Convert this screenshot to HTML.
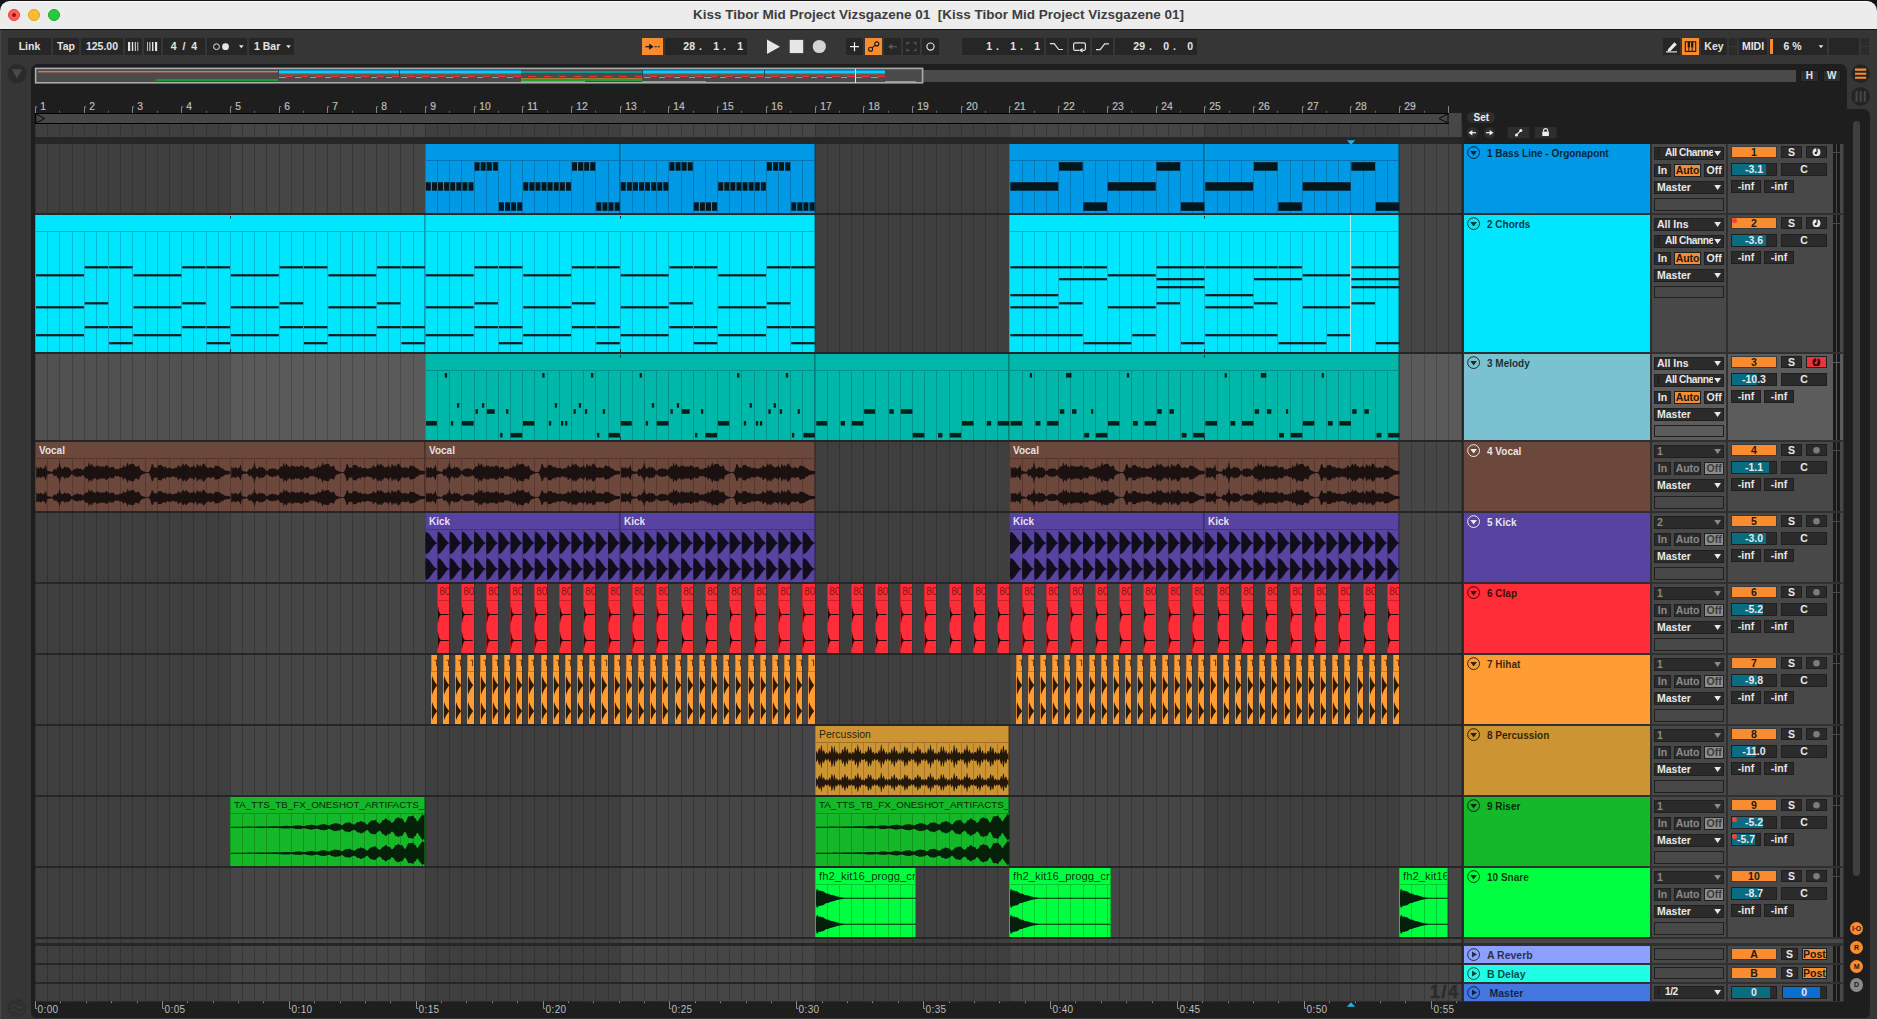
<!DOCTYPE html>
<html><head><meta charset="utf-8"><title>Ableton Live</title>
<style>
html,body{margin:0;padding:0}
body{width:1877px;height:1019px;background:#363636;position:relative;overflow:hidden;
 font-family:"Liberation Sans",sans-serif;font-size:10.5px;color:#e4e4e4}
div{position:absolute;box-sizing:border-box;white-space:nowrap;overflow:hidden}
svg{position:absolute;overflow:visible}
span{position:absolute;white-space:nowrap}
.f{background:#262626;text-align:center;line-height:17px;font-weight:bold;font-size:10.5px;color:#e4e4e4;height:17px;top:38px}
.o{background:#fa8c30;color:#1a1a1a}
.b{background:#2b2b2b;border:1px solid #1f1f1f;font-weight:bold;font-size:10.5px;line-height:10.5px;color:#e8e8e8;text-align:center}
.bd{color:#8a8a8a}
.tn{font-weight:bold;font-size:10px;line-height:12px;overflow:visible}
.cn{font-size:10.5px;line-height:14px;overflow:hidden}
.rn{font-size:10.5px;color:#bdbdbd;line-height:11px;overflow:visible}
</style></head><body>

<div style="left:0px;top:0px;width:1877px;height:12px;background:#0b131a;"></div>
<div style="left:0px;top:0px;width:1877px;height:30px;background:#161616;border-radius:10px 10px 0 0;"></div>
<div style="left:0px;top:0.7px;width:1877px;height:28.3px;background:#ececec;border-radius:10px 10px 0 0;border-top:1px solid #fbfbfb;"></div>
<div style="left:7.8px;top:8.8px;width:12.4px;height:12.4px;background:#fe5f57;border-radius:50%;border:0.5px solid #e0443e;"></div>
<div style="left:27.8px;top:8.8px;width:12.4px;height:12.4px;background:#febc2e;border-radius:50%;border:0.5px solid #dea123;"></div>
<div style="left:47.8px;top:8.8px;width:12.4px;height:12.4px;background:#28c840;border-radius:50%;border:0.5px solid #1aab29;"></div>
<div style="left:12px;top:13px;width:4px;height:4px;background:#8c1a10;border-radius:50%;"></div>
<div style="left:0;top:0;width:1877px;height:29px;line-height:30px;text-align:center;font-size:13.5px;font-weight:bold;color:#3d3d3d;white-space:pre">Kiss Tibor Mid Project Vizsgazene 01  [Kiss Tibor Mid Project Vizsgazene 01]</div>
<div class="f" style="left:8px;width:43px;">Link</div>
<div class="f" style="left:53px;width:26px;">Tap</div>
<div class="f" style="left:81px;width:42px;">125.00</div>
<div class="f" style="left:125px;width:17px;"><svg width="17" height="17" viewBox="0 0 17 17" style="left:0;top:0"><rect x="3" y="4" width="2.2" height="9" fill="#e4e4e4"/><rect x="6.800000000000001" y="4" width="1.4" height="9" fill="#e4e4e4"/><rect x="9.8" y="4" width="1" height="9" fill="#e4e4e4"/><rect x="12.4" y="4" width="0.8" height="9" fill="#e4e4e4"/></svg></div>
<div class="f" style="left:144px;width:17px;"><svg width="17" height="17" viewBox="0 0 17 17" style="left:0;top:0"><rect x="3" y="4" width="0.8" height="9" fill="#e4e4e4"/><rect x="5.4" y="4" width="1" height="9" fill="#e4e4e4"/><rect x="8.0" y="4" width="1.4" height="9" fill="#e4e4e4"/><rect x="11.0" y="4" width="2.2" height="9" fill="#e4e4e4"/></svg></div>
<div class="f" style="left:163px;width:42px;">4&nbsp; / &nbsp;4</div>
<div class="f" style="left:207px;width:40px;"><svg width="40" height="17" style="left:0;top:0"><circle cx="9.5" cy="8.7" r="2.9" fill="none" stroke="#e4e4e4" stroke-width="1"/><circle cx="18.5" cy="8.7" r="3.4" fill="#e4e4e4"/><path d="M32 7.3h4.6l-2.3 3z" fill="#e4e4e4"/></svg></div>
<div class="f" style="left:249px;width:45px;"><span style="left:5px;top:0">1 Bar</span><svg width="45" height="17" style="left:0;top:0"><path d="M37.2 7.3h4.6l-2.3 3z" fill="#e4e4e4"/></svg></div>
<div class="f o" style="left:642px;width:21px;"><svg width="21" height="17" style="left:0;top:0"><path d="M3.5 8.7h6.5" stroke="#1a1a1a" stroke-width="1.3"/><path d="M7.2 5.6l4.4 3.1-4.4 3.1z" fill="#1a1a1a"/><path d="M12.6 8.7h2.2M15.8 8.7h2" stroke="#1a1a1a" stroke-width="1.1"/></svg></div>
<div class="f" style="left:665px;width:82px;"><span style="right:52px;top:0">28</span><span style="right:28px;top:0">1</span><span style="right:4px;top:0">1</span><span style="right:45px;top:0">.</span><span style="right:21px;top:0">.</span></div>
<svg width="80" height="20" style="left:760px;top:36px"><path d="M7 3.4v14.6l13-7.3z" fill="#e6e6e6"/><rect x="29.7" y="3.9" width="13.5" height="13.2" fill="#e6e6e6"/><circle cx="59.3" cy="10.5" r="6.6" fill="#d4d4d4"/></svg>
<div class="f" style="left:846px;width:17px;"><svg width="17" height="17" style="left:0;top:0"><path d="M8.5 4.2v9M4 8.7h9" stroke="#f0f0f0" stroke-width="1.2"/></svg></div>
<div class="f o" style="left:865px;width:17px;"><svg width="17" height="17" style="left:0;top:0"><circle cx="5.6" cy="11.2" r="2" fill="none" stroke="#1a1a1a" stroke-width="1.1"/><circle cx="11.8" cy="5.9" r="2" fill="none" stroke="#1a1a1a" stroke-width="1.1"/><path d="M7.1 9.9l3.2-2.7" stroke="#1a1a1a" stroke-width="1.1"/></svg></div>
<div class="f" style="left:884px;width:17px;"><svg width="17" height="17" style="left:0;top:0"><path d="M5 8.7h8" stroke="#5a5a5a" stroke-width="1.2"/><path d="M8.2 5.8L4.2 8.7l4 2.9z" fill="#5a5a5a"/></svg></div>
<div class="f" style="left:903px;width:17px;"><svg width="17" height="17" style="left:0;top:0"><path d="M4 7V4.6h2.6M10.6 4.6H13V7M13 10.4v2.4h-2.4M6.6 12.8H4v-2.4" fill="none" stroke="#5a5a5a" stroke-width="1.1"/></svg></div>
<div class="f" style="left:922px;width:17px;"><svg width="17" height="17" style="left:0;top:0"><circle cx="8.5" cy="8.6" r="3.6" fill="none" stroke="#e4e4e4" stroke-width="1.2"/></svg></div>
<div class="f" style="left:962px;width:82px;"><span style="right:52px;top:0">1</span><span style="right:28px;top:0">1</span><span style="right:4px;top:0">1</span><span style="right:45px;top:0">.</span><span style="right:21px;top:0">.</span></div>
<div class="f" style="left:1046px;width:21px;"><svg width="21" height="17" style="left:0;top:0"><path d="M4 5.7h4.2l4.5 5.8h4.2" fill="none" stroke="#e4e4e4" stroke-width="1.2"/></svg></div>
<div class="f" style="left:1069px;width:21px;"><svg width="21" height="17" style="left:0;top:0"><path d="M10 12.3H6.2a1.6 1.6 0 0 1-1.6-1.6V6.4a1.6 1.6 0 0 1 1.6-1.6h8.6a1.6 1.6 0 0 1 1.6 1.6v4.3a1.6 1.6 0 0 1-1.6 1.6h-1" fill="none" stroke="#e4e4e4" stroke-width="1.2"/><path d="M13.6 10v4.6l-3.8-2.3z" fill="#e4e4e4"/></svg></div>
<div class="f" style="left:1092px;width:21px;"><svg width="21" height="17" style="left:0;top:0"><path d="M4 11.7h4.2l4.5-5.8h4.2" fill="none" stroke="#e4e4e4" stroke-width="1.2"/></svg></div>
<div class="f" style="left:1115px;width:82px;"><span style="right:52px;top:0">29</span><span style="right:28px;top:0">0</span><span style="right:4px;top:0">0</span><span style="right:45px;top:0">.</span><span style="right:21px;top:0">.</span></div>
<div class="f" style="left:1663px;width:17px;"><svg width="17" height="17" style="left:0;top:0"><path d="M5.2 10.9l6.2-6.6 2.4 2.2-6.3 6.5-3 .8z" fill="#ececec"/><path d="M3 13.9h11" stroke="#ececec" stroke-width="1.1"/></svg></div>
<div class="f o" style="left:1682px;width:17px;"><svg width="17" height="17" style="left:0;top:0"><rect x="3.3" y="3.8" width="10.4" height="9.6" fill="none" stroke="#1a1a1a" stroke-width="1.1"/><path d="M6.8 3.8v9.6M10.2 3.8v9.6" stroke="#1a1a1a" stroke-width="0.9"/><rect x="5.7" y="3.8" width="2.2" height="5.6" fill="#1a1a1a"/><rect x="9.1" y="3.8" width="2.2" height="5.6" fill="#1a1a1a"/></svg></div>
<div class="f" style="left:1701px;width:26px;">Key</div>
<div style="left:1729px;top:38px;width:8px;height:8px;background:#2b2b2b;"></div>
<div style="left:1729px;top:47px;width:8px;height:8px;background:#2b2b2b;"></div>
<div class="f" style="left:1739px;width:28px;">MIDI</div>
<div class="f" style="left:1769px;width:58px;"><div style="left:1px;top:1px;width:3px;height:15px;background:#fa8c30"></div><span style="left:14.5px;top:0">6 %</span><svg width="58" height="17" style="left:0;top:0"><path d="M49.7 7.3h4.6l-2.3 3z" fill="#e4e4e4"/></svg></div>
<div class="f" style="left:1829px;width:30px;"></div>
<div style="left:1861px;top:38px;width:8px;height:8px;background:#2b2b2b;"></div>
<div style="left:1861px;top:47px;width:8px;height:8px;background:#2b2b2b;"></div>
<div style="left:31px;top:64px;width:1816px;height:953.6px;background:#1e1e1e;border-radius:7px 7px 5px 5px;"></div>
<div style="left:60px;top:109px;width:1810px;height:908.6px;background:#1e1e1e;border-radius:7px 7px 5px 5px;"></div>
<svg width="22" height="22" style="left:6px;top:63px"><circle cx="11" cy="10.6" r="9.6" fill="#2b2b2b"/><path d="M5.9 6.3h10.2l-5.1 9.2z" fill="#4a4a4a"/></svg>
<svg width="22" height="22" style="left:6.4px;top:997.3px"><circle cx="11" cy="11" r="9.5" fill="#303030"/><path d="M5.4 9.4q2.8-3 5.6 0t5.6 0M5.4 14q2.8-3 5.6 0t5.6 0" fill="none" stroke="#3e3e3e" stroke-width="1.1"/></svg>
<div style="left:0px;top:30px;width:1px;height:989px;background:#484848;"></div>
<svg width="22" height="48" style="left:1850px;top:62px"><circle cx="10.6" cy="11.6" r="9.4" fill="#242424"/><path d="M5 7.6h11.2M5 11.7h11.2M5 15.8h11.2" stroke="#fa8c30" stroke-width="2.1"/><circle cx="10.6" cy="34.3" r="9.4" fill="#242424"/><path d="M6.6 29v10.8M10.7 29v10.8M14.8 29v10.8" stroke="#444" stroke-width="2.2"/></svg>
<div style="left:35px;top:70.3px;width:1761px;height:11.7px;background:#4a4a4a;"></div>
<div style="left:1800px;top:69.8px;width:18.5px;height:12px;background:#2e2e2e;border:1px solid #1a1a1a;text-align:center;font-weight:bold;font-size:10px;line-height:10.5px;color:#e4e4e4">H</div>
<div style="left:1822.5px;top:69.8px;width:18.5px;height:12px;background:#2e2e2e;border:1px solid #1a1a1a;text-align:center;font-weight:bold;font-size:10px;line-height:10.5px;color:#e4e4e4">W</div>
<svg width="890" height="17" style="left:34px;top:67px" shape-rendering="crispEdges"><rect x="1.6" y="1.4" width="887" height="14.4" fill="#4b4b4b" stroke="#ababab" stroke-width="1.6" shape-rendering="auto"/><rect x="4.0" y="3.5" width="239.8" height="1.3" fill="#12c4dc"/><rect x="4.0" y="5.1" width="239.8" height="1" fill="#8a5a4a"/><rect x="122.4" y="12.3" width="121.4" height="1.2" fill="#1a9a2c"/><rect x="243.9" y="2.5" width="242.9" height="1.6" fill="#0a8fd6"/><rect x="243.9" y="3.9" width="242.9" height="2.6" fill="#10cfe8"/><rect x="243.9" y="6.3" width="242.9" height="0.9" fill="#0aa89c"/><rect x="243.9" y="7.2" width="242.9" height="0.8" fill="#7a5246"/><rect x="243.9" y="7.9" width="242.9" height="1.0" fill="#5c46a8"/><rect x="608.2" y="2.5" width="242.9" height="1.6" fill="#0a8fd6"/><rect x="608.2" y="3.9" width="242.9" height="2.6" fill="#10cfe8"/><rect x="608.2" y="6.3" width="242.9" height="0.9" fill="#0aa89c"/><rect x="608.2" y="7.2" width="242.9" height="0.8" fill="#7a5246"/><rect x="608.2" y="7.9" width="242.9" height="1.0" fill="#5c46a8"/><rect x="486.8" y="3.5" width="121.4" height="2.4" fill="#0a9a8e"/><rect x="486.8" y="10.5" width="121.4" height="1.8" fill="#9a8230"/><rect x="486.8" y="12.2" width="121.4" height="1.3" fill="#2a9a30"/><rect x="486.8" y="13.5" width="63.8" height="1.3" fill="#10e848"/><rect x="608.2" y="13.5" width="63.8" height="1.3" fill="#10e848"/><rect x="851.1" y="13.5" width="30.4" height="1.3" fill="#10e848"/><rect x="251.5" y="8.7" width="7.6" height="1.2" fill="#f0323a"/><rect x="266.6" y="8.7" width="7.6" height="1.2" fill="#f0323a"/><rect x="281.8" y="8.7" width="7.6" height="1.2" fill="#f0323a"/><rect x="297.0" y="8.7" width="7.6" height="1.2" fill="#f0323a"/><rect x="312.2" y="8.7" width="7.6" height="1.2" fill="#f0323a"/><rect x="327.4" y="8.7" width="7.6" height="1.2" fill="#f0323a"/><rect x="342.6" y="8.7" width="7.6" height="1.2" fill="#f0323a"/><rect x="357.7" y="8.7" width="7.6" height="1.2" fill="#f0323a"/><rect x="372.9" y="8.7" width="7.6" height="1.2" fill="#f0323a"/><rect x="388.1" y="8.7" width="7.6" height="1.2" fill="#f0323a"/><rect x="403.3" y="8.7" width="7.6" height="1.2" fill="#f0323a"/><rect x="418.4" y="8.7" width="7.6" height="1.2" fill="#f0323a"/><rect x="433.6" y="8.7" width="7.6" height="1.2" fill="#f0323a"/><rect x="448.8" y="8.7" width="7.6" height="1.2" fill="#f0323a"/><rect x="464.0" y="8.7" width="7.6" height="1.2" fill="#f0323a"/><rect x="479.2" y="8.7" width="7.6" height="1.2" fill="#f0323a"/><rect x="494.3" y="8.7" width="7.6" height="1.2" fill="#f0323a"/><rect x="509.5" y="8.7" width="7.6" height="1.2" fill="#f0323a"/><rect x="524.7" y="8.7" width="7.6" height="1.2" fill="#f0323a"/><rect x="539.9" y="8.7" width="7.6" height="1.2" fill="#f0323a"/><rect x="555.1" y="8.7" width="7.6" height="1.2" fill="#f0323a"/><rect x="570.2" y="8.7" width="7.6" height="1.2" fill="#f0323a"/><rect x="585.4" y="8.7" width="7.6" height="1.2" fill="#f0323a"/><rect x="600.6" y="8.7" width="7.6" height="1.2" fill="#f0323a"/><rect x="615.8" y="8.7" width="7.6" height="1.2" fill="#f0323a"/><rect x="631.0" y="8.7" width="7.6" height="1.2" fill="#f0323a"/><rect x="646.1" y="8.7" width="7.6" height="1.2" fill="#f0323a"/><rect x="661.3" y="8.7" width="7.6" height="1.2" fill="#f0323a"/><rect x="676.5" y="8.7" width="7.6" height="1.2" fill="#f0323a"/><rect x="691.7" y="8.7" width="7.6" height="1.2" fill="#f0323a"/><rect x="706.9" y="8.7" width="7.6" height="1.2" fill="#f0323a"/><rect x="722.0" y="8.7" width="7.6" height="1.2" fill="#f0323a"/><rect x="737.2" y="8.7" width="7.6" height="1.2" fill="#f0323a"/><rect x="752.4" y="8.7" width="7.6" height="1.2" fill="#f0323a"/><rect x="767.6" y="8.7" width="7.6" height="1.2" fill="#f0323a"/><rect x="782.8" y="8.7" width="7.6" height="1.2" fill="#f0323a"/><rect x="797.9" y="8.7" width="7.6" height="1.2" fill="#f0323a"/><rect x="813.1" y="8.7" width="7.6" height="1.2" fill="#f0323a"/><rect x="828.3" y="8.7" width="7.6" height="1.2" fill="#f0323a"/><rect x="843.5" y="8.7" width="7.6" height="1.2" fill="#f0323a"/><rect x="245.4" y="10.1" width="6.1" height="1.2" fill="#e89030"/><rect x="260.6" y="10.1" width="6.1" height="1.2" fill="#e89030"/><rect x="275.8" y="10.1" width="6.1" height="1.2" fill="#e89030"/><rect x="290.9" y="10.1" width="6.1" height="1.2" fill="#e89030"/><rect x="306.1" y="10.1" width="6.1" height="1.2" fill="#e89030"/><rect x="321.3" y="10.1" width="6.1" height="1.2" fill="#e89030"/><rect x="336.5" y="10.1" width="6.1" height="1.2" fill="#e89030"/><rect x="351.7" y="10.1" width="6.1" height="1.2" fill="#e89030"/><rect x="366.8" y="10.1" width="6.1" height="1.2" fill="#e89030"/><rect x="382.0" y="10.1" width="6.1" height="1.2" fill="#e89030"/><rect x="397.2" y="10.1" width="6.1" height="1.2" fill="#e89030"/><rect x="412.4" y="10.1" width="6.1" height="1.2" fill="#e89030"/><rect x="427.6" y="10.1" width="6.1" height="1.2" fill="#e89030"/><rect x="442.7" y="10.1" width="6.1" height="1.2" fill="#e89030"/><rect x="457.9" y="10.1" width="6.1" height="1.2" fill="#e89030"/><rect x="473.1" y="10.1" width="6.1" height="1.2" fill="#e89030"/><rect x="609.7" y="10.1" width="6.1" height="1.2" fill="#e89030"/><rect x="624.9" y="10.1" width="6.1" height="1.2" fill="#e89030"/><rect x="640.1" y="10.1" width="6.1" height="1.2" fill="#e89030"/><rect x="655.3" y="10.1" width="6.1" height="1.2" fill="#e89030"/><rect x="670.4" y="10.1" width="6.1" height="1.2" fill="#e89030"/><rect x="685.6" y="10.1" width="6.1" height="1.2" fill="#e89030"/><rect x="700.8" y="10.1" width="6.1" height="1.2" fill="#e89030"/><rect x="716.0" y="10.1" width="6.1" height="1.2" fill="#e89030"/><rect x="731.2" y="10.1" width="6.1" height="1.2" fill="#e89030"/><rect x="746.3" y="10.1" width="6.1" height="1.2" fill="#e89030"/><rect x="761.5" y="10.1" width="6.1" height="1.2" fill="#e89030"/><rect x="776.7" y="10.1" width="6.1" height="1.2" fill="#e89030"/><rect x="791.9" y="10.1" width="6.1" height="1.2" fill="#e89030"/><rect x="807.1" y="10.1" width="6.1" height="1.2" fill="#e89030"/><rect x="822.2" y="10.1" width="6.1" height="1.2" fill="#e89030"/><rect x="837.4" y="10.1" width="6.1" height="1.2" fill="#e89030"/><rect x="243.9" y="2.5" width="1" height="6" fill="#1a4a60"/><rect x="365.3" y="2.5" width="1" height="6" fill="#1a4a60"/><rect x="608.2" y="2.5" width="1" height="6" fill="#1a4a60"/><rect x="729.6" y="2.5" width="1" height="6" fill="#1a4a60"/><rect x="820.7" y="2" width="1" height="13.5" fill="#e8e8e8"/></svg>
<svg width="1420" height="14" style="left:35px;top:100px"><path d="M0.5 13V6.7h1.7" fill="none" stroke="#858585" stroke-width="1"/><rect x="24" y="11.2" width="1" height="1.3" fill="#858585"/><path d="M49.5 13V6.7h1.7" fill="none" stroke="#858585" stroke-width="1"/><rect x="73" y="11.2" width="1" height="1.3" fill="#858585"/><path d="M97.5 13V6.7h1.7" fill="none" stroke="#858585" stroke-width="1"/><rect x="122" y="11.2" width="1" height="1.3" fill="#858585"/><path d="M146.5 13V6.7h1.7" fill="none" stroke="#858585" stroke-width="1"/><rect x="171" y="11.2" width="1" height="1.3" fill="#858585"/><path d="M195.5 13V6.7h1.7" fill="none" stroke="#858585" stroke-width="1"/><rect x="219" y="11.2" width="1" height="1.3" fill="#858585"/><path d="M244.5 13V6.7h1.7" fill="none" stroke="#858585" stroke-width="1"/><rect x="268" y="11.2" width="1" height="1.3" fill="#858585"/><path d="M292.5 13V6.7h1.7" fill="none" stroke="#858585" stroke-width="1"/><rect x="317" y="11.2" width="1" height="1.3" fill="#858585"/><path d="M341.5 13V6.7h1.7" fill="none" stroke="#858585" stroke-width="1"/><rect x="365" y="11.2" width="1" height="1.3" fill="#858585"/><path d="M390.5 13V6.7h1.7" fill="none" stroke="#858585" stroke-width="1"/><rect x="414" y="11.2" width="1" height="1.3" fill="#858585"/><path d="M439.5 13V6.7h1.7" fill="none" stroke="#858585" stroke-width="1"/><rect x="463" y="11.2" width="1" height="1.3" fill="#858585"/><path d="M487.5 13V6.7h1.7" fill="none" stroke="#858585" stroke-width="1"/><rect x="512" y="11.2" width="1" height="1.3" fill="#858585"/><path d="M536.5 13V6.7h1.7" fill="none" stroke="#858585" stroke-width="1"/><rect x="560" y="11.2" width="1" height="1.3" fill="#858585"/><path d="M585.5 13V6.7h1.7" fill="none" stroke="#858585" stroke-width="1"/><rect x="609" y="11.2" width="1" height="1.3" fill="#858585"/><path d="M633.5 13V6.7h1.7" fill="none" stroke="#858585" stroke-width="1"/><rect x="658" y="11.2" width="1" height="1.3" fill="#858585"/><path d="M682.5 13V6.7h1.7" fill="none" stroke="#858585" stroke-width="1"/><rect x="706" y="11.2" width="1" height="1.3" fill="#858585"/><path d="M731.5 13V6.7h1.7" fill="none" stroke="#858585" stroke-width="1"/><rect x="755" y="11.2" width="1" height="1.3" fill="#858585"/><path d="M780.5 13V6.7h1.7" fill="none" stroke="#858585" stroke-width="1"/><rect x="804" y="11.2" width="1" height="1.3" fill="#858585"/><path d="M828.5 13V6.7h1.7" fill="none" stroke="#858585" stroke-width="1"/><rect x="853" y="11.2" width="1" height="1.3" fill="#858585"/><path d="M877.5 13V6.7h1.7" fill="none" stroke="#858585" stroke-width="1"/><rect x="901" y="11.2" width="1" height="1.3" fill="#858585"/><path d="M926.5 13V6.7h1.7" fill="none" stroke="#858585" stroke-width="1"/><rect x="950" y="11.2" width="1" height="1.3" fill="#858585"/><path d="M974.5 13V6.7h1.7" fill="none" stroke="#858585" stroke-width="1"/><rect x="999" y="11.2" width="1" height="1.3" fill="#858585"/><path d="M1023.5 13V6.7h1.7" fill="none" stroke="#858585" stroke-width="1"/><rect x="1048" y="11.2" width="1" height="1.3" fill="#858585"/><path d="M1072.5 13V6.7h1.7" fill="none" stroke="#858585" stroke-width="1"/><rect x="1096" y="11.2" width="1" height="1.3" fill="#858585"/><path d="M1121.5 13V6.7h1.7" fill="none" stroke="#858585" stroke-width="1"/><rect x="1145" y="11.2" width="1" height="1.3" fill="#858585"/><path d="M1169.5 13V6.7h1.7" fill="none" stroke="#858585" stroke-width="1"/><rect x="1194" y="11.2" width="1" height="1.3" fill="#858585"/><path d="M1218.5 13V6.7h1.7" fill="none" stroke="#858585" stroke-width="1"/><rect x="1242" y="11.2" width="1" height="1.3" fill="#858585"/><path d="M1267.5 13V6.7h1.7" fill="none" stroke="#858585" stroke-width="1"/><rect x="1291" y="11.2" width="1" height="1.3" fill="#858585"/><path d="M1315.5 13V6.7h1.7" fill="none" stroke="#858585" stroke-width="1"/><rect x="1340" y="11.2" width="1" height="1.3" fill="#858585"/><path d="M1364.5 13V6.7h1.7" fill="none" stroke="#858585" stroke-width="1"/><rect x="1389" y="11.2" width="1" height="1.3" fill="#858585"/><rect x="1413" y="6" width="1" height="7" fill="#858585"/></svg>
<span class="rn" style="left:40.2px;top:101.4px;font-size:10.3px;-webkit-text-stroke:0.2px #bdbdbd">1</span>
<span class="rn" style="left:89.2px;top:101.4px;font-size:10.3px;-webkit-text-stroke:0.2px #bdbdbd">2</span>
<span class="rn" style="left:137.2px;top:101.4px;font-size:10.3px;-webkit-text-stroke:0.2px #bdbdbd">3</span>
<span class="rn" style="left:186.2px;top:101.4px;font-size:10.3px;-webkit-text-stroke:0.2px #bdbdbd">4</span>
<span class="rn" style="left:235.2px;top:101.4px;font-size:10.3px;-webkit-text-stroke:0.2px #bdbdbd">5</span>
<span class="rn" style="left:284.2px;top:101.4px;font-size:10.3px;-webkit-text-stroke:0.2px #bdbdbd">6</span>
<span class="rn" style="left:332.2px;top:101.4px;font-size:10.3px;-webkit-text-stroke:0.2px #bdbdbd">7</span>
<span class="rn" style="left:381.2px;top:101.4px;font-size:10.3px;-webkit-text-stroke:0.2px #bdbdbd">8</span>
<span class="rn" style="left:430.2px;top:101.4px;font-size:10.3px;-webkit-text-stroke:0.2px #bdbdbd">9</span>
<span class="rn" style="left:479.2px;top:101.4px;font-size:10.3px;-webkit-text-stroke:0.2px #bdbdbd">10</span>
<span class="rn" style="left:527.2px;top:101.4px;font-size:10.3px;-webkit-text-stroke:0.2px #bdbdbd">11</span>
<span class="rn" style="left:576.2px;top:101.4px;font-size:10.3px;-webkit-text-stroke:0.2px #bdbdbd">12</span>
<span class="rn" style="left:625.2px;top:101.4px;font-size:10.3px;-webkit-text-stroke:0.2px #bdbdbd">13</span>
<span class="rn" style="left:673.2px;top:101.4px;font-size:10.3px;-webkit-text-stroke:0.2px #bdbdbd">14</span>
<span class="rn" style="left:722.2px;top:101.4px;font-size:10.3px;-webkit-text-stroke:0.2px #bdbdbd">15</span>
<span class="rn" style="left:771.2px;top:101.4px;font-size:10.3px;-webkit-text-stroke:0.2px #bdbdbd">16</span>
<span class="rn" style="left:820.2px;top:101.4px;font-size:10.3px;-webkit-text-stroke:0.2px #bdbdbd">17</span>
<span class="rn" style="left:868.2px;top:101.4px;font-size:10.3px;-webkit-text-stroke:0.2px #bdbdbd">18</span>
<span class="rn" style="left:917.2px;top:101.4px;font-size:10.3px;-webkit-text-stroke:0.2px #bdbdbd">19</span>
<span class="rn" style="left:966.2px;top:101.4px;font-size:10.3px;-webkit-text-stroke:0.2px #bdbdbd">20</span>
<span class="rn" style="left:1014.2px;top:101.4px;font-size:10.3px;-webkit-text-stroke:0.2px #bdbdbd">21</span>
<span class="rn" style="left:1063.2px;top:101.4px;font-size:10.3px;-webkit-text-stroke:0.2px #bdbdbd">22</span>
<span class="rn" style="left:1112.2px;top:101.4px;font-size:10.3px;-webkit-text-stroke:0.2px #bdbdbd">23</span>
<span class="rn" style="left:1161.2px;top:101.4px;font-size:10.3px;-webkit-text-stroke:0.2px #bdbdbd">24</span>
<span class="rn" style="left:1209.2px;top:101.4px;font-size:10.3px;-webkit-text-stroke:0.2px #bdbdbd">25</span>
<span class="rn" style="left:1258.2px;top:101.4px;font-size:10.3px;-webkit-text-stroke:0.2px #bdbdbd">26</span>
<span class="rn" style="left:1307.2px;top:101.4px;font-size:10.3px;-webkit-text-stroke:0.2px #bdbdbd">27</span>
<span class="rn" style="left:1355.2px;top:101.4px;font-size:10.3px;-webkit-text-stroke:0.2px #bdbdbd">28</span>
<span class="rn" style="left:1404.2px;top:101.4px;font-size:10.3px;-webkit-text-stroke:0.2px #bdbdbd">29</span>
<div style="left:35px;top:113px;width:1414px;height:11px;background:#000;"></div>
<div style="left:35.5px;top:114px;width:1413px;height:9px;background:#474747;"></div>
<svg width="1414" height="11" style="left:35px;top:113px"><path d="M0.8 0.8l9 4.7-9 4.7z" fill="none" stroke="#050505" stroke-width="1"/><path d="M1413 0.8l-9 4.7 9 4.7z" fill="none" stroke="#050505" stroke-width="1"/></svg>
<div style="left:35px;top:124px;width:1428px;height:878px;background:#2a2a2a;"></div>
<div style="left:35px;top:124px;width:1428px;height:20px;background:#272727;"></div>
<div style="left:35px;top:124px;width:1414px;height:13.3px;background:#464646;"></div><div style="left:35px;top:124px;width:195px;height:13.3px;background:#3f3f3f;"></div><div style="left:425px;top:124px;width:195px;height:13.3px;background:#3f3f3f;"></div><div style="left:815px;top:124px;width:194px;height:13.3px;background:#3f3f3f;"></div><div style="left:1204px;top:124px;width:195px;height:13.3px;background:#3f3f3f;"></div>
<div style="left:35px;top:144px;width:1414px;height:69px;background:#464646;"></div><div style="left:35px;top:144px;width:195px;height:69px;background:#3f3f3f;"></div><div style="left:425px;top:144px;width:195px;height:69px;background:#3f3f3f;"></div><div style="left:815px;top:144px;width:194px;height:69px;background:#3f3f3f;"></div><div style="left:1204px;top:144px;width:195px;height:69px;background:#3f3f3f;"></div>
<div style="left:1449px;top:144px;width:13.4px;height:69px;background:#464646;"></div>
<div style="left:35px;top:215px;width:1414px;height:137px;background:#464646;"></div><div style="left:35px;top:215px;width:195px;height:137px;background:#3f3f3f;"></div><div style="left:425px;top:215px;width:195px;height:137px;background:#3f3f3f;"></div><div style="left:815px;top:215px;width:194px;height:137px;background:#3f3f3f;"></div><div style="left:1204px;top:215px;width:195px;height:137px;background:#3f3f3f;"></div>
<div style="left:1449px;top:215px;width:13.4px;height:137px;background:#464646;"></div>
<div style="left:35px;top:354px;width:1414px;height:86px;background:#5a5a5a;"></div><div style="left:35px;top:354px;width:195px;height:86px;background:#515151;"></div><div style="left:425px;top:354px;width:195px;height:86px;background:#515151;"></div><div style="left:815px;top:354px;width:194px;height:86px;background:#515151;"></div><div style="left:1204px;top:354px;width:195px;height:86px;background:#515151;"></div>
<div style="left:1449px;top:354px;width:13.4px;height:86px;background:#5a5a5a;"></div>
<div style="left:35px;top:442px;width:1414px;height:69px;background:#464646;"></div><div style="left:35px;top:442px;width:195px;height:69px;background:#3f3f3f;"></div><div style="left:425px;top:442px;width:195px;height:69px;background:#3f3f3f;"></div><div style="left:815px;top:442px;width:194px;height:69px;background:#3f3f3f;"></div><div style="left:1204px;top:442px;width:195px;height:69px;background:#3f3f3f;"></div>
<div style="left:1449px;top:442px;width:13.4px;height:69px;background:#464646;"></div>
<div style="left:35px;top:513px;width:1414px;height:69px;background:#464646;"></div><div style="left:35px;top:513px;width:195px;height:69px;background:#3f3f3f;"></div><div style="left:425px;top:513px;width:195px;height:69px;background:#3f3f3f;"></div><div style="left:815px;top:513px;width:194px;height:69px;background:#3f3f3f;"></div><div style="left:1204px;top:513px;width:195px;height:69px;background:#3f3f3f;"></div>
<div style="left:1449px;top:513px;width:13.4px;height:69px;background:#464646;"></div>
<div style="left:35px;top:584px;width:1414px;height:69px;background:#464646;"></div><div style="left:35px;top:584px;width:195px;height:69px;background:#3f3f3f;"></div><div style="left:425px;top:584px;width:195px;height:69px;background:#3f3f3f;"></div><div style="left:815px;top:584px;width:194px;height:69px;background:#3f3f3f;"></div><div style="left:1204px;top:584px;width:195px;height:69px;background:#3f3f3f;"></div>
<div style="left:1449px;top:584px;width:13.4px;height:69px;background:#464646;"></div>
<div style="left:35px;top:655px;width:1414px;height:69px;background:#464646;"></div><div style="left:35px;top:655px;width:195px;height:69px;background:#3f3f3f;"></div><div style="left:425px;top:655px;width:195px;height:69px;background:#3f3f3f;"></div><div style="left:815px;top:655px;width:194px;height:69px;background:#3f3f3f;"></div><div style="left:1204px;top:655px;width:195px;height:69px;background:#3f3f3f;"></div>
<div style="left:1449px;top:655px;width:13.4px;height:69px;background:#464646;"></div>
<div style="left:35px;top:726px;width:1414px;height:69px;background:#464646;"></div><div style="left:35px;top:726px;width:195px;height:69px;background:#3f3f3f;"></div><div style="left:425px;top:726px;width:195px;height:69px;background:#3f3f3f;"></div><div style="left:815px;top:726px;width:194px;height:69px;background:#3f3f3f;"></div><div style="left:1204px;top:726px;width:195px;height:69px;background:#3f3f3f;"></div>
<div style="left:1449px;top:726px;width:13.4px;height:69px;background:#464646;"></div>
<div style="left:35px;top:797px;width:1414px;height:69px;background:#464646;"></div><div style="left:35px;top:797px;width:195px;height:69px;background:#3f3f3f;"></div><div style="left:425px;top:797px;width:195px;height:69px;background:#3f3f3f;"></div><div style="left:815px;top:797px;width:194px;height:69px;background:#3f3f3f;"></div><div style="left:1204px;top:797px;width:195px;height:69px;background:#3f3f3f;"></div>
<div style="left:1449px;top:797px;width:13.4px;height:69px;background:#464646;"></div>
<div style="left:35px;top:868px;width:1414px;height:69px;background:#464646;"></div><div style="left:35px;top:868px;width:195px;height:69px;background:#3f3f3f;"></div><div style="left:425px;top:868px;width:195px;height:69px;background:#3f3f3f;"></div><div style="left:815px;top:868px;width:194px;height:69px;background:#3f3f3f;"></div><div style="left:1204px;top:868px;width:195px;height:69px;background:#3f3f3f;"></div>
<div style="left:1449px;top:868px;width:13.4px;height:69px;background:#464646;"></div>
<div style="left:35px;top:939.2px;width:1414px;height:3.6px;background:#464646;"></div><div style="left:35px;top:939.2px;width:195px;height:3.6px;background:#3f3f3f;"></div><div style="left:425px;top:939.2px;width:195px;height:3.6px;background:#3f3f3f;"></div><div style="left:815px;top:939.2px;width:194px;height:3.6px;background:#3f3f3f;"></div><div style="left:1204px;top:939.2px;width:195px;height:3.6px;background:#3f3f3f;"></div>
<div style="left:1449px;top:939.2px;width:13.4px;height:3.6px;background:#464646;"></div>
<div style="left:35px;top:946px;width:1414px;height:17px;background:#464646;"></div><div style="left:35px;top:946px;width:195px;height:17px;background:#3f3f3f;"></div><div style="left:425px;top:946px;width:195px;height:17px;background:#3f3f3f;"></div><div style="left:815px;top:946px;width:194px;height:17px;background:#3f3f3f;"></div><div style="left:1204px;top:946px;width:195px;height:17px;background:#3f3f3f;"></div>
<div style="left:1449px;top:946px;width:13.4px;height:17px;background:#464646;"></div>
<div style="left:35px;top:965px;width:1414px;height:17px;background:#464646;"></div><div style="left:35px;top:965px;width:195px;height:17px;background:#3f3f3f;"></div><div style="left:425px;top:965px;width:195px;height:17px;background:#3f3f3f;"></div><div style="left:815px;top:965px;width:194px;height:17px;background:#3f3f3f;"></div><div style="left:1204px;top:965px;width:195px;height:17px;background:#3f3f3f;"></div>
<div style="left:1449px;top:965px;width:13.4px;height:17px;background:#464646;"></div>
<div style="left:35px;top:984px;width:1414px;height:17px;background:#464646;"></div><div style="left:35px;top:984px;width:195px;height:17px;background:#3f3f3f;"></div><div style="left:425px;top:984px;width:195px;height:17px;background:#3f3f3f;"></div><div style="left:815px;top:984px;width:194px;height:17px;background:#3f3f3f;"></div><div style="left:1204px;top:984px;width:195px;height:17px;background:#3f3f3f;"></div>
<div style="left:1449px;top:984px;width:13.4px;height:17px;background:#464646;"></div>
<div style="left:425px;top:144px;width:195px;height:69px;background:#0099e5;"></div><div style="left:620px;top:144px;width:195px;height:69px;background:#0099e5;"></div><div style="left:1009px;top:144px;width:195px;height:69px;background:#0099e5;"></div><div style="left:1204px;top:144px;width:195px;height:69px;background:#0099e5;"></div><div style="left:35px;top:215px;width:390px;height:137px;background:#00e6ff;"></div><div style="left:425px;top:215px;width:390px;height:137px;background:#00e6ff;"></div><div style="left:1009px;top:215px;width:390px;height:137px;background:#00e6ff;"></div><div style="left:425px;top:354px;width:390px;height:86px;background:#00b8a9;"></div><div style="left:815px;top:354px;width:194px;height:86px;background:#00b8a9;"></div><div style="left:1009px;top:354px;width:390px;height:86px;background:#00b8a9;"></div><div style="left:35px;top:442px;width:390px;height:69px;background:#6c473b;"></div><div style="left:425px;top:442px;width:390px;height:69px;background:#6c473b;"></div><div style="left:1009px;top:442px;width:390px;height:69px;background:#6c473b;"></div><div style="left:425px;top:513px;width:195px;height:69px;background:#5843a0;"></div><div style="left:620px;top:513px;width:195px;height:69px;background:#5843a0;"></div><div style="left:1009px;top:513px;width:195px;height:69px;background:#5843a0;"></div><div style="left:1204px;top:513px;width:195px;height:69px;background:#5843a0;"></div><div style="left:437px;top:584px;width:12px;height:69px;background:#ff2d37;"></div><div style="left:461px;top:584px;width:13px;height:69px;background:#ff2d37;"></div><div style="left:486px;top:584px;width:12px;height:69px;background:#ff2d37;"></div><div style="left:510px;top:584px;width:12px;height:69px;background:#ff2d37;"></div><div style="left:534px;top:584px;width:13px;height:69px;background:#ff2d37;"></div><div style="left:559px;top:584px;width:12px;height:69px;background:#ff2d37;"></div><div style="left:583px;top:584px;width:12px;height:69px;background:#ff2d37;"></div><div style="left:608px;top:584px;width:12px;height:69px;background:#ff2d37;"></div><div style="left:632px;top:584px;width:12px;height:69px;background:#ff2d37;"></div><div style="left:656px;top:584px;width:12px;height:69px;background:#ff2d37;"></div><div style="left:681px;top:584px;width:12px;height:69px;background:#ff2d37;"></div><div style="left:705px;top:584px;width:12px;height:69px;background:#ff2d37;"></div><div style="left:729px;top:584px;width:12px;height:69px;background:#ff2d37;"></div><div style="left:754px;top:584px;width:12px;height:69px;background:#ff2d37;"></div><div style="left:778px;top:584px;width:12px;height:69px;background:#ff2d37;"></div><div style="left:802px;top:584px;width:13px;height:69px;background:#ff2d37;"></div><div style="left:827px;top:584px;width:12px;height:69px;background:#ff2d37;"></div><div style="left:851px;top:584px;width:12px;height:69px;background:#ff2d37;"></div><div style="left:875px;top:584px;width:13px;height:69px;background:#ff2d37;"></div><div style="left:900px;top:584px;width:12px;height:69px;background:#ff2d37;"></div><div style="left:924px;top:584px;width:12px;height:69px;background:#ff2d37;"></div><div style="left:949px;top:584px;width:12px;height:69px;background:#ff2d37;"></div><div style="left:973px;top:584px;width:12px;height:69px;background:#ff2d37;"></div><div style="left:997px;top:584px;width:12px;height:69px;background:#ff2d37;"></div><div style="left:1022px;top:584px;width:12px;height:69px;background:#ff2d37;"></div><div style="left:1046px;top:584px;width:12px;height:69px;background:#ff2d37;"></div><div style="left:1070px;top:584px;width:13px;height:69px;background:#ff2d37;"></div><div style="left:1095px;top:584px;width:12px;height:69px;background:#ff2d37;"></div><div style="left:1119px;top:584px;width:12px;height:69px;background:#ff2d37;"></div><div style="left:1143px;top:584px;width:13px;height:69px;background:#ff2d37;"></div><div style="left:1168px;top:584px;width:12px;height:69px;background:#ff2d37;"></div><div style="left:1192px;top:584px;width:12px;height:69px;background:#ff2d37;"></div><div style="left:1217px;top:584px;width:12px;height:69px;background:#ff2d37;"></div><div style="left:1241px;top:584px;width:12px;height:69px;background:#ff2d37;"></div><div style="left:1265px;top:584px;width:12px;height:69px;background:#ff2d37;"></div><div style="left:1290px;top:584px;width:12px;height:69px;background:#ff2d37;"></div><div style="left:1314px;top:584px;width:12px;height:69px;background:#ff2d37;"></div><div style="left:1338px;top:584px;width:12px;height:69px;background:#ff2d37;"></div><div style="left:1363px;top:584px;width:12px;height:69px;background:#ff2d37;"></div><div style="left:1387px;top:584px;width:12px;height:69px;background:#ff2d37;"></div><div style="left:431px;top:655px;width:6px;height:69px;background:#ff9c33;"></div><div style="left:443px;top:655px;width:6px;height:69px;background:#ff9c33;"></div><div style="left:455px;top:655px;width:6px;height:69px;background:#ff9c33;"></div><div style="left:467px;top:655px;width:7px;height:69px;background:#ff9c33;"></div><div style="left:480px;top:655px;width:6px;height:69px;background:#ff9c33;"></div><div style="left:492px;top:655px;width:6px;height:69px;background:#ff9c33;"></div><div style="left:504px;top:655px;width:6px;height:69px;background:#ff9c33;"></div><div style="left:516px;top:655px;width:6px;height:69px;background:#ff9c33;"></div><div style="left:528px;top:655px;width:6px;height:69px;background:#ff9c33;"></div><div style="left:541px;top:655px;width:6px;height:69px;background:#ff9c33;"></div><div style="left:553px;top:655px;width:6px;height:69px;background:#ff9c33;"></div><div style="left:565px;top:655px;width:6px;height:69px;background:#ff9c33;"></div><div style="left:577px;top:655px;width:6px;height:69px;background:#ff9c33;"></div><div style="left:589px;top:655px;width:6px;height:69px;background:#ff9c33;"></div><div style="left:601px;top:655px;width:7px;height:69px;background:#ff9c33;"></div><div style="left:614px;top:655px;width:6px;height:69px;background:#ff9c33;"></div><div style="left:626px;top:655px;width:6px;height:69px;background:#ff9c33;"></div><div style="left:638px;top:655px;width:6px;height:69px;background:#ff9c33;"></div><div style="left:650px;top:655px;width:6px;height:69px;background:#ff9c33;"></div><div style="left:662px;top:655px;width:6px;height:69px;background:#ff9c33;"></div><div style="left:675px;top:655px;width:6px;height:69px;background:#ff9c33;"></div><div style="left:687px;top:655px;width:6px;height:69px;background:#ff9c33;"></div><div style="left:699px;top:655px;width:6px;height:69px;background:#ff9c33;"></div><div style="left:711px;top:655px;width:6px;height:69px;background:#ff9c33;"></div><div style="left:723px;top:655px;width:6px;height:69px;background:#ff9c33;"></div><div style="left:735px;top:655px;width:6px;height:69px;background:#ff9c33;"></div><div style="left:748px;top:655px;width:6px;height:69px;background:#ff9c33;"></div><div style="left:760px;top:655px;width:6px;height:69px;background:#ff9c33;"></div><div style="left:772px;top:655px;width:6px;height:69px;background:#ff9c33;"></div><div style="left:784px;top:655px;width:6px;height:69px;background:#ff9c33;"></div><div style="left:796px;top:655px;width:6px;height:69px;background:#ff9c33;"></div><div style="left:808px;top:655px;width:7px;height:69px;background:#ff9c33;"></div><div style="left:1016px;top:655px;width:6px;height:69px;background:#ff9c33;"></div><div style="left:1028px;top:655px;width:6px;height:69px;background:#ff9c33;"></div><div style="left:1040px;top:655px;width:6px;height:69px;background:#ff9c33;"></div><div style="left:1052px;top:655px;width:6px;height:69px;background:#ff9c33;"></div><div style="left:1064px;top:655px;width:6px;height:69px;background:#ff9c33;"></div><div style="left:1076px;top:655px;width:7px;height:69px;background:#ff9c33;"></div><div style="left:1089px;top:655px;width:6px;height:69px;background:#ff9c33;"></div><div style="left:1101px;top:655px;width:6px;height:69px;background:#ff9c33;"></div><div style="left:1113px;top:655px;width:6px;height:69px;background:#ff9c33;"></div><div style="left:1125px;top:655px;width:6px;height:69px;background:#ff9c33;"></div><div style="left:1137px;top:655px;width:6px;height:69px;background:#ff9c33;"></div><div style="left:1150px;top:655px;width:6px;height:69px;background:#ff9c33;"></div><div style="left:1162px;top:655px;width:6px;height:69px;background:#ff9c33;"></div><div style="left:1174px;top:655px;width:6px;height:69px;background:#ff9c33;"></div><div style="left:1186px;top:655px;width:6px;height:69px;background:#ff9c33;"></div><div style="left:1198px;top:655px;width:6px;height:69px;background:#ff9c33;"></div><div style="left:1210px;top:655px;width:7px;height:69px;background:#ff9c33;"></div><div style="left:1223px;top:655px;width:6px;height:69px;background:#ff9c33;"></div><div style="left:1235px;top:655px;width:6px;height:69px;background:#ff9c33;"></div><div style="left:1247px;top:655px;width:6px;height:69px;background:#ff9c33;"></div><div style="left:1259px;top:655px;width:6px;height:69px;background:#ff9c33;"></div><div style="left:1271px;top:655px;width:6px;height:69px;background:#ff9c33;"></div><div style="left:1284px;top:655px;width:6px;height:69px;background:#ff9c33;"></div><div style="left:1296px;top:655px;width:6px;height:69px;background:#ff9c33;"></div><div style="left:1308px;top:655px;width:6px;height:69px;background:#ff9c33;"></div><div style="left:1320px;top:655px;width:6px;height:69px;background:#ff9c33;"></div><div style="left:1332px;top:655px;width:6px;height:69px;background:#ff9c33;"></div><div style="left:1344px;top:655px;width:6px;height:69px;background:#ff9c33;"></div><div style="left:1357px;top:655px;width:6px;height:69px;background:#ff9c33;"></div><div style="left:1369px;top:655px;width:6px;height:69px;background:#ff9c33;"></div><div style="left:1381px;top:655px;width:6px;height:69px;background:#ff9c33;"></div><div style="left:1393px;top:655px;width:6px;height:69px;background:#ff9c33;"></div><div style="left:815px;top:726px;width:194px;height:69px;background:#cc9432;"></div><div style="left:230px;top:797px;width:195px;height:69px;background:#14b828;"></div><div style="left:815px;top:797px;width:194px;height:69px;background:#14b828;"></div><div style="left:815px;top:868px;width:101px;height:69px;background:#00ff41;"></div><div style="left:1009px;top:868px;width:102px;height:69px;background:#00ff41;"></div><div style="left:1399px;top:868px;width:49px;height:69px;background:#00ff41;"></div>
<svg width="1414" height="877" viewBox="35 124 1414 877" style="left:35px;top:124px" shape-rendering="crispEdges"><rect x="35" y="124" width="1" height="877" fill="rgba(0,0,0,0.19)"/><rect x="47" y="124" width="1" height="877" fill="rgba(0,0,0,0.19)"/><rect x="59" y="124" width="1" height="877" fill="rgba(0,0,0,0.19)"/><rect x="72" y="124" width="1" height="877" fill="rgba(0,0,0,0.19)"/><rect x="84" y="124" width="1" height="877" fill="rgba(0,0,0,0.19)"/><rect x="96" y="124" width="1" height="877" fill="rgba(0,0,0,0.19)"/><rect x="108" y="124" width="1" height="877" fill="rgba(0,0,0,0.19)"/><rect x="120" y="124" width="1" height="877" fill="rgba(0,0,0,0.19)"/><rect x="132" y="124" width="1" height="877" fill="rgba(0,0,0,0.19)"/><rect x="145" y="124" width="1" height="877" fill="rgba(0,0,0,0.19)"/><rect x="157" y="124" width="1" height="877" fill="rgba(0,0,0,0.19)"/><rect x="169" y="124" width="1" height="877" fill="rgba(0,0,0,0.19)"/><rect x="181" y="124" width="1" height="877" fill="rgba(0,0,0,0.19)"/><rect x="193" y="124" width="1" height="877" fill="rgba(0,0,0,0.19)"/><rect x="206" y="124" width="1" height="877" fill="rgba(0,0,0,0.19)"/><rect x="218" y="124" width="1" height="877" fill="rgba(0,0,0,0.19)"/><rect x="230" y="124" width="1" height="877" fill="rgba(0,0,0,0.19)"/><rect x="242" y="124" width="1" height="877" fill="rgba(0,0,0,0.19)"/><rect x="254" y="124" width="1" height="877" fill="rgba(0,0,0,0.19)"/><rect x="266" y="124" width="1" height="877" fill="rgba(0,0,0,0.19)"/><rect x="279" y="124" width="1" height="877" fill="rgba(0,0,0,0.19)"/><rect x="291" y="124" width="1" height="877" fill="rgba(0,0,0,0.19)"/><rect x="303" y="124" width="1" height="877" fill="rgba(0,0,0,0.19)"/><rect x="315" y="124" width="1" height="877" fill="rgba(0,0,0,0.19)"/><rect x="327" y="124" width="1" height="877" fill="rgba(0,0,0,0.19)"/><rect x="340" y="124" width="1" height="877" fill="rgba(0,0,0,0.19)"/><rect x="352" y="124" width="1" height="877" fill="rgba(0,0,0,0.19)"/><rect x="364" y="124" width="1" height="877" fill="rgba(0,0,0,0.19)"/><rect x="376" y="124" width="1" height="877" fill="rgba(0,0,0,0.19)"/><rect x="388" y="124" width="1" height="877" fill="rgba(0,0,0,0.19)"/><rect x="400" y="124" width="1" height="877" fill="rgba(0,0,0,0.19)"/><rect x="413" y="124" width="1" height="877" fill="rgba(0,0,0,0.19)"/><rect x="425" y="124" width="1" height="877" fill="rgba(0,0,0,0.19)"/><rect x="437" y="124" width="1" height="877" fill="rgba(0,0,0,0.19)"/><rect x="449" y="124" width="1" height="877" fill="rgba(0,0,0,0.19)"/><rect x="461" y="124" width="1" height="877" fill="rgba(0,0,0,0.19)"/><rect x="474" y="124" width="1" height="877" fill="rgba(0,0,0,0.19)"/><rect x="486" y="124" width="1" height="877" fill="rgba(0,0,0,0.19)"/><rect x="498" y="124" width="1" height="877" fill="rgba(0,0,0,0.19)"/><rect x="510" y="124" width="1" height="877" fill="rgba(0,0,0,0.19)"/><rect x="522" y="124" width="1" height="877" fill="rgba(0,0,0,0.19)"/><rect x="534" y="124" width="1" height="877" fill="rgba(0,0,0,0.19)"/><rect x="547" y="124" width="1" height="877" fill="rgba(0,0,0,0.19)"/><rect x="559" y="124" width="1" height="877" fill="rgba(0,0,0,0.19)"/><rect x="571" y="124" width="1" height="877" fill="rgba(0,0,0,0.19)"/><rect x="583" y="124" width="1" height="877" fill="rgba(0,0,0,0.19)"/><rect x="595" y="124" width="1" height="877" fill="rgba(0,0,0,0.19)"/><rect x="608" y="124" width="1" height="877" fill="rgba(0,0,0,0.19)"/><rect x="620" y="124" width="1" height="877" fill="rgba(0,0,0,0.19)"/><rect x="632" y="124" width="1" height="877" fill="rgba(0,0,0,0.19)"/><rect x="644" y="124" width="1" height="877" fill="rgba(0,0,0,0.19)"/><rect x="656" y="124" width="1" height="877" fill="rgba(0,0,0,0.19)"/><rect x="668" y="124" width="1" height="877" fill="rgba(0,0,0,0.19)"/><rect x="681" y="124" width="1" height="877" fill="rgba(0,0,0,0.19)"/><rect x="693" y="124" width="1" height="877" fill="rgba(0,0,0,0.19)"/><rect x="705" y="124" width="1" height="877" fill="rgba(0,0,0,0.19)"/><rect x="717" y="124" width="1" height="877" fill="rgba(0,0,0,0.19)"/><rect x="729" y="124" width="1" height="877" fill="rgba(0,0,0,0.19)"/><rect x="741" y="124" width="1" height="877" fill="rgba(0,0,0,0.19)"/><rect x="754" y="124" width="1" height="877" fill="rgba(0,0,0,0.19)"/><rect x="766" y="124" width="1" height="877" fill="rgba(0,0,0,0.19)"/><rect x="778" y="124" width="1" height="877" fill="rgba(0,0,0,0.19)"/><rect x="790" y="124" width="1" height="877" fill="rgba(0,0,0,0.19)"/><rect x="802" y="124" width="1" height="877" fill="rgba(0,0,0,0.19)"/><rect x="815" y="124" width="1" height="877" fill="rgba(0,0,0,0.19)"/><rect x="827" y="124" width="1" height="877" fill="rgba(0,0,0,0.19)"/><rect x="839" y="124" width="1" height="877" fill="rgba(0,0,0,0.19)"/><rect x="851" y="124" width="1" height="877" fill="rgba(0,0,0,0.19)"/><rect x="863" y="124" width="1" height="877" fill="rgba(0,0,0,0.19)"/><rect x="875" y="124" width="1" height="877" fill="rgba(0,0,0,0.19)"/><rect x="888" y="124" width="1" height="877" fill="rgba(0,0,0,0.19)"/><rect x="900" y="124" width="1" height="877" fill="rgba(0,0,0,0.19)"/><rect x="912" y="124" width="1" height="877" fill="rgba(0,0,0,0.19)"/><rect x="924" y="124" width="1" height="877" fill="rgba(0,0,0,0.19)"/><rect x="936" y="124" width="1" height="877" fill="rgba(0,0,0,0.19)"/><rect x="949" y="124" width="1" height="877" fill="rgba(0,0,0,0.19)"/><rect x="961" y="124" width="1" height="877" fill="rgba(0,0,0,0.19)"/><rect x="973" y="124" width="1" height="877" fill="rgba(0,0,0,0.19)"/><rect x="985" y="124" width="1" height="877" fill="rgba(0,0,0,0.19)"/><rect x="997" y="124" width="1" height="877" fill="rgba(0,0,0,0.19)"/><rect x="1009" y="124" width="1" height="877" fill="rgba(0,0,0,0.19)"/><rect x="1022" y="124" width="1" height="877" fill="rgba(0,0,0,0.19)"/><rect x="1034" y="124" width="1" height="877" fill="rgba(0,0,0,0.19)"/><rect x="1046" y="124" width="1" height="877" fill="rgba(0,0,0,0.19)"/><rect x="1058" y="124" width="1" height="877" fill="rgba(0,0,0,0.19)"/><rect x="1070" y="124" width="1" height="877" fill="rgba(0,0,0,0.19)"/><rect x="1083" y="124" width="1" height="877" fill="rgba(0,0,0,0.19)"/><rect x="1095" y="124" width="1" height="877" fill="rgba(0,0,0,0.19)"/><rect x="1107" y="124" width="1" height="877" fill="rgba(0,0,0,0.19)"/><rect x="1119" y="124" width="1" height="877" fill="rgba(0,0,0,0.19)"/><rect x="1131" y="124" width="1" height="877" fill="rgba(0,0,0,0.19)"/><rect x="1143" y="124" width="1" height="877" fill="rgba(0,0,0,0.19)"/><rect x="1156" y="124" width="1" height="877" fill="rgba(0,0,0,0.19)"/><rect x="1168" y="124" width="1" height="877" fill="rgba(0,0,0,0.19)"/><rect x="1180" y="124" width="1" height="877" fill="rgba(0,0,0,0.19)"/><rect x="1192" y="124" width="1" height="877" fill="rgba(0,0,0,0.19)"/><rect x="1204" y="124" width="1" height="877" fill="rgba(0,0,0,0.19)"/><rect x="1217" y="124" width="1" height="877" fill="rgba(0,0,0,0.19)"/><rect x="1229" y="124" width="1" height="877" fill="rgba(0,0,0,0.19)"/><rect x="1241" y="124" width="1" height="877" fill="rgba(0,0,0,0.19)"/><rect x="1253" y="124" width="1" height="877" fill="rgba(0,0,0,0.19)"/><rect x="1265" y="124" width="1" height="877" fill="rgba(0,0,0,0.19)"/><rect x="1277" y="124" width="1" height="877" fill="rgba(0,0,0,0.19)"/><rect x="1290" y="124" width="1" height="877" fill="rgba(0,0,0,0.19)"/><rect x="1302" y="124" width="1" height="877" fill="rgba(0,0,0,0.19)"/><rect x="1314" y="124" width="1" height="877" fill="rgba(0,0,0,0.19)"/><rect x="1326" y="124" width="1" height="877" fill="rgba(0,0,0,0.19)"/><rect x="1338" y="124" width="1" height="877" fill="rgba(0,0,0,0.19)"/><rect x="1350" y="124" width="1" height="877" fill="rgba(0,0,0,0.19)"/><rect x="1363" y="124" width="1" height="877" fill="rgba(0,0,0,0.19)"/><rect x="1375" y="124" width="1" height="877" fill="rgba(0,0,0,0.19)"/><rect x="1387" y="124" width="1" height="877" fill="rgba(0,0,0,0.19)"/><rect x="1399" y="124" width="1" height="877" fill="rgba(0,0,0,0.19)"/><rect x="1411" y="124" width="1" height="877" fill="rgba(0,0,0,0.19)"/><rect x="1424" y="124" width="1" height="877" fill="rgba(0,0,0,0.19)"/><rect x="1436" y="124" width="1" height="877" fill="rgba(0,0,0,0.19)"/><rect x="1448" y="124" width="1" height="877" fill="rgba(0,0,0,0.19)"/></svg>
<div style="left:35px;top:137.3px;width:1428px;height:6.7px;background:#272727;"></div>
<div style="left:35px;top:213px;width:1428px;height:2px;background:#262626;"></div>
<div style="left:35px;top:352px;width:1428px;height:2px;background:#262626;"></div>
<div style="left:35px;top:440px;width:1428px;height:2px;background:#262626;"></div>
<div style="left:35px;top:511px;width:1428px;height:2px;background:#262626;"></div>
<div style="left:35px;top:582px;width:1428px;height:2px;background:#262626;"></div>
<div style="left:35px;top:653px;width:1428px;height:2px;background:#262626;"></div>
<div style="left:35px;top:724px;width:1428px;height:2px;background:#262626;"></div>
<div style="left:35px;top:795px;width:1428px;height:2px;background:#262626;"></div>
<div style="left:35px;top:866px;width:1428px;height:2px;background:#262626;"></div>
<div style="left:35px;top:937px;width:1428px;height:2.2px;background:#262626;"></div>
<div style="left:35px;top:942.8px;width:1428px;height:3.2px;background:#262626;"></div>
<div style="left:35px;top:963px;width:1428px;height:2px;background:#262626;"></div>
<div style="left:35px;top:982px;width:1428px;height:2px;background:#262626;"></div>
<div style="left:1449px;top:112.6px;width:13.4px;height:24.7px;background:#474747;"></div>
<div style="left:1461px;top:113px;width:1px;height:889px;background:rgba(0,0,0,0.19);"></div>
<div style="left:1462.4px;top:137.3px;width:1.6px;height:865px;background:#242424;"></div>
<div style="left:425px;top:144px;width:195px;height:17px;background:#0099e5;border-bottom:1px solid #0077b2;border-left:1px solid #007ab7;"></div><div style="left:619px;top:144px;width:1px;height:69px;background:#006ba0;"></div><div style="left:620px;top:144px;width:195px;height:17px;background:#0099e5;border-bottom:1px solid #0077b2;border-left:1px solid #007ab7;"></div><div style="left:814px;top:144px;width:1px;height:69px;background:#006ba0;"></div><div style="left:1009px;top:144px;width:195px;height:17px;background:#0099e5;border-bottom:1px solid #0077b2;border-left:1px solid #007ab7;"></div><div style="left:1203px;top:144px;width:1px;height:69px;background:#006ba0;"></div><div style="left:1204px;top:144px;width:195px;height:17px;background:#0099e5;border-bottom:1px solid #0077b2;border-left:1px solid #007ab7;"></div><div style="left:1398px;top:144px;width:1px;height:69px;background:#006ba0;"></div><svg width="1414" height="69" viewBox="35 144 1414 69" style="left:35px;top:144px"><rect x="425.86" y="182.2" width="4.99" height="8.5" fill="#03161d"/><rect x="431.95" y="182.2" width="4.99" height="8.5" fill="#03161d"/><rect x="438.04" y="182.2" width="4.99" height="8.5" fill="#03161d"/><rect x="444.13" y="182.2" width="4.99" height="8.5" fill="#03161d"/><rect x="450.22" y="182.2" width="4.99" height="8.5" fill="#03161d"/><rect x="456.31" y="182.2" width="4.99" height="8.5" fill="#03161d"/><rect x="462.40" y="182.2" width="4.99" height="8.5" fill="#03161d"/><rect x="468.49" y="182.2" width="4.99" height="8.5" fill="#03161d"/><rect x="474.58" y="162.2" width="4.99" height="8.5" fill="#03161d"/><rect x="480.67" y="162.2" width="4.99" height="8.5" fill="#03161d"/><rect x="486.76" y="162.2" width="4.99" height="8.5" fill="#03161d"/><rect x="492.85" y="162.2" width="4.99" height="8.5" fill="#03161d"/><rect x="498.94" y="202.3" width="4.99" height="8.5" fill="#03161d"/><rect x="505.03" y="202.3" width="4.99" height="8.5" fill="#03161d"/><rect x="511.12" y="202.3" width="4.99" height="8.5" fill="#03161d"/><rect x="517.21" y="202.3" width="4.99" height="8.5" fill="#03161d"/><rect x="523.30" y="182.2" width="4.99" height="8.5" fill="#03161d"/><rect x="529.39" y="182.2" width="4.99" height="8.5" fill="#03161d"/><rect x="535.48" y="182.2" width="4.99" height="8.5" fill="#03161d"/><rect x="541.57" y="182.2" width="4.99" height="8.5" fill="#03161d"/><rect x="547.66" y="182.2" width="4.99" height="8.5" fill="#03161d"/><rect x="553.75" y="182.2" width="4.99" height="8.5" fill="#03161d"/><rect x="559.84" y="182.2" width="4.99" height="8.5" fill="#03161d"/><rect x="565.93" y="182.2" width="4.99" height="8.5" fill="#03161d"/><rect x="572.02" y="162.2" width="4.99" height="8.5" fill="#03161d"/><rect x="578.11" y="162.2" width="4.99" height="8.5" fill="#03161d"/><rect x="584.20" y="162.2" width="4.99" height="8.5" fill="#03161d"/><rect x="590.29" y="162.2" width="4.99" height="8.5" fill="#03161d"/><rect x="596.38" y="202.3" width="4.99" height="8.5" fill="#03161d"/><rect x="602.47" y="202.3" width="4.99" height="8.5" fill="#03161d"/><rect x="608.56" y="202.3" width="4.99" height="8.5" fill="#03161d"/><rect x="614.65" y="202.3" width="4.99" height="8.5" fill="#03161d"/><rect x="620.74" y="182.2" width="4.99" height="8.5" fill="#03161d"/><rect x="626.83" y="182.2" width="4.99" height="8.5" fill="#03161d"/><rect x="632.92" y="182.2" width="4.99" height="8.5" fill="#03161d"/><rect x="639.01" y="182.2" width="4.99" height="8.5" fill="#03161d"/><rect x="645.10" y="182.2" width="4.99" height="8.5" fill="#03161d"/><rect x="651.19" y="182.2" width="4.99" height="8.5" fill="#03161d"/><rect x="657.28" y="182.2" width="4.99" height="8.5" fill="#03161d"/><rect x="663.37" y="182.2" width="4.99" height="8.5" fill="#03161d"/><rect x="669.46" y="162.2" width="4.99" height="8.5" fill="#03161d"/><rect x="675.55" y="162.2" width="4.99" height="8.5" fill="#03161d"/><rect x="681.64" y="162.2" width="4.99" height="8.5" fill="#03161d"/><rect x="687.73" y="162.2" width="4.99" height="8.5" fill="#03161d"/><rect x="693.82" y="202.3" width="4.99" height="8.5" fill="#03161d"/><rect x="699.91" y="202.3" width="4.99" height="8.5" fill="#03161d"/><rect x="706.00" y="202.3" width="4.99" height="8.5" fill="#03161d"/><rect x="712.09" y="202.3" width="4.99" height="8.5" fill="#03161d"/><rect x="718.18" y="182.2" width="4.99" height="8.5" fill="#03161d"/><rect x="724.27" y="182.2" width="4.99" height="8.5" fill="#03161d"/><rect x="730.36" y="182.2" width="4.99" height="8.5" fill="#03161d"/><rect x="736.45" y="182.2" width="4.99" height="8.5" fill="#03161d"/><rect x="742.54" y="182.2" width="4.99" height="8.5" fill="#03161d"/><rect x="748.63" y="182.2" width="4.99" height="8.5" fill="#03161d"/><rect x="754.72" y="182.2" width="4.99" height="8.5" fill="#03161d"/><rect x="760.81" y="182.2" width="4.99" height="8.5" fill="#03161d"/><rect x="766.90" y="162.2" width="4.99" height="8.5" fill="#03161d"/><rect x="772.99" y="162.2" width="4.99" height="8.5" fill="#03161d"/><rect x="779.08" y="162.2" width="4.99" height="8.5" fill="#03161d"/><rect x="785.17" y="162.2" width="4.99" height="8.5" fill="#03161d"/><rect x="791.26" y="202.3" width="4.99" height="8.5" fill="#03161d"/><rect x="797.35" y="202.3" width="4.99" height="8.5" fill="#03161d"/><rect x="803.44" y="202.3" width="4.99" height="8.5" fill="#03161d"/><rect x="809.53" y="202.3" width="4.99" height="8.5" fill="#03161d"/><rect x="1010.35" y="182.2" width="47.92" height="8.5" fill="#03161d"/><rect x="1059.07" y="162.2" width="23.56" height="8.5" fill="#03161d"/><rect x="1083.43" y="202.3" width="23.56" height="8.5" fill="#03161d"/><rect x="1107.79" y="182.2" width="47.92" height="8.5" fill="#03161d"/><rect x="1156.51" y="162.2" width="23.56" height="8.5" fill="#03161d"/><rect x="1180.87" y="202.3" width="23.56" height="8.5" fill="#03161d"/><rect x="1205.23" y="182.2" width="47.92" height="8.5" fill="#03161d"/><rect x="1253.95" y="162.2" width="23.56" height="8.5" fill="#03161d"/><rect x="1278.31" y="202.3" width="23.56" height="8.5" fill="#03161d"/><rect x="1302.67" y="182.2" width="47.92" height="8.5" fill="#03161d"/><rect x="1351.39" y="162.2" width="23.56" height="8.5" fill="#03161d"/><rect x="1375.75" y="202.3" width="23.56" height="8.5" fill="#03161d"/></svg><div style="left:35px;top:215px;width:390px;height:17px;background:#00e6ff;border-bottom:1px solid #00b3c6;border-left:1px solid #00b8cc;"></div><div style="left:424px;top:215px;width:1px;height:137px;background:#00a1b2;"></div><div style="left:425px;top:215px;width:390px;height:17px;background:#00e6ff;border-bottom:1px solid #00b3c6;border-left:1px solid #00b8cc;"></div><div style="left:814px;top:215px;width:1px;height:137px;background:#00a1b2;"></div><div style="left:1009px;top:215px;width:390px;height:17px;background:#00e6ff;border-bottom:1px solid #00b3c6;border-left:1px solid #00b8cc;"></div><div style="left:1398px;top:215px;width:1px;height:137px;background:#00a1b2;"></div><svg width="1414" height="137" viewBox="35 215 1414 137" style="left:35px;top:215px"><rect x="36.05" y="274.20" width="47.82" height="2.2" fill="#04191d"/><rect x="36.05" y="306.20" width="47.82" height="2.2" fill="#04191d"/><rect x="36.05" y="334.10" width="47.82" height="2.2" fill="#04191d"/><rect x="84.77" y="266.20" width="23.46" height="2.2" fill="#04191d"/><rect x="109.13" y="266.20" width="23.46" height="2.2" fill="#04191d"/><rect x="84.77" y="302.20" width="23.46" height="2.2" fill="#04191d"/><rect x="84.77" y="326.10" width="23.46" height="2.2" fill="#04191d"/><rect x="109.13" y="326.10" width="23.46" height="2.2" fill="#04191d"/><rect x="109.13" y="342.10" width="23.46" height="2.2" fill="#04191d"/><rect x="133.49" y="274.20" width="47.82" height="2.2" fill="#04191d"/><rect x="133.49" y="306.20" width="47.82" height="2.2" fill="#04191d"/><rect x="133.49" y="334.10" width="47.82" height="2.2" fill="#04191d"/><rect x="182.21" y="266.20" width="23.46" height="2.2" fill="#04191d"/><rect x="206.57" y="266.20" width="23.46" height="2.2" fill="#04191d"/><rect x="182.21" y="302.20" width="23.46" height="2.2" fill="#04191d"/><rect x="182.21" y="326.10" width="23.46" height="2.2" fill="#04191d"/><rect x="206.57" y="326.10" width="23.46" height="2.2" fill="#04191d"/><rect x="206.57" y="342.10" width="23.46" height="2.2" fill="#04191d"/><rect x="230.93" y="274.20" width="47.82" height="2.2" fill="#04191d"/><rect x="230.93" y="306.20" width="47.82" height="2.2" fill="#04191d"/><rect x="230.93" y="334.10" width="47.82" height="2.2" fill="#04191d"/><rect x="279.65" y="266.20" width="23.46" height="2.2" fill="#04191d"/><rect x="304.01" y="266.20" width="23.46" height="2.2" fill="#04191d"/><rect x="279.65" y="302.20" width="23.46" height="2.2" fill="#04191d"/><rect x="279.65" y="326.10" width="23.46" height="2.2" fill="#04191d"/><rect x="304.01" y="326.10" width="23.46" height="2.2" fill="#04191d"/><rect x="304.01" y="342.10" width="23.46" height="2.2" fill="#04191d"/><rect x="328.37" y="274.20" width="47.82" height="2.2" fill="#04191d"/><rect x="328.37" y="306.20" width="47.82" height="2.2" fill="#04191d"/><rect x="328.37" y="334.10" width="47.82" height="2.2" fill="#04191d"/><rect x="377.09" y="266.20" width="23.46" height="2.2" fill="#04191d"/><rect x="401.45" y="266.20" width="23.46" height="2.2" fill="#04191d"/><rect x="377.09" y="302.20" width="23.46" height="2.2" fill="#04191d"/><rect x="377.09" y="326.10" width="23.46" height="2.2" fill="#04191d"/><rect x="401.45" y="326.10" width="23.46" height="2.2" fill="#04191d"/><rect x="401.45" y="342.10" width="23.46" height="2.2" fill="#04191d"/><rect x="425.81" y="274.20" width="47.82" height="2.2" fill="#04191d"/><rect x="425.81" y="306.20" width="47.82" height="2.2" fill="#04191d"/><rect x="425.81" y="334.10" width="47.82" height="2.2" fill="#04191d"/><rect x="474.53" y="266.20" width="23.46" height="2.2" fill="#04191d"/><rect x="498.89" y="266.20" width="23.46" height="2.2" fill="#04191d"/><rect x="474.53" y="302.20" width="23.46" height="2.2" fill="#04191d"/><rect x="474.53" y="326.10" width="23.46" height="2.2" fill="#04191d"/><rect x="498.89" y="326.10" width="23.46" height="2.2" fill="#04191d"/><rect x="498.89" y="342.10" width="23.46" height="2.2" fill="#04191d"/><rect x="523.25" y="274.20" width="47.82" height="2.2" fill="#04191d"/><rect x="523.25" y="306.20" width="47.82" height="2.2" fill="#04191d"/><rect x="523.25" y="334.10" width="47.82" height="2.2" fill="#04191d"/><rect x="571.97" y="266.20" width="23.46" height="2.2" fill="#04191d"/><rect x="596.33" y="266.20" width="23.46" height="2.2" fill="#04191d"/><rect x="571.97" y="302.20" width="23.46" height="2.2" fill="#04191d"/><rect x="571.97" y="326.10" width="23.46" height="2.2" fill="#04191d"/><rect x="596.33" y="326.10" width="23.46" height="2.2" fill="#04191d"/><rect x="596.33" y="342.10" width="23.46" height="2.2" fill="#04191d"/><rect x="620.69" y="274.20" width="47.82" height="2.2" fill="#04191d"/><rect x="620.69" y="306.20" width="47.82" height="2.2" fill="#04191d"/><rect x="620.69" y="334.10" width="47.82" height="2.2" fill="#04191d"/><rect x="669.41" y="266.20" width="23.46" height="2.2" fill="#04191d"/><rect x="693.77" y="266.20" width="23.46" height="2.2" fill="#04191d"/><rect x="669.41" y="302.20" width="23.46" height="2.2" fill="#04191d"/><rect x="669.41" y="326.10" width="23.46" height="2.2" fill="#04191d"/><rect x="693.77" y="326.10" width="23.46" height="2.2" fill="#04191d"/><rect x="693.77" y="342.10" width="23.46" height="2.2" fill="#04191d"/><rect x="718.13" y="274.20" width="47.82" height="2.2" fill="#04191d"/><rect x="718.13" y="306.20" width="47.82" height="2.2" fill="#04191d"/><rect x="718.13" y="334.10" width="47.82" height="2.2" fill="#04191d"/><rect x="766.85" y="266.20" width="23.46" height="2.2" fill="#04191d"/><rect x="791.21" y="266.20" width="23.46" height="2.2" fill="#04191d"/><rect x="766.85" y="302.20" width="23.46" height="2.2" fill="#04191d"/><rect x="766.85" y="326.10" width="23.46" height="2.2" fill="#04191d"/><rect x="791.21" y="326.10" width="23.46" height="2.2" fill="#04191d"/><rect x="791.21" y="342.10" width="23.46" height="2.2" fill="#04191d"/><rect x="1010.45" y="266.20" width="72.18" height="2.2" fill="#04191d"/><rect x="1083.53" y="266.20" width="23.46" height="2.2" fill="#04191d"/><rect x="1156.61" y="266.20" width="47.82" height="2.2" fill="#04191d"/><rect x="1205.33" y="266.20" width="72.18" height="2.2" fill="#04191d"/><rect x="1278.41" y="266.20" width="23.46" height="2.2" fill="#04191d"/><rect x="1351.49" y="266.20" width="47.82" height="2.2" fill="#04191d"/><rect x="1107.89" y="274.20" width="47.82" height="2.2" fill="#04191d"/><rect x="1302.77" y="274.20" width="47.82" height="2.2" fill="#04191d"/><rect x="1059.17" y="278.10" width="47.82" height="2.2" fill="#04191d"/><rect x="1156.61" y="278.10" width="47.82" height="2.2" fill="#04191d"/><rect x="1254.05" y="278.10" width="47.82" height="2.2" fill="#04191d"/><rect x="1351.49" y="278.10" width="47.82" height="2.2" fill="#04191d"/><rect x="1156.61" y="286.10" width="47.82" height="2.2" fill="#04191d"/><rect x="1351.49" y="286.10" width="47.82" height="2.2" fill="#04191d"/><rect x="1010.45" y="294.10" width="47.82" height="2.2" fill="#04191d"/><rect x="1205.33" y="294.10" width="47.82" height="2.2" fill="#04191d"/><rect x="1059.17" y="302.20" width="23.46" height="2.2" fill="#04191d"/><rect x="1156.61" y="302.20" width="23.46" height="2.2" fill="#04191d"/><rect x="1254.05" y="302.20" width="23.46" height="2.2" fill="#04191d"/><rect x="1351.49" y="302.20" width="23.46" height="2.2" fill="#04191d"/><rect x="1010.45" y="306.20" width="47.82" height="2.2" fill="#04191d"/><rect x="1107.89" y="306.20" width="47.82" height="2.2" fill="#04191d"/><rect x="1205.33" y="306.20" width="47.82" height="2.2" fill="#04191d"/><rect x="1302.77" y="306.20" width="47.82" height="2.2" fill="#04191d"/><rect x="1010.45" y="334.10" width="72.18" height="2.2" fill="#04191d"/><rect x="1132.25" y="334.10" width="23.46" height="2.2" fill="#04191d"/><rect x="1205.33" y="334.10" width="72.18" height="2.2" fill="#04191d"/><rect x="1327.13" y="334.10" width="23.46" height="2.2" fill="#04191d"/><rect x="1083.53" y="342.10" width="47.82" height="2.2" fill="#04191d"/><rect x="1180.97" y="342.10" width="23.46" height="2.2" fill="#04191d"/><rect x="1278.41" y="342.10" width="47.82" height="2.2" fill="#04191d"/><rect x="1375.85" y="342.10" width="23.46" height="2.2" fill="#04191d"/><rect x="230" y="216" width="1" height="2.5" fill="#0a2a30"/><rect x="230" y="349" width="1" height="3" fill="#0a2a30"/><rect x="620" y="216" width="1" height="2.5" fill="#0a2a30"/><rect x="620" y="349" width="1" height="3" fill="#0a2a30"/><rect x="1204" y="216" width="1" height="2.5" fill="#0a2a30"/><rect x="1204" y="349" width="1" height="3" fill="#0a2a30"/></svg><div style="left:425px;top:354px;width:390px;height:17px;background:#00b8a9;border-bottom:1px solid #008f83;border-left:1px solid #009387;"></div><div style="left:814px;top:354px;width:1px;height:86px;background:#008076;"></div><div style="left:815px;top:354px;width:194px;height:17px;background:#00b8a9;border-bottom:1px solid #008f83;border-left:1px solid #009387;"></div><div style="left:1008px;top:354px;width:1px;height:86px;background:#008076;"></div><div style="left:1009px;top:354px;width:390px;height:17px;background:#00b8a9;border-bottom:1px solid #008f83;border-left:1px solid #009387;"></div><div style="left:1398px;top:354px;width:1px;height:86px;background:#008076;"></div><svg width="1414" height="86" viewBox="35 354 1414 86" style="left:35px;top:354px"><rect x="444.80" y="373.00" width="2.31" height="4.6" fill="#03201d"/><rect x="542.24" y="373.00" width="2.31" height="4.6" fill="#03201d"/><rect x="590.96" y="373.00" width="2.31" height="4.6" fill="#03201d"/><rect x="456.98" y="403.10" width="2.31" height="4.6" fill="#03201d"/><rect x="481.95" y="403.10" width="2.31" height="4.6" fill="#03201d"/><rect x="554.78" y="403.10" width="2.31" height="4.6" fill="#03201d"/><rect x="578.78" y="403.10" width="2.31" height="4.6" fill="#03201d"/><rect x="475.61" y="409.20" width="2.31" height="4.6" fill="#03201d"/><rect x="486.82" y="409.20" width="7.92" height="4.6" fill="#03201d"/><rect x="506.06" y="409.20" width="2.31" height="4.6" fill="#03201d"/><rect x="573.54" y="409.20" width="2.31" height="4.6" fill="#03201d"/><rect x="584.87" y="409.20" width="2.31" height="4.6" fill="#03201d"/><rect x="602.77" y="409.20" width="2.31" height="4.6" fill="#03201d"/><rect x="425.92" y="421.00" width="10.96" height="4.6" fill="#03201d"/><rect x="450.89" y="421.00" width="2.31" height="4.6" fill="#03201d"/><rect x="461.85" y="421.00" width="11.81" height="4.6" fill="#03201d"/><rect x="522.99" y="421.00" width="11.33" height="4.6" fill="#03201d"/><rect x="548.94" y="421.00" width="2.31" height="4.6" fill="#03201d"/><rect x="561.00" y="421.00" width="2.31" height="4.6" fill="#03201d"/><rect x="565.01" y="421.00" width="2.31" height="4.6" fill="#03201d"/><rect x="500.22" y="432.90" width="2.31" height="4.6" fill="#03201d"/><rect x="510.57" y="432.90" width="11.57" height="4.6" fill="#03201d"/><rect x="597.05" y="432.90" width="2.31" height="4.6" fill="#03201d"/><rect x="608.62" y="432.90" width="11.33" height="4.6" fill="#03201d"/><rect x="639.68" y="373.00" width="2.31" height="4.6" fill="#03201d"/><rect x="737.12" y="373.00" width="2.31" height="4.6" fill="#03201d"/><rect x="785.84" y="373.00" width="2.31" height="4.6" fill="#03201d"/><rect x="651.86" y="403.10" width="2.31" height="4.6" fill="#03201d"/><rect x="676.83" y="403.10" width="2.31" height="4.6" fill="#03201d"/><rect x="749.66" y="403.10" width="2.31" height="4.6" fill="#03201d"/><rect x="773.66" y="403.10" width="2.31" height="4.6" fill="#03201d"/><rect x="670.49" y="409.20" width="2.31" height="4.6" fill="#03201d"/><rect x="681.70" y="409.20" width="7.92" height="4.6" fill="#03201d"/><rect x="700.94" y="409.20" width="2.31" height="4.6" fill="#03201d"/><rect x="768.42" y="409.20" width="2.31" height="4.6" fill="#03201d"/><rect x="779.75" y="409.20" width="2.31" height="4.6" fill="#03201d"/><rect x="797.65" y="409.20" width="2.31" height="4.6" fill="#03201d"/><rect x="620.80" y="421.00" width="10.96" height="4.6" fill="#03201d"/><rect x="645.77" y="421.00" width="2.31" height="4.6" fill="#03201d"/><rect x="656.73" y="421.00" width="11.81" height="4.6" fill="#03201d"/><rect x="717.87" y="421.00" width="11.33" height="4.6" fill="#03201d"/><rect x="743.82" y="421.00" width="2.31" height="4.6" fill="#03201d"/><rect x="755.88" y="421.00" width="2.31" height="4.6" fill="#03201d"/><rect x="759.89" y="421.00" width="2.31" height="4.6" fill="#03201d"/><rect x="695.10" y="432.90" width="2.31" height="4.6" fill="#03201d"/><rect x="705.45" y="432.90" width="11.57" height="4.6" fill="#03201d"/><rect x="791.93" y="432.90" width="2.31" height="4.6" fill="#03201d"/><rect x="803.50" y="432.90" width="11.33" height="4.6" fill="#03201d"/><rect x="912.75" y="432.90" width="11.57" height="4.6" fill="#03201d"/><rect x="938.09" y="432.90" width="4.38" height="4.6" fill="#03201d"/><rect x="949.78" y="432.90" width="11.33" height="4.6" fill="#03201d"/><rect x="816.29" y="421.00" width="10.96" height="4.6" fill="#03201d"/><rect x="840.65" y="421.00" width="4.38" height="4.6" fill="#03201d"/><rect x="851.85" y="421.00" width="11.57" height="4.6" fill="#03201d"/><rect x="962.08" y="421.00" width="11.33" height="4.6" fill="#03201d"/><rect x="986.81" y="421.00" width="4.38" height="4.6" fill="#03201d"/><rect x="997.77" y="421.00" width="11.57" height="4.6" fill="#03201d"/><rect x="864.16" y="409.20" width="10.96" height="4.6" fill="#03201d"/><rect x="889.37" y="409.20" width="4.38" height="4.6" fill="#03201d"/><rect x="900.82" y="409.20" width="11.57" height="4.6" fill="#03201d"/><rect x="1029.80" y="373.00" width="2.20" height="4.6" fill="#03201d"/><rect x="1065.98" y="373.00" width="5.48" height="4.6" fill="#03201d"/><rect x="1126.88" y="373.00" width="2.20" height="4.6" fill="#03201d"/><rect x="1059.89" y="409.20" width="4.38" height="4.6" fill="#03201d"/><rect x="1072.07" y="409.20" width="4.38" height="4.6" fill="#03201d"/><rect x="1091.07" y="409.20" width="2.20" height="4.6" fill="#03201d"/><rect x="1157.33" y="409.20" width="4.38" height="4.6" fill="#03201d"/><rect x="1169.51" y="409.20" width="4.38" height="4.6" fill="#03201d"/><rect x="1010.56" y="421.00" width="11.57" height="4.6" fill="#03201d"/><rect x="1035.53" y="421.00" width="4.87" height="4.6" fill="#03201d"/><rect x="1047.10" y="421.00" width="11.33" height="4.6" fill="#03201d"/><rect x="1108.00" y="421.00" width="11.33" height="4.6" fill="#03201d"/><rect x="1132.97" y="421.00" width="4.87" height="4.6" fill="#03201d"/><rect x="1144.54" y="421.00" width="11.57" height="4.6" fill="#03201d"/><rect x="1084.25" y="432.90" width="4.87" height="4.6" fill="#03201d"/><rect x="1095.82" y="432.90" width="11.57" height="4.6" fill="#03201d"/><rect x="1181.69" y="432.90" width="4.87" height="4.6" fill="#03201d"/><rect x="1193.26" y="432.90" width="11.33" height="4.6" fill="#03201d"/><rect x="1224.68" y="373.00" width="2.20" height="4.6" fill="#03201d"/><rect x="1260.86" y="373.00" width="5.48" height="4.6" fill="#03201d"/><rect x="1321.76" y="373.00" width="2.20" height="4.6" fill="#03201d"/><rect x="1254.77" y="409.20" width="4.38" height="4.6" fill="#03201d"/><rect x="1266.95" y="409.20" width="4.38" height="4.6" fill="#03201d"/><rect x="1285.95" y="409.20" width="2.20" height="4.6" fill="#03201d"/><rect x="1352.21" y="409.20" width="4.38" height="4.6" fill="#03201d"/><rect x="1364.39" y="409.20" width="4.38" height="4.6" fill="#03201d"/><rect x="1205.44" y="421.00" width="11.57" height="4.6" fill="#03201d"/><rect x="1230.41" y="421.00" width="4.87" height="4.6" fill="#03201d"/><rect x="1241.98" y="421.00" width="11.33" height="4.6" fill="#03201d"/><rect x="1302.88" y="421.00" width="11.33" height="4.6" fill="#03201d"/><rect x="1327.85" y="421.00" width="4.87" height="4.6" fill="#03201d"/><rect x="1339.42" y="421.00" width="11.57" height="4.6" fill="#03201d"/><rect x="1279.13" y="432.90" width="4.87" height="4.6" fill="#03201d"/><rect x="1290.70" y="432.90" width="11.57" height="4.6" fill="#03201d"/><rect x="1376.57" y="432.90" width="4.87" height="4.6" fill="#03201d"/><rect x="1388.14" y="432.90" width="11.33" height="4.6" fill="#03201d"/><rect x="620" y="355" width="1" height="2.5" fill="#06302c"/><rect x="620" y="437" width="1" height="3" fill="#06302c"/><rect x="1204" y="355" width="1" height="2.5" fill="#06302c"/><rect x="1204" y="437" width="1" height="3" fill="#06302c"/></svg><div style="left:35px;top:442px;width:390px;height:17px;background:#6c473b;border-bottom:1px solid #54372e;border-left:1px solid #56382f;"><span class="cn" style="left:3px;top:2.2px;color:rgba(255,255,255,0.86);font-weight:bold;font-size:10px;">Vocal</span></div><div style="left:424px;top:442px;width:1px;height:69px;background:#4b3129;"></div><div style="left:425px;top:442px;width:390px;height:17px;background:#6c473b;border-bottom:1px solid #54372e;border-left:1px solid #56382f;"><span class="cn" style="left:3px;top:2.2px;color:rgba(255,255,255,0.86);font-weight:bold;font-size:10px;">Vocal</span></div><div style="left:814px;top:442px;width:1px;height:69px;background:#4b3129;"></div><div style="left:1009px;top:442px;width:390px;height:17px;background:#6c473b;border-bottom:1px solid #54372e;border-left:1px solid #56382f;"><span class="cn" style="left:3px;top:2.2px;color:rgba(255,255,255,0.86);font-weight:bold;font-size:10px;">Vocal</span></div><div style="left:1398px;top:442px;width:1px;height:69px;background:#4b3129;"></div><svg width="1414" height="69" viewBox="35 442 1414 69" style="left:35px;top:442px"><g fill="#1a1110"><polygon points="36.3,466.2 37.4,468.7 38.4,466.9 39.5,468.8 40.5,467.1 41.6,467.6 42.6,469.3 43.7,468.1 44.8,467.3 45.8,464.2 46.9,470.1 47.9,471.1 49,471.3 50,471.4 51.1,471.8 52.1,471.8 53.2,470.7 54.2,468.6 55.2,469.3 56.3,470.1 57.4,467 58.4,468 59.5,461.7 60.5,466.5 61.6,468.8 62.6,468.8 63.7,468 64.7,466 65.8,468.3 66.8,467.1 67.9,467.2 68.9,468.3 70,468.5 71,470.7 72,471 73.1,470.4 74.1,468.9 75.2,468.9 76.2,468.8 77.3,468 78.3,468.5 79.4,469.1 80.4,468.3 81.5,469.2 82.5,470.5 83.6,469.1 84.6,468.4 85.7,466.6 86.7,466.3 87.8,467.1 88.8,462.1 89.9,466 90.9,464.7 92,463.5 93,467 94.1,465.8 95.1,468 96.2,465.5 97.2,465.4 98.3,466.4 99.3,465.3 100.4,467.6 101.4,466.3 102.5,466.6 103.5,466.6 104.6,467 105.6,465.4 106.7,464.9 107.7,466.7 108.8,466.3 109.8,468.7 110.9,466.7 111.9,467.3 113,466.7 114,467.6 115.1,469.4 116.1,469.3 117.2,468.4 118.2,469.9 119.3,468.1 120.3,468.3 121.4,467.8 122.4,467.9 123.5,464.6 124.5,467.4 125.6,466.7 126.6,465.3 127.7,461.9 128.7,465.9 129.8,464.1 130.8,464.6 131.9,463.8 132.9,464.1 134,463.9 135,466.6 136.1,466.2 137.1,467 138.2,465.4 139.2,465.8 140.3,469.3 141.3,470.1 142.4,470.8 143.4,471.3 144.5,471.5 145.5,472 146.6,472.1 147.6,472.2 148.7,472 149.7,470.8 150.8,468.2 151.8,464.1 152.9,464.3 153.9,467.3 155,467.9 156,467 157.1,468.6 158.1,464.9 159.2,465.3 160.2,464.8 161.3,465 162.3,466.6 163.4,466.5 164.4,467.9 165.5,465.7 166.5,468.2 167.6,468.2 168.6,467.8 169.7,468 170.7,467.5 171.8,468.7 172.8,468.9 173.9,468.3 174.9,468.4 176,467.3 177,468.5 178.1,464.9 179.1,465.7 180.2,467.5 181.2,466.8 182.3,465.1 183.3,463.3 184.4,466 185.4,464.3 186.5,463.8 187.6,466 188.6,465.8 189.7,467.6 190.7,467.4 191.8,466.4 192.8,466.9 193.9,464.4 194.9,467.5 196,468.1 197,463.5 198.1,465.2 199.1,466.8 200.2,464.5 201.2,467.2 202.3,465 203.3,463.2 204.4,464.2 205.4,465.4 206.5,467.6 207.5,467.5 208.6,468.5 209.6,466.7 210.7,467.8 211.7,467.2 212.8,468.3 213.8,468.5 214.9,466.1 215.9,465.3 217,466 218,466.2 219.1,466.3 220.1,466.7 221.2,468.7 222.2,468.1 223.3,469 224.3,470.1 225.4,470.5 226.4,470.4 227.5,470.9 228.5,470.7 229.6,470.9 230.4,471.6 230.4,473.6 229.6,474.3 228.5,474.5 227.5,474.3 226.4,474.8 225.4,474.7 224.3,475.1 223.3,476.2 222.2,477.1 221.2,476.5 220.1,478.5 219.1,478.9 218,479 217,479.2 215.9,479.9 214.9,479.1 213.8,476.7 212.8,476.9 211.7,478 210.7,477.4 209.6,478.5 208.6,476.7 207.5,477.7 206.5,477.6 205.4,479.8 204.4,481 203.3,482 202.3,480.2 201.2,478 200.2,480.7 199.1,478.4 198.1,480 197,481.7 196,477.1 194.9,477.7 193.9,480.8 192.8,478.3 191.8,478.8 190.7,477.8 189.7,477.6 188.6,479.4 187.6,479.2 186.5,481.4 185.4,480.9 184.4,479.2 183.3,481.9 182.3,480.1 181.2,478.4 180.2,477.7 179.1,479.5 178.1,480.3 177,476.7 176,477.9 174.9,476.8 173.9,476.9 172.8,476.3 171.8,476.5 170.7,477.7 169.7,477.2 168.6,477.4 167.6,477 166.5,477 165.5,479.5 164.4,477.3 163.4,478.7 162.3,478.6 161.3,480.2 160.2,480.4 159.2,479.9 158.1,480.3 157.1,476.6 156,478.2 155,477.3 153.9,477.9 152.9,480.9 151.8,481.1 150.8,477 149.7,474.4 148.7,473.2 147.6,473.1 146.6,473.1 145.5,473.2 144.5,473.7 143.4,473.9 142.4,474.4 141.3,475.1 140.3,475.9 139.2,479.4 138.2,479.8 137.1,478.2 136.1,479 135,478.6 134,481.3 132.9,481.1 131.9,481.4 130.8,480.6 129.8,481.1 128.7,479.3 127.7,483.3 126.6,479.9 125.6,478.5 124.5,477.8 123.5,480.6 122.4,477.3 121.4,477.4 120.3,476.9 119.3,477.1 118.2,475.3 117.2,476.8 116.1,475.9 115.1,475.8 114,477.6 113,478.5 111.9,477.9 110.9,478.5 109.8,476.5 108.8,478.9 107.7,478.5 106.7,480.3 105.6,479.8 104.6,478.2 103.5,478.6 102.5,478.6 101.4,478.9 100.4,477.6 99.3,479.9 98.3,478.8 97.2,479.8 96.2,479.7 95.1,477.2 94.1,479.4 93,478.2 92,481.7 90.9,480.5 89.9,479.2 88.8,483.1 87.8,478.1 86.7,478.9 85.7,478.6 84.6,476.8 83.6,476.1 82.5,474.7 81.5,476 80.4,476.9 79.4,476.1 78.3,476.7 77.3,477.2 76.2,476.4 75.2,476.3 74.1,476.3 73.1,474.8 72,474.2 71,474.5 70,476.7 68.9,476.9 67.9,478 66.8,478.1 65.8,476.9 64.7,479.2 63.7,477.2 62.6,476.4 61.6,476.4 60.5,478.7 59.5,483.5 58.4,477.2 57.4,478.2 56.3,475.1 55.2,475.9 54.2,476.6 53.2,474.5 52.1,473.4 51.1,473.4 50,473.8 49,473.9 47.9,474.1 46.9,475.1 45.8,481 44.8,477.9 43.7,477.1 42.6,475.9 41.6,477.6 40.5,478.1 39.5,476.4 38.4,478.3 37.4,476.5 36.3,479"/><polygon points="36.3,492.1 37.4,494.2 38.4,492.7 39.5,494.3 40.5,492.8 41.6,493.3 42.6,494.8 43.7,493.7 44.8,493.1 45.8,490.4 46.9,495.4 47.9,496.4 49,496.5 50,496.5 51.1,497 52.1,496.9 53.2,496 54.2,494.2 55.2,494.7 56.3,495.5 57.4,492.8 58.4,493.7 59.5,488.2 60.5,492.3 61.6,494.3 62.6,494.3 63.7,493.6 64.7,492 65.8,493.9 66.8,492.9 67.9,493 68.9,493.9 70,494 71,496 72,496.2 73.1,495.7 74.1,494.4 75.2,494.5 76.2,494.3 77.3,493.6 78.3,494.1 79.4,494.6 80.4,493.9 81.5,494.6 82.5,495.8 83.6,494.6 84.6,494 85.7,492.5 86.7,492.2 87.8,492.9 88.8,488.5 89.9,491.9 90.9,490.8 92,489.7 93,492.8 94.1,491.7 95.1,493.7 96.2,491.5 97.2,491.4 98.3,492.2 99.3,491.4 100.4,493.3 101.4,492.2 102.5,492.5 103.5,492.4 104.6,492.8 105.6,491.4 106.7,491 107.7,492.5 108.8,492.1 109.8,494.3 110.9,492.5 111.9,493 113,492.5 114,493.3 115.1,494.9 116.1,494.7 117.2,494 118.2,495.3 119.3,493.7 120.3,493.9 121.4,493.5 122.4,493.6 123.5,490.7 124.5,493.1 125.6,492.5 126.6,491.4 127.7,488.4 128.7,491.8 129.8,490.3 130.8,490.7 131.9,490 132.9,490.3 134,490.1 135,492.4 136.1,492.1 137.1,492.7 138.2,491.4 139.2,491.8 140.3,494.8 141.3,495.4 142.4,496.1 143.4,496.5 144.5,496.7 145.5,497.1 146.6,497.2 147.6,497.2 148.7,497.1 149.7,496.1 150.8,493.8 151.8,490.3 152.9,490.5 153.9,493.1 155,493.6 156,492.8 157.1,494.1 158.1,491 159.2,491.3 160.2,490.9 161.3,491.1 162.3,492.5 163.4,492.4 164.4,493.5 165.5,491.7 166.5,493.8 167.6,493.9 168.6,493.4 169.7,493.7 170.7,493.2 171.8,494.2 172.8,494.4 173.9,493.9 174.9,494 176,493 177,494.1 178.1,491 179.1,491.7 180.2,493.2 181.2,492.6 182.3,491.2 183.3,489.6 184.4,491.9 185.4,490.5 186.5,490 187.6,491.9 188.6,491.8 189.7,493.3 190.7,493.2 191.8,492.3 192.8,492.7 193.9,490.6 194.9,493.2 196,493.7 197,489.8 198.1,491.2 199.1,492.6 200.2,490.6 201.2,493 202.3,491.1 203.3,489.5 204.4,490.4 205.4,491.4 206.5,493.3 207.5,493.3 208.6,494.1 209.6,492.5 210.7,493.4 211.7,493 212.8,493.9 213.8,494 214.9,492 215.9,491.4 217,491.9 218,492.1 219.1,492.2 220.1,492.5 221.2,494.2 222.2,493.8 223.3,494.5 224.3,495.5 225.4,495.8 226.4,495.7 227.5,496.1 228.5,496 229.6,496.1 230.4,496.8 230.4,498.4 229.6,499.1 228.5,499.2 227.5,499.1 226.4,499.5 225.4,499.4 224.3,499.7 223.3,500.7 222.2,501.4 221.2,501 220.1,502.7 219.1,503 218,503.1 217,503.3 215.9,503.8 214.9,503.2 213.8,501.2 212.8,501.3 211.7,502.2 210.7,501.8 209.6,502.7 208.6,501.1 207.5,501.9 206.5,501.9 205.4,503.8 204.4,504.8 203.3,505.7 202.3,504.1 201.2,502.2 200.2,504.6 199.1,502.6 198.1,504 197,505.4 196,501.5 194.9,502 193.9,504.6 192.8,502.5 191.8,502.9 190.7,502 189.7,501.9 188.6,503.4 187.6,503.3 186.5,505.2 185.4,504.7 184.4,503.3 183.3,505.6 182.3,504 181.2,502.6 180.2,502 179.1,503.5 178.1,504.2 177,501.1 176,502.2 174.9,501.2 173.9,501.3 172.8,500.8 171.8,501 170.7,502 169.7,501.5 168.6,501.8 167.6,501.3 166.5,501.4 165.5,503.5 164.4,501.7 163.4,502.8 162.3,502.7 161.3,504.1 160.2,504.3 159.2,503.9 158.1,504.2 157.1,501.1 156,502.4 155,501.6 153.9,502.1 152.9,504.7 151.8,504.9 150.8,501.4 149.7,499.1 148.7,498.1 147.6,498 146.6,498 145.5,498.1 144.5,498.5 143.4,498.7 142.4,499.1 141.3,499.8 140.3,500.4 139.2,503.4 138.2,503.8 137.1,502.5 136.1,503.1 135,502.8 134,505.1 132.9,504.9 131.9,505.2 130.8,504.5 129.8,504.9 128.7,503.4 127.7,506.8 126.6,503.8 125.6,502.7 124.5,502.1 123.5,504.5 122.4,501.6 121.4,501.7 120.3,501.3 119.3,501.5 118.2,499.9 117.2,501.2 116.1,500.5 115.1,500.3 114,501.9 113,502.7 111.9,502.2 110.9,502.7 109.8,500.9 108.8,503.1 107.7,502.7 106.7,504.2 105.6,503.8 104.6,502.4 103.5,502.8 102.5,502.7 101.4,503 100.4,501.9 99.3,503.8 98.3,503 97.2,503.8 96.2,503.7 95.1,501.5 94.1,503.5 93,502.4 92,505.5 90.9,504.4 89.9,503.3 88.8,506.7 87.8,502.3 86.7,503 85.7,502.7 84.6,501.2 83.6,500.6 82.5,499.4 81.5,500.6 80.4,501.3 79.4,500.6 78.3,501.1 77.3,501.6 76.2,500.9 75.2,500.7 74.1,500.8 73.1,499.5 72,499 71,499.2 70,501.2 68.9,501.3 67.9,502.2 66.8,502.3 65.8,501.3 64.7,503.2 63.7,501.6 62.6,500.9 61.6,500.9 60.5,502.9 59.5,507 58.4,501.5 57.4,502.4 56.3,499.7 55.2,500.5 54.2,501 53.2,499.2 52.1,498.3 51.1,498.2 50,498.7 49,498.7 47.9,498.8 46.9,499.8 45.8,504.8 44.8,502.1 43.7,501.5 42.6,500.4 41.6,501.9 40.5,502.4 39.5,500.9 38.4,502.5 37.4,501 36.3,503.1"/></g><g fill="#1a1110"><polygon points="231.2,466.2 232.3,468.7 233.3,466.9 234.4,468.8 235.4,467.1 236.5,467.6 237.5,469.3 238.6,468.1 239.6,467.3 240.7,464.2 241.7,470.1 242.8,471.1 243.8,471.3 244.9,471.4 245.9,471.8 247,471.8 248,470.7 249.1,468.6 250.1,469.3 251.2,470.1 252.2,467 253.3,468 254.3,461.7 255.4,466.5 256.4,468.8 257.5,468.8 258.5,468 259.6,466 260.6,468.3 261.7,467.1 262.7,467.2 263.8,468.3 264.8,468.5 265.9,470.7 266.9,471 268,470.4 269,468.9 270.1,468.9 271.1,468.8 272.2,468 273.2,468.5 274.3,469.1 275.3,468.3 276.4,469.2 277.4,470.5 278.5,469.1 279.5,468.4 280.6,466.6 281.6,466.3 282.7,467.1 283.7,462.1 284.8,466 285.8,464.7 286.9,463.5 287.9,467 289,465.8 290,468 291.1,465.5 292.1,465.4 293.2,466.4 294.2,465.3 295.3,467.6 296.3,466.3 297.4,466.6 298.4,466.6 299.5,467 300.5,465.4 301.6,464.9 302.6,466.7 303.7,466.3 304.7,468.7 305.8,466.7 306.8,467.3 307.9,466.7 308.9,467.6 310,469.4 311,469.3 312.1,468.4 313.1,469.9 314.2,468.1 315.2,468.3 316.3,467.8 317.3,467.9 318.4,464.6 319.4,467.4 320.5,466.7 321.5,465.3 322.6,461.9 323.6,465.9 324.7,464.1 325.7,464.6 326.8,463.8 327.8,464.1 328.9,463.9 329.9,466.6 331,466.2 332,467 333.1,465.4 334.1,465.8 335.2,469.3 336.2,470.1 337.3,470.8 338.3,471.3 339.4,471.5 340.4,472 341.5,472.1 342.5,472.2 343.6,472 344.6,470.8 345.7,468.2 346.7,464.1 347.8,464.3 348.8,467.3 349.9,467.9 350.9,467 352,468.6 353,464.9 354.1,465.3 355.1,464.8 356.2,465 357.2,466.6 358.3,466.5 359.3,467.9 360.4,465.7 361.4,468.2 362.5,468.2 363.5,467.8 364.6,468 365.6,467.5 366.7,468.7 367.7,468.9 368.8,468.3 369.8,468.4 370.9,467.3 371.9,468.5 373,464.9 374,465.7 375.1,467.5 376.1,466.8 377.2,465.1 378.2,463.3 379.3,466 380.3,464.3 381.4,463.8 382.4,466 383.5,465.8 384.5,467.6 385.6,467.4 386.6,466.4 387.7,466.9 388.7,464.4 389.8,467.5 390.8,468.1 391.9,463.5 392.9,465.2 394,466.8 395,464.5 396.1,467.2 397.1,465 398.2,463.2 399.2,464.2 400.3,465.4 401.3,467.6 402.4,467.5 403.4,468.5 404.5,466.7 405.5,467.8 406.6,467.2 407.6,468.3 408.7,468.5 409.7,466.1 410.8,465.3 411.8,466 412.9,466.2 413.9,466.3 415,466.7 416,468.7 417.1,468.1 418.1,469 419.2,470.1 420.2,470.5 421.3,470.4 422.3,470.9 423.4,470.7 424.4,470.9 425.3,471.6 425.3,473.6 424.4,474.3 423.4,474.5 422.3,474.3 421.3,474.8 420.2,474.7 419.2,475.1 418.1,476.2 417.1,477.1 416,476.5 415,478.5 413.9,478.9 412.9,479 411.8,479.2 410.8,479.9 409.7,479.1 408.7,476.7 407.6,476.9 406.6,478 405.5,477.4 404.5,478.5 403.4,476.7 402.4,477.7 401.3,477.6 400.3,479.8 399.2,481 398.2,482 397.1,480.2 396.1,478 395,480.7 394,478.4 392.9,480 391.9,481.7 390.8,477.1 389.8,477.7 388.7,480.8 387.7,478.3 386.6,478.8 385.6,477.8 384.5,477.6 383.5,479.4 382.4,479.2 381.4,481.4 380.3,480.9 379.3,479.2 378.2,481.9 377.2,480.1 376.1,478.4 375.1,477.7 374,479.5 373,480.3 371.9,476.7 370.9,477.9 369.8,476.8 368.8,476.9 367.7,476.3 366.7,476.5 365.6,477.7 364.6,477.2 363.5,477.4 362.5,477 361.4,477 360.4,479.5 359.3,477.3 358.3,478.7 357.2,478.6 356.2,480.2 355.1,480.4 354.1,479.9 353,480.3 352,476.6 350.9,478.2 349.9,477.3 348.8,477.9 347.8,480.9 346.7,481.1 345.7,477 344.6,474.4 343.6,473.2 342.5,473.1 341.5,473.1 340.4,473.2 339.4,473.7 338.3,473.9 337.3,474.4 336.2,475.1 335.2,475.9 334.1,479.4 333.1,479.8 332,478.2 331,479 329.9,478.6 328.9,481.3 327.8,481.1 326.8,481.4 325.7,480.6 324.7,481.1 323.6,479.3 322.6,483.3 321.5,479.9 320.5,478.5 319.4,477.8 318.4,480.6 317.3,477.3 316.3,477.4 315.2,476.9 314.2,477.1 313.1,475.3 312.1,476.8 311,475.9 310,475.8 308.9,477.6 307.9,478.5 306.8,477.9 305.8,478.5 304.7,476.5 303.7,478.9 302.6,478.5 301.6,480.3 300.5,479.8 299.5,478.2 298.4,478.6 297.4,478.6 296.3,478.9 295.3,477.6 294.2,479.9 293.2,478.8 292.1,479.8 291.1,479.7 290,477.2 289,479.4 287.9,478.2 286.9,481.7 285.8,480.5 284.8,479.2 283.7,483.1 282.7,478.1 281.6,478.9 280.6,478.6 279.5,476.8 278.5,476.1 277.4,474.7 276.4,476 275.3,476.9 274.3,476.1 273.2,476.7 272.2,477.2 271.1,476.4 270.1,476.3 269,476.3 268,474.8 266.9,474.2 265.9,474.5 264.8,476.7 263.8,476.9 262.7,478 261.7,478.1 260.6,476.9 259.6,479.2 258.5,477.2 257.5,476.4 256.4,476.4 255.4,478.7 254.3,483.5 253.3,477.2 252.2,478.2 251.2,475.1 250.1,475.9 249.1,476.6 248,474.5 247,473.4 245.9,473.4 244.9,473.8 243.8,473.9 242.8,474.1 241.7,475.1 240.7,481 239.6,477.9 238.6,477.1 237.5,475.9 236.5,477.6 235.4,478.1 234.4,476.4 233.3,478.3 232.3,476.5 231.2,479"/><polygon points="231.2,492.1 232.3,494.2 233.3,492.7 234.4,494.3 235.4,492.8 236.5,493.3 237.5,494.8 238.6,493.7 239.6,493.1 240.7,490.4 241.7,495.4 242.8,496.4 243.8,496.5 244.9,496.5 245.9,497 247,496.9 248,496 249.1,494.2 250.1,494.7 251.2,495.5 252.2,492.8 253.3,493.7 254.3,488.2 255.4,492.3 256.4,494.3 257.5,494.3 258.5,493.6 259.6,492 260.6,493.9 261.7,492.9 262.7,493 263.8,493.9 264.8,494 265.9,496 266.9,496.2 268,495.7 269,494.4 270.1,494.5 271.1,494.3 272.2,493.6 273.2,494.1 274.3,494.6 275.3,493.9 276.4,494.6 277.4,495.8 278.5,494.6 279.5,494 280.6,492.5 281.6,492.2 282.7,492.9 283.7,488.5 284.8,491.9 285.8,490.8 286.9,489.7 287.9,492.8 289,491.7 290,493.7 291.1,491.5 292.1,491.4 293.2,492.2 294.2,491.4 295.3,493.3 296.3,492.2 297.4,492.5 298.4,492.4 299.5,492.8 300.5,491.4 301.6,491 302.6,492.5 303.7,492.1 304.7,494.3 305.8,492.5 306.8,493 307.9,492.5 308.9,493.3 310,494.9 311,494.7 312.1,494 313.1,495.3 314.2,493.7 315.2,493.9 316.3,493.5 317.3,493.6 318.4,490.7 319.4,493.1 320.5,492.5 321.5,491.4 322.6,488.4 323.6,491.8 324.7,490.3 325.7,490.7 326.8,490 327.8,490.3 328.9,490.1 329.9,492.4 331,492.1 332,492.7 333.1,491.4 334.1,491.8 335.2,494.8 336.2,495.4 337.3,496.1 338.3,496.5 339.4,496.7 340.4,497.1 341.5,497.2 342.5,497.2 343.6,497.1 344.6,496.1 345.7,493.8 346.7,490.3 347.8,490.5 348.8,493.1 349.9,493.6 350.9,492.8 352,494.1 353,491 354.1,491.3 355.1,490.9 356.2,491.1 357.2,492.5 358.3,492.4 359.3,493.5 360.4,491.7 361.4,493.8 362.5,493.9 363.5,493.4 364.6,493.7 365.6,493.2 366.7,494.2 367.7,494.4 368.8,493.9 369.8,494 370.9,493 371.9,494.1 373,491 374,491.7 375.1,493.2 376.1,492.6 377.2,491.2 378.2,489.6 379.3,491.9 380.3,490.5 381.4,490 382.4,491.9 383.5,491.8 384.5,493.3 385.6,493.2 386.6,492.3 387.7,492.7 388.7,490.6 389.8,493.2 390.8,493.7 391.9,489.8 392.9,491.2 394,492.6 395,490.6 396.1,493 397.1,491.1 398.2,489.5 399.2,490.4 400.3,491.4 401.3,493.3 402.4,493.3 403.4,494.1 404.5,492.5 405.5,493.4 406.6,493 407.6,493.9 408.7,494 409.7,492 410.8,491.4 411.8,491.9 412.9,492.1 413.9,492.2 415,492.5 416,494.2 417.1,493.8 418.1,494.5 419.2,495.5 420.2,495.8 421.3,495.7 422.3,496.1 423.4,496 424.4,496.1 425.3,496.8 425.3,498.4 424.4,499.1 423.4,499.2 422.3,499.1 421.3,499.5 420.2,499.4 419.2,499.7 418.1,500.7 417.1,501.4 416,501 415,502.7 413.9,503 412.9,503.1 411.8,503.3 410.8,503.8 409.7,503.2 408.7,501.2 407.6,501.3 406.6,502.2 405.5,501.8 404.5,502.7 403.4,501.1 402.4,501.9 401.3,501.9 400.3,503.8 399.2,504.8 398.2,505.7 397.1,504.1 396.1,502.2 395,504.6 394,502.6 392.9,504 391.9,505.4 390.8,501.5 389.8,502 388.7,504.6 387.7,502.5 386.6,502.9 385.6,502 384.5,501.9 383.5,503.4 382.4,503.3 381.4,505.2 380.3,504.7 379.3,503.3 378.2,505.6 377.2,504 376.1,502.6 375.1,502 374,503.5 373,504.2 371.9,501.1 370.9,502.2 369.8,501.2 368.8,501.3 367.7,500.8 366.7,501 365.6,502 364.6,501.5 363.5,501.8 362.5,501.3 361.4,501.4 360.4,503.5 359.3,501.7 358.3,502.8 357.2,502.7 356.2,504.1 355.1,504.3 354.1,503.9 353,504.2 352,501.1 350.9,502.4 349.9,501.6 348.8,502.1 347.8,504.7 346.7,504.9 345.7,501.4 344.6,499.1 343.6,498.1 342.5,498 341.5,498 340.4,498.1 339.4,498.5 338.3,498.7 337.3,499.1 336.2,499.8 335.2,500.4 334.1,503.4 333.1,503.8 332,502.5 331,503.1 329.9,502.8 328.9,505.1 327.8,504.9 326.8,505.2 325.7,504.5 324.7,504.9 323.6,503.4 322.6,506.8 321.5,503.8 320.5,502.7 319.4,502.1 318.4,504.5 317.3,501.6 316.3,501.7 315.2,501.3 314.2,501.5 313.1,499.9 312.1,501.2 311,500.5 310,500.3 308.9,501.9 307.9,502.7 306.8,502.2 305.8,502.7 304.7,500.9 303.7,503.1 302.6,502.7 301.6,504.2 300.5,503.8 299.5,502.4 298.4,502.8 297.4,502.7 296.3,503 295.3,501.9 294.2,503.8 293.2,503 292.1,503.8 291.1,503.7 290,501.5 289,503.5 287.9,502.4 286.9,505.5 285.8,504.4 284.8,503.3 283.7,506.7 282.7,502.3 281.6,503 280.6,502.7 279.5,501.2 278.5,500.6 277.4,499.4 276.4,500.6 275.3,501.3 274.3,500.6 273.2,501.1 272.2,501.6 271.1,500.9 270.1,500.7 269,500.8 268,499.5 266.9,499 265.9,499.2 264.8,501.2 263.8,501.3 262.7,502.2 261.7,502.3 260.6,501.3 259.6,503.2 258.5,501.6 257.5,500.9 256.4,500.9 255.4,502.9 254.3,507 253.3,501.5 252.2,502.4 251.2,499.7 250.1,500.5 249.1,501 248,499.2 247,498.3 245.9,498.2 244.9,498.7 243.8,498.7 242.8,498.8 241.7,499.8 240.7,504.8 239.6,502.1 238.6,501.5 237.5,500.4 236.5,501.9 235.4,502.4 234.4,500.9 233.3,502.5 232.3,501 231.2,503.1"/></g><g fill="#1a1110"><polygon points="426.1,466.2 427.2,468.7 428.2,466.9 429.3,468.8 430.3,467.1 431.4,467.6 432.4,469.3 433.5,468.1 434.5,467.3 435.6,464.2 436.6,470.1 437.7,471.1 438.7,471.3 439.8,471.4 440.8,471.8 441.9,471.8 442.9,470.7 444,468.6 445,469.3 446.1,470.1 447.1,467 448.2,468 449.2,461.7 450.3,466.5 451.3,468.8 452.4,468.8 453.4,468 454.5,466 455.5,468.3 456.6,467.1 457.6,467.2 458.7,468.3 459.7,468.5 460.8,470.7 461.8,471 462.9,470.4 463.9,468.9 465,468.9 466,468.8 467.1,468 468.1,468.5 469.2,469.1 470.2,468.3 471.3,469.2 472.3,470.5 473.4,469.1 474.4,468.4 475.5,466.6 476.5,466.3 477.6,467.1 478.6,462.1 479.7,466 480.7,464.7 481.8,463.5 482.8,467 483.9,465.8 484.9,468 486,465.5 487,465.4 488.1,466.4 489.1,465.3 490.2,467.6 491.2,466.3 492.3,466.6 493.3,466.6 494.4,467 495.4,465.4 496.5,464.9 497.5,466.7 498.6,466.3 499.6,468.7 500.7,466.7 501.7,467.3 502.8,466.7 503.8,467.6 504.9,469.4 505.9,469.3 507,468.4 508,469.9 509.1,468.1 510.1,468.3 511.2,467.8 512.2,467.9 513.3,464.6 514.3,467.4 515.4,466.7 516.4,465.3 517.5,461.9 518.5,465.9 519.6,464.1 520.6,464.6 521.7,463.8 522.7,464.1 523.8,463.9 524.8,466.6 525.9,466.2 526.9,467 528,465.4 529,465.8 530.1,469.3 531.1,470.1 532.2,470.8 533.2,471.3 534.3,471.5 535.3,472 536.4,472.1 537.4,472.2 538.5,472 539.5,470.8 540.6,468.2 541.6,464.1 542.7,464.3 543.7,467.3 544.8,467.9 545.8,467 546.9,468.6 547.9,464.9 549,465.3 550,464.8 551.1,465 552.1,466.6 553.2,466.5 554.2,467.9 555.3,465.7 556.3,468.2 557.4,468.2 558.4,467.8 559.5,468 560.5,467.5 561.6,468.7 562.6,468.9 563.7,468.3 564.7,468.4 565.8,467.3 566.8,468.5 567.9,464.9 568.9,465.7 570,467.5 571,466.8 572.1,465.1 573.1,463.3 574.2,466 575.2,464.3 576.3,463.8 577.3,466 578.4,465.8 579.4,467.6 580.5,467.4 581.5,466.4 582.6,466.9 583.6,464.4 584.7,467.5 585.7,468.1 586.8,463.5 587.8,465.2 588.9,466.8 589.9,464.5 591,467.2 592,465 593.1,463.2 594.1,464.2 595.2,465.4 596.2,467.6 597.3,467.5 598.3,468.5 599.4,466.7 600.4,467.8 601.5,467.2 602.5,468.3 603.6,468.5 604.6,466.1 605.7,465.3 606.7,466 607.8,466.2 608.8,466.3 609.9,466.7 610.9,468.7 612,468.1 613,469 614.1,470.1 615.1,470.5 616.2,470.4 617.2,470.9 618.3,470.7 619.3,470.9 620.2,471.6 620.2,473.6 619.3,474.3 618.3,474.5 617.2,474.3 616.2,474.8 615.1,474.7 614.1,475.1 613,476.2 612,477.1 610.9,476.5 609.9,478.5 608.8,478.9 607.8,479 606.7,479.2 605.7,479.9 604.6,479.1 603.6,476.7 602.5,476.9 601.5,478 600.4,477.4 599.4,478.5 598.3,476.7 597.3,477.7 596.2,477.6 595.2,479.8 594.1,481 593.1,482 592,480.2 591,478 589.9,480.7 588.9,478.4 587.8,480 586.8,481.7 585.7,477.1 584.7,477.7 583.6,480.8 582.6,478.3 581.5,478.8 580.5,477.8 579.4,477.6 578.4,479.4 577.3,479.2 576.3,481.4 575.2,480.9 574.2,479.2 573.1,481.9 572.1,480.1 571,478.4 570,477.7 568.9,479.5 567.9,480.3 566.8,476.7 565.8,477.9 564.7,476.8 563.7,476.9 562.6,476.3 561.6,476.5 560.5,477.7 559.5,477.2 558.4,477.4 557.4,477 556.3,477 555.3,479.5 554.2,477.3 553.2,478.7 552.1,478.6 551.1,480.2 550,480.4 549,479.9 547.9,480.3 546.9,476.6 545.8,478.2 544.8,477.3 543.7,477.9 542.7,480.9 541.6,481.1 540.6,477 539.5,474.4 538.5,473.2 537.4,473.1 536.4,473.1 535.3,473.2 534.3,473.7 533.2,473.9 532.2,474.4 531.1,475.1 530.1,475.9 529,479.4 528,479.8 526.9,478.2 525.9,479 524.8,478.6 523.8,481.3 522.7,481.1 521.7,481.4 520.6,480.6 519.6,481.1 518.5,479.3 517.5,483.3 516.4,479.9 515.4,478.5 514.3,477.8 513.3,480.6 512.2,477.3 511.2,477.4 510.1,476.9 509.1,477.1 508,475.3 507,476.8 505.9,475.9 504.9,475.8 503.8,477.6 502.8,478.5 501.7,477.9 500.7,478.5 499.6,476.5 498.6,478.9 497.5,478.5 496.5,480.3 495.4,479.8 494.4,478.2 493.3,478.6 492.3,478.6 491.2,478.9 490.2,477.6 489.1,479.9 488.1,478.8 487,479.8 486,479.7 484.9,477.2 483.9,479.4 482.8,478.2 481.8,481.7 480.7,480.5 479.7,479.2 478.6,483.1 477.6,478.1 476.5,478.9 475.5,478.6 474.4,476.8 473.4,476.1 472.3,474.7 471.3,476 470.2,476.9 469.2,476.1 468.1,476.7 467.1,477.2 466,476.4 465,476.3 463.9,476.3 462.9,474.8 461.8,474.2 460.8,474.5 459.7,476.7 458.7,476.9 457.6,478 456.6,478.1 455.5,476.9 454.5,479.2 453.4,477.2 452.4,476.4 451.3,476.4 450.3,478.7 449.2,483.5 448.2,477.2 447.1,478.2 446.1,475.1 445,475.9 444,476.6 442.9,474.5 441.9,473.4 440.8,473.4 439.8,473.8 438.7,473.9 437.7,474.1 436.6,475.1 435.6,481 434.5,477.9 433.5,477.1 432.4,475.9 431.4,477.6 430.3,478.1 429.3,476.4 428.2,478.3 427.2,476.5 426.1,479"/><polygon points="426.1,492.1 427.2,494.2 428.2,492.7 429.3,494.3 430.3,492.8 431.4,493.3 432.4,494.8 433.5,493.7 434.5,493.1 435.6,490.4 436.6,495.4 437.7,496.4 438.7,496.5 439.8,496.5 440.8,497 441.9,496.9 442.9,496 444,494.2 445,494.7 446.1,495.5 447.1,492.8 448.2,493.7 449.2,488.2 450.3,492.3 451.3,494.3 452.4,494.3 453.4,493.6 454.5,492 455.5,493.9 456.6,492.9 457.6,493 458.7,493.9 459.7,494 460.8,496 461.8,496.2 462.9,495.7 463.9,494.4 465,494.5 466,494.3 467.1,493.6 468.1,494.1 469.2,494.6 470.2,493.9 471.3,494.6 472.3,495.8 473.4,494.6 474.4,494 475.5,492.5 476.5,492.2 477.6,492.9 478.6,488.5 479.7,491.9 480.7,490.8 481.8,489.7 482.8,492.8 483.9,491.7 484.9,493.7 486,491.5 487,491.4 488.1,492.2 489.1,491.4 490.2,493.3 491.2,492.2 492.3,492.5 493.3,492.4 494.4,492.8 495.4,491.4 496.5,491 497.5,492.5 498.6,492.1 499.6,494.3 500.7,492.5 501.7,493 502.8,492.5 503.8,493.3 504.9,494.9 505.9,494.7 507,494 508,495.3 509.1,493.7 510.1,493.9 511.2,493.5 512.2,493.6 513.3,490.7 514.3,493.1 515.4,492.5 516.4,491.4 517.5,488.4 518.5,491.8 519.6,490.3 520.6,490.7 521.7,490 522.7,490.3 523.8,490.1 524.8,492.4 525.9,492.1 526.9,492.7 528,491.4 529,491.8 530.1,494.8 531.1,495.4 532.2,496.1 533.2,496.5 534.3,496.7 535.3,497.1 536.4,497.2 537.4,497.2 538.5,497.1 539.5,496.1 540.6,493.8 541.6,490.3 542.7,490.5 543.7,493.1 544.8,493.6 545.8,492.8 546.9,494.1 547.9,491 549,491.3 550,490.9 551.1,491.1 552.1,492.5 553.2,492.4 554.2,493.5 555.3,491.7 556.3,493.8 557.4,493.9 558.4,493.4 559.5,493.7 560.5,493.2 561.6,494.2 562.6,494.4 563.7,493.9 564.7,494 565.8,493 566.8,494.1 567.9,491 568.9,491.7 570,493.2 571,492.6 572.1,491.2 573.1,489.6 574.2,491.9 575.2,490.5 576.3,490 577.3,491.9 578.4,491.8 579.4,493.3 580.5,493.2 581.5,492.3 582.6,492.7 583.6,490.6 584.7,493.2 585.7,493.7 586.8,489.8 587.8,491.2 588.9,492.6 589.9,490.6 591,493 592,491.1 593.1,489.5 594.1,490.4 595.2,491.4 596.2,493.3 597.3,493.3 598.3,494.1 599.4,492.5 600.4,493.4 601.5,493 602.5,493.9 603.6,494 604.6,492 605.7,491.4 606.7,491.9 607.8,492.1 608.8,492.2 609.9,492.5 610.9,494.2 612,493.8 613,494.5 614.1,495.5 615.1,495.8 616.2,495.7 617.2,496.1 618.3,496 619.3,496.1 620.2,496.8 620.2,498.4 619.3,499.1 618.3,499.2 617.2,499.1 616.2,499.5 615.1,499.4 614.1,499.7 613,500.7 612,501.4 610.9,501 609.9,502.7 608.8,503 607.8,503.1 606.7,503.3 605.7,503.8 604.6,503.2 603.6,501.2 602.5,501.3 601.5,502.2 600.4,501.8 599.4,502.7 598.3,501.1 597.3,501.9 596.2,501.9 595.2,503.8 594.1,504.8 593.1,505.7 592,504.1 591,502.2 589.9,504.6 588.9,502.6 587.8,504 586.8,505.4 585.7,501.5 584.7,502 583.6,504.6 582.6,502.5 581.5,502.9 580.5,502 579.4,501.9 578.4,503.4 577.3,503.3 576.3,505.2 575.2,504.7 574.2,503.3 573.1,505.6 572.1,504 571,502.6 570,502 568.9,503.5 567.9,504.2 566.8,501.1 565.8,502.2 564.7,501.2 563.7,501.3 562.6,500.8 561.6,501 560.5,502 559.5,501.5 558.4,501.8 557.4,501.3 556.3,501.4 555.3,503.5 554.2,501.7 553.2,502.8 552.1,502.7 551.1,504.1 550,504.3 549,503.9 547.9,504.2 546.9,501.1 545.8,502.4 544.8,501.6 543.7,502.1 542.7,504.7 541.6,504.9 540.6,501.4 539.5,499.1 538.5,498.1 537.4,498 536.4,498 535.3,498.1 534.3,498.5 533.2,498.7 532.2,499.1 531.1,499.8 530.1,500.4 529,503.4 528,503.8 526.9,502.5 525.9,503.1 524.8,502.8 523.8,505.1 522.7,504.9 521.7,505.2 520.6,504.5 519.6,504.9 518.5,503.4 517.5,506.8 516.4,503.8 515.4,502.7 514.3,502.1 513.3,504.5 512.2,501.6 511.2,501.7 510.1,501.3 509.1,501.5 508,499.9 507,501.2 505.9,500.5 504.9,500.3 503.8,501.9 502.8,502.7 501.7,502.2 500.7,502.7 499.6,500.9 498.6,503.1 497.5,502.7 496.5,504.2 495.4,503.8 494.4,502.4 493.3,502.8 492.3,502.7 491.2,503 490.2,501.9 489.1,503.8 488.1,503 487,503.8 486,503.7 484.9,501.5 483.9,503.5 482.8,502.4 481.8,505.5 480.7,504.4 479.7,503.3 478.6,506.7 477.6,502.3 476.5,503 475.5,502.7 474.4,501.2 473.4,500.6 472.3,499.4 471.3,500.6 470.2,501.3 469.2,500.6 468.1,501.1 467.1,501.6 466,500.9 465,500.7 463.9,500.8 462.9,499.5 461.8,499 460.8,499.2 459.7,501.2 458.7,501.3 457.6,502.2 456.6,502.3 455.5,501.3 454.5,503.2 453.4,501.6 452.4,500.9 451.3,500.9 450.3,502.9 449.2,507 448.2,501.5 447.1,502.4 446.1,499.7 445,500.5 444,501 442.9,499.2 441.9,498.3 440.8,498.2 439.8,498.7 438.7,498.7 437.7,498.8 436.6,499.8 435.6,504.8 434.5,502.1 433.5,501.5 432.4,500.4 431.4,501.9 430.3,502.4 429.3,500.9 428.2,502.5 427.2,501 426.1,503.1"/></g><g fill="#1a1110"><polygon points="621,466.2 622,468.7 623.1,466.9 624.1,468.8 625.2,467.1 626.2,467.6 627.3,469.3 628.3,468.1 629.4,467.3 630.4,464.2 631.5,470.1 632.5,471.1 633.6,471.3 634.6,471.4 635.7,471.8 636.7,471.8 637.8,470.7 638.8,468.6 639.9,469.3 640.9,470.1 642,467 643,468 644.1,461.7 645.1,466.5 646.2,468.8 647.2,468.8 648.3,468 649.3,466 650.4,468.3 651.4,467.1 652.5,467.2 653.5,468.3 654.6,468.5 655.6,470.7 656.7,471 657.7,470.4 658.8,468.9 659.8,468.9 660.9,468.8 661.9,468 663,468.5 664,469.1 665.1,468.3 666.1,469.2 667.2,470.5 668.2,469.1 669.3,468.4 670.3,466.6 671.4,466.3 672.4,467.1 673.5,462.1 674.5,466 675.6,464.7 676.6,463.5 677.7,467 678.7,465.8 679.8,468 680.8,465.5 681.9,465.4 682.9,466.4 684,465.3 685,467.6 686.1,466.3 687.1,466.6 688.2,466.6 689.2,467 690.3,465.4 691.3,464.9 692.4,466.7 693.4,466.3 694.5,468.7 695.5,466.7 696.6,467.3 697.6,466.7 698.7,467.6 699.7,469.4 700.8,469.3 701.8,468.4 702.9,469.9 703.9,468.1 705,468.3 706,467.8 707.1,467.9 708.1,464.6 709.2,467.4 710.2,466.7 711.3,465.3 712.3,461.9 713.4,465.9 714.4,464.1 715.5,464.6 716.5,463.8 717.6,464.1 718.6,463.9 719.7,466.6 720.7,466.2 721.8,467 722.8,465.4 723.9,465.8 724.9,469.3 726,470.1 727,470.8 728.1,471.3 729.1,471.5 730.2,472 731.2,472.1 732.3,472.2 733.3,472 734.4,470.8 735.4,468.2 736.5,464.1 737.5,464.3 738.6,467.3 739.6,467.9 740.7,467 741.7,468.6 742.8,464.9 743.8,465.3 744.9,464.8 745.9,465 747,466.6 748,466.5 749.1,467.9 750.1,465.7 751.2,468.2 752.2,468.2 753.3,467.8 754.3,468 755.4,467.5 756.4,468.7 757.5,468.9 758.5,468.3 759.6,468.4 760.6,467.3 761.7,468.5 762.7,464.9 763.8,465.7 764.8,467.5 765.9,466.8 766.9,465.1 768,463.3 769,466 770.1,464.3 771.1,463.8 772.2,466 773.2,465.8 774.3,467.6 775.3,467.4 776.4,466.4 777.4,466.9 778.5,464.4 779.5,467.5 780.6,468.1 781.6,463.5 782.7,465.2 783.7,466.8 784.8,464.5 785.8,467.2 786.9,465 787.9,463.2 789,464.2 790,465.4 791.1,467.6 792.1,467.5 793.2,468.5 794.2,466.7 795.3,467.8 796.3,467.2 797.4,468.3 798.4,468.5 799.5,466.1 800.5,465.3 801.6,466 802.6,466.2 803.7,466.3 804.7,466.7 805.8,468.7 806.8,468.1 807.9,469 808.9,470.1 810,470.5 811,470.4 812.1,470.9 813.1,470.7 814.2,470.9 815.1,471.6 815.1,473.6 814.2,474.3 813.1,474.5 812.1,474.3 811,474.8 810,474.7 808.9,475.1 807.9,476.2 806.8,477.1 805.8,476.5 804.7,478.5 803.7,478.9 802.6,479 801.6,479.2 800.5,479.9 799.5,479.1 798.4,476.7 797.4,476.9 796.3,478 795.3,477.4 794.2,478.5 793.2,476.7 792.1,477.7 791.1,477.6 790,479.8 789,481 787.9,482 786.9,480.2 785.8,478 784.8,480.7 783.7,478.4 782.7,480 781.6,481.7 780.6,477.1 779.5,477.7 778.5,480.8 777.4,478.3 776.4,478.8 775.3,477.8 774.3,477.6 773.2,479.4 772.2,479.2 771.1,481.4 770.1,480.9 769,479.2 768,481.9 766.9,480.1 765.9,478.4 764.8,477.7 763.8,479.5 762.7,480.3 761.7,476.7 760.6,477.9 759.6,476.8 758.5,476.9 757.5,476.3 756.4,476.5 755.4,477.7 754.3,477.2 753.3,477.4 752.2,477 751.2,477 750.1,479.5 749.1,477.3 748,478.7 747,478.6 745.9,480.2 744.9,480.4 743.8,479.9 742.8,480.3 741.7,476.6 740.7,478.2 739.6,477.3 738.6,477.9 737.5,480.9 736.5,481.1 735.4,477 734.4,474.4 733.3,473.2 732.3,473.1 731.2,473.1 730.2,473.2 729.1,473.7 728.1,473.9 727,474.4 726,475.1 724.9,475.9 723.9,479.4 722.8,479.8 721.8,478.2 720.7,479 719.7,478.6 718.6,481.3 717.6,481.1 716.5,481.4 715.5,480.6 714.4,481.1 713.4,479.3 712.3,483.3 711.3,479.9 710.2,478.5 709.2,477.8 708.1,480.6 707.1,477.3 706,477.4 705,476.9 703.9,477.1 702.9,475.3 701.8,476.8 700.8,475.9 699.7,475.8 698.7,477.6 697.6,478.5 696.6,477.9 695.5,478.5 694.5,476.5 693.4,478.9 692.4,478.5 691.3,480.3 690.3,479.8 689.2,478.2 688.2,478.6 687.1,478.6 686.1,478.9 685,477.6 684,479.9 682.9,478.8 681.9,479.8 680.8,479.7 679.8,477.2 678.7,479.4 677.7,478.2 676.6,481.7 675.6,480.5 674.5,479.2 673.5,483.1 672.4,478.1 671.4,478.9 670.3,478.6 669.3,476.8 668.2,476.1 667.2,474.7 666.1,476 665.1,476.9 664,476.1 663,476.7 661.9,477.2 660.9,476.4 659.8,476.3 658.8,476.3 657.7,474.8 656.7,474.2 655.6,474.5 654.6,476.7 653.5,476.9 652.5,478 651.4,478.1 650.4,476.9 649.3,479.2 648.3,477.2 647.2,476.4 646.2,476.4 645.1,478.7 644.1,483.5 643,477.2 642,478.2 640.9,475.1 639.9,475.9 638.8,476.6 637.8,474.5 636.7,473.4 635.7,473.4 634.6,473.8 633.6,473.9 632.5,474.1 631.5,475.1 630.4,481 629.4,477.9 628.3,477.1 627.3,475.9 626.2,477.6 625.2,478.1 624.1,476.4 623.1,478.3 622,476.5 621,479"/><polygon points="621,492.1 622,494.2 623.1,492.7 624.1,494.3 625.2,492.8 626.2,493.3 627.3,494.8 628.3,493.7 629.4,493.1 630.4,490.4 631.5,495.4 632.5,496.4 633.6,496.5 634.6,496.5 635.7,497 636.7,496.9 637.8,496 638.8,494.2 639.9,494.7 640.9,495.5 642,492.8 643,493.7 644.1,488.2 645.1,492.3 646.2,494.3 647.2,494.3 648.3,493.6 649.3,492 650.4,493.9 651.4,492.9 652.5,493 653.5,493.9 654.6,494 655.6,496 656.7,496.2 657.7,495.7 658.8,494.4 659.8,494.5 660.9,494.3 661.9,493.6 663,494.1 664,494.6 665.1,493.9 666.1,494.6 667.2,495.8 668.2,494.6 669.3,494 670.3,492.5 671.4,492.2 672.4,492.9 673.5,488.5 674.5,491.9 675.6,490.8 676.6,489.7 677.7,492.8 678.7,491.7 679.8,493.7 680.8,491.5 681.9,491.4 682.9,492.2 684,491.4 685,493.3 686.1,492.2 687.1,492.5 688.2,492.4 689.2,492.8 690.3,491.4 691.3,491 692.4,492.5 693.4,492.1 694.5,494.3 695.5,492.5 696.6,493 697.6,492.5 698.7,493.3 699.7,494.9 700.8,494.7 701.8,494 702.9,495.3 703.9,493.7 705,493.9 706,493.5 707.1,493.6 708.1,490.7 709.2,493.1 710.2,492.5 711.3,491.4 712.3,488.4 713.4,491.8 714.4,490.3 715.5,490.7 716.5,490 717.6,490.3 718.6,490.1 719.7,492.4 720.7,492.1 721.8,492.7 722.8,491.4 723.9,491.8 724.9,494.8 726,495.4 727,496.1 728.1,496.5 729.1,496.7 730.2,497.1 731.2,497.2 732.3,497.2 733.3,497.1 734.4,496.1 735.4,493.8 736.5,490.3 737.5,490.5 738.6,493.1 739.6,493.6 740.7,492.8 741.7,494.1 742.8,491 743.8,491.3 744.9,490.9 745.9,491.1 747,492.5 748,492.4 749.1,493.5 750.1,491.7 751.2,493.8 752.2,493.9 753.3,493.4 754.3,493.7 755.4,493.2 756.4,494.2 757.5,494.4 758.5,493.9 759.6,494 760.6,493 761.7,494.1 762.7,491 763.8,491.7 764.8,493.2 765.9,492.6 766.9,491.2 768,489.6 769,491.9 770.1,490.5 771.1,490 772.2,491.9 773.2,491.8 774.3,493.3 775.3,493.2 776.4,492.3 777.4,492.7 778.5,490.6 779.5,493.2 780.6,493.7 781.6,489.8 782.7,491.2 783.7,492.6 784.8,490.6 785.8,493 786.9,491.1 787.9,489.5 789,490.4 790,491.4 791.1,493.3 792.1,493.3 793.2,494.1 794.2,492.5 795.3,493.4 796.3,493 797.4,493.9 798.4,494 799.5,492 800.5,491.4 801.6,491.9 802.6,492.1 803.7,492.2 804.7,492.5 805.8,494.2 806.8,493.8 807.9,494.5 808.9,495.5 810,495.8 811,495.7 812.1,496.1 813.1,496 814.2,496.1 815.1,496.8 815.1,498.4 814.2,499.1 813.1,499.2 812.1,499.1 811,499.5 810,499.4 808.9,499.7 807.9,500.7 806.8,501.4 805.8,501 804.7,502.7 803.7,503 802.6,503.1 801.6,503.3 800.5,503.8 799.5,503.2 798.4,501.2 797.4,501.3 796.3,502.2 795.3,501.8 794.2,502.7 793.2,501.1 792.1,501.9 791.1,501.9 790,503.8 789,504.8 787.9,505.7 786.9,504.1 785.8,502.2 784.8,504.6 783.7,502.6 782.7,504 781.6,505.4 780.6,501.5 779.5,502 778.5,504.6 777.4,502.5 776.4,502.9 775.3,502 774.3,501.9 773.2,503.4 772.2,503.3 771.1,505.2 770.1,504.7 769,503.3 768,505.6 766.9,504 765.9,502.6 764.8,502 763.8,503.5 762.7,504.2 761.7,501.1 760.6,502.2 759.6,501.2 758.5,501.3 757.5,500.8 756.4,501 755.4,502 754.3,501.5 753.3,501.8 752.2,501.3 751.2,501.4 750.1,503.5 749.1,501.7 748,502.8 747,502.7 745.9,504.1 744.9,504.3 743.8,503.9 742.8,504.2 741.7,501.1 740.7,502.4 739.6,501.6 738.6,502.1 737.5,504.7 736.5,504.9 735.4,501.4 734.4,499.1 733.3,498.1 732.3,498 731.2,498 730.2,498.1 729.1,498.5 728.1,498.7 727,499.1 726,499.8 724.9,500.4 723.9,503.4 722.8,503.8 721.8,502.5 720.7,503.1 719.7,502.8 718.6,505.1 717.6,504.9 716.5,505.2 715.5,504.5 714.4,504.9 713.4,503.4 712.3,506.8 711.3,503.8 710.2,502.7 709.2,502.1 708.1,504.5 707.1,501.6 706,501.7 705,501.3 703.9,501.5 702.9,499.9 701.8,501.2 700.8,500.5 699.7,500.3 698.7,501.9 697.6,502.7 696.6,502.2 695.5,502.7 694.5,500.9 693.4,503.1 692.4,502.7 691.3,504.2 690.3,503.8 689.2,502.4 688.2,502.8 687.1,502.7 686.1,503 685,501.9 684,503.8 682.9,503 681.9,503.8 680.8,503.7 679.8,501.5 678.7,503.5 677.7,502.4 676.6,505.5 675.6,504.4 674.5,503.3 673.5,506.7 672.4,502.3 671.4,503 670.3,502.7 669.3,501.2 668.2,500.6 667.2,499.4 666.1,500.6 665.1,501.3 664,500.6 663,501.1 661.9,501.6 660.9,500.9 659.8,500.7 658.8,500.8 657.7,499.5 656.7,499 655.6,499.2 654.6,501.2 653.5,501.3 652.5,502.2 651.4,502.3 650.4,501.3 649.3,503.2 648.3,501.6 647.2,500.9 646.2,500.9 645.1,502.9 644.1,507 643,501.5 642,502.4 640.9,499.7 639.9,500.5 638.8,501 637.8,499.2 636.7,498.3 635.7,498.2 634.6,498.7 633.6,498.7 632.5,498.8 631.5,499.8 630.4,504.8 629.4,502.1 628.3,501.5 627.3,500.4 626.2,501.9 625.2,502.4 624.1,500.9 623.1,502.5 622,501 621,503.1"/></g><g fill="#1a1110"><polygon points="1010.7,466.2 1011.8,468.7 1012.8,466.9 1013.9,468.8 1014.9,467.1 1016,467.6 1017,469.3 1018.1,468.1 1019.1,467.3 1020.2,464.2 1021.2,470.1 1022.3,471.1 1023.3,471.3 1024.4,471.4 1025.5,471.8 1026.5,471.8 1027.5,470.7 1028.6,468.6 1029.6,469.3 1030.7,470.1 1031.8,467 1032.8,468 1033.8,461.7 1034.9,466.5 1036,468.8 1037,468.8 1038,468 1039.1,466 1040.1,468.3 1041.2,467.1 1042.2,467.2 1043.3,468.3 1044.3,468.5 1045.4,470.7 1046.4,471 1047.5,470.4 1048.5,468.9 1049.6,468.9 1050.6,468.8 1051.7,468 1052.8,468.5 1053.8,469.1 1054.8,468.3 1055.9,469.2 1056.9,470.5 1058,469.1 1059,468.4 1060.1,466.6 1061.1,466.3 1062.2,467.1 1063.2,462.1 1064.3,466 1065.3,464.7 1066.4,463.5 1067.4,467 1068.5,465.8 1069.5,468 1070.6,465.5 1071.6,465.4 1072.7,466.4 1073.7,465.3 1074.8,467.6 1075.8,466.3 1076.9,466.6 1077.9,466.6 1079,467 1080,465.4 1081.1,464.9 1082.1,466.7 1083.2,466.3 1084.2,468.7 1085.3,466.7 1086.3,467.3 1087.4,466.7 1088.4,467.6 1089.5,469.4 1090.5,469.3 1091.6,468.4 1092.6,469.9 1093.7,468.1 1094.7,468.3 1095.8,467.8 1096.8,467.9 1097.9,464.6 1098.9,467.4 1100,466.7 1101,465.3 1102.1,461.9 1103.1,465.9 1104.2,464.1 1105.2,464.6 1106.3,463.8 1107.3,464.1 1108.4,463.9 1109.4,466.6 1110.5,466.2 1111.5,467 1112.6,465.4 1113.6,465.8 1114.7,469.3 1115.7,470.1 1116.8,470.8 1117.8,471.3 1118.9,471.5 1119.9,472 1121,472.1 1122,472.2 1123.1,472 1124.1,470.8 1125.2,468.2 1126.2,464.1 1127.3,464.3 1128.3,467.3 1129.4,467.9 1130.4,467 1131.5,468.6 1132.5,464.9 1133.6,465.3 1134.6,464.8 1135.7,465 1136.7,466.6 1137.8,466.5 1138.8,467.9 1139.9,465.7 1140.9,468.2 1142,468.2 1143,467.8 1144.1,468 1145.1,467.5 1146.2,468.7 1147.2,468.9 1148.3,468.3 1149.3,468.4 1150.4,467.3 1151.4,468.5 1152.5,464.9 1153.5,465.7 1154.6,467.5 1155.6,466.8 1156.7,465.1 1157.8,463.3 1158.8,466 1159.8,464.3 1160.9,463.8 1161.9,466 1163,465.8 1164,467.6 1165.1,467.4 1166.2,466.4 1167.2,466.9 1168.2,464.4 1169.3,467.5 1170.3,468.1 1171.4,463.5 1172.5,465.2 1173.5,466.8 1174.6,464.5 1175.6,467.2 1176.7,465 1177.7,463.2 1178.8,464.2 1179.8,465.4 1180.9,467.6 1181.9,467.5 1183,468.5 1184,466.7 1185.1,467.8 1186.1,467.2 1187.2,468.3 1188.2,468.5 1189.3,466.1 1190.3,465.3 1191.4,466 1192.4,466.2 1193.5,466.3 1194.5,466.7 1195.6,468.7 1196.6,468.1 1197.7,469 1198.7,470.1 1199.8,470.5 1200.8,470.4 1201.9,470.9 1202.9,470.7 1204,470.9 1204.8,471.6 1204.8,473.6 1204,474.3 1202.9,474.5 1201.9,474.3 1200.8,474.8 1199.8,474.7 1198.7,475.1 1197.7,476.2 1196.6,477.1 1195.6,476.5 1194.5,478.5 1193.5,478.9 1192.4,479 1191.4,479.2 1190.3,479.9 1189.3,479.1 1188.2,476.7 1187.2,476.9 1186.1,478 1185.1,477.4 1184,478.5 1183,476.7 1181.9,477.7 1180.9,477.6 1179.8,479.8 1178.8,481 1177.7,482 1176.7,480.2 1175.6,478 1174.6,480.7 1173.5,478.4 1172.5,480 1171.4,481.7 1170.3,477.1 1169.3,477.7 1168.2,480.8 1167.2,478.3 1166.2,478.8 1165.1,477.8 1164,477.6 1163,479.4 1161.9,479.2 1160.9,481.4 1159.8,480.9 1158.8,479.2 1157.8,481.9 1156.7,480.1 1155.6,478.4 1154.6,477.7 1153.5,479.5 1152.5,480.3 1151.4,476.7 1150.4,477.9 1149.3,476.8 1148.3,476.9 1147.2,476.3 1146.2,476.5 1145.1,477.7 1144.1,477.2 1143,477.4 1142,477 1140.9,477 1139.9,479.5 1138.8,477.3 1137.8,478.7 1136.7,478.6 1135.7,480.2 1134.6,480.4 1133.6,479.9 1132.5,480.3 1131.5,476.6 1130.4,478.2 1129.4,477.3 1128.3,477.9 1127.3,480.9 1126.2,481.1 1125.2,477 1124.1,474.4 1123.1,473.2 1122,473.1 1121,473.1 1119.9,473.2 1118.9,473.7 1117.8,473.9 1116.8,474.4 1115.7,475.1 1114.7,475.9 1113.6,479.4 1112.6,479.8 1111.5,478.2 1110.5,479 1109.4,478.6 1108.4,481.3 1107.3,481.1 1106.3,481.4 1105.2,480.6 1104.2,481.1 1103.1,479.3 1102.1,483.3 1101,479.9 1100,478.5 1098.9,477.8 1097.9,480.6 1096.8,477.3 1095.8,477.4 1094.7,476.9 1093.7,477.1 1092.6,475.3 1091.6,476.8 1090.5,475.9 1089.5,475.8 1088.4,477.6 1087.4,478.5 1086.3,477.9 1085.3,478.5 1084.2,476.5 1083.2,478.9 1082.1,478.5 1081.1,480.3 1080,479.8 1079,478.2 1077.9,478.6 1076.9,478.6 1075.8,478.9 1074.8,477.6 1073.7,479.9 1072.7,478.8 1071.6,479.8 1070.6,479.7 1069.5,477.2 1068.5,479.4 1067.4,478.2 1066.4,481.7 1065.3,480.5 1064.3,479.2 1063.2,483.1 1062.2,478.1 1061.1,478.9 1060.1,478.6 1059,476.8 1058,476.1 1056.9,474.7 1055.9,476 1054.8,476.9 1053.8,476.1 1052.8,476.7 1051.7,477.2 1050.6,476.4 1049.6,476.3 1048.5,476.3 1047.5,474.8 1046.4,474.2 1045.4,474.5 1044.3,476.7 1043.3,476.9 1042.2,478 1041.2,478.1 1040.1,476.9 1039.1,479.2 1038,477.2 1037,476.4 1036,476.4 1034.9,478.7 1033.8,483.5 1032.8,477.2 1031.8,478.2 1030.7,475.1 1029.6,475.9 1028.6,476.6 1027.5,474.5 1026.5,473.4 1025.5,473.4 1024.4,473.8 1023.3,473.9 1022.3,474.1 1021.2,475.1 1020.2,481 1019.1,477.9 1018.1,477.1 1017,475.9 1016,477.6 1014.9,478.1 1013.9,476.4 1012.8,478.3 1011.8,476.5 1010.7,479"/><polygon points="1010.7,492.1 1011.8,494.2 1012.8,492.7 1013.9,494.3 1014.9,492.8 1016,493.3 1017,494.8 1018.1,493.7 1019.1,493.1 1020.2,490.4 1021.2,495.4 1022.3,496.4 1023.3,496.5 1024.4,496.5 1025.5,497 1026.5,496.9 1027.5,496 1028.6,494.2 1029.6,494.7 1030.7,495.5 1031.8,492.8 1032.8,493.7 1033.8,488.2 1034.9,492.3 1036,494.3 1037,494.3 1038,493.6 1039.1,492 1040.1,493.9 1041.2,492.9 1042.2,493 1043.3,493.9 1044.3,494 1045.4,496 1046.4,496.2 1047.5,495.7 1048.5,494.4 1049.6,494.5 1050.6,494.3 1051.7,493.6 1052.8,494.1 1053.8,494.6 1054.8,493.9 1055.9,494.6 1056.9,495.8 1058,494.6 1059,494 1060.1,492.5 1061.1,492.2 1062.2,492.9 1063.2,488.5 1064.3,491.9 1065.3,490.8 1066.4,489.7 1067.4,492.8 1068.5,491.7 1069.5,493.7 1070.6,491.5 1071.6,491.4 1072.7,492.2 1073.7,491.4 1074.8,493.3 1075.8,492.2 1076.9,492.5 1077.9,492.4 1079,492.8 1080,491.4 1081.1,491 1082.1,492.5 1083.2,492.1 1084.2,494.3 1085.3,492.5 1086.3,493 1087.4,492.5 1088.4,493.3 1089.5,494.9 1090.5,494.7 1091.6,494 1092.6,495.3 1093.7,493.7 1094.7,493.9 1095.8,493.5 1096.8,493.6 1097.9,490.7 1098.9,493.1 1100,492.5 1101,491.4 1102.1,488.4 1103.1,491.8 1104.2,490.3 1105.2,490.7 1106.3,490 1107.3,490.3 1108.4,490.1 1109.4,492.4 1110.5,492.1 1111.5,492.7 1112.6,491.4 1113.6,491.8 1114.7,494.8 1115.7,495.4 1116.8,496.1 1117.8,496.5 1118.9,496.7 1119.9,497.1 1121,497.2 1122,497.2 1123.1,497.1 1124.1,496.1 1125.2,493.8 1126.2,490.3 1127.3,490.5 1128.3,493.1 1129.4,493.6 1130.4,492.8 1131.5,494.1 1132.5,491 1133.6,491.3 1134.6,490.9 1135.7,491.1 1136.7,492.5 1137.8,492.4 1138.8,493.5 1139.9,491.7 1140.9,493.8 1142,493.9 1143,493.4 1144.1,493.7 1145.1,493.2 1146.2,494.2 1147.2,494.4 1148.3,493.9 1149.3,494 1150.4,493 1151.4,494.1 1152.5,491 1153.5,491.7 1154.6,493.2 1155.6,492.6 1156.7,491.2 1157.8,489.6 1158.8,491.9 1159.8,490.5 1160.9,490 1161.9,491.9 1163,491.8 1164,493.3 1165.1,493.2 1166.2,492.3 1167.2,492.7 1168.2,490.6 1169.3,493.2 1170.3,493.7 1171.4,489.8 1172.5,491.2 1173.5,492.6 1174.6,490.6 1175.6,493 1176.7,491.1 1177.7,489.5 1178.8,490.4 1179.8,491.4 1180.9,493.3 1181.9,493.3 1183,494.1 1184,492.5 1185.1,493.4 1186.1,493 1187.2,493.9 1188.2,494 1189.3,492 1190.3,491.4 1191.4,491.9 1192.4,492.1 1193.5,492.2 1194.5,492.5 1195.6,494.2 1196.6,493.8 1197.7,494.5 1198.7,495.5 1199.8,495.8 1200.8,495.7 1201.9,496.1 1202.9,496 1204,496.1 1204.8,496.8 1204.8,498.4 1204,499.1 1202.9,499.2 1201.9,499.1 1200.8,499.5 1199.8,499.4 1198.7,499.7 1197.7,500.7 1196.6,501.4 1195.6,501 1194.5,502.7 1193.5,503 1192.4,503.1 1191.4,503.3 1190.3,503.8 1189.3,503.2 1188.2,501.2 1187.2,501.3 1186.1,502.2 1185.1,501.8 1184,502.7 1183,501.1 1181.9,501.9 1180.9,501.9 1179.8,503.8 1178.8,504.8 1177.7,505.7 1176.7,504.1 1175.6,502.2 1174.6,504.6 1173.5,502.6 1172.5,504 1171.4,505.4 1170.3,501.5 1169.3,502 1168.2,504.6 1167.2,502.5 1166.2,502.9 1165.1,502 1164,501.9 1163,503.4 1161.9,503.3 1160.9,505.2 1159.8,504.7 1158.8,503.3 1157.8,505.6 1156.7,504 1155.6,502.6 1154.6,502 1153.5,503.5 1152.5,504.2 1151.4,501.1 1150.4,502.2 1149.3,501.2 1148.3,501.3 1147.2,500.8 1146.2,501 1145.1,502 1144.1,501.5 1143,501.8 1142,501.3 1140.9,501.4 1139.9,503.5 1138.8,501.7 1137.8,502.8 1136.7,502.7 1135.7,504.1 1134.6,504.3 1133.6,503.9 1132.5,504.2 1131.5,501.1 1130.4,502.4 1129.4,501.6 1128.3,502.1 1127.3,504.7 1126.2,504.9 1125.2,501.4 1124.1,499.1 1123.1,498.1 1122,498 1121,498 1119.9,498.1 1118.9,498.5 1117.8,498.7 1116.8,499.1 1115.7,499.8 1114.7,500.4 1113.6,503.4 1112.6,503.8 1111.5,502.5 1110.5,503.1 1109.4,502.8 1108.4,505.1 1107.3,504.9 1106.3,505.2 1105.2,504.5 1104.2,504.9 1103.1,503.4 1102.1,506.8 1101,503.8 1100,502.7 1098.9,502.1 1097.9,504.5 1096.8,501.6 1095.8,501.7 1094.7,501.3 1093.7,501.5 1092.6,499.9 1091.6,501.2 1090.5,500.5 1089.5,500.3 1088.4,501.9 1087.4,502.7 1086.3,502.2 1085.3,502.7 1084.2,500.9 1083.2,503.1 1082.1,502.7 1081.1,504.2 1080,503.8 1079,502.4 1077.9,502.8 1076.9,502.7 1075.8,503 1074.8,501.9 1073.7,503.8 1072.7,503 1071.6,503.8 1070.6,503.7 1069.5,501.5 1068.5,503.5 1067.4,502.4 1066.4,505.5 1065.3,504.4 1064.3,503.3 1063.2,506.7 1062.2,502.3 1061.1,503 1060.1,502.7 1059,501.2 1058,500.6 1056.9,499.4 1055.9,500.6 1054.8,501.3 1053.8,500.6 1052.8,501.1 1051.7,501.6 1050.6,500.9 1049.6,500.7 1048.5,500.8 1047.5,499.5 1046.4,499 1045.4,499.2 1044.3,501.2 1043.3,501.3 1042.2,502.2 1041.2,502.3 1040.1,501.3 1039.1,503.2 1038,501.6 1037,500.9 1036,500.9 1034.9,502.9 1033.8,507 1032.8,501.5 1031.8,502.4 1030.7,499.7 1029.6,500.5 1028.6,501 1027.5,499.2 1026.5,498.3 1025.5,498.2 1024.4,498.7 1023.3,498.7 1022.3,498.8 1021.2,499.8 1020.2,504.8 1019.1,502.1 1018.1,501.5 1017,500.4 1016,501.9 1014.9,502.4 1013.9,500.9 1012.8,502.5 1011.8,501 1010.7,503.1"/></g><g fill="#1a1110"><polygon points="1205.6,466.2 1206.7,468.7 1207.7,466.9 1208.8,468.8 1209.8,467.1 1210.9,467.6 1211.9,469.3 1213,468.1 1214,467.3 1215.1,464.2 1216.1,470.1 1217.2,471.1 1218.2,471.3 1219.3,471.4 1220.3,471.8 1221.4,471.8 1222.4,470.7 1223.5,468.6 1224.5,469.3 1225.6,470.1 1226.6,467 1227.7,468 1228.7,461.7 1229.8,466.5 1230.8,468.8 1231.9,468.8 1232.9,468 1234,466 1235,468.3 1236.1,467.1 1237.1,467.2 1238.2,468.3 1239.2,468.5 1240.3,470.7 1241.3,471 1242.4,470.4 1243.4,468.9 1244.5,468.9 1245.5,468.8 1246.6,468 1247.6,468.5 1248.7,469.1 1249.7,468.3 1250.8,469.2 1251.8,470.5 1252.9,469.1 1253.9,468.4 1255,466.6 1256,466.3 1257.1,467.1 1258.1,462.1 1259.2,466 1260.2,464.7 1261.3,463.5 1262.3,467 1263.4,465.8 1264.4,468 1265.5,465.5 1266.5,465.4 1267.6,466.4 1268.6,465.3 1269.7,467.6 1270.7,466.3 1271.8,466.6 1272.8,466.6 1273.9,467 1274.9,465.4 1276,464.9 1277,466.7 1278.1,466.3 1279.1,468.7 1280.2,466.7 1281.2,467.3 1282.3,466.7 1283.3,467.6 1284.4,469.4 1285.4,469.3 1286.5,468.4 1287.5,469.9 1288.6,468.1 1289.6,468.3 1290.7,467.8 1291.7,467.9 1292.8,464.6 1293.8,467.4 1294.9,466.7 1295.9,465.3 1297,461.9 1298,465.9 1299.1,464.1 1300.1,464.6 1301.2,463.8 1302.2,464.1 1303.3,463.9 1304.3,466.6 1305.4,466.2 1306.4,467 1307.5,465.4 1308.5,465.8 1309.6,469.3 1310.6,470.1 1311.7,470.8 1312.7,471.3 1313.8,471.5 1314.8,472 1315.9,472.1 1316.9,472.2 1318,472 1319,470.8 1320.1,468.2 1321.1,464.1 1322.2,464.3 1323.2,467.3 1324.3,467.9 1325.3,467 1326.4,468.6 1327.4,464.9 1328.5,465.3 1329.5,464.8 1330.6,465 1331.6,466.6 1332.7,466.5 1333.7,467.9 1334.8,465.7 1335.8,468.2 1336.9,468.2 1337.9,467.8 1339,468 1340,467.5 1341.1,468.7 1342.1,468.9 1343.2,468.3 1344.2,468.4 1345.3,467.3 1346.3,468.5 1347.4,464.9 1348.4,465.7 1349.5,467.5 1350.5,466.8 1351.6,465.1 1352.6,463.3 1353.7,466 1354.7,464.3 1355.8,463.8 1356.8,466 1357.9,465.8 1358.9,467.6 1360,467.4 1361,466.4 1362.1,466.9 1363.1,464.4 1364.2,467.5 1365.2,468.1 1366.3,463.5 1367.3,465.2 1368.4,466.8 1369.4,464.5 1370.5,467.2 1371.5,465 1372.6,463.2 1373.6,464.2 1374.7,465.4 1375.7,467.6 1376.8,467.5 1377.8,468.5 1378.9,466.7 1379.9,467.8 1381,467.2 1382,468.3 1383.1,468.5 1384.1,466.1 1385.2,465.3 1386.2,466 1387.3,466.2 1388.3,466.3 1389.4,466.7 1390.4,468.7 1391.5,468.1 1392.5,469 1393.6,470.1 1394.6,470.5 1395.7,470.4 1396.7,470.9 1397.8,470.7 1398.8,470.9 1399.7,471.6 1399.7,473.6 1398.8,474.3 1397.8,474.5 1396.7,474.3 1395.7,474.8 1394.6,474.7 1393.6,475.1 1392.5,476.2 1391.5,477.1 1390.4,476.5 1389.4,478.5 1388.3,478.9 1387.3,479 1386.2,479.2 1385.2,479.9 1384.1,479.1 1383.1,476.7 1382,476.9 1381,478 1379.9,477.4 1378.9,478.5 1377.8,476.7 1376.8,477.7 1375.7,477.6 1374.7,479.8 1373.6,481 1372.6,482 1371.5,480.2 1370.5,478 1369.4,480.7 1368.4,478.4 1367.3,480 1366.3,481.7 1365.2,477.1 1364.2,477.7 1363.1,480.8 1362.1,478.3 1361,478.8 1360,477.8 1358.9,477.6 1357.9,479.4 1356.8,479.2 1355.8,481.4 1354.7,480.9 1353.7,479.2 1352.6,481.9 1351.6,480.1 1350.5,478.4 1349.5,477.7 1348.4,479.5 1347.4,480.3 1346.3,476.7 1345.3,477.9 1344.2,476.8 1343.2,476.9 1342.1,476.3 1341.1,476.5 1340,477.7 1339,477.2 1337.9,477.4 1336.9,477 1335.8,477 1334.8,479.5 1333.7,477.3 1332.7,478.7 1331.6,478.6 1330.6,480.2 1329.5,480.4 1328.5,479.9 1327.4,480.3 1326.4,476.6 1325.3,478.2 1324.3,477.3 1323.2,477.9 1322.2,480.9 1321.1,481.1 1320.1,477 1319,474.4 1318,473.2 1316.9,473.1 1315.9,473.1 1314.8,473.2 1313.8,473.7 1312.7,473.9 1311.7,474.4 1310.6,475.1 1309.6,475.9 1308.5,479.4 1307.5,479.8 1306.4,478.2 1305.4,479 1304.3,478.6 1303.3,481.3 1302.2,481.1 1301.2,481.4 1300.1,480.6 1299.1,481.1 1298,479.3 1297,483.3 1295.9,479.9 1294.9,478.5 1293.8,477.8 1292.8,480.6 1291.7,477.3 1290.7,477.4 1289.6,476.9 1288.6,477.1 1287.5,475.3 1286.5,476.8 1285.4,475.9 1284.4,475.8 1283.3,477.6 1282.3,478.5 1281.2,477.9 1280.2,478.5 1279.1,476.5 1278.1,478.9 1277,478.5 1276,480.3 1274.9,479.8 1273.9,478.2 1272.8,478.6 1271.8,478.6 1270.7,478.9 1269.7,477.6 1268.6,479.9 1267.6,478.8 1266.5,479.8 1265.5,479.7 1264.4,477.2 1263.4,479.4 1262.3,478.2 1261.3,481.7 1260.2,480.5 1259.2,479.2 1258.1,483.1 1257.1,478.1 1256,478.9 1255,478.6 1253.9,476.8 1252.9,476.1 1251.8,474.7 1250.8,476 1249.7,476.9 1248.7,476.1 1247.6,476.7 1246.6,477.2 1245.5,476.4 1244.5,476.3 1243.4,476.3 1242.4,474.8 1241.3,474.2 1240.3,474.5 1239.2,476.7 1238.2,476.9 1237.1,478 1236.1,478.1 1235,476.9 1234,479.2 1232.9,477.2 1231.9,476.4 1230.8,476.4 1229.8,478.7 1228.7,483.5 1227.7,477.2 1226.6,478.2 1225.6,475.1 1224.5,475.9 1223.5,476.6 1222.4,474.5 1221.4,473.4 1220.3,473.4 1219.3,473.8 1218.2,473.9 1217.2,474.1 1216.1,475.1 1215.1,481 1214,477.9 1213,477.1 1211.9,475.9 1210.9,477.6 1209.8,478.1 1208.8,476.4 1207.7,478.3 1206.7,476.5 1205.6,479"/><polygon points="1205.6,492.1 1206.7,494.2 1207.7,492.7 1208.8,494.3 1209.8,492.8 1210.9,493.3 1211.9,494.8 1213,493.7 1214,493.1 1215.1,490.4 1216.1,495.4 1217.2,496.4 1218.2,496.5 1219.3,496.5 1220.3,497 1221.4,496.9 1222.4,496 1223.5,494.2 1224.5,494.7 1225.6,495.5 1226.6,492.8 1227.7,493.7 1228.7,488.2 1229.8,492.3 1230.8,494.3 1231.9,494.3 1232.9,493.6 1234,492 1235,493.9 1236.1,492.9 1237.1,493 1238.2,493.9 1239.2,494 1240.3,496 1241.3,496.2 1242.4,495.7 1243.4,494.4 1244.5,494.5 1245.5,494.3 1246.6,493.6 1247.6,494.1 1248.7,494.6 1249.7,493.9 1250.8,494.6 1251.8,495.8 1252.9,494.6 1253.9,494 1255,492.5 1256,492.2 1257.1,492.9 1258.1,488.5 1259.2,491.9 1260.2,490.8 1261.3,489.7 1262.3,492.8 1263.4,491.7 1264.4,493.7 1265.5,491.5 1266.5,491.4 1267.6,492.2 1268.6,491.4 1269.7,493.3 1270.7,492.2 1271.8,492.5 1272.8,492.4 1273.9,492.8 1274.9,491.4 1276,491 1277,492.5 1278.1,492.1 1279.1,494.3 1280.2,492.5 1281.2,493 1282.3,492.5 1283.3,493.3 1284.4,494.9 1285.4,494.7 1286.5,494 1287.5,495.3 1288.6,493.7 1289.6,493.9 1290.7,493.5 1291.7,493.6 1292.8,490.7 1293.8,493.1 1294.9,492.5 1295.9,491.4 1297,488.4 1298,491.8 1299.1,490.3 1300.1,490.7 1301.2,490 1302.2,490.3 1303.3,490.1 1304.3,492.4 1305.4,492.1 1306.4,492.7 1307.5,491.4 1308.5,491.8 1309.6,494.8 1310.6,495.4 1311.7,496.1 1312.7,496.5 1313.8,496.7 1314.8,497.1 1315.9,497.2 1316.9,497.2 1318,497.1 1319,496.1 1320.1,493.8 1321.1,490.3 1322.2,490.5 1323.2,493.1 1324.3,493.6 1325.3,492.8 1326.4,494.1 1327.4,491 1328.5,491.3 1329.5,490.9 1330.6,491.1 1331.6,492.5 1332.7,492.4 1333.7,493.5 1334.8,491.7 1335.8,493.8 1336.9,493.9 1337.9,493.4 1339,493.7 1340,493.2 1341.1,494.2 1342.1,494.4 1343.2,493.9 1344.2,494 1345.3,493 1346.3,494.1 1347.4,491 1348.4,491.7 1349.5,493.2 1350.5,492.6 1351.6,491.2 1352.6,489.6 1353.7,491.9 1354.7,490.5 1355.8,490 1356.8,491.9 1357.9,491.8 1358.9,493.3 1360,493.2 1361,492.3 1362.1,492.7 1363.1,490.6 1364.2,493.2 1365.2,493.7 1366.3,489.8 1367.3,491.2 1368.4,492.6 1369.4,490.6 1370.5,493 1371.5,491.1 1372.6,489.5 1373.6,490.4 1374.7,491.4 1375.7,493.3 1376.8,493.3 1377.8,494.1 1378.9,492.5 1379.9,493.4 1381,493 1382,493.9 1383.1,494 1384.1,492 1385.2,491.4 1386.2,491.9 1387.3,492.1 1388.3,492.2 1389.4,492.5 1390.4,494.2 1391.5,493.8 1392.5,494.5 1393.6,495.5 1394.6,495.8 1395.7,495.7 1396.7,496.1 1397.8,496 1398.8,496.1 1399.7,496.8 1399.7,498.4 1398.8,499.1 1397.8,499.2 1396.7,499.1 1395.7,499.5 1394.6,499.4 1393.6,499.7 1392.5,500.7 1391.5,501.4 1390.4,501 1389.4,502.7 1388.3,503 1387.3,503.1 1386.2,503.3 1385.2,503.8 1384.1,503.2 1383.1,501.2 1382,501.3 1381,502.2 1379.9,501.8 1378.9,502.7 1377.8,501.1 1376.8,501.9 1375.7,501.9 1374.7,503.8 1373.6,504.8 1372.6,505.7 1371.5,504.1 1370.5,502.2 1369.4,504.6 1368.4,502.6 1367.3,504 1366.3,505.4 1365.2,501.5 1364.2,502 1363.1,504.6 1362.1,502.5 1361,502.9 1360,502 1358.9,501.9 1357.9,503.4 1356.8,503.3 1355.8,505.2 1354.7,504.7 1353.7,503.3 1352.6,505.6 1351.6,504 1350.5,502.6 1349.5,502 1348.4,503.5 1347.4,504.2 1346.3,501.1 1345.3,502.2 1344.2,501.2 1343.2,501.3 1342.1,500.8 1341.1,501 1340,502 1339,501.5 1337.9,501.8 1336.9,501.3 1335.8,501.4 1334.8,503.5 1333.7,501.7 1332.7,502.8 1331.6,502.7 1330.6,504.1 1329.5,504.3 1328.5,503.9 1327.4,504.2 1326.4,501.1 1325.3,502.4 1324.3,501.6 1323.2,502.1 1322.2,504.7 1321.1,504.9 1320.1,501.4 1319,499.1 1318,498.1 1316.9,498 1315.9,498 1314.8,498.1 1313.8,498.5 1312.7,498.7 1311.7,499.1 1310.6,499.8 1309.6,500.4 1308.5,503.4 1307.5,503.8 1306.4,502.5 1305.4,503.1 1304.3,502.8 1303.3,505.1 1302.2,504.9 1301.2,505.2 1300.1,504.5 1299.1,504.9 1298,503.4 1297,506.8 1295.9,503.8 1294.9,502.7 1293.8,502.1 1292.8,504.5 1291.7,501.6 1290.7,501.7 1289.6,501.3 1288.6,501.5 1287.5,499.9 1286.5,501.2 1285.4,500.5 1284.4,500.3 1283.3,501.9 1282.3,502.7 1281.2,502.2 1280.2,502.7 1279.1,500.9 1278.1,503.1 1277,502.7 1276,504.2 1274.9,503.8 1273.9,502.4 1272.8,502.8 1271.8,502.7 1270.7,503 1269.7,501.9 1268.6,503.8 1267.6,503 1266.5,503.8 1265.5,503.7 1264.4,501.5 1263.4,503.5 1262.3,502.4 1261.3,505.5 1260.2,504.4 1259.2,503.3 1258.1,506.7 1257.1,502.3 1256,503 1255,502.7 1253.9,501.2 1252.9,500.6 1251.8,499.4 1250.8,500.6 1249.7,501.3 1248.7,500.6 1247.6,501.1 1246.6,501.6 1245.5,500.9 1244.5,500.7 1243.4,500.8 1242.4,499.5 1241.3,499 1240.3,499.2 1239.2,501.2 1238.2,501.3 1237.1,502.2 1236.1,502.3 1235,501.3 1234,503.2 1232.9,501.6 1231.9,500.9 1230.8,500.9 1229.8,502.9 1228.7,507 1227.7,501.5 1226.6,502.4 1225.6,499.7 1224.5,500.5 1223.5,501 1222.4,499.2 1221.4,498.3 1220.3,498.2 1219.3,498.7 1218.2,498.7 1217.2,498.8 1216.1,499.8 1215.1,504.8 1214,502.1 1213,501.5 1211.9,500.4 1210.9,501.9 1209.8,502.4 1208.8,500.9 1207.7,502.5 1206.7,501 1205.6,503.1"/></g></svg><div style="left:425px;top:513px;width:195px;height:17px;background:#5843a0;border-bottom:1px solid #44347c;border-left:1px solid #463580;"><span class="cn" style="left:3px;top:2.2px;color:rgba(255,255,255,0.86);font-weight:bold;font-size:10px;">Kick</span></div><div style="left:619px;top:513px;width:1px;height:69px;background:#3d2e70;"></div><div style="left:620px;top:513px;width:195px;height:17px;background:#5843a0;border-bottom:1px solid #44347c;border-left:1px solid #463580;"><span class="cn" style="left:3px;top:2.2px;color:rgba(255,255,255,0.86);font-weight:bold;font-size:10px;">Kick</span></div><div style="left:814px;top:513px;width:1px;height:69px;background:#3d2e70;"></div><div style="left:1009px;top:513px;width:195px;height:17px;background:#5843a0;border-bottom:1px solid #44347c;border-left:1px solid #463580;"><span class="cn" style="left:3px;top:2.2px;color:rgba(255,255,255,0.86);font-weight:bold;font-size:10px;">Kick</span></div><div style="left:1203px;top:513px;width:1px;height:69px;background:#3d2e70;"></div><div style="left:1204px;top:513px;width:195px;height:17px;background:#5843a0;border-bottom:1px solid #44347c;border-left:1px solid #463580;"><span class="cn" style="left:3px;top:2.2px;color:rgba(255,255,255,0.86);font-weight:bold;font-size:10px;">Kick</span></div><div style="left:1398px;top:513px;width:1px;height:69px;background:#3d2e70;"></div><svg width="1414" height="69" viewBox="35 513 1414 69" style="left:35px;top:513px"><g fill="#110e1c"><polygon points="425.3,536.2 425.7,531.6 426.5,531.9 427.5,532.4 428.5,533.3 429.5,534.3 430.4,535.5 431.4,536.8 432.4,538.2 433.3,539.5 434.3,540.8 435.3,541.8 436.3,542.6 437.1,542.8 437.5,542.8 437.5,543.2 437.1,543.2 436.3,543.4 435.3,544.2 434.3,545.2 433.3,546.5 432.4,547.8 431.4,549.2 430.4,550.5 429.5,551.7 428.5,552.7 427.5,553.6 426.5,554.1 425.7,554.4 425.3,549.8"/><polygon points="425.3,562.4 425.7,558 426.5,558.3 427.5,558.8 428.5,559.6 429.5,560.6 430.4,561.8 431.4,563.1 432.4,564.4 433.3,565.7 434.3,566.9 435.3,567.9 436.3,568.6 437.1,568.8 437.5,568.8 437.5,569.2 437.1,569.2 436.3,569.4 435.3,570.1 434.3,571.1 433.3,572.3 432.4,573.6 431.4,574.9 430.4,576.2 429.5,577.4 428.5,578.4 427.5,579.2 426.5,579.7 425.7,580 425.3,575.6"/></g><g fill="#110e1c"><polygon points="437.5,536.2 437.9,531.6 438.7,531.9 439.7,532.4 440.7,533.3 441.6,534.3 442.6,535.5 443.6,536.8 444.6,538.2 445.5,539.5 446.5,540.8 447.5,541.8 448.5,542.6 449.3,542.8 449.7,542.8 449.7,543.2 449.3,543.2 448.5,543.4 447.5,544.2 446.5,545.2 445.5,546.5 444.6,547.8 443.6,549.2 442.6,550.5 441.6,551.7 440.7,552.7 439.7,553.6 438.7,554.1 437.9,554.4 437.5,549.8"/><polygon points="437.5,562.4 437.9,558 438.7,558.3 439.7,558.8 440.7,559.6 441.6,560.6 442.6,561.8 443.6,563.1 444.6,564.4 445.5,565.7 446.5,566.9 447.5,567.9 448.5,568.6 449.3,568.8 449.7,568.8 449.7,569.2 449.3,569.2 448.5,569.4 447.5,570.1 446.5,571.1 445.5,572.3 444.6,573.6 443.6,574.9 442.6,576.2 441.6,577.4 440.7,578.4 439.7,579.2 438.7,579.7 437.9,580 437.5,575.6"/></g><g fill="#110e1c"><polygon points="449.7,536.2 450.1,531.6 450.9,531.9 451.9,532.4 452.8,533.3 453.8,534.3 454.8,535.5 455.8,536.8 456.7,538.2 457.7,539.5 458.7,540.8 459.7,541.8 460.6,542.6 461.5,542.8 461.9,542.8 461.9,543.2 461.5,543.2 460.6,543.4 459.7,544.2 458.7,545.2 457.7,546.5 456.7,547.8 455.8,549.2 454.8,550.5 453.8,551.7 452.8,552.7 451.9,553.6 450.9,554.1 450.1,554.4 449.7,549.8"/><polygon points="449.7,562.4 450.1,558 450.9,558.3 451.9,558.8 452.8,559.6 453.8,560.6 454.8,561.8 455.8,563.1 456.7,564.4 457.7,565.7 458.7,566.9 459.7,567.9 460.6,568.6 461.5,568.8 461.9,568.8 461.9,569.2 461.5,569.2 460.6,569.4 459.7,570.1 458.7,571.1 457.7,572.3 456.7,573.6 455.8,574.9 454.8,576.2 453.8,577.4 452.8,578.4 451.9,579.2 450.9,579.7 450.1,580 449.7,575.6"/></g><g fill="#110e1c"><polygon points="461.9,536.2 462.3,531.6 463.1,531.9 464,532.4 465,533.3 466,534.3 467,535.5 467.9,536.8 468.9,538.2 469.9,539.5 470.9,540.8 471.8,541.8 472.8,542.6 473.7,542.8 474,542.8 474,543.2 473.7,543.2 472.8,543.4 471.8,544.2 470.9,545.2 469.9,546.5 468.9,547.8 467.9,549.2 467,550.5 466,551.7 465,552.7 464,553.6 463.1,554.1 462.3,554.4 461.9,549.8"/><polygon points="461.9,562.4 462.3,558 463.1,558.3 464,558.8 465,559.6 466,560.6 467,561.8 467.9,563.1 468.9,564.4 469.9,565.7 470.9,566.9 471.8,567.9 472.8,568.6 473.7,568.8 474,568.8 474,569.2 473.7,569.2 472.8,569.4 471.8,570.1 470.9,571.1 469.9,572.3 468.9,573.6 467.9,574.9 467,576.2 466,577.4 465,578.4 464,579.2 463.1,579.7 462.3,580 461.9,575.6"/></g><g fill="#110e1c"><polygon points="474,536.2 474.5,531.6 475.2,531.9 476.2,532.4 477.2,533.3 478.2,534.3 479.1,535.5 480.1,536.8 481.1,538.2 482.1,539.5 483,540.8 484,541.8 485,542.6 485.8,542.8 486.2,542.8 486.2,543.2 485.8,543.2 485,543.4 484,544.2 483,545.2 482.1,546.5 481.1,547.8 480.1,549.2 479.1,550.5 478.2,551.7 477.2,552.7 476.2,553.6 475.2,554.1 474.5,554.4 474,549.8"/><polygon points="474,562.4 474.5,558 475.2,558.3 476.2,558.8 477.2,559.6 478.2,560.6 479.1,561.8 480.1,563.1 481.1,564.4 482.1,565.7 483,566.9 484,567.9 485,568.6 485.8,568.8 486.2,568.8 486.2,569.2 485.8,569.2 485,569.4 484,570.1 483,571.1 482.1,572.3 481.1,573.6 480.1,574.9 479.1,576.2 478.2,577.4 477.2,578.4 476.2,579.2 475.2,579.7 474.5,580 474,575.6"/></g><g fill="#110e1c"><polygon points="486.2,536.2 486.6,531.6 487.4,531.9 488.4,532.4 489.4,533.3 490.4,534.3 491.3,535.5 492.3,536.8 493.3,538.2 494.2,539.5 495.2,540.8 496.2,541.8 497.2,542.6 498,542.8 498.4,542.8 498.4,543.2 498,543.2 497.2,543.4 496.2,544.2 495.2,545.2 494.2,546.5 493.3,547.8 492.3,549.2 491.3,550.5 490.4,551.7 489.4,552.7 488.4,553.6 487.4,554.1 486.6,554.4 486.2,549.8"/><polygon points="486.2,562.4 486.6,558 487.4,558.3 488.4,558.8 489.4,559.6 490.4,560.6 491.3,561.8 492.3,563.1 493.3,564.4 494.2,565.7 495.2,566.9 496.2,567.9 497.2,568.6 498,568.8 498.4,568.8 498.4,569.2 498,569.2 497.2,569.4 496.2,570.1 495.2,571.1 494.2,572.3 493.3,573.6 492.3,574.9 491.3,576.2 490.4,577.4 489.4,578.4 488.4,579.2 487.4,579.7 486.6,580 486.2,575.6"/></g><g fill="#110e1c"><polygon points="498.4,536.2 498.8,531.6 499.6,531.9 500.6,532.4 501.6,533.3 502.5,534.3 503.5,535.5 504.5,536.8 505.5,538.2 506.4,539.5 507.4,540.8 508.4,541.8 509.4,542.6 510.2,542.8 510.6,542.8 510.6,543.2 510.2,543.2 509.4,543.4 508.4,544.2 507.4,545.2 506.4,546.5 505.5,547.8 504.5,549.2 503.5,550.5 502.5,551.7 501.6,552.7 500.6,553.6 499.6,554.1 498.8,554.4 498.4,549.8"/><polygon points="498.4,562.4 498.8,558 499.6,558.3 500.6,558.8 501.6,559.6 502.5,560.6 503.5,561.8 504.5,563.1 505.5,564.4 506.4,565.7 507.4,566.9 508.4,567.9 509.4,568.6 510.2,568.8 510.6,568.8 510.6,569.2 510.2,569.2 509.4,569.4 508.4,570.1 507.4,571.1 506.4,572.3 505.5,573.6 504.5,574.9 503.5,576.2 502.5,577.4 501.6,578.4 500.6,579.2 499.6,579.7 498.8,580 498.4,575.6"/></g><g fill="#110e1c"><polygon points="510.6,536.2 511,531.6 511.8,531.9 512.8,532.4 513.7,533.3 514.7,534.3 515.7,535.5 516.7,536.8 517.6,538.2 518.6,539.5 519.6,540.8 520.6,541.8 521.5,542.6 522.4,542.8 522.8,542.8 522.8,543.2 522.4,543.2 521.5,543.4 520.6,544.2 519.6,545.2 518.6,546.5 517.6,547.8 516.7,549.2 515.7,550.5 514.7,551.7 513.7,552.7 512.8,553.6 511.8,554.1 511,554.4 510.6,549.8"/><polygon points="510.6,562.4 511,558 511.8,558.3 512.8,558.8 513.7,559.6 514.7,560.6 515.7,561.8 516.7,563.1 517.6,564.4 518.6,565.7 519.6,566.9 520.6,567.9 521.5,568.6 522.4,568.8 522.8,568.8 522.8,569.2 522.4,569.2 521.5,569.4 520.6,570.1 519.6,571.1 518.6,572.3 517.6,573.6 516.7,574.9 515.7,576.2 514.7,577.4 513.7,578.4 512.8,579.2 511.8,579.7 511,580 510.6,575.6"/></g><g fill="#110e1c"><polygon points="522.8,536.2 523.2,531.6 524,531.9 524.9,532.4 525.9,533.3 526.9,534.3 527.9,535.5 528.8,536.8 529.8,538.2 530.8,539.5 531.8,540.8 532.7,541.8 533.7,542.6 534.6,542.8 534.9,542.8 534.9,543.2 534.6,543.2 533.7,543.4 532.7,544.2 531.8,545.2 530.8,546.5 529.8,547.8 528.8,549.2 527.9,550.5 526.9,551.7 525.9,552.7 524.9,553.6 524,554.1 523.2,554.4 522.8,549.8"/><polygon points="522.8,562.4 523.2,558 524,558.3 524.9,558.8 525.9,559.6 526.9,560.6 527.9,561.8 528.8,563.1 529.8,564.4 530.8,565.7 531.8,566.9 532.7,567.9 533.7,568.6 534.6,568.8 534.9,568.8 534.9,569.2 534.6,569.2 533.7,569.4 532.7,570.1 531.8,571.1 530.8,572.3 529.8,573.6 528.8,574.9 527.9,576.2 526.9,577.4 525.9,578.4 524.9,579.2 524,579.7 523.2,580 522.8,575.6"/></g><g fill="#110e1c"><polygon points="534.9,536.2 535.4,531.6 536.1,531.9 537.1,532.4 538.1,533.3 539.1,534.3 540,535.5 541,536.8 542,538.2 543,539.5 543.9,540.8 544.9,541.8 545.9,542.6 546.7,542.8 547.1,542.8 547.1,543.2 546.7,543.2 545.9,543.4 544.9,544.2 543.9,545.2 543,546.5 542,547.8 541,549.2 540,550.5 539.1,551.7 538.1,552.7 537.1,553.6 536.1,554.1 535.4,554.4 534.9,549.8"/><polygon points="534.9,562.4 535.4,558 536.1,558.3 537.1,558.8 538.1,559.6 539.1,560.6 540,561.8 541,563.1 542,564.4 543,565.7 543.9,566.9 544.9,567.9 545.9,568.6 546.7,568.8 547.1,568.8 547.1,569.2 546.7,569.2 545.9,569.4 544.9,570.1 543.9,571.1 543,572.3 542,573.6 541,574.9 540,576.2 539.1,577.4 538.1,578.4 537.1,579.2 536.1,579.7 535.4,580 534.9,575.6"/></g><g fill="#110e1c"><polygon points="547.1,536.2 547.5,531.6 548.3,531.9 549.3,532.4 550.3,533.3 551.3,534.3 552.2,535.5 553.2,536.8 554.2,538.2 555.1,539.5 556.1,540.8 557.1,541.8 558.1,542.6 558.9,542.8 559.3,542.8 559.3,543.2 558.9,543.2 558.1,543.4 557.1,544.2 556.1,545.2 555.1,546.5 554.2,547.8 553.2,549.2 552.2,550.5 551.3,551.7 550.3,552.7 549.3,553.6 548.3,554.1 547.5,554.4 547.1,549.8"/><polygon points="547.1,562.4 547.5,558 548.3,558.3 549.3,558.8 550.3,559.6 551.3,560.6 552.2,561.8 553.2,563.1 554.2,564.4 555.1,565.7 556.1,566.9 557.1,567.9 558.1,568.6 558.9,568.8 559.3,568.8 559.3,569.2 558.9,569.2 558.1,569.4 557.1,570.1 556.1,571.1 555.1,572.3 554.2,573.6 553.2,574.9 552.2,576.2 551.3,577.4 550.3,578.4 549.3,579.2 548.3,579.7 547.5,580 547.1,575.6"/></g><g fill="#110e1c"><polygon points="559.3,536.2 559.7,531.6 560.5,531.9 561.5,532.4 562.5,533.3 563.4,534.3 564.4,535.5 565.4,536.8 566.4,538.2 567.3,539.5 568.3,540.8 569.3,541.8 570.3,542.6 571.1,542.8 571.5,542.8 571.5,543.2 571.1,543.2 570.3,543.4 569.3,544.2 568.3,545.2 567.3,546.5 566.4,547.8 565.4,549.2 564.4,550.5 563.4,551.7 562.5,552.7 561.5,553.6 560.5,554.1 559.7,554.4 559.3,549.8"/><polygon points="559.3,562.4 559.7,558 560.5,558.3 561.5,558.8 562.5,559.6 563.4,560.6 564.4,561.8 565.4,563.1 566.4,564.4 567.3,565.7 568.3,566.9 569.3,567.9 570.3,568.6 571.1,568.8 571.5,568.8 571.5,569.2 571.1,569.2 570.3,569.4 569.3,570.1 568.3,571.1 567.3,572.3 566.4,573.6 565.4,574.9 564.4,576.2 563.4,577.4 562.5,578.4 561.5,579.2 560.5,579.7 559.7,580 559.3,575.6"/></g><g fill="#110e1c"><polygon points="571.5,536.2 571.9,531.6 572.7,531.9 573.7,532.4 574.6,533.3 575.6,534.3 576.6,535.5 577.6,536.8 578.5,538.2 579.5,539.5 580.5,540.8 581.5,541.8 582.4,542.6 583.3,542.8 583.6,542.8 583.6,543.2 583.3,543.2 582.4,543.4 581.5,544.2 580.5,545.2 579.5,546.5 578.5,547.8 577.6,549.2 576.6,550.5 575.6,551.7 574.6,552.7 573.7,553.6 572.7,554.1 571.9,554.4 571.5,549.8"/><polygon points="571.5,562.4 571.9,558 572.7,558.3 573.7,558.8 574.6,559.6 575.6,560.6 576.6,561.8 577.6,563.1 578.5,564.4 579.5,565.7 580.5,566.9 581.5,567.9 582.4,568.6 583.3,568.8 583.6,568.8 583.6,569.2 583.3,569.2 582.4,569.4 581.5,570.1 580.5,571.1 579.5,572.3 578.5,573.6 577.6,574.9 576.6,576.2 575.6,577.4 574.6,578.4 573.7,579.2 572.7,579.7 571.9,580 571.5,575.6"/></g><g fill="#110e1c"><polygon points="583.6,536.2 584.1,531.6 584.9,531.9 585.8,532.4 586.8,533.3 587.8,534.3 588.8,535.5 589.7,536.8 590.7,538.2 591.7,539.5 592.7,540.8 593.6,541.8 594.6,542.6 595.5,542.8 595.8,542.8 595.8,543.2 595.5,543.2 594.6,543.4 593.6,544.2 592.7,545.2 591.7,546.5 590.7,547.8 589.7,549.2 588.8,550.5 587.8,551.7 586.8,552.7 585.8,553.6 584.9,554.1 584.1,554.4 583.6,549.8"/><polygon points="583.6,562.4 584.1,558 584.9,558.3 585.8,558.8 586.8,559.6 587.8,560.6 588.8,561.8 589.7,563.1 590.7,564.4 591.7,565.7 592.7,566.9 593.6,567.9 594.6,568.6 595.5,568.8 595.8,568.8 595.8,569.2 595.5,569.2 594.6,569.4 593.6,570.1 592.7,571.1 591.7,572.3 590.7,573.6 589.7,574.9 588.8,576.2 587.8,577.4 586.8,578.4 585.8,579.2 584.9,579.7 584.1,580 583.6,575.6"/></g><g fill="#110e1c"><polygon points="595.8,536.2 596.3,531.6 597,531.9 598,532.4 599,533.3 600,534.3 600.9,535.5 601.9,536.8 602.9,538.2 603.9,539.5 604.8,540.8 605.8,541.8 606.8,542.6 607.6,542.8 608,542.8 608,543.2 607.6,543.2 606.8,543.4 605.8,544.2 604.8,545.2 603.9,546.5 602.9,547.8 601.9,549.2 600.9,550.5 600,551.7 599,552.7 598,553.6 597,554.1 596.3,554.4 595.8,549.8"/><polygon points="595.8,562.4 596.3,558 597,558.3 598,558.8 599,559.6 600,560.6 600.9,561.8 601.9,563.1 602.9,564.4 603.9,565.7 604.8,566.9 605.8,567.9 606.8,568.6 607.6,568.8 608,568.8 608,569.2 607.6,569.2 606.8,569.4 605.8,570.1 604.8,571.1 603.9,572.3 602.9,573.6 601.9,574.9 600.9,576.2 600,577.4 599,578.4 598,579.2 597,579.7 596.3,580 595.8,575.6"/></g><g fill="#110e1c"><polygon points="608,536.2 608.4,531.6 609.2,531.9 610.2,532.4 611.2,533.3 612.2,534.3 613.1,535.5 614.1,536.8 615.1,538.2 616,539.5 617,540.8 618,541.8 619,542.6 619.8,542.8 620.2,542.8 620.2,543.2 619.8,543.2 619,543.4 618,544.2 617,545.2 616,546.5 615.1,547.8 614.1,549.2 613.1,550.5 612.2,551.7 611.2,552.7 610.2,553.6 609.2,554.1 608.4,554.4 608,549.8"/><polygon points="608,562.4 608.4,558 609.2,558.3 610.2,558.8 611.2,559.6 612.2,560.6 613.1,561.8 614.1,563.1 615.1,564.4 616,565.7 617,566.9 618,567.9 619,568.6 619.8,568.8 620.2,568.8 620.2,569.2 619.8,569.2 619,569.4 618,570.1 617,571.1 616,572.3 615.1,573.6 614.1,574.9 613.1,576.2 612.2,577.4 611.2,578.4 610.2,579.2 609.2,579.7 608.4,580 608,575.6"/></g><g fill="#110e1c"><polygon points="620.2,536.2 620.6,531.6 621.4,531.9 622.4,532.4 623.4,533.3 624.3,534.3 625.3,535.5 626.3,536.8 627.3,538.2 628.2,539.5 629.2,540.8 630.2,541.8 631.2,542.6 632,542.8 632.4,542.8 632.4,543.2 632,543.2 631.2,543.4 630.2,544.2 629.2,545.2 628.2,546.5 627.3,547.8 626.3,549.2 625.3,550.5 624.3,551.7 623.4,552.7 622.4,553.6 621.4,554.1 620.6,554.4 620.2,549.8"/><polygon points="620.2,562.4 620.6,558 621.4,558.3 622.4,558.8 623.4,559.6 624.3,560.6 625.3,561.8 626.3,563.1 627.3,564.4 628.2,565.7 629.2,566.9 630.2,567.9 631.2,568.6 632,568.8 632.4,568.8 632.4,569.2 632,569.2 631.2,569.4 630.2,570.1 629.2,571.1 628.2,572.3 627.3,573.6 626.3,574.9 625.3,576.2 624.3,577.4 623.4,578.4 622.4,579.2 621.4,579.7 620.6,580 620.2,575.6"/></g><g fill="#110e1c"><polygon points="632.4,536.2 632.8,531.6 633.6,531.9 634.6,532.4 635.5,533.3 636.5,534.3 637.5,535.5 638.5,536.8 639.4,538.2 640.4,539.5 641.4,540.8 642.4,541.8 643.3,542.6 644.2,542.8 644.5,542.8 644.5,543.2 644.2,543.2 643.3,543.4 642.4,544.2 641.4,545.2 640.4,546.5 639.4,547.8 638.5,549.2 637.5,550.5 636.5,551.7 635.5,552.7 634.6,553.6 633.6,554.1 632.8,554.4 632.4,549.8"/><polygon points="632.4,562.4 632.8,558 633.6,558.3 634.6,558.8 635.5,559.6 636.5,560.6 637.5,561.8 638.5,563.1 639.4,564.4 640.4,565.7 641.4,566.9 642.4,567.9 643.3,568.6 644.2,568.8 644.5,568.8 644.5,569.2 644.2,569.2 643.3,569.4 642.4,570.1 641.4,571.1 640.4,572.3 639.4,573.6 638.5,574.9 637.5,576.2 636.5,577.4 635.5,578.4 634.6,579.2 633.6,579.7 632.8,580 632.4,575.6"/></g><g fill="#110e1c"><polygon points="644.5,536.2 645,531.6 645.8,531.9 646.7,532.4 647.7,533.3 648.7,534.3 649.7,535.5 650.6,536.8 651.6,538.2 652.6,539.5 653.6,540.8 654.5,541.8 655.5,542.6 656.4,542.8 656.7,542.8 656.7,543.2 656.4,543.2 655.5,543.4 654.5,544.2 653.6,545.2 652.6,546.5 651.6,547.8 650.6,549.2 649.7,550.5 648.7,551.7 647.7,552.7 646.7,553.6 645.8,554.1 645,554.4 644.5,549.8"/><polygon points="644.5,562.4 645,558 645.8,558.3 646.7,558.8 647.7,559.6 648.7,560.6 649.7,561.8 650.6,563.1 651.6,564.4 652.6,565.7 653.6,566.9 654.5,567.9 655.5,568.6 656.4,568.8 656.7,568.8 656.7,569.2 656.4,569.2 655.5,569.4 654.5,570.1 653.6,571.1 652.6,572.3 651.6,573.6 650.6,574.9 649.7,576.2 648.7,577.4 647.7,578.4 646.7,579.2 645.8,579.7 645,580 644.5,575.6"/></g><g fill="#110e1c"><polygon points="656.7,536.2 657.2,531.6 657.9,531.9 658.9,532.4 659.9,533.3 660.9,534.3 661.8,535.5 662.8,536.8 663.8,538.2 664.8,539.5 665.7,540.8 666.7,541.8 667.7,542.6 668.5,542.8 668.9,542.8 668.9,543.2 668.5,543.2 667.7,543.4 666.7,544.2 665.7,545.2 664.8,546.5 663.8,547.8 662.8,549.2 661.8,550.5 660.9,551.7 659.9,552.7 658.9,553.6 657.9,554.1 657.2,554.4 656.7,549.8"/><polygon points="656.7,562.4 657.2,558 657.9,558.3 658.9,558.8 659.9,559.6 660.9,560.6 661.8,561.8 662.8,563.1 663.8,564.4 664.8,565.7 665.7,566.9 666.7,567.9 667.7,568.6 668.5,568.8 668.9,568.8 668.9,569.2 668.5,569.2 667.7,569.4 666.7,570.1 665.7,571.1 664.8,572.3 663.8,573.6 662.8,574.9 661.8,576.2 660.9,577.4 659.9,578.4 658.9,579.2 657.9,579.7 657.2,580 656.7,575.6"/></g><g fill="#110e1c"><polygon points="668.9,536.2 669.3,531.6 670.1,531.9 671.1,532.4 672.1,533.3 673.1,534.3 674,535.5 675,536.8 676,538.2 676.9,539.5 677.9,540.8 678.9,541.8 679.9,542.6 680.7,542.8 681.1,542.8 681.1,543.2 680.7,543.2 679.9,543.4 678.9,544.2 677.9,545.2 676.9,546.5 676,547.8 675,549.2 674,550.5 673.1,551.7 672.1,552.7 671.1,553.6 670.1,554.1 669.3,554.4 668.9,549.8"/><polygon points="668.9,562.4 669.3,558 670.1,558.3 671.1,558.8 672.1,559.6 673.1,560.6 674,561.8 675,563.1 676,564.4 676.9,565.7 677.9,566.9 678.9,567.9 679.9,568.6 680.7,568.8 681.1,568.8 681.1,569.2 680.7,569.2 679.9,569.4 678.9,570.1 677.9,571.1 676.9,572.3 676,573.6 675,574.9 674,576.2 673.1,577.4 672.1,578.4 671.1,579.2 670.1,579.7 669.3,580 668.9,575.6"/></g><g fill="#110e1c"><polygon points="681.1,536.2 681.5,531.6 682.3,531.9 683.3,532.4 684.3,533.3 685.2,534.3 686.2,535.5 687.2,536.8 688.2,538.2 689.1,539.5 690.1,540.8 691.1,541.8 692.1,542.6 692.9,542.8 693.3,542.8 693.3,543.2 692.9,543.2 692.1,543.4 691.1,544.2 690.1,545.2 689.1,546.5 688.2,547.8 687.2,549.2 686.2,550.5 685.2,551.7 684.3,552.7 683.3,553.6 682.3,554.1 681.5,554.4 681.1,549.8"/><polygon points="681.1,562.4 681.5,558 682.3,558.3 683.3,558.8 684.3,559.6 685.2,560.6 686.2,561.8 687.2,563.1 688.2,564.4 689.1,565.7 690.1,566.9 691.1,567.9 692.1,568.6 692.9,568.8 693.3,568.8 693.3,569.2 692.9,569.2 692.1,569.4 691.1,570.1 690.1,571.1 689.1,572.3 688.2,573.6 687.2,574.9 686.2,576.2 685.2,577.4 684.3,578.4 683.3,579.2 682.3,579.7 681.5,580 681.1,575.6"/></g><g fill="#110e1c"><polygon points="693.3,536.2 693.7,531.6 694.5,531.9 695.5,532.4 696.4,533.3 697.4,534.3 698.4,535.5 699.4,536.8 700.3,538.2 701.3,539.5 702.3,540.8 703.3,541.8 704.2,542.6 705.1,542.8 705.4,542.8 705.4,543.2 705.1,543.2 704.2,543.4 703.3,544.2 702.3,545.2 701.3,546.5 700.3,547.8 699.4,549.2 698.4,550.5 697.4,551.7 696.4,552.7 695.5,553.6 694.5,554.1 693.7,554.4 693.3,549.8"/><polygon points="693.3,562.4 693.7,558 694.5,558.3 695.5,558.8 696.4,559.6 697.4,560.6 698.4,561.8 699.4,563.1 700.3,564.4 701.3,565.7 702.3,566.9 703.3,567.9 704.2,568.6 705.1,568.8 705.4,568.8 705.4,569.2 705.1,569.2 704.2,569.4 703.3,570.1 702.3,571.1 701.3,572.3 700.3,573.6 699.4,574.9 698.4,576.2 697.4,577.4 696.4,578.4 695.5,579.2 694.5,579.7 693.7,580 693.3,575.6"/></g><g fill="#110e1c"><polygon points="705.4,536.2 705.9,531.6 706.7,531.9 707.6,532.4 708.6,533.3 709.6,534.3 710.6,535.5 711.5,536.8 712.5,538.2 713.5,539.5 714.5,540.8 715.4,541.8 716.4,542.6 717.3,542.8 717.6,542.8 717.6,543.2 717.3,543.2 716.4,543.4 715.4,544.2 714.5,545.2 713.5,546.5 712.5,547.8 711.5,549.2 710.6,550.5 709.6,551.7 708.6,552.7 707.6,553.6 706.7,554.1 705.9,554.4 705.4,549.8"/><polygon points="705.4,562.4 705.9,558 706.7,558.3 707.6,558.8 708.6,559.6 709.6,560.6 710.6,561.8 711.5,563.1 712.5,564.4 713.5,565.7 714.5,566.9 715.4,567.9 716.4,568.6 717.3,568.8 717.6,568.8 717.6,569.2 717.3,569.2 716.4,569.4 715.4,570.1 714.5,571.1 713.5,572.3 712.5,573.6 711.5,574.9 710.6,576.2 709.6,577.4 708.6,578.4 707.6,579.2 706.7,579.7 705.9,580 705.4,575.6"/></g><g fill="#110e1c"><polygon points="717.6,536.2 718.1,531.6 718.8,531.9 719.8,532.4 720.8,533.3 721.8,534.3 722.7,535.5 723.7,536.8 724.7,538.2 725.7,539.5 726.6,540.8 727.6,541.8 728.6,542.6 729.4,542.8 729.8,542.8 729.8,543.2 729.4,543.2 728.6,543.4 727.6,544.2 726.6,545.2 725.7,546.5 724.7,547.8 723.7,549.2 722.7,550.5 721.8,551.7 720.8,552.7 719.8,553.6 718.8,554.1 718.1,554.4 717.6,549.8"/><polygon points="717.6,562.4 718.1,558 718.8,558.3 719.8,558.8 720.8,559.6 721.8,560.6 722.7,561.8 723.7,563.1 724.7,564.4 725.7,565.7 726.6,566.9 727.6,567.9 728.6,568.6 729.4,568.8 729.8,568.8 729.8,569.2 729.4,569.2 728.6,569.4 727.6,570.1 726.6,571.1 725.7,572.3 724.7,573.6 723.7,574.9 722.7,576.2 721.8,577.4 720.8,578.4 719.8,579.2 718.8,579.7 718.1,580 717.6,575.6"/></g><g fill="#110e1c"><polygon points="729.8,536.2 730.2,531.6 731,531.9 732,532.4 733,533.3 734,534.3 734.9,535.5 735.9,536.8 736.9,538.2 737.8,539.5 738.8,540.8 739.8,541.8 740.8,542.6 741.6,542.8 742,542.8 742,543.2 741.6,543.2 740.8,543.4 739.8,544.2 738.8,545.2 737.8,546.5 736.9,547.8 735.9,549.2 734.9,550.5 734,551.7 733,552.7 732,553.6 731,554.1 730.2,554.4 729.8,549.8"/><polygon points="729.8,562.4 730.2,558 731,558.3 732,558.8 733,559.6 734,560.6 734.9,561.8 735.9,563.1 736.9,564.4 737.8,565.7 738.8,566.9 739.8,567.9 740.8,568.6 741.6,568.8 742,568.8 742,569.2 741.6,569.2 740.8,569.4 739.8,570.1 738.8,571.1 737.8,572.3 736.9,573.6 735.9,574.9 734.9,576.2 734,577.4 733,578.4 732,579.2 731,579.7 730.2,580 729.8,575.6"/></g><g fill="#110e1c"><polygon points="742,536.2 742.4,531.6 743.2,531.9 744.2,532.4 745.2,533.3 746.1,534.3 747.1,535.5 748.1,536.8 749.1,538.2 750,539.5 751,540.8 752,541.8 753,542.6 753.8,542.8 754.2,542.8 754.2,543.2 753.8,543.2 753,543.4 752,544.2 751,545.2 750,546.5 749.1,547.8 748.1,549.2 747.1,550.5 746.1,551.7 745.2,552.7 744.2,553.6 743.2,554.1 742.4,554.4 742,549.8"/><polygon points="742,562.4 742.4,558 743.2,558.3 744.2,558.8 745.2,559.6 746.1,560.6 747.1,561.8 748.1,563.1 749.1,564.4 750,565.7 751,566.9 752,567.9 753,568.6 753.8,568.8 754.2,568.8 754.2,569.2 753.8,569.2 753,569.4 752,570.1 751,571.1 750,572.3 749.1,573.6 748.1,574.9 747.1,576.2 746.1,577.4 745.2,578.4 744.2,579.2 743.2,579.7 742.4,580 742,575.6"/></g><g fill="#110e1c"><polygon points="754.2,536.2 754.6,531.6 755.4,531.9 756.4,532.4 757.3,533.3 758.3,534.3 759.3,535.5 760.3,536.8 761.2,538.2 762.2,539.5 763.2,540.8 764.2,541.8 765.1,542.6 766,542.8 766.3,542.8 766.3,543.2 766,543.2 765.1,543.4 764.2,544.2 763.2,545.2 762.2,546.5 761.2,547.8 760.3,549.2 759.3,550.5 758.3,551.7 757.3,552.7 756.4,553.6 755.4,554.1 754.6,554.4 754.2,549.8"/><polygon points="754.2,562.4 754.6,558 755.4,558.3 756.4,558.8 757.3,559.6 758.3,560.6 759.3,561.8 760.3,563.1 761.2,564.4 762.2,565.7 763.2,566.9 764.2,567.9 765.1,568.6 766,568.8 766.3,568.8 766.3,569.2 766,569.2 765.1,569.4 764.2,570.1 763.2,571.1 762.2,572.3 761.2,573.6 760.3,574.9 759.3,576.2 758.3,577.4 757.3,578.4 756.4,579.2 755.4,579.7 754.6,580 754.2,575.6"/></g><g fill="#110e1c"><polygon points="766.3,536.2 766.8,531.6 767.6,531.9 768.5,532.4 769.5,533.3 770.5,534.3 771.5,535.5 772.4,536.8 773.4,538.2 774.4,539.5 775.4,540.8 776.3,541.8 777.3,542.6 778.2,542.8 778.5,542.8 778.5,543.2 778.2,543.2 777.3,543.4 776.3,544.2 775.4,545.2 774.4,546.5 773.4,547.8 772.4,549.2 771.5,550.5 770.5,551.7 769.5,552.7 768.5,553.6 767.6,554.1 766.8,554.4 766.3,549.8"/><polygon points="766.3,562.4 766.8,558 767.6,558.3 768.5,558.8 769.5,559.6 770.5,560.6 771.5,561.8 772.4,563.1 773.4,564.4 774.4,565.7 775.4,566.9 776.3,567.9 777.3,568.6 778.2,568.8 778.5,568.8 778.5,569.2 778.2,569.2 777.3,569.4 776.3,570.1 775.4,571.1 774.4,572.3 773.4,573.6 772.4,574.9 771.5,576.2 770.5,577.4 769.5,578.4 768.5,579.2 767.6,579.7 766.8,580 766.3,575.6"/></g><g fill="#110e1c"><polygon points="778.5,536.2 779,531.6 779.7,531.9 780.7,532.4 781.7,533.3 782.7,534.3 783.6,535.5 784.6,536.8 785.6,538.2 786.6,539.5 787.5,540.8 788.5,541.8 789.5,542.6 790.3,542.8 790.7,542.8 790.7,543.2 790.3,543.2 789.5,543.4 788.5,544.2 787.5,545.2 786.6,546.5 785.6,547.8 784.6,549.2 783.6,550.5 782.7,551.7 781.7,552.7 780.7,553.6 779.7,554.1 779,554.4 778.5,549.8"/><polygon points="778.5,562.4 779,558 779.7,558.3 780.7,558.8 781.7,559.6 782.7,560.6 783.6,561.8 784.6,563.1 785.6,564.4 786.6,565.7 787.5,566.9 788.5,567.9 789.5,568.6 790.3,568.8 790.7,568.8 790.7,569.2 790.3,569.2 789.5,569.4 788.5,570.1 787.5,571.1 786.6,572.3 785.6,573.6 784.6,574.9 783.6,576.2 782.7,577.4 781.7,578.4 780.7,579.2 779.7,579.7 779,580 778.5,575.6"/></g><g fill="#110e1c"><polygon points="790.7,536.2 791.1,531.6 791.9,531.9 792.9,532.4 793.9,533.3 794.9,534.3 795.8,535.5 796.8,536.8 797.8,538.2 798.7,539.5 799.7,540.8 800.7,541.8 801.7,542.6 802.5,542.8 802.9,542.8 802.9,543.2 802.5,543.2 801.7,543.4 800.7,544.2 799.7,545.2 798.7,546.5 797.8,547.8 796.8,549.2 795.8,550.5 794.9,551.7 793.9,552.7 792.9,553.6 791.9,554.1 791.1,554.4 790.7,549.8"/><polygon points="790.7,562.4 791.1,558 791.9,558.3 792.9,558.8 793.9,559.6 794.9,560.6 795.8,561.8 796.8,563.1 797.8,564.4 798.7,565.7 799.7,566.9 800.7,567.9 801.7,568.6 802.5,568.8 802.9,568.8 802.9,569.2 802.5,569.2 801.7,569.4 800.7,570.1 799.7,571.1 798.7,572.3 797.8,573.6 796.8,574.9 795.8,576.2 794.9,577.4 793.9,578.4 792.9,579.2 791.9,579.7 791.1,580 790.7,575.6"/></g><g fill="#110e1c"><polygon points="802.9,536.2 803.3,531.6 804.1,531.9 805.1,532.4 806.1,533.3 807,534.3 808,535.5 809,536.8 810,538.2 810.9,539.5 811.9,540.8 812.9,541.8 813.9,542.6 814.7,542.8 815.1,542.8 815.1,543.2 814.7,543.2 813.9,543.4 812.9,544.2 811.9,545.2 810.9,546.5 810,547.8 809,549.2 808,550.5 807,551.7 806.1,552.7 805.1,553.6 804.1,554.1 803.3,554.4 802.9,549.8"/><polygon points="802.9,562.4 803.3,558 804.1,558.3 805.1,558.8 806.1,559.6 807,560.6 808,561.8 809,563.1 810,564.4 810.9,565.7 811.9,566.9 812.9,567.9 813.9,568.6 814.7,568.8 815.1,568.8 815.1,569.2 814.7,569.2 813.9,569.4 812.9,570.1 811.9,571.1 810.9,572.3 810,573.6 809,574.9 808,576.2 807,577.4 806.1,578.4 805.1,579.2 804.1,579.7 803.3,580 802.9,575.6"/></g><g fill="#110e1c"><polygon points="1009.9,536.2 1010.4,531.6 1011.2,531.9 1012.1,532.4 1013.1,533.3 1014.1,534.3 1015.1,535.5 1016,536.8 1017,538.2 1018,539.5 1019,540.8 1019.9,541.8 1020.9,542.6 1021.8,542.8 1022.1,542.8 1022.1,543.2 1021.8,543.2 1020.9,543.4 1019.9,544.2 1019,545.2 1018,546.5 1017,547.8 1016,549.2 1015.1,550.5 1014.1,551.7 1013.1,552.7 1012.1,553.6 1011.2,554.1 1010.4,554.4 1009.9,549.8"/><polygon points="1009.9,562.4 1010.4,558 1011.2,558.3 1012.1,558.8 1013.1,559.6 1014.1,560.6 1015.1,561.8 1016,563.1 1017,564.4 1018,565.7 1019,566.9 1019.9,567.9 1020.9,568.6 1021.8,568.8 1022.1,568.8 1022.1,569.2 1021.8,569.2 1020.9,569.4 1019.9,570.1 1019,571.1 1018,572.3 1017,573.6 1016,574.9 1015.1,576.2 1014.1,577.4 1013.1,578.4 1012.1,579.2 1011.2,579.7 1010.4,580 1009.9,575.6"/></g><g fill="#110e1c"><polygon points="1022.1,536.2 1022.6,531.6 1023.3,531.9 1024.3,532.4 1025.3,533.3 1026.3,534.3 1027.2,535.5 1028.2,536.8 1029.2,538.2 1030.2,539.5 1031.1,540.8 1032.1,541.8 1033.1,542.6 1033.9,542.8 1034.3,542.8 1034.3,543.2 1033.9,543.2 1033.1,543.4 1032.1,544.2 1031.1,545.2 1030.2,546.5 1029.2,547.8 1028.2,549.2 1027.2,550.5 1026.3,551.7 1025.3,552.7 1024.3,553.6 1023.3,554.1 1022.6,554.4 1022.1,549.8"/><polygon points="1022.1,562.4 1022.6,558 1023.3,558.3 1024.3,558.8 1025.3,559.6 1026.3,560.6 1027.2,561.8 1028.2,563.1 1029.2,564.4 1030.2,565.7 1031.1,566.9 1032.1,567.9 1033.1,568.6 1033.9,568.8 1034.3,568.8 1034.3,569.2 1033.9,569.2 1033.1,569.4 1032.1,570.1 1031.1,571.1 1030.2,572.3 1029.2,573.6 1028.2,574.9 1027.2,576.2 1026.3,577.4 1025.3,578.4 1024.3,579.2 1023.3,579.7 1022.6,580 1022.1,575.6"/></g><g fill="#110e1c"><polygon points="1034.3,536.2 1034.7,531.6 1035.5,531.9 1036.5,532.4 1037.5,533.3 1038.5,534.3 1039.4,535.5 1040.4,536.8 1041.4,538.2 1042.3,539.5 1043.3,540.8 1044.3,541.8 1045.3,542.6 1046.1,542.8 1046.5,542.8 1046.5,543.2 1046.1,543.2 1045.3,543.4 1044.3,544.2 1043.3,545.2 1042.3,546.5 1041.4,547.8 1040.4,549.2 1039.4,550.5 1038.5,551.7 1037.5,552.7 1036.5,553.6 1035.5,554.1 1034.7,554.4 1034.3,549.8"/><polygon points="1034.3,562.4 1034.7,558 1035.5,558.3 1036.5,558.8 1037.5,559.6 1038.5,560.6 1039.4,561.8 1040.4,563.1 1041.4,564.4 1042.3,565.7 1043.3,566.9 1044.3,567.9 1045.3,568.6 1046.1,568.8 1046.5,568.8 1046.5,569.2 1046.1,569.2 1045.3,569.4 1044.3,570.1 1043.3,571.1 1042.3,572.3 1041.4,573.6 1040.4,574.9 1039.4,576.2 1038.5,577.4 1037.5,578.4 1036.5,579.2 1035.5,579.7 1034.7,580 1034.3,575.6"/></g><g fill="#110e1c"><polygon points="1046.5,536.2 1046.9,531.6 1047.7,531.9 1048.7,532.4 1049.7,533.3 1050.6,534.3 1051.6,535.5 1052.6,536.8 1053.6,538.2 1054.5,539.5 1055.5,540.8 1056.5,541.8 1057.5,542.6 1058.3,542.8 1058.7,542.8 1058.7,543.2 1058.3,543.2 1057.5,543.4 1056.5,544.2 1055.5,545.2 1054.5,546.5 1053.6,547.8 1052.6,549.2 1051.6,550.5 1050.6,551.7 1049.7,552.7 1048.7,553.6 1047.7,554.1 1046.9,554.4 1046.5,549.8"/><polygon points="1046.5,562.4 1046.9,558 1047.7,558.3 1048.7,558.8 1049.7,559.6 1050.6,560.6 1051.6,561.8 1052.6,563.1 1053.6,564.4 1054.5,565.7 1055.5,566.9 1056.5,567.9 1057.5,568.6 1058.3,568.8 1058.7,568.8 1058.7,569.2 1058.3,569.2 1057.5,569.4 1056.5,570.1 1055.5,571.1 1054.5,572.3 1053.6,573.6 1052.6,574.9 1051.6,576.2 1050.6,577.4 1049.7,578.4 1048.7,579.2 1047.7,579.7 1046.9,580 1046.5,575.6"/></g><g fill="#110e1c"><polygon points="1058.7,536.2 1059.1,531.6 1059.9,531.9 1060.9,532.4 1061.8,533.3 1062.8,534.3 1063.8,535.5 1064.8,536.8 1065.7,538.2 1066.7,539.5 1067.7,540.8 1068.7,541.8 1069.6,542.6 1070.5,542.8 1070.9,542.8 1070.9,543.2 1070.5,543.2 1069.6,543.4 1068.7,544.2 1067.7,545.2 1066.7,546.5 1065.7,547.8 1064.8,549.2 1063.8,550.5 1062.8,551.7 1061.8,552.7 1060.9,553.6 1059.9,554.1 1059.1,554.4 1058.7,549.8"/><polygon points="1058.7,562.4 1059.1,558 1059.9,558.3 1060.9,558.8 1061.8,559.6 1062.8,560.6 1063.8,561.8 1064.8,563.1 1065.7,564.4 1066.7,565.7 1067.7,566.9 1068.7,567.9 1069.6,568.6 1070.5,568.8 1070.9,568.8 1070.9,569.2 1070.5,569.2 1069.6,569.4 1068.7,570.1 1067.7,571.1 1066.7,572.3 1065.7,573.6 1064.8,574.9 1063.8,576.2 1062.8,577.4 1061.8,578.4 1060.9,579.2 1059.9,579.7 1059.1,580 1058.7,575.6"/></g><g fill="#110e1c"><polygon points="1070.8,536.2 1071.3,531.6 1072.1,531.9 1073,532.4 1074,533.3 1075,534.3 1076,535.5 1076.9,536.8 1077.9,538.2 1078.9,539.5 1079.9,540.8 1080.8,541.8 1081.8,542.6 1082.7,542.8 1083,542.8 1083,543.2 1082.7,543.2 1081.8,543.4 1080.8,544.2 1079.9,545.2 1078.9,546.5 1077.9,547.8 1076.9,549.2 1076,550.5 1075,551.7 1074,552.7 1073,553.6 1072.1,554.1 1071.3,554.4 1070.8,549.8"/><polygon points="1070.8,562.4 1071.3,558 1072.1,558.3 1073,558.8 1074,559.6 1075,560.6 1076,561.8 1076.9,563.1 1077.9,564.4 1078.9,565.7 1079.9,566.9 1080.8,567.9 1081.8,568.6 1082.7,568.8 1083,568.8 1083,569.2 1082.7,569.2 1081.8,569.4 1080.8,570.1 1079.9,571.1 1078.9,572.3 1077.9,573.6 1076.9,574.9 1076,576.2 1075,577.4 1074,578.4 1073,579.2 1072.1,579.7 1071.3,580 1070.8,575.6"/></g><g fill="#110e1c"><polygon points="1083,536.2 1083.5,531.6 1084.2,531.9 1085.2,532.4 1086.2,533.3 1087.2,534.3 1088.1,535.5 1089.1,536.8 1090.1,538.2 1091.1,539.5 1092,540.8 1093,541.8 1094,542.6 1094.8,542.8 1095.2,542.8 1095.2,543.2 1094.8,543.2 1094,543.4 1093,544.2 1092,545.2 1091.1,546.5 1090.1,547.8 1089.1,549.2 1088.1,550.5 1087.2,551.7 1086.2,552.7 1085.2,553.6 1084.2,554.1 1083.5,554.4 1083,549.8"/><polygon points="1083,562.4 1083.5,558 1084.2,558.3 1085.2,558.8 1086.2,559.6 1087.2,560.6 1088.1,561.8 1089.1,563.1 1090.1,564.4 1091.1,565.7 1092,566.9 1093,567.9 1094,568.6 1094.8,568.8 1095.2,568.8 1095.2,569.2 1094.8,569.2 1094,569.4 1093,570.1 1092,571.1 1091.1,572.3 1090.1,573.6 1089.1,574.9 1088.1,576.2 1087.2,577.4 1086.2,578.4 1085.2,579.2 1084.2,579.7 1083.5,580 1083,575.6"/></g><g fill="#110e1c"><polygon points="1095.2,536.2 1095.6,531.6 1096.4,531.9 1097.4,532.4 1098.4,533.3 1099.4,534.3 1100.3,535.5 1101.3,536.8 1102.3,538.2 1103.2,539.5 1104.2,540.8 1105.2,541.8 1106.2,542.6 1107,542.8 1107.4,542.8 1107.4,543.2 1107,543.2 1106.2,543.4 1105.2,544.2 1104.2,545.2 1103.2,546.5 1102.3,547.8 1101.3,549.2 1100.3,550.5 1099.4,551.7 1098.4,552.7 1097.4,553.6 1096.4,554.1 1095.6,554.4 1095.2,549.8"/><polygon points="1095.2,562.4 1095.6,558 1096.4,558.3 1097.4,558.8 1098.4,559.6 1099.4,560.6 1100.3,561.8 1101.3,563.1 1102.3,564.4 1103.2,565.7 1104.2,566.9 1105.2,567.9 1106.2,568.6 1107,568.8 1107.4,568.8 1107.4,569.2 1107,569.2 1106.2,569.4 1105.2,570.1 1104.2,571.1 1103.2,572.3 1102.3,573.6 1101.3,574.9 1100.3,576.2 1099.4,577.4 1098.4,578.4 1097.4,579.2 1096.4,579.7 1095.6,580 1095.2,575.6"/></g><g fill="#110e1c"><polygon points="1107.4,536.2 1107.8,531.6 1108.6,531.9 1109.6,532.4 1110.6,533.3 1111.5,534.3 1112.5,535.5 1113.5,536.8 1114.5,538.2 1115.4,539.5 1116.4,540.8 1117.4,541.8 1118.4,542.6 1119.2,542.8 1119.6,542.8 1119.6,543.2 1119.2,543.2 1118.4,543.4 1117.4,544.2 1116.4,545.2 1115.4,546.5 1114.5,547.8 1113.5,549.2 1112.5,550.5 1111.5,551.7 1110.6,552.7 1109.6,553.6 1108.6,554.1 1107.8,554.4 1107.4,549.8"/><polygon points="1107.4,562.4 1107.8,558 1108.6,558.3 1109.6,558.8 1110.6,559.6 1111.5,560.6 1112.5,561.8 1113.5,563.1 1114.5,564.4 1115.4,565.7 1116.4,566.9 1117.4,567.9 1118.4,568.6 1119.2,568.8 1119.6,568.8 1119.6,569.2 1119.2,569.2 1118.4,569.4 1117.4,570.1 1116.4,571.1 1115.4,572.3 1114.5,573.6 1113.5,574.9 1112.5,576.2 1111.5,577.4 1110.6,578.4 1109.6,579.2 1108.6,579.7 1107.8,580 1107.4,575.6"/></g><g fill="#110e1c"><polygon points="1119.6,536.2 1120,531.6 1120.8,531.9 1121.8,532.4 1122.7,533.3 1123.7,534.3 1124.7,535.5 1125.7,536.8 1126.6,538.2 1127.6,539.5 1128.6,540.8 1129.6,541.8 1130.5,542.6 1131.4,542.8 1131.8,542.8 1131.8,543.2 1131.4,543.2 1130.5,543.4 1129.6,544.2 1128.6,545.2 1127.6,546.5 1126.6,547.8 1125.7,549.2 1124.7,550.5 1123.7,551.7 1122.7,552.7 1121.8,553.6 1120.8,554.1 1120,554.4 1119.6,549.8"/><polygon points="1119.6,562.4 1120,558 1120.8,558.3 1121.8,558.8 1122.7,559.6 1123.7,560.6 1124.7,561.8 1125.7,563.1 1126.6,564.4 1127.6,565.7 1128.6,566.9 1129.6,567.9 1130.5,568.6 1131.4,568.8 1131.8,568.8 1131.8,569.2 1131.4,569.2 1130.5,569.4 1129.6,570.1 1128.6,571.1 1127.6,572.3 1126.6,573.6 1125.7,574.9 1124.7,576.2 1123.7,577.4 1122.7,578.4 1121.8,579.2 1120.8,579.7 1120,580 1119.6,575.6"/></g><g fill="#110e1c"><polygon points="1131.8,536.2 1132.2,531.6 1133,531.9 1133.9,532.4 1134.9,533.3 1135.9,534.3 1136.9,535.5 1137.8,536.8 1138.8,538.2 1139.8,539.5 1140.8,540.8 1141.7,541.8 1142.7,542.6 1143.6,542.8 1143.9,542.8 1143.9,543.2 1143.6,543.2 1142.7,543.4 1141.7,544.2 1140.8,545.2 1139.8,546.5 1138.8,547.8 1137.8,549.2 1136.9,550.5 1135.9,551.7 1134.9,552.7 1133.9,553.6 1133,554.1 1132.2,554.4 1131.8,549.8"/><polygon points="1131.8,562.4 1132.2,558 1133,558.3 1133.9,558.8 1134.9,559.6 1135.9,560.6 1136.9,561.8 1137.8,563.1 1138.8,564.4 1139.8,565.7 1140.8,566.9 1141.7,567.9 1142.7,568.6 1143.6,568.8 1143.9,568.8 1143.9,569.2 1143.6,569.2 1142.7,569.4 1141.7,570.1 1140.8,571.1 1139.8,572.3 1138.8,573.6 1137.8,574.9 1136.9,576.2 1135.9,577.4 1134.9,578.4 1133.9,579.2 1133,579.7 1132.2,580 1131.8,575.6"/></g><g fill="#110e1c"><polygon points="1143.9,536.2 1144.4,531.6 1145.1,531.9 1146.1,532.4 1147.1,533.3 1148.1,534.3 1149,535.5 1150,536.8 1151,538.2 1152,539.5 1152.9,540.8 1153.9,541.8 1154.9,542.6 1155.7,542.8 1156.1,542.8 1156.1,543.2 1155.7,543.2 1154.9,543.4 1153.9,544.2 1152.9,545.2 1152,546.5 1151,547.8 1150,549.2 1149,550.5 1148.1,551.7 1147.1,552.7 1146.1,553.6 1145.1,554.1 1144.4,554.4 1143.9,549.8"/><polygon points="1143.9,562.4 1144.4,558 1145.1,558.3 1146.1,558.8 1147.1,559.6 1148.1,560.6 1149,561.8 1150,563.1 1151,564.4 1152,565.7 1152.9,566.9 1153.9,567.9 1154.9,568.6 1155.7,568.8 1156.1,568.8 1156.1,569.2 1155.7,569.2 1154.9,569.4 1153.9,570.1 1152.9,571.1 1152,572.3 1151,573.6 1150,574.9 1149,576.2 1148.1,577.4 1147.1,578.4 1146.1,579.2 1145.1,579.7 1144.4,580 1143.9,575.6"/></g><g fill="#110e1c"><polygon points="1156.1,536.2 1156.5,531.6 1157.3,531.9 1158.3,532.4 1159.3,533.3 1160.3,534.3 1161.2,535.5 1162.2,536.8 1163.2,538.2 1164.1,539.5 1165.1,540.8 1166.1,541.8 1167.1,542.6 1167.9,542.8 1168.3,542.8 1168.3,543.2 1167.9,543.2 1167.1,543.4 1166.1,544.2 1165.1,545.2 1164.1,546.5 1163.2,547.8 1162.2,549.2 1161.2,550.5 1160.3,551.7 1159.3,552.7 1158.3,553.6 1157.3,554.1 1156.5,554.4 1156.1,549.8"/><polygon points="1156.1,562.4 1156.5,558 1157.3,558.3 1158.3,558.8 1159.3,559.6 1160.3,560.6 1161.2,561.8 1162.2,563.1 1163.2,564.4 1164.1,565.7 1165.1,566.9 1166.1,567.9 1167.1,568.6 1167.9,568.8 1168.3,568.8 1168.3,569.2 1167.9,569.2 1167.1,569.4 1166.1,570.1 1165.1,571.1 1164.1,572.3 1163.2,573.6 1162.2,574.9 1161.2,576.2 1160.3,577.4 1159.3,578.4 1158.3,579.2 1157.3,579.7 1156.5,580 1156.1,575.6"/></g><g fill="#110e1c"><polygon points="1168.3,536.2 1168.7,531.6 1169.5,531.9 1170.5,532.4 1171.5,533.3 1172.4,534.3 1173.4,535.5 1174.4,536.8 1175.4,538.2 1176.3,539.5 1177.3,540.8 1178.3,541.8 1179.3,542.6 1180.1,542.8 1180.5,542.8 1180.5,543.2 1180.1,543.2 1179.3,543.4 1178.3,544.2 1177.3,545.2 1176.3,546.5 1175.4,547.8 1174.4,549.2 1173.4,550.5 1172.4,551.7 1171.5,552.7 1170.5,553.6 1169.5,554.1 1168.7,554.4 1168.3,549.8"/><polygon points="1168.3,562.4 1168.7,558 1169.5,558.3 1170.5,558.8 1171.5,559.6 1172.4,560.6 1173.4,561.8 1174.4,563.1 1175.4,564.4 1176.3,565.7 1177.3,566.9 1178.3,567.9 1179.3,568.6 1180.1,568.8 1180.5,568.8 1180.5,569.2 1180.1,569.2 1179.3,569.4 1178.3,570.1 1177.3,571.1 1176.3,572.3 1175.4,573.6 1174.4,574.9 1173.4,576.2 1172.4,577.4 1171.5,578.4 1170.5,579.2 1169.5,579.7 1168.7,580 1168.3,575.6"/></g><g fill="#110e1c"><polygon points="1180.5,536.2 1180.9,531.6 1181.7,531.9 1182.7,532.4 1183.6,533.3 1184.6,534.3 1185.6,535.5 1186.6,536.8 1187.5,538.2 1188.5,539.5 1189.5,540.8 1190.5,541.8 1191.4,542.6 1192.3,542.8 1192.7,542.8 1192.7,543.2 1192.3,543.2 1191.4,543.4 1190.5,544.2 1189.5,545.2 1188.5,546.5 1187.5,547.8 1186.6,549.2 1185.6,550.5 1184.6,551.7 1183.6,552.7 1182.7,553.6 1181.7,554.1 1180.9,554.4 1180.5,549.8"/><polygon points="1180.5,562.4 1180.9,558 1181.7,558.3 1182.7,558.8 1183.6,559.6 1184.6,560.6 1185.6,561.8 1186.6,563.1 1187.5,564.4 1188.5,565.7 1189.5,566.9 1190.5,567.9 1191.4,568.6 1192.3,568.8 1192.7,568.8 1192.7,569.2 1192.3,569.2 1191.4,569.4 1190.5,570.1 1189.5,571.1 1188.5,572.3 1187.5,573.6 1186.6,574.9 1185.6,576.2 1184.6,577.4 1183.6,578.4 1182.7,579.2 1181.7,579.7 1180.9,580 1180.5,575.6"/></g><g fill="#110e1c"><polygon points="1192.6,536.2 1193.1,531.6 1193.9,531.9 1194.8,532.4 1195.8,533.3 1196.8,534.3 1197.8,535.5 1198.7,536.8 1199.7,538.2 1200.7,539.5 1201.7,540.8 1202.6,541.8 1203.6,542.6 1204.5,542.8 1204.8,542.8 1204.8,543.2 1204.5,543.2 1203.6,543.4 1202.6,544.2 1201.7,545.2 1200.7,546.5 1199.7,547.8 1198.7,549.2 1197.8,550.5 1196.8,551.7 1195.8,552.7 1194.8,553.6 1193.9,554.1 1193.1,554.4 1192.6,549.8"/><polygon points="1192.6,562.4 1193.1,558 1193.9,558.3 1194.8,558.8 1195.8,559.6 1196.8,560.6 1197.8,561.8 1198.7,563.1 1199.7,564.4 1200.7,565.7 1201.7,566.9 1202.6,567.9 1203.6,568.6 1204.5,568.8 1204.8,568.8 1204.8,569.2 1204.5,569.2 1203.6,569.4 1202.6,570.1 1201.7,571.1 1200.7,572.3 1199.7,573.6 1198.7,574.9 1197.8,576.2 1196.8,577.4 1195.8,578.4 1194.8,579.2 1193.9,579.7 1193.1,580 1192.6,575.6"/></g><g fill="#110e1c"><polygon points="1204.8,536.2 1205.3,531.6 1206,531.9 1207,532.4 1208,533.3 1209,534.3 1209.9,535.5 1210.9,536.8 1211.9,538.2 1212.9,539.5 1213.8,540.8 1214.8,541.8 1215.8,542.6 1216.6,542.8 1217,542.8 1217,543.2 1216.6,543.2 1215.8,543.4 1214.8,544.2 1213.8,545.2 1212.9,546.5 1211.9,547.8 1210.9,549.2 1209.9,550.5 1209,551.7 1208,552.7 1207,553.6 1206,554.1 1205.3,554.4 1204.8,549.8"/><polygon points="1204.8,562.4 1205.3,558 1206,558.3 1207,558.8 1208,559.6 1209,560.6 1209.9,561.8 1210.9,563.1 1211.9,564.4 1212.9,565.7 1213.8,566.9 1214.8,567.9 1215.8,568.6 1216.6,568.8 1217,568.8 1217,569.2 1216.6,569.2 1215.8,569.4 1214.8,570.1 1213.8,571.1 1212.9,572.3 1211.9,573.6 1210.9,574.9 1209.9,576.2 1209,577.4 1208,578.4 1207,579.2 1206,579.7 1205.3,580 1204.8,575.6"/></g><g fill="#110e1c"><polygon points="1217,536.2 1217.4,531.6 1218.2,531.9 1219.2,532.4 1220.2,533.3 1221.2,534.3 1222.1,535.5 1223.1,536.8 1224.1,538.2 1225,539.5 1226,540.8 1227,541.8 1228,542.6 1228.8,542.8 1229.2,542.8 1229.2,543.2 1228.8,543.2 1228,543.4 1227,544.2 1226,545.2 1225,546.5 1224.1,547.8 1223.1,549.2 1222.1,550.5 1221.2,551.7 1220.2,552.7 1219.2,553.6 1218.2,554.1 1217.4,554.4 1217,549.8"/><polygon points="1217,562.4 1217.4,558 1218.2,558.3 1219.2,558.8 1220.2,559.6 1221.2,560.6 1222.1,561.8 1223.1,563.1 1224.1,564.4 1225,565.7 1226,566.9 1227,567.9 1228,568.6 1228.8,568.8 1229.2,568.8 1229.2,569.2 1228.8,569.2 1228,569.4 1227,570.1 1226,571.1 1225,572.3 1224.1,573.6 1223.1,574.9 1222.1,576.2 1221.2,577.4 1220.2,578.4 1219.2,579.2 1218.2,579.7 1217.4,580 1217,575.6"/></g><g fill="#110e1c"><polygon points="1229.2,536.2 1229.6,531.6 1230.4,531.9 1231.4,532.4 1232.4,533.3 1233.3,534.3 1234.3,535.5 1235.3,536.8 1236.3,538.2 1237.2,539.5 1238.2,540.8 1239.2,541.8 1240.2,542.6 1241,542.8 1241.4,542.8 1241.4,543.2 1241,543.2 1240.2,543.4 1239.2,544.2 1238.2,545.2 1237.2,546.5 1236.3,547.8 1235.3,549.2 1234.3,550.5 1233.3,551.7 1232.4,552.7 1231.4,553.6 1230.4,554.1 1229.6,554.4 1229.2,549.8"/><polygon points="1229.2,562.4 1229.6,558 1230.4,558.3 1231.4,558.8 1232.4,559.6 1233.3,560.6 1234.3,561.8 1235.3,563.1 1236.3,564.4 1237.2,565.7 1238.2,566.9 1239.2,567.9 1240.2,568.6 1241,568.8 1241.4,568.8 1241.4,569.2 1241,569.2 1240.2,569.4 1239.2,570.1 1238.2,571.1 1237.2,572.3 1236.3,573.6 1235.3,574.9 1234.3,576.2 1233.3,577.4 1232.4,578.4 1231.4,579.2 1230.4,579.7 1229.6,580 1229.2,575.6"/></g><g fill="#110e1c"><polygon points="1241.4,536.2 1241.8,531.6 1242.6,531.9 1243.6,532.4 1244.5,533.3 1245.5,534.3 1246.5,535.5 1247.5,536.8 1248.4,538.2 1249.4,539.5 1250.4,540.8 1251.4,541.8 1252.3,542.6 1253.2,542.8 1253.5,542.8 1253.5,543.2 1253.2,543.2 1252.3,543.4 1251.4,544.2 1250.4,545.2 1249.4,546.5 1248.4,547.8 1247.5,549.2 1246.5,550.5 1245.5,551.7 1244.5,552.7 1243.6,553.6 1242.6,554.1 1241.8,554.4 1241.4,549.8"/><polygon points="1241.4,562.4 1241.8,558 1242.6,558.3 1243.6,558.8 1244.5,559.6 1245.5,560.6 1246.5,561.8 1247.5,563.1 1248.4,564.4 1249.4,565.7 1250.4,566.9 1251.4,567.9 1252.3,568.6 1253.2,568.8 1253.5,568.8 1253.5,569.2 1253.2,569.2 1252.3,569.4 1251.4,570.1 1250.4,571.1 1249.4,572.3 1248.4,573.6 1247.5,574.9 1246.5,576.2 1245.5,577.4 1244.5,578.4 1243.6,579.2 1242.6,579.7 1241.8,580 1241.4,575.6"/></g><g fill="#110e1c"><polygon points="1253.5,536.2 1254,531.6 1254.8,531.9 1255.7,532.4 1256.7,533.3 1257.7,534.3 1258.7,535.5 1259.6,536.8 1260.6,538.2 1261.6,539.5 1262.6,540.8 1263.5,541.8 1264.5,542.6 1265.4,542.8 1265.7,542.8 1265.7,543.2 1265.4,543.2 1264.5,543.4 1263.5,544.2 1262.6,545.2 1261.6,546.5 1260.6,547.8 1259.6,549.2 1258.7,550.5 1257.7,551.7 1256.7,552.7 1255.7,553.6 1254.8,554.1 1254,554.4 1253.5,549.8"/><polygon points="1253.5,562.4 1254,558 1254.8,558.3 1255.7,558.8 1256.7,559.6 1257.7,560.6 1258.7,561.8 1259.6,563.1 1260.6,564.4 1261.6,565.7 1262.6,566.9 1263.5,567.9 1264.5,568.6 1265.4,568.8 1265.7,568.8 1265.7,569.2 1265.4,569.2 1264.5,569.4 1263.5,570.1 1262.6,571.1 1261.6,572.3 1260.6,573.6 1259.6,574.9 1258.7,576.2 1257.7,577.4 1256.7,578.4 1255.7,579.2 1254.8,579.7 1254,580 1253.5,575.6"/></g><g fill="#110e1c"><polygon points="1265.7,536.2 1266.2,531.6 1266.9,531.9 1267.9,532.4 1268.9,533.3 1269.9,534.3 1270.8,535.5 1271.8,536.8 1272.8,538.2 1273.8,539.5 1274.7,540.8 1275.7,541.8 1276.7,542.6 1277.5,542.8 1277.9,542.8 1277.9,543.2 1277.5,543.2 1276.7,543.4 1275.7,544.2 1274.7,545.2 1273.8,546.5 1272.8,547.8 1271.8,549.2 1270.8,550.5 1269.9,551.7 1268.9,552.7 1267.9,553.6 1266.9,554.1 1266.2,554.4 1265.7,549.8"/><polygon points="1265.7,562.4 1266.2,558 1266.9,558.3 1267.9,558.8 1268.9,559.6 1269.9,560.6 1270.8,561.8 1271.8,563.1 1272.8,564.4 1273.8,565.7 1274.7,566.9 1275.7,567.9 1276.7,568.6 1277.5,568.8 1277.9,568.8 1277.9,569.2 1277.5,569.2 1276.7,569.4 1275.7,570.1 1274.7,571.1 1273.8,572.3 1272.8,573.6 1271.8,574.9 1270.8,576.2 1269.9,577.4 1268.9,578.4 1267.9,579.2 1266.9,579.7 1266.2,580 1265.7,575.6"/></g><g fill="#110e1c"><polygon points="1277.9,536.2 1278.3,531.6 1279.1,531.9 1280.1,532.4 1281.1,533.3 1282.1,534.3 1283,535.5 1284,536.8 1285,538.2 1285.9,539.5 1286.9,540.8 1287.9,541.8 1288.9,542.6 1289.7,542.8 1290.1,542.8 1290.1,543.2 1289.7,543.2 1288.9,543.4 1287.9,544.2 1286.9,545.2 1285.9,546.5 1285,547.8 1284,549.2 1283,550.5 1282.1,551.7 1281.1,552.7 1280.1,553.6 1279.1,554.1 1278.3,554.4 1277.9,549.8"/><polygon points="1277.9,562.4 1278.3,558 1279.1,558.3 1280.1,558.8 1281.1,559.6 1282.1,560.6 1283,561.8 1284,563.1 1285,564.4 1285.9,565.7 1286.9,566.9 1287.9,567.9 1288.9,568.6 1289.7,568.8 1290.1,568.8 1290.1,569.2 1289.7,569.2 1288.9,569.4 1287.9,570.1 1286.9,571.1 1285.9,572.3 1285,573.6 1284,574.9 1283,576.2 1282.1,577.4 1281.1,578.4 1280.1,579.2 1279.1,579.7 1278.3,580 1277.9,575.6"/></g><g fill="#110e1c"><polygon points="1290.1,536.2 1290.5,531.6 1291.3,531.9 1292.3,532.4 1293.3,533.3 1294.2,534.3 1295.2,535.5 1296.2,536.8 1297.2,538.2 1298.1,539.5 1299.1,540.8 1300.1,541.8 1301.1,542.6 1301.9,542.8 1302.3,542.8 1302.3,543.2 1301.9,543.2 1301.1,543.4 1300.1,544.2 1299.1,545.2 1298.1,546.5 1297.2,547.8 1296.2,549.2 1295.2,550.5 1294.2,551.7 1293.3,552.7 1292.3,553.6 1291.3,554.1 1290.5,554.4 1290.1,549.8"/><polygon points="1290.1,562.4 1290.5,558 1291.3,558.3 1292.3,558.8 1293.3,559.6 1294.2,560.6 1295.2,561.8 1296.2,563.1 1297.2,564.4 1298.1,565.7 1299.1,566.9 1300.1,567.9 1301.1,568.6 1301.9,568.8 1302.3,568.8 1302.3,569.2 1301.9,569.2 1301.1,569.4 1300.1,570.1 1299.1,571.1 1298.1,572.3 1297.2,573.6 1296.2,574.9 1295.2,576.2 1294.2,577.4 1293.3,578.4 1292.3,579.2 1291.3,579.7 1290.5,580 1290.1,575.6"/></g><g fill="#110e1c"><polygon points="1302.3,536.2 1302.7,531.6 1303.5,531.9 1304.5,532.4 1305.4,533.3 1306.4,534.3 1307.4,535.5 1308.4,536.8 1309.3,538.2 1310.3,539.5 1311.3,540.8 1312.3,541.8 1313.2,542.6 1314.1,542.8 1314.5,542.8 1314.5,543.2 1314.1,543.2 1313.2,543.4 1312.3,544.2 1311.3,545.2 1310.3,546.5 1309.3,547.8 1308.4,549.2 1307.4,550.5 1306.4,551.7 1305.4,552.7 1304.5,553.6 1303.5,554.1 1302.7,554.4 1302.3,549.8"/><polygon points="1302.3,562.4 1302.7,558 1303.5,558.3 1304.5,558.8 1305.4,559.6 1306.4,560.6 1307.4,561.8 1308.4,563.1 1309.3,564.4 1310.3,565.7 1311.3,566.9 1312.3,567.9 1313.2,568.6 1314.1,568.8 1314.5,568.8 1314.5,569.2 1314.1,569.2 1313.2,569.4 1312.3,570.1 1311.3,571.1 1310.3,572.3 1309.3,573.6 1308.4,574.9 1307.4,576.2 1306.4,577.4 1305.4,578.4 1304.5,579.2 1303.5,579.7 1302.7,580 1302.3,575.6"/></g><g fill="#110e1c"><polygon points="1314.4,536.2 1314.9,531.6 1315.7,531.9 1316.6,532.4 1317.6,533.3 1318.6,534.3 1319.6,535.5 1320.5,536.8 1321.5,538.2 1322.5,539.5 1323.5,540.8 1324.4,541.8 1325.4,542.6 1326.3,542.8 1326.6,542.8 1326.6,543.2 1326.3,543.2 1325.4,543.4 1324.4,544.2 1323.5,545.2 1322.5,546.5 1321.5,547.8 1320.5,549.2 1319.6,550.5 1318.6,551.7 1317.6,552.7 1316.6,553.6 1315.7,554.1 1314.9,554.4 1314.4,549.8"/><polygon points="1314.4,562.4 1314.9,558 1315.7,558.3 1316.6,558.8 1317.6,559.6 1318.6,560.6 1319.6,561.8 1320.5,563.1 1321.5,564.4 1322.5,565.7 1323.5,566.9 1324.4,567.9 1325.4,568.6 1326.3,568.8 1326.6,568.8 1326.6,569.2 1326.3,569.2 1325.4,569.4 1324.4,570.1 1323.5,571.1 1322.5,572.3 1321.5,573.6 1320.5,574.9 1319.6,576.2 1318.6,577.4 1317.6,578.4 1316.6,579.2 1315.7,579.7 1314.9,580 1314.4,575.6"/></g><g fill="#110e1c"><polygon points="1326.6,536.2 1327.1,531.6 1327.8,531.9 1328.8,532.4 1329.8,533.3 1330.8,534.3 1331.7,535.5 1332.7,536.8 1333.7,538.2 1334.7,539.5 1335.6,540.8 1336.6,541.8 1337.6,542.6 1338.4,542.8 1338.8,542.8 1338.8,543.2 1338.4,543.2 1337.6,543.4 1336.6,544.2 1335.6,545.2 1334.7,546.5 1333.7,547.8 1332.7,549.2 1331.7,550.5 1330.8,551.7 1329.8,552.7 1328.8,553.6 1327.8,554.1 1327.1,554.4 1326.6,549.8"/><polygon points="1326.6,562.4 1327.1,558 1327.8,558.3 1328.8,558.8 1329.8,559.6 1330.8,560.6 1331.7,561.8 1332.7,563.1 1333.7,564.4 1334.7,565.7 1335.6,566.9 1336.6,567.9 1337.6,568.6 1338.4,568.8 1338.8,568.8 1338.8,569.2 1338.4,569.2 1337.6,569.4 1336.6,570.1 1335.6,571.1 1334.7,572.3 1333.7,573.6 1332.7,574.9 1331.7,576.2 1330.8,577.4 1329.8,578.4 1328.8,579.2 1327.8,579.7 1327.1,580 1326.6,575.6"/></g><g fill="#110e1c"><polygon points="1338.8,536.2 1339.2,531.6 1340,531.9 1341,532.4 1342,533.3 1343,534.3 1343.9,535.5 1344.9,536.8 1345.9,538.2 1346.8,539.5 1347.8,540.8 1348.8,541.8 1349.8,542.6 1350.6,542.8 1351,542.8 1351,543.2 1350.6,543.2 1349.8,543.4 1348.8,544.2 1347.8,545.2 1346.8,546.5 1345.9,547.8 1344.9,549.2 1343.9,550.5 1343,551.7 1342,552.7 1341,553.6 1340,554.1 1339.2,554.4 1338.8,549.8"/><polygon points="1338.8,562.4 1339.2,558 1340,558.3 1341,558.8 1342,559.6 1343,560.6 1343.9,561.8 1344.9,563.1 1345.9,564.4 1346.8,565.7 1347.8,566.9 1348.8,567.9 1349.8,568.6 1350.6,568.8 1351,568.8 1351,569.2 1350.6,569.2 1349.8,569.4 1348.8,570.1 1347.8,571.1 1346.8,572.3 1345.9,573.6 1344.9,574.9 1343.9,576.2 1343,577.4 1342,578.4 1341,579.2 1340,579.7 1339.2,580 1338.8,575.6"/></g><g fill="#110e1c"><polygon points="1351,536.2 1351.4,531.6 1352.2,531.9 1353.2,532.4 1354.2,533.3 1355.1,534.3 1356.1,535.5 1357.1,536.8 1358.1,538.2 1359,539.5 1360,540.8 1361,541.8 1362,542.6 1362.8,542.8 1363.2,542.8 1363.2,543.2 1362.8,543.2 1362,543.4 1361,544.2 1360,545.2 1359,546.5 1358.1,547.8 1357.1,549.2 1356.1,550.5 1355.1,551.7 1354.2,552.7 1353.2,553.6 1352.2,554.1 1351.4,554.4 1351,549.8"/><polygon points="1351,562.4 1351.4,558 1352.2,558.3 1353.2,558.8 1354.2,559.6 1355.1,560.6 1356.1,561.8 1357.1,563.1 1358.1,564.4 1359,565.7 1360,566.9 1361,567.9 1362,568.6 1362.8,568.8 1363.2,568.8 1363.2,569.2 1362.8,569.2 1362,569.4 1361,570.1 1360,571.1 1359,572.3 1358.1,573.6 1357.1,574.9 1356.1,576.2 1355.1,577.4 1354.2,578.4 1353.2,579.2 1352.2,579.7 1351.4,580 1351,575.6"/></g><g fill="#110e1c"><polygon points="1363.2,536.2 1363.6,531.6 1364.4,531.9 1365.4,532.4 1366.3,533.3 1367.3,534.3 1368.3,535.5 1369.3,536.8 1370.2,538.2 1371.2,539.5 1372.2,540.8 1373.2,541.8 1374.1,542.6 1375,542.8 1375.3,542.8 1375.3,543.2 1375,543.2 1374.1,543.4 1373.2,544.2 1372.2,545.2 1371.2,546.5 1370.2,547.8 1369.3,549.2 1368.3,550.5 1367.3,551.7 1366.3,552.7 1365.4,553.6 1364.4,554.1 1363.6,554.4 1363.2,549.8"/><polygon points="1363.2,562.4 1363.6,558 1364.4,558.3 1365.4,558.8 1366.3,559.6 1367.3,560.6 1368.3,561.8 1369.3,563.1 1370.2,564.4 1371.2,565.7 1372.2,566.9 1373.2,567.9 1374.1,568.6 1375,568.8 1375.3,568.8 1375.3,569.2 1375,569.2 1374.1,569.4 1373.2,570.1 1372.2,571.1 1371.2,572.3 1370.2,573.6 1369.3,574.9 1368.3,576.2 1367.3,577.4 1366.3,578.4 1365.4,579.2 1364.4,579.7 1363.6,580 1363.2,575.6"/></g><g fill="#110e1c"><polygon points="1375.3,536.2 1375.8,531.6 1376.6,531.9 1377.5,532.4 1378.5,533.3 1379.5,534.3 1380.5,535.5 1381.4,536.8 1382.4,538.2 1383.4,539.5 1384.4,540.8 1385.3,541.8 1386.3,542.6 1387.2,542.8 1387.5,542.8 1387.5,543.2 1387.2,543.2 1386.3,543.4 1385.3,544.2 1384.4,545.2 1383.4,546.5 1382.4,547.8 1381.4,549.2 1380.5,550.5 1379.5,551.7 1378.5,552.7 1377.5,553.6 1376.6,554.1 1375.8,554.4 1375.3,549.8"/><polygon points="1375.3,562.4 1375.8,558 1376.6,558.3 1377.5,558.8 1378.5,559.6 1379.5,560.6 1380.5,561.8 1381.4,563.1 1382.4,564.4 1383.4,565.7 1384.4,566.9 1385.3,567.9 1386.3,568.6 1387.2,568.8 1387.5,568.8 1387.5,569.2 1387.2,569.2 1386.3,569.4 1385.3,570.1 1384.4,571.1 1383.4,572.3 1382.4,573.6 1381.4,574.9 1380.5,576.2 1379.5,577.4 1378.5,578.4 1377.5,579.2 1376.6,579.7 1375.8,580 1375.3,575.6"/></g><g fill="#110e1c"><polygon points="1387.5,536.2 1388,531.6 1388.7,531.9 1389.7,532.4 1390.7,533.3 1391.7,534.3 1392.6,535.5 1393.6,536.8 1394.6,538.2 1395.6,539.5 1396.5,540.8 1397.5,541.8 1398.5,542.6 1399.3,542.8 1399.7,542.8 1399.7,543.2 1399.3,543.2 1398.5,543.4 1397.5,544.2 1396.5,545.2 1395.6,546.5 1394.6,547.8 1393.6,549.2 1392.6,550.5 1391.7,551.7 1390.7,552.7 1389.7,553.6 1388.7,554.1 1388,554.4 1387.5,549.8"/><polygon points="1387.5,562.4 1388,558 1388.7,558.3 1389.7,558.8 1390.7,559.6 1391.7,560.6 1392.6,561.8 1393.6,563.1 1394.6,564.4 1395.6,565.7 1396.5,566.9 1397.5,567.9 1398.5,568.6 1399.3,568.8 1399.7,568.8 1399.7,569.2 1399.3,569.2 1398.5,569.4 1397.5,570.1 1396.5,571.1 1395.6,572.3 1394.6,573.6 1393.6,574.9 1392.6,576.2 1391.7,577.4 1390.7,578.4 1389.7,579.2 1388.7,579.7 1388,580 1387.5,575.6"/></g></svg><div style="left:437px;top:584px;width:12px;height:17px;background:#ff2d37;border-bottom:1px solid #c6232a;border-left:1px solid #cc242c;"><span class="cn" style="left:1.2px;top:1px;color:rgba(40,0,5,0.62);font-size:10px;">80</span></div><div style="left:461px;top:584px;width:13px;height:17px;background:#ff2d37;border-bottom:1px solid #c6232a;border-left:1px solid #cc242c;"><span class="cn" style="left:1.2px;top:1px;color:rgba(40,0,5,0.62);font-size:10px;">80</span></div><div style="left:486px;top:584px;width:12px;height:17px;background:#ff2d37;border-bottom:1px solid #c6232a;border-left:1px solid #cc242c;"><span class="cn" style="left:1.2px;top:1px;color:rgba(40,0,5,0.62);font-size:10px;">80</span></div><div style="left:510px;top:584px;width:12px;height:17px;background:#ff2d37;border-bottom:1px solid #c6232a;border-left:1px solid #cc242c;"><span class="cn" style="left:1.2px;top:1px;color:rgba(40,0,5,0.62);font-size:10px;">80</span></div><div style="left:534px;top:584px;width:13px;height:17px;background:#ff2d37;border-bottom:1px solid #c6232a;border-left:1px solid #cc242c;"><span class="cn" style="left:1.2px;top:1px;color:rgba(40,0,5,0.62);font-size:10px;">80</span></div><div style="left:559px;top:584px;width:12px;height:17px;background:#ff2d37;border-bottom:1px solid #c6232a;border-left:1px solid #cc242c;"><span class="cn" style="left:1.2px;top:1px;color:rgba(40,0,5,0.62);font-size:10px;">80</span></div><div style="left:583px;top:584px;width:12px;height:17px;background:#ff2d37;border-bottom:1px solid #c6232a;border-left:1px solid #cc242c;"><span class="cn" style="left:1.2px;top:1px;color:rgba(40,0,5,0.62);font-size:10px;">80</span></div><div style="left:608px;top:584px;width:12px;height:17px;background:#ff2d37;border-bottom:1px solid #c6232a;border-left:1px solid #cc242c;"><span class="cn" style="left:1.2px;top:1px;color:rgba(40,0,5,0.62);font-size:10px;">80</span></div><div style="left:632px;top:584px;width:12px;height:17px;background:#ff2d37;border-bottom:1px solid #c6232a;border-left:1px solid #cc242c;"><span class="cn" style="left:1.2px;top:1px;color:rgba(40,0,5,0.62);font-size:10px;">80</span></div><div style="left:656px;top:584px;width:12px;height:17px;background:#ff2d37;border-bottom:1px solid #c6232a;border-left:1px solid #cc242c;"><span class="cn" style="left:1.2px;top:1px;color:rgba(40,0,5,0.62);font-size:10px;">80</span></div><div style="left:681px;top:584px;width:12px;height:17px;background:#ff2d37;border-bottom:1px solid #c6232a;border-left:1px solid #cc242c;"><span class="cn" style="left:1.2px;top:1px;color:rgba(40,0,5,0.62);font-size:10px;">80</span></div><div style="left:705px;top:584px;width:12px;height:17px;background:#ff2d37;border-bottom:1px solid #c6232a;border-left:1px solid #cc242c;"><span class="cn" style="left:1.2px;top:1px;color:rgba(40,0,5,0.62);font-size:10px;">80</span></div><div style="left:729px;top:584px;width:12px;height:17px;background:#ff2d37;border-bottom:1px solid #c6232a;border-left:1px solid #cc242c;"><span class="cn" style="left:1.2px;top:1px;color:rgba(40,0,5,0.62);font-size:10px;">80</span></div><div style="left:754px;top:584px;width:12px;height:17px;background:#ff2d37;border-bottom:1px solid #c6232a;border-left:1px solid #cc242c;"><span class="cn" style="left:1.2px;top:1px;color:rgba(40,0,5,0.62);font-size:10px;">80</span></div><div style="left:778px;top:584px;width:12px;height:17px;background:#ff2d37;border-bottom:1px solid #c6232a;border-left:1px solid #cc242c;"><span class="cn" style="left:1.2px;top:1px;color:rgba(40,0,5,0.62);font-size:10px;">80</span></div><div style="left:802px;top:584px;width:13px;height:17px;background:#ff2d37;border-bottom:1px solid #c6232a;border-left:1px solid #cc242c;"><span class="cn" style="left:1.2px;top:1px;color:rgba(40,0,5,0.62);font-size:10px;">80</span></div><div style="left:827px;top:584px;width:12px;height:17px;background:#ff2d37;border-bottom:1px solid #c6232a;border-left:1px solid #cc242c;"><span class="cn" style="left:1.2px;top:1px;color:rgba(40,0,5,0.62);font-size:10px;">80</span></div><div style="left:851px;top:584px;width:12px;height:17px;background:#ff2d37;border-bottom:1px solid #c6232a;border-left:1px solid #cc242c;"><span class="cn" style="left:1.2px;top:1px;color:rgba(40,0,5,0.62);font-size:10px;">80</span></div><div style="left:875px;top:584px;width:13px;height:17px;background:#ff2d37;border-bottom:1px solid #c6232a;border-left:1px solid #cc242c;"><span class="cn" style="left:1.2px;top:1px;color:rgba(40,0,5,0.62);font-size:10px;">80</span></div><div style="left:900px;top:584px;width:12px;height:17px;background:#ff2d37;border-bottom:1px solid #c6232a;border-left:1px solid #cc242c;"><span class="cn" style="left:1.2px;top:1px;color:rgba(40,0,5,0.62);font-size:10px;">80</span></div><div style="left:924px;top:584px;width:12px;height:17px;background:#ff2d37;border-bottom:1px solid #c6232a;border-left:1px solid #cc242c;"><span class="cn" style="left:1.2px;top:1px;color:rgba(40,0,5,0.62);font-size:10px;">80</span></div><div style="left:949px;top:584px;width:12px;height:17px;background:#ff2d37;border-bottom:1px solid #c6232a;border-left:1px solid #cc242c;"><span class="cn" style="left:1.2px;top:1px;color:rgba(40,0,5,0.62);font-size:10px;">80</span></div><div style="left:973px;top:584px;width:12px;height:17px;background:#ff2d37;border-bottom:1px solid #c6232a;border-left:1px solid #cc242c;"><span class="cn" style="left:1.2px;top:1px;color:rgba(40,0,5,0.62);font-size:10px;">80</span></div><div style="left:997px;top:584px;width:12px;height:17px;background:#ff2d37;border-bottom:1px solid #c6232a;border-left:1px solid #cc242c;"><span class="cn" style="left:1.2px;top:1px;color:rgba(40,0,5,0.62);font-size:10px;">80</span></div><div style="left:1022px;top:584px;width:12px;height:17px;background:#ff2d37;border-bottom:1px solid #c6232a;border-left:1px solid #cc242c;"><span class="cn" style="left:1.2px;top:1px;color:rgba(40,0,5,0.62);font-size:10px;">80</span></div><div style="left:1046px;top:584px;width:12px;height:17px;background:#ff2d37;border-bottom:1px solid #c6232a;border-left:1px solid #cc242c;"><span class="cn" style="left:1.2px;top:1px;color:rgba(40,0,5,0.62);font-size:10px;">80</span></div><div style="left:1070px;top:584px;width:13px;height:17px;background:#ff2d37;border-bottom:1px solid #c6232a;border-left:1px solid #cc242c;"><span class="cn" style="left:1.2px;top:1px;color:rgba(40,0,5,0.62);font-size:10px;">80</span></div><div style="left:1095px;top:584px;width:12px;height:17px;background:#ff2d37;border-bottom:1px solid #c6232a;border-left:1px solid #cc242c;"><span class="cn" style="left:1.2px;top:1px;color:rgba(40,0,5,0.62);font-size:10px;">80</span></div><div style="left:1119px;top:584px;width:12px;height:17px;background:#ff2d37;border-bottom:1px solid #c6232a;border-left:1px solid #cc242c;"><span class="cn" style="left:1.2px;top:1px;color:rgba(40,0,5,0.62);font-size:10px;">80</span></div><div style="left:1143px;top:584px;width:13px;height:17px;background:#ff2d37;border-bottom:1px solid #c6232a;border-left:1px solid #cc242c;"><span class="cn" style="left:1.2px;top:1px;color:rgba(40,0,5,0.62);font-size:10px;">80</span></div><div style="left:1168px;top:584px;width:12px;height:17px;background:#ff2d37;border-bottom:1px solid #c6232a;border-left:1px solid #cc242c;"><span class="cn" style="left:1.2px;top:1px;color:rgba(40,0,5,0.62);font-size:10px;">80</span></div><div style="left:1192px;top:584px;width:12px;height:17px;background:#ff2d37;border-bottom:1px solid #c6232a;border-left:1px solid #cc242c;"><span class="cn" style="left:1.2px;top:1px;color:rgba(40,0,5,0.62);font-size:10px;">80</span></div><div style="left:1217px;top:584px;width:12px;height:17px;background:#ff2d37;border-bottom:1px solid #c6232a;border-left:1px solid #cc242c;"><span class="cn" style="left:1.2px;top:1px;color:rgba(40,0,5,0.62);font-size:10px;">80</span></div><div style="left:1241px;top:584px;width:12px;height:17px;background:#ff2d37;border-bottom:1px solid #c6232a;border-left:1px solid #cc242c;"><span class="cn" style="left:1.2px;top:1px;color:rgba(40,0,5,0.62);font-size:10px;">80</span></div><div style="left:1265px;top:584px;width:12px;height:17px;background:#ff2d37;border-bottom:1px solid #c6232a;border-left:1px solid #cc242c;"><span class="cn" style="left:1.2px;top:1px;color:rgba(40,0,5,0.62);font-size:10px;">80</span></div><div style="left:1290px;top:584px;width:12px;height:17px;background:#ff2d37;border-bottom:1px solid #c6232a;border-left:1px solid #cc242c;"><span class="cn" style="left:1.2px;top:1px;color:rgba(40,0,5,0.62);font-size:10px;">80</span></div><div style="left:1314px;top:584px;width:12px;height:17px;background:#ff2d37;border-bottom:1px solid #c6232a;border-left:1px solid #cc242c;"><span class="cn" style="left:1.2px;top:1px;color:rgba(40,0,5,0.62);font-size:10px;">80</span></div><div style="left:1338px;top:584px;width:12px;height:17px;background:#ff2d37;border-bottom:1px solid #c6232a;border-left:1px solid #cc242c;"><span class="cn" style="left:1.2px;top:1px;color:rgba(40,0,5,0.62);font-size:10px;">80</span></div><div style="left:1363px;top:584px;width:12px;height:17px;background:#ff2d37;border-bottom:1px solid #c6232a;border-left:1px solid #cc242c;"><span class="cn" style="left:1.2px;top:1px;color:rgba(40,0,5,0.62);font-size:10px;">80</span></div><div style="left:1387px;top:584px;width:12px;height:17px;background:#ff2d37;border-bottom:1px solid #c6232a;border-left:1px solid #cc242c;"><span class="cn" style="left:1.2px;top:1px;color:rgba(40,0,5,0.62);font-size:10px;">80</span></div><svg width="1414" height="69" viewBox="35 584 1414 69" style="left:35px;top:584px"><g fill="#2a0508"><polygon points="437.7,606.1 438.1,606.7 438.5,609.2 438.9,610.9 439.3,612.1 439.7,612.9 440.1,613.4 440.5,613.8 440.9,614.1 441.3,614.1 441.7,614.1 442.1,614.1 448.6,614.1 448.6,615.1 442.1,615.1 441.7,615.1 441.3,615.1 440.9,615.1 440.5,615.4 440.1,615.8 439.7,616.3 439.3,617.1 438.9,618.3 438.5,620 438.1,622.5 437.7,623.1"/><polygon points="437.7,631.9 438.1,632.5 438.5,635 438.9,636.7 439.3,637.9 439.7,638.7 440.1,639.2 440.5,639.6 440.9,639.9 441.3,639.9 441.7,639.9 442.1,639.9 448.6,639.9 448.6,640.9 442.1,640.9 441.7,640.9 441.3,640.9 440.9,640.9 440.5,641.2 440.1,641.6 439.7,642.1 439.3,642.9 438.9,644.1 438.5,645.8 438.1,648.3 437.7,648.9"/></g><g fill="#2a0508"><polygon points="461.7,606.1 462.1,606.7 462.5,609.2 462.9,610.9 463.3,612.1 463.7,612.9 464.1,613.4 464.5,613.8 464.9,614.1 465.3,614.1 465.7,614.1 466.1,614.1 472.6,614.1 472.6,615.1 466.1,615.1 465.7,615.1 465.3,615.1 464.9,615.1 464.5,615.4 464.1,615.8 463.7,616.3 463.3,617.1 462.9,618.3 462.5,620 462.1,622.5 461.7,623.1"/><polygon points="461.7,631.9 462.1,632.5 462.5,635 462.9,636.7 463.3,637.9 463.7,638.7 464.1,639.2 464.5,639.6 464.9,639.9 465.3,639.9 465.7,639.9 466.1,639.9 472.6,639.9 472.6,640.9 466.1,640.9 465.7,640.9 465.3,640.9 464.9,640.9 464.5,641.2 464.1,641.6 463.7,642.1 463.3,642.9 462.9,644.1 462.5,645.8 462.1,648.3 461.7,648.9"/></g><g fill="#2a0508"><polygon points="486.7,606.1 487.1,606.7 487.5,609.2 487.9,610.9 488.3,612.1 488.7,612.9 489.1,613.4 489.5,613.8 489.9,614.1 490.3,614.1 490.7,614.1 491.1,614.1 497.6,614.1 497.6,615.1 491.1,615.1 490.7,615.1 490.3,615.1 489.9,615.1 489.5,615.4 489.1,615.8 488.7,616.3 488.3,617.1 487.9,618.3 487.5,620 487.1,622.5 486.7,623.1"/><polygon points="486.7,631.9 487.1,632.5 487.5,635 487.9,636.7 488.3,637.9 488.7,638.7 489.1,639.2 489.5,639.6 489.9,639.9 490.3,639.9 490.7,639.9 491.1,639.9 497.6,639.9 497.6,640.9 491.1,640.9 490.7,640.9 490.3,640.9 489.9,640.9 489.5,641.2 489.1,641.6 488.7,642.1 488.3,642.9 487.9,644.1 487.5,645.8 487.1,648.3 486.7,648.9"/></g><g fill="#2a0508"><polygon points="510.7,606.1 511.1,606.7 511.5,609.2 511.9,610.9 512.3,612.1 512.7,612.9 513.1,613.4 513.5,613.8 513.9,614.1 514.3,614.1 514.7,614.1 515.1,614.1 521.6,614.1 521.6,615.1 515.1,615.1 514.7,615.1 514.3,615.1 513.9,615.1 513.5,615.4 513.1,615.8 512.7,616.3 512.3,617.1 511.9,618.3 511.5,620 511.1,622.5 510.7,623.1"/><polygon points="510.7,631.9 511.1,632.5 511.5,635 511.9,636.7 512.3,637.9 512.7,638.7 513.1,639.2 513.5,639.6 513.9,639.9 514.3,639.9 514.7,639.9 515.1,639.9 521.6,639.9 521.6,640.9 515.1,640.9 514.7,640.9 514.3,640.9 513.9,640.9 513.5,641.2 513.1,641.6 512.7,642.1 512.3,642.9 511.9,644.1 511.5,645.8 511.1,648.3 510.7,648.9"/></g><g fill="#2a0508"><polygon points="534.7,606.1 535.1,606.7 535.5,609.2 535.9,610.9 536.3,612.1 536.7,612.9 537.1,613.4 537.5,613.8 537.9,614.1 538.3,614.1 538.7,614.1 539.1,614.1 545.6,614.1 545.6,615.1 539.1,615.1 538.7,615.1 538.3,615.1 537.9,615.1 537.5,615.4 537.1,615.8 536.7,616.3 536.3,617.1 535.9,618.3 535.5,620 535.1,622.5 534.7,623.1"/><polygon points="534.7,631.9 535.1,632.5 535.5,635 535.9,636.7 536.3,637.9 536.7,638.7 537.1,639.2 537.5,639.6 537.9,639.9 538.3,639.9 538.7,639.9 539.1,639.9 545.6,639.9 545.6,640.9 539.1,640.9 538.7,640.9 538.3,640.9 537.9,640.9 537.5,641.2 537.1,641.6 536.7,642.1 536.3,642.9 535.9,644.1 535.5,645.8 535.1,648.3 534.7,648.9"/></g><g fill="#2a0508"><polygon points="559.7,606.1 560.1,606.7 560.5,609.2 560.9,610.9 561.3,612.1 561.7,612.9 562.1,613.4 562.5,613.8 562.9,614.1 563.3,614.1 563.7,614.1 564.1,614.1 570.6,614.1 570.6,615.1 564.1,615.1 563.7,615.1 563.3,615.1 562.9,615.1 562.5,615.4 562.1,615.8 561.7,616.3 561.3,617.1 560.9,618.3 560.5,620 560.1,622.5 559.7,623.1"/><polygon points="559.7,631.9 560.1,632.5 560.5,635 560.9,636.7 561.3,637.9 561.7,638.7 562.1,639.2 562.5,639.6 562.9,639.9 563.3,639.9 563.7,639.9 564.1,639.9 570.6,639.9 570.6,640.9 564.1,640.9 563.7,640.9 563.3,640.9 562.9,640.9 562.5,641.2 562.1,641.6 561.7,642.1 561.3,642.9 560.9,644.1 560.5,645.8 560.1,648.3 559.7,648.9"/></g><g fill="#2a0508"><polygon points="583.7,606.1 584.1,606.7 584.5,609.2 584.9,610.9 585.3,612.1 585.7,612.9 586.1,613.4 586.5,613.8 586.9,614.1 587.3,614.1 587.7,614.1 588.1,614.1 594.6,614.1 594.6,615.1 588.1,615.1 587.7,615.1 587.3,615.1 586.9,615.1 586.5,615.4 586.1,615.8 585.7,616.3 585.3,617.1 584.9,618.3 584.5,620 584.1,622.5 583.7,623.1"/><polygon points="583.7,631.9 584.1,632.5 584.5,635 584.9,636.7 585.3,637.9 585.7,638.7 586.1,639.2 586.5,639.6 586.9,639.9 587.3,639.9 587.7,639.9 588.1,639.9 594.6,639.9 594.6,640.9 588.1,640.9 587.7,640.9 587.3,640.9 586.9,640.9 586.5,641.2 586.1,641.6 585.7,642.1 585.3,642.9 584.9,644.1 584.5,645.8 584.1,648.3 583.7,648.9"/></g><g fill="#2a0508"><polygon points="608.7,606.1 609.1,606.7 609.5,609.2 609.9,610.9 610.3,612.1 610.7,612.9 611.1,613.4 611.5,613.8 611.9,614.1 612.3,614.1 612.7,614.1 613.1,614.1 619.6,614.1 619.6,615.1 613.1,615.1 612.7,615.1 612.3,615.1 611.9,615.1 611.5,615.4 611.1,615.8 610.7,616.3 610.3,617.1 609.9,618.3 609.5,620 609.1,622.5 608.7,623.1"/><polygon points="608.7,631.9 609.1,632.5 609.5,635 609.9,636.7 610.3,637.9 610.7,638.7 611.1,639.2 611.5,639.6 611.9,639.9 612.3,639.9 612.7,639.9 613.1,639.9 619.6,639.9 619.6,640.9 613.1,640.9 612.7,640.9 612.3,640.9 611.9,640.9 611.5,641.2 611.1,641.6 610.7,642.1 610.3,642.9 609.9,644.1 609.5,645.8 609.1,648.3 608.7,648.9"/></g><g fill="#2a0508"><polygon points="632.7,606.1 633.1,606.7 633.5,609.2 633.9,610.9 634.3,612.1 634.7,612.9 635.1,613.4 635.5,613.8 635.9,614.1 636.3,614.1 636.7,614.1 637.1,614.1 643.6,614.1 643.6,615.1 637.1,615.1 636.7,615.1 636.3,615.1 635.9,615.1 635.5,615.4 635.1,615.8 634.7,616.3 634.3,617.1 633.9,618.3 633.5,620 633.1,622.5 632.7,623.1"/><polygon points="632.7,631.9 633.1,632.5 633.5,635 633.9,636.7 634.3,637.9 634.7,638.7 635.1,639.2 635.5,639.6 635.9,639.9 636.3,639.9 636.7,639.9 637.1,639.9 643.6,639.9 643.6,640.9 637.1,640.9 636.7,640.9 636.3,640.9 635.9,640.9 635.5,641.2 635.1,641.6 634.7,642.1 634.3,642.9 633.9,644.1 633.5,645.8 633.1,648.3 632.7,648.9"/></g><g fill="#2a0508"><polygon points="656.7,606.1 657.1,606.7 657.5,609.2 657.9,610.9 658.3,612.1 658.7,612.9 659.1,613.4 659.5,613.8 659.9,614.1 660.3,614.1 660.7,614.1 661.1,614.1 667.6,614.1 667.6,615.1 661.1,615.1 660.7,615.1 660.3,615.1 659.9,615.1 659.5,615.4 659.1,615.8 658.7,616.3 658.3,617.1 657.9,618.3 657.5,620 657.1,622.5 656.7,623.1"/><polygon points="656.7,631.9 657.1,632.5 657.5,635 657.9,636.7 658.3,637.9 658.7,638.7 659.1,639.2 659.5,639.6 659.9,639.9 660.3,639.9 660.7,639.9 661.1,639.9 667.6,639.9 667.6,640.9 661.1,640.9 660.7,640.9 660.3,640.9 659.9,640.9 659.5,641.2 659.1,641.6 658.7,642.1 658.3,642.9 657.9,644.1 657.5,645.8 657.1,648.3 656.7,648.9"/></g><g fill="#2a0508"><polygon points="681.7,606.1 682.1,606.7 682.5,609.2 682.9,610.9 683.3,612.1 683.7,612.9 684.1,613.4 684.5,613.8 684.9,614.1 685.3,614.1 685.7,614.1 686.1,614.1 692.6,614.1 692.6,615.1 686.1,615.1 685.7,615.1 685.3,615.1 684.9,615.1 684.5,615.4 684.1,615.8 683.7,616.3 683.3,617.1 682.9,618.3 682.5,620 682.1,622.5 681.7,623.1"/><polygon points="681.7,631.9 682.1,632.5 682.5,635 682.9,636.7 683.3,637.9 683.7,638.7 684.1,639.2 684.5,639.6 684.9,639.9 685.3,639.9 685.7,639.9 686.1,639.9 692.6,639.9 692.6,640.9 686.1,640.9 685.7,640.9 685.3,640.9 684.9,640.9 684.5,641.2 684.1,641.6 683.7,642.1 683.3,642.9 682.9,644.1 682.5,645.8 682.1,648.3 681.7,648.9"/></g><g fill="#2a0508"><polygon points="705.7,606.1 706.1,606.7 706.5,609.2 706.9,610.9 707.3,612.1 707.7,612.9 708.1,613.4 708.5,613.8 708.9,614.1 709.3,614.1 709.7,614.1 710.1,614.1 716.6,614.1 716.6,615.1 710.1,615.1 709.7,615.1 709.3,615.1 708.9,615.1 708.5,615.4 708.1,615.8 707.7,616.3 707.3,617.1 706.9,618.3 706.5,620 706.1,622.5 705.7,623.1"/><polygon points="705.7,631.9 706.1,632.5 706.5,635 706.9,636.7 707.3,637.9 707.7,638.7 708.1,639.2 708.5,639.6 708.9,639.9 709.3,639.9 709.7,639.9 710.1,639.9 716.6,639.9 716.6,640.9 710.1,640.9 709.7,640.9 709.3,640.9 708.9,640.9 708.5,641.2 708.1,641.6 707.7,642.1 707.3,642.9 706.9,644.1 706.5,645.8 706.1,648.3 705.7,648.9"/></g><g fill="#2a0508"><polygon points="729.7,606.1 730.1,606.7 730.5,609.2 730.9,610.9 731.3,612.1 731.7,612.9 732.1,613.4 732.5,613.8 732.9,614.1 733.3,614.1 733.7,614.1 734.1,614.1 740.6,614.1 740.6,615.1 734.1,615.1 733.7,615.1 733.3,615.1 732.9,615.1 732.5,615.4 732.1,615.8 731.7,616.3 731.3,617.1 730.9,618.3 730.5,620 730.1,622.5 729.7,623.1"/><polygon points="729.7,631.9 730.1,632.5 730.5,635 730.9,636.7 731.3,637.9 731.7,638.7 732.1,639.2 732.5,639.6 732.9,639.9 733.3,639.9 733.7,639.9 734.1,639.9 740.6,639.9 740.6,640.9 734.1,640.9 733.7,640.9 733.3,640.9 732.9,640.9 732.5,641.2 732.1,641.6 731.7,642.1 731.3,642.9 730.9,644.1 730.5,645.8 730.1,648.3 729.7,648.9"/></g><g fill="#2a0508"><polygon points="754.7,606.1 755.1,606.7 755.5,609.2 755.9,610.9 756.3,612.1 756.7,612.9 757.1,613.4 757.5,613.8 757.9,614.1 758.3,614.1 758.7,614.1 759.1,614.1 765.6,614.1 765.6,615.1 759.1,615.1 758.7,615.1 758.3,615.1 757.9,615.1 757.5,615.4 757.1,615.8 756.7,616.3 756.3,617.1 755.9,618.3 755.5,620 755.1,622.5 754.7,623.1"/><polygon points="754.7,631.9 755.1,632.5 755.5,635 755.9,636.7 756.3,637.9 756.7,638.7 757.1,639.2 757.5,639.6 757.9,639.9 758.3,639.9 758.7,639.9 759.1,639.9 765.6,639.9 765.6,640.9 759.1,640.9 758.7,640.9 758.3,640.9 757.9,640.9 757.5,641.2 757.1,641.6 756.7,642.1 756.3,642.9 755.9,644.1 755.5,645.8 755.1,648.3 754.7,648.9"/></g><g fill="#2a0508"><polygon points="778.7,606.1 779.1,606.7 779.5,609.2 779.9,610.9 780.3,612.1 780.7,612.9 781.1,613.4 781.5,613.8 781.9,614.1 782.3,614.1 782.7,614.1 783.1,614.1 789.6,614.1 789.6,615.1 783.1,615.1 782.7,615.1 782.3,615.1 781.9,615.1 781.5,615.4 781.1,615.8 780.7,616.3 780.3,617.1 779.9,618.3 779.5,620 779.1,622.5 778.7,623.1"/><polygon points="778.7,631.9 779.1,632.5 779.5,635 779.9,636.7 780.3,637.9 780.7,638.7 781.1,639.2 781.5,639.6 781.9,639.9 782.3,639.9 782.7,639.9 783.1,639.9 789.6,639.9 789.6,640.9 783.1,640.9 782.7,640.9 782.3,640.9 781.9,640.9 781.5,641.2 781.1,641.6 780.7,642.1 780.3,642.9 779.9,644.1 779.5,645.8 779.1,648.3 778.7,648.9"/></g><g fill="#2a0508"><polygon points="802.7,606.1 803.1,606.7 803.5,609.2 803.9,610.9 804.3,612.1 804.7,612.9 805.1,613.4 805.5,613.8 805.9,614.1 806.3,614.1 806.7,614.1 807.1,614.1 813.6,614.1 813.6,615.1 807.1,615.1 806.7,615.1 806.3,615.1 805.9,615.1 805.5,615.4 805.1,615.8 804.7,616.3 804.3,617.1 803.9,618.3 803.5,620 803.1,622.5 802.7,623.1"/><polygon points="802.7,631.9 803.1,632.5 803.5,635 803.9,636.7 804.3,637.9 804.7,638.7 805.1,639.2 805.5,639.6 805.9,639.9 806.3,639.9 806.7,639.9 807.1,639.9 813.6,639.9 813.6,640.9 807.1,640.9 806.7,640.9 806.3,640.9 805.9,640.9 805.5,641.2 805.1,641.6 804.7,642.1 804.3,642.9 803.9,644.1 803.5,645.8 803.1,648.3 802.7,648.9"/></g><g fill="#2a0508"><polygon points="827.7,606.1 828.1,606.7 828.5,609.2 828.9,610.9 829.3,612.1 829.7,612.9 830.1,613.4 830.5,613.8 830.9,614.1 831.3,614.1 831.7,614.1 832.1,614.1 838.6,614.1 838.6,615.1 832.1,615.1 831.7,615.1 831.3,615.1 830.9,615.1 830.5,615.4 830.1,615.8 829.7,616.3 829.3,617.1 828.9,618.3 828.5,620 828.1,622.5 827.7,623.1"/><polygon points="827.7,631.9 828.1,632.5 828.5,635 828.9,636.7 829.3,637.9 829.7,638.7 830.1,639.2 830.5,639.6 830.9,639.9 831.3,639.9 831.7,639.9 832.1,639.9 838.6,639.9 838.6,640.9 832.1,640.9 831.7,640.9 831.3,640.9 830.9,640.9 830.5,641.2 830.1,641.6 829.7,642.1 829.3,642.9 828.9,644.1 828.5,645.8 828.1,648.3 827.7,648.9"/></g><g fill="#2a0508"><polygon points="851.7,606.1 852.1,606.7 852.5,609.2 852.9,610.9 853.3,612.1 853.7,612.9 854.1,613.4 854.5,613.8 854.9,614.1 855.3,614.1 855.7,614.1 856.1,614.1 862.6,614.1 862.6,615.1 856.1,615.1 855.7,615.1 855.3,615.1 854.9,615.1 854.5,615.4 854.1,615.8 853.7,616.3 853.3,617.1 852.9,618.3 852.5,620 852.1,622.5 851.7,623.1"/><polygon points="851.7,631.9 852.1,632.5 852.5,635 852.9,636.7 853.3,637.9 853.7,638.7 854.1,639.2 854.5,639.6 854.9,639.9 855.3,639.9 855.7,639.9 856.1,639.9 862.6,639.9 862.6,640.9 856.1,640.9 855.7,640.9 855.3,640.9 854.9,640.9 854.5,641.2 854.1,641.6 853.7,642.1 853.3,642.9 852.9,644.1 852.5,645.8 852.1,648.3 851.7,648.9"/></g><g fill="#2a0508"><polygon points="875.7,606.1 876.1,606.7 876.5,609.2 876.9,610.9 877.3,612.1 877.7,612.9 878.1,613.4 878.5,613.8 878.9,614.1 879.3,614.1 879.7,614.1 880.1,614.1 886.6,614.1 886.6,615.1 880.1,615.1 879.7,615.1 879.3,615.1 878.9,615.1 878.5,615.4 878.1,615.8 877.7,616.3 877.3,617.1 876.9,618.3 876.5,620 876.1,622.5 875.7,623.1"/><polygon points="875.7,631.9 876.1,632.5 876.5,635 876.9,636.7 877.3,637.9 877.7,638.7 878.1,639.2 878.5,639.6 878.9,639.9 879.3,639.9 879.7,639.9 880.1,639.9 886.6,639.9 886.6,640.9 880.1,640.9 879.7,640.9 879.3,640.9 878.9,640.9 878.5,641.2 878.1,641.6 877.7,642.1 877.3,642.9 876.9,644.1 876.5,645.8 876.1,648.3 875.7,648.9"/></g><g fill="#2a0508"><polygon points="900.7,606.1 901.1,606.7 901.5,609.2 901.9,610.9 902.3,612.1 902.7,612.9 903.1,613.4 903.5,613.8 903.9,614.1 904.3,614.1 904.7,614.1 905.1,614.1 911.6,614.1 911.6,615.1 905.1,615.1 904.7,615.1 904.3,615.1 903.9,615.1 903.5,615.4 903.1,615.8 902.7,616.3 902.3,617.1 901.9,618.3 901.5,620 901.1,622.5 900.7,623.1"/><polygon points="900.7,631.9 901.1,632.5 901.5,635 901.9,636.7 902.3,637.9 902.7,638.7 903.1,639.2 903.5,639.6 903.9,639.9 904.3,639.9 904.7,639.9 905.1,639.9 911.6,639.9 911.6,640.9 905.1,640.9 904.7,640.9 904.3,640.9 903.9,640.9 903.5,641.2 903.1,641.6 902.7,642.1 902.3,642.9 901.9,644.1 901.5,645.8 901.1,648.3 900.7,648.9"/></g><g fill="#2a0508"><polygon points="924.7,606.1 925.1,606.7 925.5,609.2 925.9,610.9 926.3,612.1 926.7,612.9 927.1,613.4 927.5,613.8 927.9,614.1 928.3,614.1 928.7,614.1 929.1,614.1 935.6,614.1 935.6,615.1 929.1,615.1 928.7,615.1 928.3,615.1 927.9,615.1 927.5,615.4 927.1,615.8 926.7,616.3 926.3,617.1 925.9,618.3 925.5,620 925.1,622.5 924.7,623.1"/><polygon points="924.7,631.9 925.1,632.5 925.5,635 925.9,636.7 926.3,637.9 926.7,638.7 927.1,639.2 927.5,639.6 927.9,639.9 928.3,639.9 928.7,639.9 929.1,639.9 935.6,639.9 935.6,640.9 929.1,640.9 928.7,640.9 928.3,640.9 927.9,640.9 927.5,641.2 927.1,641.6 926.7,642.1 926.3,642.9 925.9,644.1 925.5,645.8 925.1,648.3 924.7,648.9"/></g><g fill="#2a0508"><polygon points="949.7,606.1 950.1,606.7 950.5,609.2 950.9,610.9 951.3,612.1 951.7,612.9 952.1,613.4 952.5,613.8 952.9,614.1 953.3,614.1 953.7,614.1 954.1,614.1 960.6,614.1 960.6,615.1 954.1,615.1 953.7,615.1 953.3,615.1 952.9,615.1 952.5,615.4 952.1,615.8 951.7,616.3 951.3,617.1 950.9,618.3 950.5,620 950.1,622.5 949.7,623.1"/><polygon points="949.7,631.9 950.1,632.5 950.5,635 950.9,636.7 951.3,637.9 951.7,638.7 952.1,639.2 952.5,639.6 952.9,639.9 953.3,639.9 953.7,639.9 954.1,639.9 960.6,639.9 960.6,640.9 954.1,640.9 953.7,640.9 953.3,640.9 952.9,640.9 952.5,641.2 952.1,641.6 951.7,642.1 951.3,642.9 950.9,644.1 950.5,645.8 950.1,648.3 949.7,648.9"/></g><g fill="#2a0508"><polygon points="973.7,606.1 974.1,606.7 974.5,609.2 974.9,610.9 975.3,612.1 975.7,612.9 976.1,613.4 976.5,613.8 976.9,614.1 977.3,614.1 977.7,614.1 978.1,614.1 984.6,614.1 984.6,615.1 978.1,615.1 977.7,615.1 977.3,615.1 976.9,615.1 976.5,615.4 976.1,615.8 975.7,616.3 975.3,617.1 974.9,618.3 974.5,620 974.1,622.5 973.7,623.1"/><polygon points="973.7,631.9 974.1,632.5 974.5,635 974.9,636.7 975.3,637.9 975.7,638.7 976.1,639.2 976.5,639.6 976.9,639.9 977.3,639.9 977.7,639.9 978.1,639.9 984.6,639.9 984.6,640.9 978.1,640.9 977.7,640.9 977.3,640.9 976.9,640.9 976.5,641.2 976.1,641.6 975.7,642.1 975.3,642.9 974.9,644.1 974.5,645.8 974.1,648.3 973.7,648.9"/></g><g fill="#2a0508"><polygon points="997.7,606.1 998.1,606.7 998.5,609.2 998.9,610.9 999.3,612.1 999.7,612.9 1000.1,613.4 1000.5,613.8 1000.9,614.1 1001.3,614.1 1001.7,614.1 1002.1,614.1 1008.6,614.1 1008.6,615.1 1002.1,615.1 1001.7,615.1 1001.3,615.1 1000.9,615.1 1000.5,615.4 1000.1,615.8 999.7,616.3 999.3,617.1 998.9,618.3 998.5,620 998.1,622.5 997.7,623.1"/><polygon points="997.7,631.9 998.1,632.5 998.5,635 998.9,636.7 999.3,637.9 999.7,638.7 1000.1,639.2 1000.5,639.6 1000.9,639.9 1001.3,639.9 1001.7,639.9 1002.1,639.9 1008.6,639.9 1008.6,640.9 1002.1,640.9 1001.7,640.9 1001.3,640.9 1000.9,640.9 1000.5,641.2 1000.1,641.6 999.7,642.1 999.3,642.9 998.9,644.1 998.5,645.8 998.1,648.3 997.7,648.9"/></g><g fill="#2a0508"><polygon points="1022.7,606.1 1023.1,606.7 1023.5,609.2 1023.9,610.9 1024.3,612.1 1024.7,612.9 1025.1,613.4 1025.5,613.8 1025.9,614.1 1026.3,614.1 1026.7,614.1 1027.1,614.1 1033.6,614.1 1033.6,615.1 1027.1,615.1 1026.7,615.1 1026.3,615.1 1025.9,615.1 1025.5,615.4 1025.1,615.8 1024.7,616.3 1024.3,617.1 1023.9,618.3 1023.5,620 1023.1,622.5 1022.7,623.1"/><polygon points="1022.7,631.9 1023.1,632.5 1023.5,635 1023.9,636.7 1024.3,637.9 1024.7,638.7 1025.1,639.2 1025.5,639.6 1025.9,639.9 1026.3,639.9 1026.7,639.9 1027.1,639.9 1033.6,639.9 1033.6,640.9 1027.1,640.9 1026.7,640.9 1026.3,640.9 1025.9,640.9 1025.5,641.2 1025.1,641.6 1024.7,642.1 1024.3,642.9 1023.9,644.1 1023.5,645.8 1023.1,648.3 1022.7,648.9"/></g><g fill="#2a0508"><polygon points="1046.7,606.1 1047.1,606.7 1047.5,609.2 1047.9,610.9 1048.3,612.1 1048.7,612.9 1049.1,613.4 1049.5,613.8 1049.9,614.1 1050.3,614.1 1050.7,614.1 1051.1,614.1 1057.6,614.1 1057.6,615.1 1051.1,615.1 1050.7,615.1 1050.3,615.1 1049.9,615.1 1049.5,615.4 1049.1,615.8 1048.7,616.3 1048.3,617.1 1047.9,618.3 1047.5,620 1047.1,622.5 1046.7,623.1"/><polygon points="1046.7,631.9 1047.1,632.5 1047.5,635 1047.9,636.7 1048.3,637.9 1048.7,638.7 1049.1,639.2 1049.5,639.6 1049.9,639.9 1050.3,639.9 1050.7,639.9 1051.1,639.9 1057.6,639.9 1057.6,640.9 1051.1,640.9 1050.7,640.9 1050.3,640.9 1049.9,640.9 1049.5,641.2 1049.1,641.6 1048.7,642.1 1048.3,642.9 1047.9,644.1 1047.5,645.8 1047.1,648.3 1046.7,648.9"/></g><g fill="#2a0508"><polygon points="1070.7,606.1 1071.1,606.7 1071.5,609.2 1071.9,610.9 1072.3,612.1 1072.7,612.9 1073.1,613.4 1073.5,613.8 1073.9,614.1 1074.3,614.1 1074.7,614.1 1075.1,614.1 1081.6,614.1 1081.6,615.1 1075.1,615.1 1074.7,615.1 1074.3,615.1 1073.9,615.1 1073.5,615.4 1073.1,615.8 1072.7,616.3 1072.3,617.1 1071.9,618.3 1071.5,620 1071.1,622.5 1070.7,623.1"/><polygon points="1070.7,631.9 1071.1,632.5 1071.5,635 1071.9,636.7 1072.3,637.9 1072.7,638.7 1073.1,639.2 1073.5,639.6 1073.9,639.9 1074.3,639.9 1074.7,639.9 1075.1,639.9 1081.6,639.9 1081.6,640.9 1075.1,640.9 1074.7,640.9 1074.3,640.9 1073.9,640.9 1073.5,641.2 1073.1,641.6 1072.7,642.1 1072.3,642.9 1071.9,644.1 1071.5,645.8 1071.1,648.3 1070.7,648.9"/></g><g fill="#2a0508"><polygon points="1095.7,606.1 1096.1,606.7 1096.5,609.2 1096.9,610.9 1097.3,612.1 1097.7,612.9 1098.1,613.4 1098.5,613.8 1098.9,614.1 1099.3,614.1 1099.7,614.1 1100.1,614.1 1106.6,614.1 1106.6,615.1 1100.1,615.1 1099.7,615.1 1099.3,615.1 1098.9,615.1 1098.5,615.4 1098.1,615.8 1097.7,616.3 1097.3,617.1 1096.9,618.3 1096.5,620 1096.1,622.5 1095.7,623.1"/><polygon points="1095.7,631.9 1096.1,632.5 1096.5,635 1096.9,636.7 1097.3,637.9 1097.7,638.7 1098.1,639.2 1098.5,639.6 1098.9,639.9 1099.3,639.9 1099.7,639.9 1100.1,639.9 1106.6,639.9 1106.6,640.9 1100.1,640.9 1099.7,640.9 1099.3,640.9 1098.9,640.9 1098.5,641.2 1098.1,641.6 1097.7,642.1 1097.3,642.9 1096.9,644.1 1096.5,645.8 1096.1,648.3 1095.7,648.9"/></g><g fill="#2a0508"><polygon points="1119.7,606.1 1120.1,606.7 1120.5,609.2 1120.9,610.9 1121.3,612.1 1121.7,612.9 1122.1,613.4 1122.5,613.8 1122.9,614.1 1123.3,614.1 1123.7,614.1 1124.1,614.1 1130.6,614.1 1130.6,615.1 1124.1,615.1 1123.7,615.1 1123.3,615.1 1122.9,615.1 1122.5,615.4 1122.1,615.8 1121.7,616.3 1121.3,617.1 1120.9,618.3 1120.5,620 1120.1,622.5 1119.7,623.1"/><polygon points="1119.7,631.9 1120.1,632.5 1120.5,635 1120.9,636.7 1121.3,637.9 1121.7,638.7 1122.1,639.2 1122.5,639.6 1122.9,639.9 1123.3,639.9 1123.7,639.9 1124.1,639.9 1130.6,639.9 1130.6,640.9 1124.1,640.9 1123.7,640.9 1123.3,640.9 1122.9,640.9 1122.5,641.2 1122.1,641.6 1121.7,642.1 1121.3,642.9 1120.9,644.1 1120.5,645.8 1120.1,648.3 1119.7,648.9"/></g><g fill="#2a0508"><polygon points="1143.7,606.1 1144.1,606.7 1144.5,609.2 1144.9,610.9 1145.3,612.1 1145.7,612.9 1146.1,613.4 1146.5,613.8 1146.9,614.1 1147.3,614.1 1147.7,614.1 1148.1,614.1 1154.6,614.1 1154.6,615.1 1148.1,615.1 1147.7,615.1 1147.3,615.1 1146.9,615.1 1146.5,615.4 1146.1,615.8 1145.7,616.3 1145.3,617.1 1144.9,618.3 1144.5,620 1144.1,622.5 1143.7,623.1"/><polygon points="1143.7,631.9 1144.1,632.5 1144.5,635 1144.9,636.7 1145.3,637.9 1145.7,638.7 1146.1,639.2 1146.5,639.6 1146.9,639.9 1147.3,639.9 1147.7,639.9 1148.1,639.9 1154.6,639.9 1154.6,640.9 1148.1,640.9 1147.7,640.9 1147.3,640.9 1146.9,640.9 1146.5,641.2 1146.1,641.6 1145.7,642.1 1145.3,642.9 1144.9,644.1 1144.5,645.8 1144.1,648.3 1143.7,648.9"/></g><g fill="#2a0508"><polygon points="1168.7,606.1 1169.1,606.7 1169.5,609.2 1169.9,610.9 1170.3,612.1 1170.7,612.9 1171.1,613.4 1171.5,613.8 1171.9,614.1 1172.3,614.1 1172.7,614.1 1173.1,614.1 1179.6,614.1 1179.6,615.1 1173.1,615.1 1172.7,615.1 1172.3,615.1 1171.9,615.1 1171.5,615.4 1171.1,615.8 1170.7,616.3 1170.3,617.1 1169.9,618.3 1169.5,620 1169.1,622.5 1168.7,623.1"/><polygon points="1168.7,631.9 1169.1,632.5 1169.5,635 1169.9,636.7 1170.3,637.9 1170.7,638.7 1171.1,639.2 1171.5,639.6 1171.9,639.9 1172.3,639.9 1172.7,639.9 1173.1,639.9 1179.6,639.9 1179.6,640.9 1173.1,640.9 1172.7,640.9 1172.3,640.9 1171.9,640.9 1171.5,641.2 1171.1,641.6 1170.7,642.1 1170.3,642.9 1169.9,644.1 1169.5,645.8 1169.1,648.3 1168.7,648.9"/></g><g fill="#2a0508"><polygon points="1192.7,606.1 1193.1,606.7 1193.5,609.2 1193.9,610.9 1194.3,612.1 1194.7,612.9 1195.1,613.4 1195.5,613.8 1195.9,614.1 1196.3,614.1 1196.7,614.1 1197.1,614.1 1203.6,614.1 1203.6,615.1 1197.1,615.1 1196.7,615.1 1196.3,615.1 1195.9,615.1 1195.5,615.4 1195.1,615.8 1194.7,616.3 1194.3,617.1 1193.9,618.3 1193.5,620 1193.1,622.5 1192.7,623.1"/><polygon points="1192.7,631.9 1193.1,632.5 1193.5,635 1193.9,636.7 1194.3,637.9 1194.7,638.7 1195.1,639.2 1195.5,639.6 1195.9,639.9 1196.3,639.9 1196.7,639.9 1197.1,639.9 1203.6,639.9 1203.6,640.9 1197.1,640.9 1196.7,640.9 1196.3,640.9 1195.9,640.9 1195.5,641.2 1195.1,641.6 1194.7,642.1 1194.3,642.9 1193.9,644.1 1193.5,645.8 1193.1,648.3 1192.7,648.9"/></g><g fill="#2a0508"><polygon points="1217.7,606.1 1218.1,606.7 1218.5,609.2 1218.9,610.9 1219.3,612.1 1219.7,612.9 1220.1,613.4 1220.5,613.8 1220.9,614.1 1221.3,614.1 1221.7,614.1 1222.1,614.1 1228.6,614.1 1228.6,615.1 1222.1,615.1 1221.7,615.1 1221.3,615.1 1220.9,615.1 1220.5,615.4 1220.1,615.8 1219.7,616.3 1219.3,617.1 1218.9,618.3 1218.5,620 1218.1,622.5 1217.7,623.1"/><polygon points="1217.7,631.9 1218.1,632.5 1218.5,635 1218.9,636.7 1219.3,637.9 1219.7,638.7 1220.1,639.2 1220.5,639.6 1220.9,639.9 1221.3,639.9 1221.7,639.9 1222.1,639.9 1228.6,639.9 1228.6,640.9 1222.1,640.9 1221.7,640.9 1221.3,640.9 1220.9,640.9 1220.5,641.2 1220.1,641.6 1219.7,642.1 1219.3,642.9 1218.9,644.1 1218.5,645.8 1218.1,648.3 1217.7,648.9"/></g><g fill="#2a0508"><polygon points="1241.7,606.1 1242.1,606.7 1242.5,609.2 1242.9,610.9 1243.3,612.1 1243.7,612.9 1244.1,613.4 1244.5,613.8 1244.9,614.1 1245.3,614.1 1245.7,614.1 1246.1,614.1 1252.6,614.1 1252.6,615.1 1246.1,615.1 1245.7,615.1 1245.3,615.1 1244.9,615.1 1244.5,615.4 1244.1,615.8 1243.7,616.3 1243.3,617.1 1242.9,618.3 1242.5,620 1242.1,622.5 1241.7,623.1"/><polygon points="1241.7,631.9 1242.1,632.5 1242.5,635 1242.9,636.7 1243.3,637.9 1243.7,638.7 1244.1,639.2 1244.5,639.6 1244.9,639.9 1245.3,639.9 1245.7,639.9 1246.1,639.9 1252.6,639.9 1252.6,640.9 1246.1,640.9 1245.7,640.9 1245.3,640.9 1244.9,640.9 1244.5,641.2 1244.1,641.6 1243.7,642.1 1243.3,642.9 1242.9,644.1 1242.5,645.8 1242.1,648.3 1241.7,648.9"/></g><g fill="#2a0508"><polygon points="1265.7,606.1 1266.1,606.7 1266.5,609.2 1266.9,610.9 1267.3,612.1 1267.7,612.9 1268.1,613.4 1268.5,613.8 1268.9,614.1 1269.3,614.1 1269.7,614.1 1270.1,614.1 1276.6,614.1 1276.6,615.1 1270.1,615.1 1269.7,615.1 1269.3,615.1 1268.9,615.1 1268.5,615.4 1268.1,615.8 1267.7,616.3 1267.3,617.1 1266.9,618.3 1266.5,620 1266.1,622.5 1265.7,623.1"/><polygon points="1265.7,631.9 1266.1,632.5 1266.5,635 1266.9,636.7 1267.3,637.9 1267.7,638.7 1268.1,639.2 1268.5,639.6 1268.9,639.9 1269.3,639.9 1269.7,639.9 1270.1,639.9 1276.6,639.9 1276.6,640.9 1270.1,640.9 1269.7,640.9 1269.3,640.9 1268.9,640.9 1268.5,641.2 1268.1,641.6 1267.7,642.1 1267.3,642.9 1266.9,644.1 1266.5,645.8 1266.1,648.3 1265.7,648.9"/></g><g fill="#2a0508"><polygon points="1290.7,606.1 1291.1,606.7 1291.5,609.2 1291.9,610.9 1292.3,612.1 1292.7,612.9 1293.1,613.4 1293.5,613.8 1293.9,614.1 1294.3,614.1 1294.7,614.1 1295.1,614.1 1301.6,614.1 1301.6,615.1 1295.1,615.1 1294.7,615.1 1294.3,615.1 1293.9,615.1 1293.5,615.4 1293.1,615.8 1292.7,616.3 1292.3,617.1 1291.9,618.3 1291.5,620 1291.1,622.5 1290.7,623.1"/><polygon points="1290.7,631.9 1291.1,632.5 1291.5,635 1291.9,636.7 1292.3,637.9 1292.7,638.7 1293.1,639.2 1293.5,639.6 1293.9,639.9 1294.3,639.9 1294.7,639.9 1295.1,639.9 1301.6,639.9 1301.6,640.9 1295.1,640.9 1294.7,640.9 1294.3,640.9 1293.9,640.9 1293.5,641.2 1293.1,641.6 1292.7,642.1 1292.3,642.9 1291.9,644.1 1291.5,645.8 1291.1,648.3 1290.7,648.9"/></g><g fill="#2a0508"><polygon points="1314.7,606.1 1315.1,606.7 1315.5,609.2 1315.9,610.9 1316.3,612.1 1316.7,612.9 1317.1,613.4 1317.5,613.8 1317.9,614.1 1318.3,614.1 1318.7,614.1 1319.1,614.1 1325.6,614.1 1325.6,615.1 1319.1,615.1 1318.7,615.1 1318.3,615.1 1317.9,615.1 1317.5,615.4 1317.1,615.8 1316.7,616.3 1316.3,617.1 1315.9,618.3 1315.5,620 1315.1,622.5 1314.7,623.1"/><polygon points="1314.7,631.9 1315.1,632.5 1315.5,635 1315.9,636.7 1316.3,637.9 1316.7,638.7 1317.1,639.2 1317.5,639.6 1317.9,639.9 1318.3,639.9 1318.7,639.9 1319.1,639.9 1325.6,639.9 1325.6,640.9 1319.1,640.9 1318.7,640.9 1318.3,640.9 1317.9,640.9 1317.5,641.2 1317.1,641.6 1316.7,642.1 1316.3,642.9 1315.9,644.1 1315.5,645.8 1315.1,648.3 1314.7,648.9"/></g><g fill="#2a0508"><polygon points="1338.7,606.1 1339.1,606.7 1339.5,609.2 1339.9,610.9 1340.3,612.1 1340.7,612.9 1341.1,613.4 1341.5,613.8 1341.9,614.1 1342.3,614.1 1342.7,614.1 1343.1,614.1 1349.6,614.1 1349.6,615.1 1343.1,615.1 1342.7,615.1 1342.3,615.1 1341.9,615.1 1341.5,615.4 1341.1,615.8 1340.7,616.3 1340.3,617.1 1339.9,618.3 1339.5,620 1339.1,622.5 1338.7,623.1"/><polygon points="1338.7,631.9 1339.1,632.5 1339.5,635 1339.9,636.7 1340.3,637.9 1340.7,638.7 1341.1,639.2 1341.5,639.6 1341.9,639.9 1342.3,639.9 1342.7,639.9 1343.1,639.9 1349.6,639.9 1349.6,640.9 1343.1,640.9 1342.7,640.9 1342.3,640.9 1341.9,640.9 1341.5,641.2 1341.1,641.6 1340.7,642.1 1340.3,642.9 1339.9,644.1 1339.5,645.8 1339.1,648.3 1338.7,648.9"/></g><g fill="#2a0508"><polygon points="1363.7,606.1 1364.1,606.7 1364.5,609.2 1364.9,610.9 1365.3,612.1 1365.7,612.9 1366.1,613.4 1366.5,613.8 1366.9,614.1 1367.3,614.1 1367.7,614.1 1368.1,614.1 1374.6,614.1 1374.6,615.1 1368.1,615.1 1367.7,615.1 1367.3,615.1 1366.9,615.1 1366.5,615.4 1366.1,615.8 1365.7,616.3 1365.3,617.1 1364.9,618.3 1364.5,620 1364.1,622.5 1363.7,623.1"/><polygon points="1363.7,631.9 1364.1,632.5 1364.5,635 1364.9,636.7 1365.3,637.9 1365.7,638.7 1366.1,639.2 1366.5,639.6 1366.9,639.9 1367.3,639.9 1367.7,639.9 1368.1,639.9 1374.6,639.9 1374.6,640.9 1368.1,640.9 1367.7,640.9 1367.3,640.9 1366.9,640.9 1366.5,641.2 1366.1,641.6 1365.7,642.1 1365.3,642.9 1364.9,644.1 1364.5,645.8 1364.1,648.3 1363.7,648.9"/></g><g fill="#2a0508"><polygon points="1387.7,606.1 1388.1,606.7 1388.5,609.2 1388.9,610.9 1389.3,612.1 1389.7,612.9 1390.1,613.4 1390.5,613.8 1390.9,614.1 1391.3,614.1 1391.7,614.1 1392.1,614.1 1398.6,614.1 1398.6,615.1 1392.1,615.1 1391.7,615.1 1391.3,615.1 1390.9,615.1 1390.5,615.4 1390.1,615.8 1389.7,616.3 1389.3,617.1 1388.9,618.3 1388.5,620 1388.1,622.5 1387.7,623.1"/><polygon points="1387.7,631.9 1388.1,632.5 1388.5,635 1388.9,636.7 1389.3,637.9 1389.7,638.7 1390.1,639.2 1390.5,639.6 1390.9,639.9 1391.3,639.9 1391.7,639.9 1392.1,639.9 1398.6,639.9 1398.6,640.9 1392.1,640.9 1391.7,640.9 1391.3,640.9 1390.9,640.9 1390.5,641.2 1390.1,641.6 1389.7,642.1 1389.3,642.9 1388.9,644.1 1388.5,645.8 1388.1,648.3 1387.7,648.9"/></g></svg><div style="left:431px;top:655px;width:6px;height:17px;background:#ff9c33;border-bottom:1px solid #c67927;border-left:1px solid #cc7c28;"></div><div style="left:443px;top:655px;width:6px;height:17px;background:#ff9c33;border-bottom:1px solid #c67927;border-left:1px solid #cc7c28;"></div><div style="left:455px;top:655px;width:6px;height:17px;background:#ff9c33;border-bottom:1px solid #c67927;border-left:1px solid #cc7c28;"></div><div style="left:467px;top:655px;width:7px;height:17px;background:#ff9c33;border-bottom:1px solid #c67927;border-left:1px solid #cc7c28;"></div><div style="left:480px;top:655px;width:6px;height:17px;background:#ff9c33;border-bottom:1px solid #c67927;border-left:1px solid #cc7c28;"></div><div style="left:492px;top:655px;width:6px;height:17px;background:#ff9c33;border-bottom:1px solid #c67927;border-left:1px solid #cc7c28;"></div><div style="left:504px;top:655px;width:6px;height:17px;background:#ff9c33;border-bottom:1px solid #c67927;border-left:1px solid #cc7c28;"></div><div style="left:516px;top:655px;width:6px;height:17px;background:#ff9c33;border-bottom:1px solid #c67927;border-left:1px solid #cc7c28;"></div><div style="left:528px;top:655px;width:6px;height:17px;background:#ff9c33;border-bottom:1px solid #c67927;border-left:1px solid #cc7c28;"></div><div style="left:541px;top:655px;width:6px;height:17px;background:#ff9c33;border-bottom:1px solid #c67927;border-left:1px solid #cc7c28;"></div><div style="left:553px;top:655px;width:6px;height:17px;background:#ff9c33;border-bottom:1px solid #c67927;border-left:1px solid #cc7c28;"></div><div style="left:565px;top:655px;width:6px;height:17px;background:#ff9c33;border-bottom:1px solid #c67927;border-left:1px solid #cc7c28;"></div><div style="left:577px;top:655px;width:6px;height:17px;background:#ff9c33;border-bottom:1px solid #c67927;border-left:1px solid #cc7c28;"></div><div style="left:589px;top:655px;width:6px;height:17px;background:#ff9c33;border-bottom:1px solid #c67927;border-left:1px solid #cc7c28;"></div><div style="left:601px;top:655px;width:7px;height:17px;background:#ff9c33;border-bottom:1px solid #c67927;border-left:1px solid #cc7c28;"></div><div style="left:614px;top:655px;width:6px;height:17px;background:#ff9c33;border-bottom:1px solid #c67927;border-left:1px solid #cc7c28;"></div><div style="left:626px;top:655px;width:6px;height:17px;background:#ff9c33;border-bottom:1px solid #c67927;border-left:1px solid #cc7c28;"></div><div style="left:638px;top:655px;width:6px;height:17px;background:#ff9c33;border-bottom:1px solid #c67927;border-left:1px solid #cc7c28;"></div><div style="left:650px;top:655px;width:6px;height:17px;background:#ff9c33;border-bottom:1px solid #c67927;border-left:1px solid #cc7c28;"></div><div style="left:662px;top:655px;width:6px;height:17px;background:#ff9c33;border-bottom:1px solid #c67927;border-left:1px solid #cc7c28;"></div><div style="left:675px;top:655px;width:6px;height:17px;background:#ff9c33;border-bottom:1px solid #c67927;border-left:1px solid #cc7c28;"></div><div style="left:687px;top:655px;width:6px;height:17px;background:#ff9c33;border-bottom:1px solid #c67927;border-left:1px solid #cc7c28;"></div><div style="left:699px;top:655px;width:6px;height:17px;background:#ff9c33;border-bottom:1px solid #c67927;border-left:1px solid #cc7c28;"></div><div style="left:711px;top:655px;width:6px;height:17px;background:#ff9c33;border-bottom:1px solid #c67927;border-left:1px solid #cc7c28;"></div><div style="left:723px;top:655px;width:6px;height:17px;background:#ff9c33;border-bottom:1px solid #c67927;border-left:1px solid #cc7c28;"></div><div style="left:735px;top:655px;width:6px;height:17px;background:#ff9c33;border-bottom:1px solid #c67927;border-left:1px solid #cc7c28;"></div><div style="left:748px;top:655px;width:6px;height:17px;background:#ff9c33;border-bottom:1px solid #c67927;border-left:1px solid #cc7c28;"></div><div style="left:760px;top:655px;width:6px;height:17px;background:#ff9c33;border-bottom:1px solid #c67927;border-left:1px solid #cc7c28;"></div><div style="left:772px;top:655px;width:6px;height:17px;background:#ff9c33;border-bottom:1px solid #c67927;border-left:1px solid #cc7c28;"></div><div style="left:784px;top:655px;width:6px;height:17px;background:#ff9c33;border-bottom:1px solid #c67927;border-left:1px solid #cc7c28;"></div><div style="left:796px;top:655px;width:6px;height:17px;background:#ff9c33;border-bottom:1px solid #c67927;border-left:1px solid #cc7c28;"></div><div style="left:808px;top:655px;width:7px;height:17px;background:#ff9c33;border-bottom:1px solid #c67927;border-left:1px solid #cc7c28;"></div><div style="left:1016px;top:655px;width:6px;height:17px;background:#ff9c33;border-bottom:1px solid #c67927;border-left:1px solid #cc7c28;"></div><div style="left:1028px;top:655px;width:6px;height:17px;background:#ff9c33;border-bottom:1px solid #c67927;border-left:1px solid #cc7c28;"></div><div style="left:1040px;top:655px;width:6px;height:17px;background:#ff9c33;border-bottom:1px solid #c67927;border-left:1px solid #cc7c28;"></div><div style="left:1052px;top:655px;width:6px;height:17px;background:#ff9c33;border-bottom:1px solid #c67927;border-left:1px solid #cc7c28;"></div><div style="left:1064px;top:655px;width:6px;height:17px;background:#ff9c33;border-bottom:1px solid #c67927;border-left:1px solid #cc7c28;"></div><div style="left:1076px;top:655px;width:7px;height:17px;background:#ff9c33;border-bottom:1px solid #c67927;border-left:1px solid #cc7c28;"></div><div style="left:1089px;top:655px;width:6px;height:17px;background:#ff9c33;border-bottom:1px solid #c67927;border-left:1px solid #cc7c28;"></div><div style="left:1101px;top:655px;width:6px;height:17px;background:#ff9c33;border-bottom:1px solid #c67927;border-left:1px solid #cc7c28;"></div><div style="left:1113px;top:655px;width:6px;height:17px;background:#ff9c33;border-bottom:1px solid #c67927;border-left:1px solid #cc7c28;"></div><div style="left:1125px;top:655px;width:6px;height:17px;background:#ff9c33;border-bottom:1px solid #c67927;border-left:1px solid #cc7c28;"></div><div style="left:1137px;top:655px;width:6px;height:17px;background:#ff9c33;border-bottom:1px solid #c67927;border-left:1px solid #cc7c28;"></div><div style="left:1150px;top:655px;width:6px;height:17px;background:#ff9c33;border-bottom:1px solid #c67927;border-left:1px solid #cc7c28;"></div><div style="left:1162px;top:655px;width:6px;height:17px;background:#ff9c33;border-bottom:1px solid #c67927;border-left:1px solid #cc7c28;"></div><div style="left:1174px;top:655px;width:6px;height:17px;background:#ff9c33;border-bottom:1px solid #c67927;border-left:1px solid #cc7c28;"></div><div style="left:1186px;top:655px;width:6px;height:17px;background:#ff9c33;border-bottom:1px solid #c67927;border-left:1px solid #cc7c28;"></div><div style="left:1198px;top:655px;width:6px;height:17px;background:#ff9c33;border-bottom:1px solid #c67927;border-left:1px solid #cc7c28;"></div><div style="left:1210px;top:655px;width:7px;height:17px;background:#ff9c33;border-bottom:1px solid #c67927;border-left:1px solid #cc7c28;"></div><div style="left:1223px;top:655px;width:6px;height:17px;background:#ff9c33;border-bottom:1px solid #c67927;border-left:1px solid #cc7c28;"></div><div style="left:1235px;top:655px;width:6px;height:17px;background:#ff9c33;border-bottom:1px solid #c67927;border-left:1px solid #cc7c28;"></div><div style="left:1247px;top:655px;width:6px;height:17px;background:#ff9c33;border-bottom:1px solid #c67927;border-left:1px solid #cc7c28;"></div><div style="left:1259px;top:655px;width:6px;height:17px;background:#ff9c33;border-bottom:1px solid #c67927;border-left:1px solid #cc7c28;"></div><div style="left:1271px;top:655px;width:6px;height:17px;background:#ff9c33;border-bottom:1px solid #c67927;border-left:1px solid #cc7c28;"></div><div style="left:1284px;top:655px;width:6px;height:17px;background:#ff9c33;border-bottom:1px solid #c67927;border-left:1px solid #cc7c28;"></div><div style="left:1296px;top:655px;width:6px;height:17px;background:#ff9c33;border-bottom:1px solid #c67927;border-left:1px solid #cc7c28;"></div><div style="left:1308px;top:655px;width:6px;height:17px;background:#ff9c33;border-bottom:1px solid #c67927;border-left:1px solid #cc7c28;"></div><div style="left:1320px;top:655px;width:6px;height:17px;background:#ff9c33;border-bottom:1px solid #c67927;border-left:1px solid #cc7c28;"></div><div style="left:1332px;top:655px;width:6px;height:17px;background:#ff9c33;border-bottom:1px solid #c67927;border-left:1px solid #cc7c28;"></div><div style="left:1344px;top:655px;width:6px;height:17px;background:#ff9c33;border-bottom:1px solid #c67927;border-left:1px solid #cc7c28;"></div><div style="left:1357px;top:655px;width:6px;height:17px;background:#ff9c33;border-bottom:1px solid #c67927;border-left:1px solid #cc7c28;"></div><div style="left:1369px;top:655px;width:6px;height:17px;background:#ff9c33;border-bottom:1px solid #c67927;border-left:1px solid #cc7c28;"></div><div style="left:1381px;top:655px;width:6px;height:17px;background:#ff9c33;border-bottom:1px solid #c67927;border-left:1px solid #cc7c28;"></div><div style="left:1393px;top:655px;width:6px;height:17px;background:#ff9c33;border-bottom:1px solid #c67927;border-left:1px solid #cc7c28;"></div><svg width="1414" height="69" viewBox="35 655 1414 69" style="left:35px;top:655px"><g fill="#2b1a06"><polygon points="431.8,680.3 432.1,675.7 432.6,677.3 433.4,679.3 434.4,681.3 435.6,683.1 436.9,684.8 436.9,685.8 435.6,687.5 434.4,689.3 433.4,691.3 432.6,693.3 432.1,694.9 431.8,690.3"/><polygon points="431.8,706.5 432.1,702.1 432.6,703.6 433.4,705.5 434.4,707.4 435.6,709.1 436.9,710.7 436.9,711.7 435.6,713.3 434.4,715 433.4,716.9 432.6,718.8 432.1,720.3 431.8,716"/></g><path transform="translate(431)" d="M3.4 660.3h2.8M5.6 660.3v5.6" stroke="#6a3e10" stroke-width="1.1" fill="none"/><g fill="#2b1a06"><polygon points="443.8,680.3 444.1,675.7 444.6,677.3 445.4,679.3 446.4,681.3 447.6,683.1 448.9,684.8 448.9,685.8 447.6,687.5 446.4,689.3 445.4,691.3 444.6,693.3 444.1,694.9 443.8,690.3"/><polygon points="443.8,706.5 444.1,702.1 444.6,703.6 445.4,705.5 446.4,707.4 447.6,709.1 448.9,710.7 448.9,711.7 447.6,713.3 446.4,715 445.4,716.9 444.6,718.8 444.1,720.3 443.8,716"/></g><path transform="translate(443)" d="M3.4 660.3h2.8M5.6 660.3v5.6" stroke="#6a3e10" stroke-width="1.1" fill="none"/><g fill="#2b1a06"><polygon points="455.8,680.3 456.1,675.7 456.6,677.3 457.4,679.3 458.4,681.3 459.6,683.1 460.9,684.8 460.9,685.8 459.6,687.5 458.4,689.3 457.4,691.3 456.6,693.3 456.1,694.9 455.8,690.3"/><polygon points="455.8,706.5 456.1,702.1 456.6,703.6 457.4,705.5 458.4,707.4 459.6,709.1 460.9,710.7 460.9,711.7 459.6,713.3 458.4,715 457.4,716.9 456.6,718.8 456.1,720.3 455.8,716"/></g><path transform="translate(455)" d="M3.4 660.3h2.8M5.6 660.3v5.6" stroke="#6a3e10" stroke-width="1.1" fill="none"/><g fill="#2b1a06"><polygon points="467.8,680.3 468.1,675.7 468.6,677.3 469.4,679.3 470.4,681.3 471.6,683.1 472.9,684.8 472.9,685.8 471.6,687.5 470.4,689.3 469.4,691.3 468.6,693.3 468.1,694.9 467.8,690.3"/><polygon points="467.8,706.5 468.1,702.1 468.6,703.6 469.4,705.5 470.4,707.4 471.6,709.1 472.9,710.7 472.9,711.7 471.6,713.3 470.4,715 469.4,716.9 468.6,718.8 468.1,720.3 467.8,716"/></g><path transform="translate(467)" d="M3.4 660.3h2.8M5.6 660.3v5.6" stroke="#6a3e10" stroke-width="1.1" fill="none"/><g fill="#2b1a06"><polygon points="480.8,680.3 481.1,675.7 481.6,677.3 482.4,679.3 483.4,681.3 484.6,683.1 485.9,684.8 485.9,685.8 484.6,687.5 483.4,689.3 482.4,691.3 481.6,693.3 481.1,694.9 480.8,690.3"/><polygon points="480.8,706.5 481.1,702.1 481.6,703.6 482.4,705.5 483.4,707.4 484.6,709.1 485.9,710.7 485.9,711.7 484.6,713.3 483.4,715 482.4,716.9 481.6,718.8 481.1,720.3 480.8,716"/></g><path transform="translate(480)" d="M3.4 660.3h2.8M5.6 660.3v5.6" stroke="#6a3e10" stroke-width="1.1" fill="none"/><g fill="#2b1a06"><polygon points="492.8,680.3 493.1,675.7 493.6,677.3 494.4,679.3 495.4,681.3 496.6,683.1 497.9,684.8 497.9,685.8 496.6,687.5 495.4,689.3 494.4,691.3 493.6,693.3 493.1,694.9 492.8,690.3"/><polygon points="492.8,706.5 493.1,702.1 493.6,703.6 494.4,705.5 495.4,707.4 496.6,709.1 497.9,710.7 497.9,711.7 496.6,713.3 495.4,715 494.4,716.9 493.6,718.8 493.1,720.3 492.8,716"/></g><path transform="translate(492)" d="M3.4 660.3h2.8M5.6 660.3v5.6" stroke="#6a3e10" stroke-width="1.1" fill="none"/><g fill="#2b1a06"><polygon points="504.8,680.3 505.1,675.7 505.6,677.3 506.4,679.3 507.4,681.3 508.6,683.1 509.9,684.8 509.9,685.8 508.6,687.5 507.4,689.3 506.4,691.3 505.6,693.3 505.1,694.9 504.8,690.3"/><polygon points="504.8,706.5 505.1,702.1 505.6,703.6 506.4,705.5 507.4,707.4 508.6,709.1 509.9,710.7 509.9,711.7 508.6,713.3 507.4,715 506.4,716.9 505.6,718.8 505.1,720.3 504.8,716"/></g><path transform="translate(504)" d="M3.4 660.3h2.8M5.6 660.3v5.6" stroke="#6a3e10" stroke-width="1.1" fill="none"/><g fill="#2b1a06"><polygon points="516.8,680.3 517.1,675.7 517.6,677.3 518.4,679.3 519.4,681.3 520.6,683.1 521.9,684.8 521.9,685.8 520.6,687.5 519.4,689.3 518.4,691.3 517.6,693.3 517.1,694.9 516.8,690.3"/><polygon points="516.8,706.5 517.1,702.1 517.6,703.6 518.4,705.5 519.4,707.4 520.6,709.1 521.9,710.7 521.9,711.7 520.6,713.3 519.4,715 518.4,716.9 517.6,718.8 517.1,720.3 516.8,716"/></g><path transform="translate(516)" d="M3.4 660.3h2.8M5.6 660.3v5.6" stroke="#6a3e10" stroke-width="1.1" fill="none"/><g fill="#2b1a06"><polygon points="528.8,680.3 529.1,675.7 529.6,677.3 530.4,679.3 531.4,681.3 532.6,683.1 533.9,684.8 533.9,685.8 532.6,687.5 531.4,689.3 530.4,691.3 529.6,693.3 529.1,694.9 528.8,690.3"/><polygon points="528.8,706.5 529.1,702.1 529.6,703.6 530.4,705.5 531.4,707.4 532.6,709.1 533.9,710.7 533.9,711.7 532.6,713.3 531.4,715 530.4,716.9 529.6,718.8 529.1,720.3 528.8,716"/></g><path transform="translate(528)" d="M3.4 660.3h2.8M5.6 660.3v5.6" stroke="#6a3e10" stroke-width="1.1" fill="none"/><g fill="#2b1a06"><polygon points="541.8,680.3 542.1,675.7 542.6,677.3 543.4,679.3 544.4,681.3 545.6,683.1 546.9,684.8 546.9,685.8 545.6,687.5 544.4,689.3 543.4,691.3 542.6,693.3 542.1,694.9 541.8,690.3"/><polygon points="541.8,706.5 542.1,702.1 542.6,703.6 543.4,705.5 544.4,707.4 545.6,709.1 546.9,710.7 546.9,711.7 545.6,713.3 544.4,715 543.4,716.9 542.6,718.8 542.1,720.3 541.8,716"/></g><path transform="translate(541)" d="M3.4 660.3h2.8M5.6 660.3v5.6" stroke="#6a3e10" stroke-width="1.1" fill="none"/><g fill="#2b1a06"><polygon points="553.8,680.3 554.1,675.7 554.6,677.3 555.4,679.3 556.4,681.3 557.6,683.1 558.9,684.8 558.9,685.8 557.6,687.5 556.4,689.3 555.4,691.3 554.6,693.3 554.1,694.9 553.8,690.3"/><polygon points="553.8,706.5 554.1,702.1 554.6,703.6 555.4,705.5 556.4,707.4 557.6,709.1 558.9,710.7 558.9,711.7 557.6,713.3 556.4,715 555.4,716.9 554.6,718.8 554.1,720.3 553.8,716"/></g><path transform="translate(553)" d="M3.4 660.3h2.8M5.6 660.3v5.6" stroke="#6a3e10" stroke-width="1.1" fill="none"/><g fill="#2b1a06"><polygon points="565.8,680.3 566.1,675.7 566.6,677.3 567.4,679.3 568.4,681.3 569.6,683.1 570.9,684.8 570.9,685.8 569.6,687.5 568.4,689.3 567.4,691.3 566.6,693.3 566.1,694.9 565.8,690.3"/><polygon points="565.8,706.5 566.1,702.1 566.6,703.6 567.4,705.5 568.4,707.4 569.6,709.1 570.9,710.7 570.9,711.7 569.6,713.3 568.4,715 567.4,716.9 566.6,718.8 566.1,720.3 565.8,716"/></g><path transform="translate(565)" d="M3.4 660.3h2.8M5.6 660.3v5.6" stroke="#6a3e10" stroke-width="1.1" fill="none"/><g fill="#2b1a06"><polygon points="577.8,680.3 578.1,675.7 578.6,677.3 579.4,679.3 580.4,681.3 581.6,683.1 582.9,684.8 582.9,685.8 581.6,687.5 580.4,689.3 579.4,691.3 578.6,693.3 578.1,694.9 577.8,690.3"/><polygon points="577.8,706.5 578.1,702.1 578.6,703.6 579.4,705.5 580.4,707.4 581.6,709.1 582.9,710.7 582.9,711.7 581.6,713.3 580.4,715 579.4,716.9 578.6,718.8 578.1,720.3 577.8,716"/></g><path transform="translate(577)" d="M3.4 660.3h2.8M5.6 660.3v5.6" stroke="#6a3e10" stroke-width="1.1" fill="none"/><g fill="#2b1a06"><polygon points="589.8,680.3 590.1,675.7 590.6,677.3 591.4,679.3 592.4,681.3 593.6,683.1 594.9,684.8 594.9,685.8 593.6,687.5 592.4,689.3 591.4,691.3 590.6,693.3 590.1,694.9 589.8,690.3"/><polygon points="589.8,706.5 590.1,702.1 590.6,703.6 591.4,705.5 592.4,707.4 593.6,709.1 594.9,710.7 594.9,711.7 593.6,713.3 592.4,715 591.4,716.9 590.6,718.8 590.1,720.3 589.8,716"/></g><path transform="translate(589)" d="M3.4 660.3h2.8M5.6 660.3v5.6" stroke="#6a3e10" stroke-width="1.1" fill="none"/><g fill="#2b1a06"><polygon points="601.8,680.3 602.1,675.7 602.6,677.3 603.4,679.3 604.4,681.3 605.6,683.1 606.9,684.8 606.9,685.8 605.6,687.5 604.4,689.3 603.4,691.3 602.6,693.3 602.1,694.9 601.8,690.3"/><polygon points="601.8,706.5 602.1,702.1 602.6,703.6 603.4,705.5 604.4,707.4 605.6,709.1 606.9,710.7 606.9,711.7 605.6,713.3 604.4,715 603.4,716.9 602.6,718.8 602.1,720.3 601.8,716"/></g><path transform="translate(601)" d="M3.4 660.3h2.8M5.6 660.3v5.6" stroke="#6a3e10" stroke-width="1.1" fill="none"/><g fill="#2b1a06"><polygon points="614.8,680.3 615.1,675.7 615.6,677.3 616.4,679.3 617.4,681.3 618.6,683.1 619.9,684.8 619.9,685.8 618.6,687.5 617.4,689.3 616.4,691.3 615.6,693.3 615.1,694.9 614.8,690.3"/><polygon points="614.8,706.5 615.1,702.1 615.6,703.6 616.4,705.5 617.4,707.4 618.6,709.1 619.9,710.7 619.9,711.7 618.6,713.3 617.4,715 616.4,716.9 615.6,718.8 615.1,720.3 614.8,716"/></g><path transform="translate(614)" d="M3.4 660.3h2.8M5.6 660.3v5.6" stroke="#6a3e10" stroke-width="1.1" fill="none"/><g fill="#2b1a06"><polygon points="626.8,680.3 627.1,675.7 627.6,677.3 628.4,679.3 629.4,681.3 630.6,683.1 631.9,684.8 631.9,685.8 630.6,687.5 629.4,689.3 628.4,691.3 627.6,693.3 627.1,694.9 626.8,690.3"/><polygon points="626.8,706.5 627.1,702.1 627.6,703.6 628.4,705.5 629.4,707.4 630.6,709.1 631.9,710.7 631.9,711.7 630.6,713.3 629.4,715 628.4,716.9 627.6,718.8 627.1,720.3 626.8,716"/></g><path transform="translate(626)" d="M3.4 660.3h2.8M5.6 660.3v5.6" stroke="#6a3e10" stroke-width="1.1" fill="none"/><g fill="#2b1a06"><polygon points="638.8,680.3 639.1,675.7 639.6,677.3 640.4,679.3 641.4,681.3 642.6,683.1 643.9,684.8 643.9,685.8 642.6,687.5 641.4,689.3 640.4,691.3 639.6,693.3 639.1,694.9 638.8,690.3"/><polygon points="638.8,706.5 639.1,702.1 639.6,703.6 640.4,705.5 641.4,707.4 642.6,709.1 643.9,710.7 643.9,711.7 642.6,713.3 641.4,715 640.4,716.9 639.6,718.8 639.1,720.3 638.8,716"/></g><path transform="translate(638)" d="M3.4 660.3h2.8M5.6 660.3v5.6" stroke="#6a3e10" stroke-width="1.1" fill="none"/><g fill="#2b1a06"><polygon points="650.8,680.3 651.1,675.7 651.6,677.3 652.4,679.3 653.4,681.3 654.6,683.1 655.9,684.8 655.9,685.8 654.6,687.5 653.4,689.3 652.4,691.3 651.6,693.3 651.1,694.9 650.8,690.3"/><polygon points="650.8,706.5 651.1,702.1 651.6,703.6 652.4,705.5 653.4,707.4 654.6,709.1 655.9,710.7 655.9,711.7 654.6,713.3 653.4,715 652.4,716.9 651.6,718.8 651.1,720.3 650.8,716"/></g><path transform="translate(650)" d="M3.4 660.3h2.8M5.6 660.3v5.6" stroke="#6a3e10" stroke-width="1.1" fill="none"/><g fill="#2b1a06"><polygon points="662.8,680.3 663.1,675.7 663.6,677.3 664.4,679.3 665.4,681.3 666.6,683.1 667.9,684.8 667.9,685.8 666.6,687.5 665.4,689.3 664.4,691.3 663.6,693.3 663.1,694.9 662.8,690.3"/><polygon points="662.8,706.5 663.1,702.1 663.6,703.6 664.4,705.5 665.4,707.4 666.6,709.1 667.9,710.7 667.9,711.7 666.6,713.3 665.4,715 664.4,716.9 663.6,718.8 663.1,720.3 662.8,716"/></g><path transform="translate(662)" d="M3.4 660.3h2.8M5.6 660.3v5.6" stroke="#6a3e10" stroke-width="1.1" fill="none"/><g fill="#2b1a06"><polygon points="675.8,680.3 676.1,675.7 676.6,677.3 677.4,679.3 678.4,681.3 679.6,683.1 680.9,684.8 680.9,685.8 679.6,687.5 678.4,689.3 677.4,691.3 676.6,693.3 676.1,694.9 675.8,690.3"/><polygon points="675.8,706.5 676.1,702.1 676.6,703.6 677.4,705.5 678.4,707.4 679.6,709.1 680.9,710.7 680.9,711.7 679.6,713.3 678.4,715 677.4,716.9 676.6,718.8 676.1,720.3 675.8,716"/></g><path transform="translate(675)" d="M3.4 660.3h2.8M5.6 660.3v5.6" stroke="#6a3e10" stroke-width="1.1" fill="none"/><g fill="#2b1a06"><polygon points="687.8,680.3 688.1,675.7 688.6,677.3 689.4,679.3 690.4,681.3 691.6,683.1 692.9,684.8 692.9,685.8 691.6,687.5 690.4,689.3 689.4,691.3 688.6,693.3 688.1,694.9 687.8,690.3"/><polygon points="687.8,706.5 688.1,702.1 688.6,703.6 689.4,705.5 690.4,707.4 691.6,709.1 692.9,710.7 692.9,711.7 691.6,713.3 690.4,715 689.4,716.9 688.6,718.8 688.1,720.3 687.8,716"/></g><path transform="translate(687)" d="M3.4 660.3h2.8M5.6 660.3v5.6" stroke="#6a3e10" stroke-width="1.1" fill="none"/><g fill="#2b1a06"><polygon points="699.8,680.3 700.1,675.7 700.6,677.3 701.4,679.3 702.4,681.3 703.6,683.1 704.9,684.8 704.9,685.8 703.6,687.5 702.4,689.3 701.4,691.3 700.6,693.3 700.1,694.9 699.8,690.3"/><polygon points="699.8,706.5 700.1,702.1 700.6,703.6 701.4,705.5 702.4,707.4 703.6,709.1 704.9,710.7 704.9,711.7 703.6,713.3 702.4,715 701.4,716.9 700.6,718.8 700.1,720.3 699.8,716"/></g><path transform="translate(699)" d="M3.4 660.3h2.8M5.6 660.3v5.6" stroke="#6a3e10" stroke-width="1.1" fill="none"/><g fill="#2b1a06"><polygon points="711.8,680.3 712.1,675.7 712.6,677.3 713.4,679.3 714.4,681.3 715.6,683.1 716.9,684.8 716.9,685.8 715.6,687.5 714.4,689.3 713.4,691.3 712.6,693.3 712.1,694.9 711.8,690.3"/><polygon points="711.8,706.5 712.1,702.1 712.6,703.6 713.4,705.5 714.4,707.4 715.6,709.1 716.9,710.7 716.9,711.7 715.6,713.3 714.4,715 713.4,716.9 712.6,718.8 712.1,720.3 711.8,716"/></g><path transform="translate(711)" d="M3.4 660.3h2.8M5.6 660.3v5.6" stroke="#6a3e10" stroke-width="1.1" fill="none"/><g fill="#2b1a06"><polygon points="723.8,680.3 724.1,675.7 724.6,677.3 725.4,679.3 726.4,681.3 727.6,683.1 728.9,684.8 728.9,685.8 727.6,687.5 726.4,689.3 725.4,691.3 724.6,693.3 724.1,694.9 723.8,690.3"/><polygon points="723.8,706.5 724.1,702.1 724.6,703.6 725.4,705.5 726.4,707.4 727.6,709.1 728.9,710.7 728.9,711.7 727.6,713.3 726.4,715 725.4,716.9 724.6,718.8 724.1,720.3 723.8,716"/></g><path transform="translate(723)" d="M3.4 660.3h2.8M5.6 660.3v5.6" stroke="#6a3e10" stroke-width="1.1" fill="none"/><g fill="#2b1a06"><polygon points="735.8,680.3 736.1,675.7 736.6,677.3 737.4,679.3 738.4,681.3 739.6,683.1 740.9,684.8 740.9,685.8 739.6,687.5 738.4,689.3 737.4,691.3 736.6,693.3 736.1,694.9 735.8,690.3"/><polygon points="735.8,706.5 736.1,702.1 736.6,703.6 737.4,705.5 738.4,707.4 739.6,709.1 740.9,710.7 740.9,711.7 739.6,713.3 738.4,715 737.4,716.9 736.6,718.8 736.1,720.3 735.8,716"/></g><path transform="translate(735)" d="M3.4 660.3h2.8M5.6 660.3v5.6" stroke="#6a3e10" stroke-width="1.1" fill="none"/><g fill="#2b1a06"><polygon points="748.8,680.3 749.1,675.7 749.6,677.3 750.4,679.3 751.4,681.3 752.6,683.1 753.9,684.8 753.9,685.8 752.6,687.5 751.4,689.3 750.4,691.3 749.6,693.3 749.1,694.9 748.8,690.3"/><polygon points="748.8,706.5 749.1,702.1 749.6,703.6 750.4,705.5 751.4,707.4 752.6,709.1 753.9,710.7 753.9,711.7 752.6,713.3 751.4,715 750.4,716.9 749.6,718.8 749.1,720.3 748.8,716"/></g><path transform="translate(748)" d="M3.4 660.3h2.8M5.6 660.3v5.6" stroke="#6a3e10" stroke-width="1.1" fill="none"/><g fill="#2b1a06"><polygon points="760.8,680.3 761.1,675.7 761.6,677.3 762.4,679.3 763.4,681.3 764.6,683.1 765.9,684.8 765.9,685.8 764.6,687.5 763.4,689.3 762.4,691.3 761.6,693.3 761.1,694.9 760.8,690.3"/><polygon points="760.8,706.5 761.1,702.1 761.6,703.6 762.4,705.5 763.4,707.4 764.6,709.1 765.9,710.7 765.9,711.7 764.6,713.3 763.4,715 762.4,716.9 761.6,718.8 761.1,720.3 760.8,716"/></g><path transform="translate(760)" d="M3.4 660.3h2.8M5.6 660.3v5.6" stroke="#6a3e10" stroke-width="1.1" fill="none"/><g fill="#2b1a06"><polygon points="772.8,680.3 773.1,675.7 773.6,677.3 774.4,679.3 775.4,681.3 776.6,683.1 777.9,684.8 777.9,685.8 776.6,687.5 775.4,689.3 774.4,691.3 773.6,693.3 773.1,694.9 772.8,690.3"/><polygon points="772.8,706.5 773.1,702.1 773.6,703.6 774.4,705.5 775.4,707.4 776.6,709.1 777.9,710.7 777.9,711.7 776.6,713.3 775.4,715 774.4,716.9 773.6,718.8 773.1,720.3 772.8,716"/></g><path transform="translate(772)" d="M3.4 660.3h2.8M5.6 660.3v5.6" stroke="#6a3e10" stroke-width="1.1" fill="none"/><g fill="#2b1a06"><polygon points="784.8,680.3 785.1,675.7 785.6,677.3 786.4,679.3 787.4,681.3 788.6,683.1 789.9,684.8 789.9,685.8 788.6,687.5 787.4,689.3 786.4,691.3 785.6,693.3 785.1,694.9 784.8,690.3"/><polygon points="784.8,706.5 785.1,702.1 785.6,703.6 786.4,705.5 787.4,707.4 788.6,709.1 789.9,710.7 789.9,711.7 788.6,713.3 787.4,715 786.4,716.9 785.6,718.8 785.1,720.3 784.8,716"/></g><path transform="translate(784)" d="M3.4 660.3h2.8M5.6 660.3v5.6" stroke="#6a3e10" stroke-width="1.1" fill="none"/><g fill="#2b1a06"><polygon points="796.8,680.3 797.1,675.7 797.6,677.3 798.4,679.3 799.4,681.3 800.6,683.1 801.9,684.8 801.9,685.8 800.6,687.5 799.4,689.3 798.4,691.3 797.6,693.3 797.1,694.9 796.8,690.3"/><polygon points="796.8,706.5 797.1,702.1 797.6,703.6 798.4,705.5 799.4,707.4 800.6,709.1 801.9,710.7 801.9,711.7 800.6,713.3 799.4,715 798.4,716.9 797.6,718.8 797.1,720.3 796.8,716"/></g><path transform="translate(796)" d="M3.4 660.3h2.8M5.6 660.3v5.6" stroke="#6a3e10" stroke-width="1.1" fill="none"/><g fill="#2b1a06"><polygon points="808.8,680.3 809.1,675.7 809.6,677.3 810.4,679.3 811.4,681.3 812.6,683.1 813.9,684.8 813.9,685.8 812.6,687.5 811.4,689.3 810.4,691.3 809.6,693.3 809.1,694.9 808.8,690.3"/><polygon points="808.8,706.5 809.1,702.1 809.6,703.6 810.4,705.5 811.4,707.4 812.6,709.1 813.9,710.7 813.9,711.7 812.6,713.3 811.4,715 810.4,716.9 809.6,718.8 809.1,720.3 808.8,716"/></g><path transform="translate(808)" d="M3.4 660.3h2.8M5.6 660.3v5.6" stroke="#6a3e10" stroke-width="1.1" fill="none"/><g fill="#2b1a06"><polygon points="1016.8,680.3 1017.1,675.7 1017.6,677.3 1018.4,679.3 1019.4,681.3 1020.6,683.1 1021.9,684.8 1021.9,685.8 1020.6,687.5 1019.4,689.3 1018.4,691.3 1017.6,693.3 1017.1,694.9 1016.8,690.3"/><polygon points="1016.8,706.5 1017.1,702.1 1017.6,703.6 1018.4,705.5 1019.4,707.4 1020.6,709.1 1021.9,710.7 1021.9,711.7 1020.6,713.3 1019.4,715 1018.4,716.9 1017.6,718.8 1017.1,720.3 1016.8,716"/></g><path transform="translate(1016)" d="M3.4 660.3h2.8M5.6 660.3v5.6" stroke="#6a3e10" stroke-width="1.1" fill="none"/><g fill="#2b1a06"><polygon points="1028.8,680.3 1029.1,675.7 1029.6,677.3 1030.4,679.3 1031.4,681.3 1032.6,683.1 1033.9,684.8 1033.9,685.8 1032.6,687.5 1031.4,689.3 1030.4,691.3 1029.6,693.3 1029.1,694.9 1028.8,690.3"/><polygon points="1028.8,706.5 1029.1,702.1 1029.6,703.6 1030.4,705.5 1031.4,707.4 1032.6,709.1 1033.9,710.7 1033.9,711.7 1032.6,713.3 1031.4,715 1030.4,716.9 1029.6,718.8 1029.1,720.3 1028.8,716"/></g><path transform="translate(1028)" d="M3.4 660.3h2.8M5.6 660.3v5.6" stroke="#6a3e10" stroke-width="1.1" fill="none"/><g fill="#2b1a06"><polygon points="1040.8,680.3 1041.1,675.7 1041.6,677.3 1042.4,679.3 1043.4,681.3 1044.6,683.1 1045.9,684.8 1045.9,685.8 1044.6,687.5 1043.4,689.3 1042.4,691.3 1041.6,693.3 1041.1,694.9 1040.8,690.3"/><polygon points="1040.8,706.5 1041.1,702.1 1041.6,703.6 1042.4,705.5 1043.4,707.4 1044.6,709.1 1045.9,710.7 1045.9,711.7 1044.6,713.3 1043.4,715 1042.4,716.9 1041.6,718.8 1041.1,720.3 1040.8,716"/></g><path transform="translate(1040)" d="M3.4 660.3h2.8M5.6 660.3v5.6" stroke="#6a3e10" stroke-width="1.1" fill="none"/><g fill="#2b1a06"><polygon points="1052.8,680.3 1053.1,675.7 1053.6,677.3 1054.4,679.3 1055.4,681.3 1056.6,683.1 1057.9,684.8 1057.9,685.8 1056.6,687.5 1055.4,689.3 1054.4,691.3 1053.6,693.3 1053.1,694.9 1052.8,690.3"/><polygon points="1052.8,706.5 1053.1,702.1 1053.6,703.6 1054.4,705.5 1055.4,707.4 1056.6,709.1 1057.9,710.7 1057.9,711.7 1056.6,713.3 1055.4,715 1054.4,716.9 1053.6,718.8 1053.1,720.3 1052.8,716"/></g><path transform="translate(1052)" d="M3.4 660.3h2.8M5.6 660.3v5.6" stroke="#6a3e10" stroke-width="1.1" fill="none"/><g fill="#2b1a06"><polygon points="1064.8,680.3 1065.1,675.7 1065.6,677.3 1066.4,679.3 1067.4,681.3 1068.6,683.1 1069.9,684.8 1069.9,685.8 1068.6,687.5 1067.4,689.3 1066.4,691.3 1065.6,693.3 1065.1,694.9 1064.8,690.3"/><polygon points="1064.8,706.5 1065.1,702.1 1065.6,703.6 1066.4,705.5 1067.4,707.4 1068.6,709.1 1069.9,710.7 1069.9,711.7 1068.6,713.3 1067.4,715 1066.4,716.9 1065.6,718.8 1065.1,720.3 1064.8,716"/></g><path transform="translate(1064)" d="M3.4 660.3h2.8M5.6 660.3v5.6" stroke="#6a3e10" stroke-width="1.1" fill="none"/><g fill="#2b1a06"><polygon points="1076.8,680.3 1077.1,675.7 1077.6,677.3 1078.4,679.3 1079.4,681.3 1080.6,683.1 1081.9,684.8 1081.9,685.8 1080.6,687.5 1079.4,689.3 1078.4,691.3 1077.6,693.3 1077.1,694.9 1076.8,690.3"/><polygon points="1076.8,706.5 1077.1,702.1 1077.6,703.6 1078.4,705.5 1079.4,707.4 1080.6,709.1 1081.9,710.7 1081.9,711.7 1080.6,713.3 1079.4,715 1078.4,716.9 1077.6,718.8 1077.1,720.3 1076.8,716"/></g><path transform="translate(1076)" d="M3.4 660.3h2.8M5.6 660.3v5.6" stroke="#6a3e10" stroke-width="1.1" fill="none"/><g fill="#2b1a06"><polygon points="1089.8,680.3 1090.1,675.7 1090.6,677.3 1091.4,679.3 1092.4,681.3 1093.6,683.1 1094.9,684.8 1094.9,685.8 1093.6,687.5 1092.4,689.3 1091.4,691.3 1090.6,693.3 1090.1,694.9 1089.8,690.3"/><polygon points="1089.8,706.5 1090.1,702.1 1090.6,703.6 1091.4,705.5 1092.4,707.4 1093.6,709.1 1094.9,710.7 1094.9,711.7 1093.6,713.3 1092.4,715 1091.4,716.9 1090.6,718.8 1090.1,720.3 1089.8,716"/></g><path transform="translate(1089)" d="M3.4 660.3h2.8M5.6 660.3v5.6" stroke="#6a3e10" stroke-width="1.1" fill="none"/><g fill="#2b1a06"><polygon points="1101.8,680.3 1102.1,675.7 1102.6,677.3 1103.4,679.3 1104.4,681.3 1105.6,683.1 1106.9,684.8 1106.9,685.8 1105.6,687.5 1104.4,689.3 1103.4,691.3 1102.6,693.3 1102.1,694.9 1101.8,690.3"/><polygon points="1101.8,706.5 1102.1,702.1 1102.6,703.6 1103.4,705.5 1104.4,707.4 1105.6,709.1 1106.9,710.7 1106.9,711.7 1105.6,713.3 1104.4,715 1103.4,716.9 1102.6,718.8 1102.1,720.3 1101.8,716"/></g><path transform="translate(1101)" d="M3.4 660.3h2.8M5.6 660.3v5.6" stroke="#6a3e10" stroke-width="1.1" fill="none"/><g fill="#2b1a06"><polygon points="1113.8,680.3 1114.1,675.7 1114.6,677.3 1115.4,679.3 1116.4,681.3 1117.6,683.1 1118.9,684.8 1118.9,685.8 1117.6,687.5 1116.4,689.3 1115.4,691.3 1114.6,693.3 1114.1,694.9 1113.8,690.3"/><polygon points="1113.8,706.5 1114.1,702.1 1114.6,703.6 1115.4,705.5 1116.4,707.4 1117.6,709.1 1118.9,710.7 1118.9,711.7 1117.6,713.3 1116.4,715 1115.4,716.9 1114.6,718.8 1114.1,720.3 1113.8,716"/></g><path transform="translate(1113)" d="M3.4 660.3h2.8M5.6 660.3v5.6" stroke="#6a3e10" stroke-width="1.1" fill="none"/><g fill="#2b1a06"><polygon points="1125.8,680.3 1126.1,675.7 1126.6,677.3 1127.4,679.3 1128.4,681.3 1129.6,683.1 1130.9,684.8 1130.9,685.8 1129.6,687.5 1128.4,689.3 1127.4,691.3 1126.6,693.3 1126.1,694.9 1125.8,690.3"/><polygon points="1125.8,706.5 1126.1,702.1 1126.6,703.6 1127.4,705.5 1128.4,707.4 1129.6,709.1 1130.9,710.7 1130.9,711.7 1129.6,713.3 1128.4,715 1127.4,716.9 1126.6,718.8 1126.1,720.3 1125.8,716"/></g><path transform="translate(1125)" d="M3.4 660.3h2.8M5.6 660.3v5.6" stroke="#6a3e10" stroke-width="1.1" fill="none"/><g fill="#2b1a06"><polygon points="1137.8,680.3 1138.1,675.7 1138.6,677.3 1139.4,679.3 1140.4,681.3 1141.6,683.1 1142.9,684.8 1142.9,685.8 1141.6,687.5 1140.4,689.3 1139.4,691.3 1138.6,693.3 1138.1,694.9 1137.8,690.3"/><polygon points="1137.8,706.5 1138.1,702.1 1138.6,703.6 1139.4,705.5 1140.4,707.4 1141.6,709.1 1142.9,710.7 1142.9,711.7 1141.6,713.3 1140.4,715 1139.4,716.9 1138.6,718.8 1138.1,720.3 1137.8,716"/></g><path transform="translate(1137)" d="M3.4 660.3h2.8M5.6 660.3v5.6" stroke="#6a3e10" stroke-width="1.1" fill="none"/><g fill="#2b1a06"><polygon points="1150.8,680.3 1151.1,675.7 1151.6,677.3 1152.4,679.3 1153.4,681.3 1154.6,683.1 1155.9,684.8 1155.9,685.8 1154.6,687.5 1153.4,689.3 1152.4,691.3 1151.6,693.3 1151.1,694.9 1150.8,690.3"/><polygon points="1150.8,706.5 1151.1,702.1 1151.6,703.6 1152.4,705.5 1153.4,707.4 1154.6,709.1 1155.9,710.7 1155.9,711.7 1154.6,713.3 1153.4,715 1152.4,716.9 1151.6,718.8 1151.1,720.3 1150.8,716"/></g><path transform="translate(1150)" d="M3.4 660.3h2.8M5.6 660.3v5.6" stroke="#6a3e10" stroke-width="1.1" fill="none"/><g fill="#2b1a06"><polygon points="1162.8,680.3 1163.1,675.7 1163.6,677.3 1164.4,679.3 1165.4,681.3 1166.6,683.1 1167.9,684.8 1167.9,685.8 1166.6,687.5 1165.4,689.3 1164.4,691.3 1163.6,693.3 1163.1,694.9 1162.8,690.3"/><polygon points="1162.8,706.5 1163.1,702.1 1163.6,703.6 1164.4,705.5 1165.4,707.4 1166.6,709.1 1167.9,710.7 1167.9,711.7 1166.6,713.3 1165.4,715 1164.4,716.9 1163.6,718.8 1163.1,720.3 1162.8,716"/></g><path transform="translate(1162)" d="M3.4 660.3h2.8M5.6 660.3v5.6" stroke="#6a3e10" stroke-width="1.1" fill="none"/><g fill="#2b1a06"><polygon points="1174.8,680.3 1175.1,675.7 1175.6,677.3 1176.4,679.3 1177.4,681.3 1178.6,683.1 1179.9,684.8 1179.9,685.8 1178.6,687.5 1177.4,689.3 1176.4,691.3 1175.6,693.3 1175.1,694.9 1174.8,690.3"/><polygon points="1174.8,706.5 1175.1,702.1 1175.6,703.6 1176.4,705.5 1177.4,707.4 1178.6,709.1 1179.9,710.7 1179.9,711.7 1178.6,713.3 1177.4,715 1176.4,716.9 1175.6,718.8 1175.1,720.3 1174.8,716"/></g><path transform="translate(1174)" d="M3.4 660.3h2.8M5.6 660.3v5.6" stroke="#6a3e10" stroke-width="1.1" fill="none"/><g fill="#2b1a06"><polygon points="1186.8,680.3 1187.1,675.7 1187.6,677.3 1188.4,679.3 1189.4,681.3 1190.6,683.1 1191.9,684.8 1191.9,685.8 1190.6,687.5 1189.4,689.3 1188.4,691.3 1187.6,693.3 1187.1,694.9 1186.8,690.3"/><polygon points="1186.8,706.5 1187.1,702.1 1187.6,703.6 1188.4,705.5 1189.4,707.4 1190.6,709.1 1191.9,710.7 1191.9,711.7 1190.6,713.3 1189.4,715 1188.4,716.9 1187.6,718.8 1187.1,720.3 1186.8,716"/></g><path transform="translate(1186)" d="M3.4 660.3h2.8M5.6 660.3v5.6" stroke="#6a3e10" stroke-width="1.1" fill="none"/><g fill="#2b1a06"><polygon points="1198.8,680.3 1199.1,675.7 1199.6,677.3 1200.4,679.3 1201.4,681.3 1202.6,683.1 1203.9,684.8 1203.9,685.8 1202.6,687.5 1201.4,689.3 1200.4,691.3 1199.6,693.3 1199.1,694.9 1198.8,690.3"/><polygon points="1198.8,706.5 1199.1,702.1 1199.6,703.6 1200.4,705.5 1201.4,707.4 1202.6,709.1 1203.9,710.7 1203.9,711.7 1202.6,713.3 1201.4,715 1200.4,716.9 1199.6,718.8 1199.1,720.3 1198.8,716"/></g><path transform="translate(1198)" d="M3.4 660.3h2.8M5.6 660.3v5.6" stroke="#6a3e10" stroke-width="1.1" fill="none"/><g fill="#2b1a06"><polygon points="1210.8,680.3 1211.1,675.7 1211.6,677.3 1212.4,679.3 1213.4,681.3 1214.6,683.1 1215.9,684.8 1215.9,685.8 1214.6,687.5 1213.4,689.3 1212.4,691.3 1211.6,693.3 1211.1,694.9 1210.8,690.3"/><polygon points="1210.8,706.5 1211.1,702.1 1211.6,703.6 1212.4,705.5 1213.4,707.4 1214.6,709.1 1215.9,710.7 1215.9,711.7 1214.6,713.3 1213.4,715 1212.4,716.9 1211.6,718.8 1211.1,720.3 1210.8,716"/></g><path transform="translate(1210)" d="M3.4 660.3h2.8M5.6 660.3v5.6" stroke="#6a3e10" stroke-width="1.1" fill="none"/><g fill="#2b1a06"><polygon points="1223.8,680.3 1224.1,675.7 1224.6,677.3 1225.4,679.3 1226.4,681.3 1227.6,683.1 1228.9,684.8 1228.9,685.8 1227.6,687.5 1226.4,689.3 1225.4,691.3 1224.6,693.3 1224.1,694.9 1223.8,690.3"/><polygon points="1223.8,706.5 1224.1,702.1 1224.6,703.6 1225.4,705.5 1226.4,707.4 1227.6,709.1 1228.9,710.7 1228.9,711.7 1227.6,713.3 1226.4,715 1225.4,716.9 1224.6,718.8 1224.1,720.3 1223.8,716"/></g><path transform="translate(1223)" d="M3.4 660.3h2.8M5.6 660.3v5.6" stroke="#6a3e10" stroke-width="1.1" fill="none"/><g fill="#2b1a06"><polygon points="1235.8,680.3 1236.1,675.7 1236.6,677.3 1237.4,679.3 1238.4,681.3 1239.6,683.1 1240.9,684.8 1240.9,685.8 1239.6,687.5 1238.4,689.3 1237.4,691.3 1236.6,693.3 1236.1,694.9 1235.8,690.3"/><polygon points="1235.8,706.5 1236.1,702.1 1236.6,703.6 1237.4,705.5 1238.4,707.4 1239.6,709.1 1240.9,710.7 1240.9,711.7 1239.6,713.3 1238.4,715 1237.4,716.9 1236.6,718.8 1236.1,720.3 1235.8,716"/></g><path transform="translate(1235)" d="M3.4 660.3h2.8M5.6 660.3v5.6" stroke="#6a3e10" stroke-width="1.1" fill="none"/><g fill="#2b1a06"><polygon points="1247.8,680.3 1248.1,675.7 1248.6,677.3 1249.4,679.3 1250.4,681.3 1251.6,683.1 1252.9,684.8 1252.9,685.8 1251.6,687.5 1250.4,689.3 1249.4,691.3 1248.6,693.3 1248.1,694.9 1247.8,690.3"/><polygon points="1247.8,706.5 1248.1,702.1 1248.6,703.6 1249.4,705.5 1250.4,707.4 1251.6,709.1 1252.9,710.7 1252.9,711.7 1251.6,713.3 1250.4,715 1249.4,716.9 1248.6,718.8 1248.1,720.3 1247.8,716"/></g><path transform="translate(1247)" d="M3.4 660.3h2.8M5.6 660.3v5.6" stroke="#6a3e10" stroke-width="1.1" fill="none"/><g fill="#2b1a06"><polygon points="1259.8,680.3 1260.1,675.7 1260.6,677.3 1261.4,679.3 1262.4,681.3 1263.6,683.1 1264.9,684.8 1264.9,685.8 1263.6,687.5 1262.4,689.3 1261.4,691.3 1260.6,693.3 1260.1,694.9 1259.8,690.3"/><polygon points="1259.8,706.5 1260.1,702.1 1260.6,703.6 1261.4,705.5 1262.4,707.4 1263.6,709.1 1264.9,710.7 1264.9,711.7 1263.6,713.3 1262.4,715 1261.4,716.9 1260.6,718.8 1260.1,720.3 1259.8,716"/></g><path transform="translate(1259)" d="M3.4 660.3h2.8M5.6 660.3v5.6" stroke="#6a3e10" stroke-width="1.1" fill="none"/><g fill="#2b1a06"><polygon points="1271.8,680.3 1272.1,675.7 1272.6,677.3 1273.4,679.3 1274.4,681.3 1275.6,683.1 1276.9,684.8 1276.9,685.8 1275.6,687.5 1274.4,689.3 1273.4,691.3 1272.6,693.3 1272.1,694.9 1271.8,690.3"/><polygon points="1271.8,706.5 1272.1,702.1 1272.6,703.6 1273.4,705.5 1274.4,707.4 1275.6,709.1 1276.9,710.7 1276.9,711.7 1275.6,713.3 1274.4,715 1273.4,716.9 1272.6,718.8 1272.1,720.3 1271.8,716"/></g><path transform="translate(1271)" d="M3.4 660.3h2.8M5.6 660.3v5.6" stroke="#6a3e10" stroke-width="1.1" fill="none"/><g fill="#2b1a06"><polygon points="1284.8,680.3 1285.1,675.7 1285.6,677.3 1286.4,679.3 1287.4,681.3 1288.6,683.1 1289.9,684.8 1289.9,685.8 1288.6,687.5 1287.4,689.3 1286.4,691.3 1285.6,693.3 1285.1,694.9 1284.8,690.3"/><polygon points="1284.8,706.5 1285.1,702.1 1285.6,703.6 1286.4,705.5 1287.4,707.4 1288.6,709.1 1289.9,710.7 1289.9,711.7 1288.6,713.3 1287.4,715 1286.4,716.9 1285.6,718.8 1285.1,720.3 1284.8,716"/></g><path transform="translate(1284)" d="M3.4 660.3h2.8M5.6 660.3v5.6" stroke="#6a3e10" stroke-width="1.1" fill="none"/><g fill="#2b1a06"><polygon points="1296.8,680.3 1297.1,675.7 1297.6,677.3 1298.4,679.3 1299.4,681.3 1300.6,683.1 1301.9,684.8 1301.9,685.8 1300.6,687.5 1299.4,689.3 1298.4,691.3 1297.6,693.3 1297.1,694.9 1296.8,690.3"/><polygon points="1296.8,706.5 1297.1,702.1 1297.6,703.6 1298.4,705.5 1299.4,707.4 1300.6,709.1 1301.9,710.7 1301.9,711.7 1300.6,713.3 1299.4,715 1298.4,716.9 1297.6,718.8 1297.1,720.3 1296.8,716"/></g><path transform="translate(1296)" d="M3.4 660.3h2.8M5.6 660.3v5.6" stroke="#6a3e10" stroke-width="1.1" fill="none"/><g fill="#2b1a06"><polygon points="1308.8,680.3 1309.1,675.7 1309.6,677.3 1310.4,679.3 1311.4,681.3 1312.6,683.1 1313.9,684.8 1313.9,685.8 1312.6,687.5 1311.4,689.3 1310.4,691.3 1309.6,693.3 1309.1,694.9 1308.8,690.3"/><polygon points="1308.8,706.5 1309.1,702.1 1309.6,703.6 1310.4,705.5 1311.4,707.4 1312.6,709.1 1313.9,710.7 1313.9,711.7 1312.6,713.3 1311.4,715 1310.4,716.9 1309.6,718.8 1309.1,720.3 1308.8,716"/></g><path transform="translate(1308)" d="M3.4 660.3h2.8M5.6 660.3v5.6" stroke="#6a3e10" stroke-width="1.1" fill="none"/><g fill="#2b1a06"><polygon points="1320.8,680.3 1321.1,675.7 1321.6,677.3 1322.4,679.3 1323.4,681.3 1324.6,683.1 1325.9,684.8 1325.9,685.8 1324.6,687.5 1323.4,689.3 1322.4,691.3 1321.6,693.3 1321.1,694.9 1320.8,690.3"/><polygon points="1320.8,706.5 1321.1,702.1 1321.6,703.6 1322.4,705.5 1323.4,707.4 1324.6,709.1 1325.9,710.7 1325.9,711.7 1324.6,713.3 1323.4,715 1322.4,716.9 1321.6,718.8 1321.1,720.3 1320.8,716"/></g><path transform="translate(1320)" d="M3.4 660.3h2.8M5.6 660.3v5.6" stroke="#6a3e10" stroke-width="1.1" fill="none"/><g fill="#2b1a06"><polygon points="1332.8,680.3 1333.1,675.7 1333.6,677.3 1334.4,679.3 1335.4,681.3 1336.6,683.1 1337.9,684.8 1337.9,685.8 1336.6,687.5 1335.4,689.3 1334.4,691.3 1333.6,693.3 1333.1,694.9 1332.8,690.3"/><polygon points="1332.8,706.5 1333.1,702.1 1333.6,703.6 1334.4,705.5 1335.4,707.4 1336.6,709.1 1337.9,710.7 1337.9,711.7 1336.6,713.3 1335.4,715 1334.4,716.9 1333.6,718.8 1333.1,720.3 1332.8,716"/></g><path transform="translate(1332)" d="M3.4 660.3h2.8M5.6 660.3v5.6" stroke="#6a3e10" stroke-width="1.1" fill="none"/><g fill="#2b1a06"><polygon points="1344.8,680.3 1345.1,675.7 1345.6,677.3 1346.4,679.3 1347.4,681.3 1348.6,683.1 1349.9,684.8 1349.9,685.8 1348.6,687.5 1347.4,689.3 1346.4,691.3 1345.6,693.3 1345.1,694.9 1344.8,690.3"/><polygon points="1344.8,706.5 1345.1,702.1 1345.6,703.6 1346.4,705.5 1347.4,707.4 1348.6,709.1 1349.9,710.7 1349.9,711.7 1348.6,713.3 1347.4,715 1346.4,716.9 1345.6,718.8 1345.1,720.3 1344.8,716"/></g><path transform="translate(1344)" d="M3.4 660.3h2.8M5.6 660.3v5.6" stroke="#6a3e10" stroke-width="1.1" fill="none"/><g fill="#2b1a06"><polygon points="1357.8,680.3 1358.1,675.7 1358.6,677.3 1359.4,679.3 1360.4,681.3 1361.6,683.1 1362.9,684.8 1362.9,685.8 1361.6,687.5 1360.4,689.3 1359.4,691.3 1358.6,693.3 1358.1,694.9 1357.8,690.3"/><polygon points="1357.8,706.5 1358.1,702.1 1358.6,703.6 1359.4,705.5 1360.4,707.4 1361.6,709.1 1362.9,710.7 1362.9,711.7 1361.6,713.3 1360.4,715 1359.4,716.9 1358.6,718.8 1358.1,720.3 1357.8,716"/></g><path transform="translate(1357)" d="M3.4 660.3h2.8M5.6 660.3v5.6" stroke="#6a3e10" stroke-width="1.1" fill="none"/><g fill="#2b1a06"><polygon points="1369.8,680.3 1370.1,675.7 1370.6,677.3 1371.4,679.3 1372.4,681.3 1373.6,683.1 1374.9,684.8 1374.9,685.8 1373.6,687.5 1372.4,689.3 1371.4,691.3 1370.6,693.3 1370.1,694.9 1369.8,690.3"/><polygon points="1369.8,706.5 1370.1,702.1 1370.6,703.6 1371.4,705.5 1372.4,707.4 1373.6,709.1 1374.9,710.7 1374.9,711.7 1373.6,713.3 1372.4,715 1371.4,716.9 1370.6,718.8 1370.1,720.3 1369.8,716"/></g><path transform="translate(1369)" d="M3.4 660.3h2.8M5.6 660.3v5.6" stroke="#6a3e10" stroke-width="1.1" fill="none"/><g fill="#2b1a06"><polygon points="1381.8,680.3 1382.1,675.7 1382.6,677.3 1383.4,679.3 1384.4,681.3 1385.6,683.1 1386.9,684.8 1386.9,685.8 1385.6,687.5 1384.4,689.3 1383.4,691.3 1382.6,693.3 1382.1,694.9 1381.8,690.3"/><polygon points="1381.8,706.5 1382.1,702.1 1382.6,703.6 1383.4,705.5 1384.4,707.4 1385.6,709.1 1386.9,710.7 1386.9,711.7 1385.6,713.3 1384.4,715 1383.4,716.9 1382.6,718.8 1382.1,720.3 1381.8,716"/></g><path transform="translate(1381)" d="M3.4 660.3h2.8M5.6 660.3v5.6" stroke="#6a3e10" stroke-width="1.1" fill="none"/><g fill="#2b1a06"><polygon points="1393.8,680.3 1394.1,675.7 1394.6,677.3 1395.4,679.3 1396.4,681.3 1397.6,683.1 1398.9,684.8 1398.9,685.8 1397.6,687.5 1396.4,689.3 1395.4,691.3 1394.6,693.3 1394.1,694.9 1393.8,690.3"/><polygon points="1393.8,706.5 1394.1,702.1 1394.6,703.6 1395.4,705.5 1396.4,707.4 1397.6,709.1 1398.9,710.7 1398.9,711.7 1397.6,713.3 1396.4,715 1395.4,716.9 1394.6,718.8 1394.1,720.3 1393.8,716"/></g><path transform="translate(1393)" d="M3.4 660.3h2.8M5.6 660.3v5.6" stroke="#6a3e10" stroke-width="1.1" fill="none"/></svg><div style="left:815px;top:726px;width:194px;height:17px;background:#cc9432;border-bottom:1px solid #9f7327;border-left:1px solid #a37628;"><span class="cn" style="left:3px;top:1px;color:rgba(0,0,0,0.82);">Percussion</span></div><div style="left:1008px;top:726px;width:1px;height:69px;background:#8e6723;"></div><svg width="1414" height="69" viewBox="35 726 1414 69" style="left:35px;top:726px"><polygon points="816,751.7 816.4,751.2 816.9,751.6 817.3,753.2 817.7,753.8 818.1,751.5 818.6,749.4 819,748.2 819.4,747.7 819.9,749.8 820.3,751.6 820.7,748.5 821.2,745.5 821.6,744.8 822,748.7 822.4,750.7 822.9,752.7 823.3,750.8 823.7,749.8 824.2,750.6 824.6,752.2 825,753.2 825.5,754.5 825.9,753.2 826.3,752.1 826.7,752.5 827.2,752.9 827.6,753.4 828,754.5 828.5,753.4 828.9,752.3 829.3,751.4 829.8,750.4 830.2,751.7 830.6,753.7 831,750.2 831.5,746.5 831.9,745.6 832.3,747 832.8,749.1 833.2,752.9 833.6,750.3 834.1,745.9 834.5,746.4 834.9,748.5 835.3,750.7 835.8,753.8 836.2,752.1 836.6,751.1 837.1,751.8 837.5,752.4 837.9,753.5 838.4,754.7 838.8,753.7 839.2,753.1 839.6,752.4 840.1,752.8 840.5,752.9 840.9,754.4 841.4,753.1 841.8,751.1 842.2,749.1 842.7,749.6 843.1,749.9 843.5,752.7 843.9,750.4 844.4,747.1 844.8,746.8 845.2,746 845.7,749.2 846.1,752.7 846.5,750.4 847,749.5 847.4,748.5 847.8,749.2 848.2,751.7 848.7,753.9 849.1,753.4 849.5,752.4 850,751.7 850.4,752.8 850.8,753.2 851.3,754.5 851.7,754.1 852.1,752.6 852.5,752 853,751.8 853.4,752.2 853.8,753.4 854.3,753 854.7,750.3 855.1,748.4 855.6,747.7 856,748.5 856.4,751.6 856.8,750.7 857.3,747.4 857.7,744.1 858.1,745.4 858.6,747.8 859,751.5 859.4,752.5 859.9,750.4 860.3,749.2 860.7,750.2 861.1,752.6 861.6,754.1 862,754.1 862.4,753.3 862.9,752.7 863.3,752.9 863.7,753 864.2,754 864.6,754 865,753.1 865.4,751.3 865.9,750.8 866.3,751.8 866.7,752.4 867.2,752.4 867.6,750.3 868,746 868.5,746.4 868.9,747.4 869.3,749.7 869.7,751.1 870.2,749.1 870.6,746.7 871,746.9 871.5,749.5 871.9,752.4 872.3,753.5 872.8,751.7 873.2,751.9 873.6,751.4 874,752.5 874.5,754.1 874.9,754.5 875.3,753.3 875.8,752.6 876.2,752.7 876.6,752.3 877.1,753.5 877.5,754 877.9,752.9 878.3,751.2 878.8,750.6 879.2,749.4 879.6,751.7 880.1,753.1 880.5,749.6 880.9,745.2 881.4,744.2 881.8,747.2 882.2,750.4 882.6,752.1 883.1,749.6 883.5,747.7 883.9,749.3 884.4,750.8 884.8,752.2 885.2,754.2 885.7,753.3 886.1,751.6 886.5,751.9 886.9,752.3 887.4,753.9 887.8,754.6 888.2,753.9 888.7,752.2 889.1,752 889.5,752.3 890,752.9 890.4,754 890.8,752.5 891.2,750.6 891.7,748.2 892.1,748.8 892.5,750.5 893,752.9 893.4,750.4 893.8,747.3 894.3,745.8 894.7,747.1 895.1,749.1 895.5,753.1 896,751.3 896.4,750.5 896.8,750.1 897.3,751.7 897.7,752.9 898.1,754.5 898.6,753.4 899,752.6 899.4,752.6 899.8,752.6 900.3,753.2 900.7,754.6 901.1,753.5 901.6,752.5 902,751.5 902.4,750.8 902.9,752 903.3,753.4 903.7,751.7 904.1,748 904.6,747.3 905,745.6 905.4,748 905.9,751.5 906.3,750.4 906.7,747.7 907.2,747.5 907.6,748.2 908,750.7 908.4,752.7 908.9,752.9 909.3,751.8 909.7,751.6 910.2,751.2 910.6,752.5 911,754.1 911.5,754.2 911.9,753.3 912.3,752.7 912.7,752.4 913.2,753.3 913.6,754.1 914,753.9 914.5,751.6 914.9,749.9 915.3,749.8 915.8,750.9 916.2,751.8 916.6,752 917,748.7 917.5,747.3 917.9,745.8 918.3,747.5 918.8,751 919.2,751.8 919.6,748.8 920.1,748.9 920.5,749.1 920.9,751.3 921.3,753.1 921.8,753.9 922.2,752.9 922.6,752.1 923.1,752.4 923.5,752.8 923.9,754 924.4,754.3 924.8,753.1 925.2,752.1 925.6,751.6 926.1,752.5 926.5,753.6 926.9,753.5 927.4,752 927.8,749.1 928.2,748 928.7,749.7 929.1,750.4 929.5,751.5 929.9,748.1 930.4,745 930.8,744.3 931.2,748.2 931.7,750.7 932.1,752.6 932.5,750 933,748.9 933.4,749.3 933.8,751.3 934.2,752.9 934.7,754.2 935.1,753 935.5,752.7 936,752.8 936.4,753.2 936.8,753.9 937.3,754.7 937.7,753.1 938.1,752 938.5,751.3 939,751.4 939.4,752.3 939.8,753.7 940.3,751.8 940.7,747.7 941.1,746.1 941.6,747.1 942,749.5 942.4,752.3 942.8,749.9 943.3,745.9 943.7,746.8 944.1,748.9 944.6,751.2 945,753.5 945.4,752.3 945.9,750.6 946.3,750.3 946.7,751.9 947.1,753.4 947.6,754.6 948,753.5 948.4,752.5 948.9,752.3 949.3,752.5 949.7,753.7 950.2,754.6 950.6,753.5 951,751.4 951.4,750.8 951.9,750.1 952.3,751.9 952.7,753.4 953.2,751.1 953.6,747.1 954,745 954.5,745.5 954.9,749 955.3,752.1 955.7,750.3 956.2,748.1 956.6,748.5 957,748.1 957.5,751.7 957.9,753.4 958.3,752.7 958.8,752.6 959.2,751.8 959.6,751.9 960,752.9 960.5,754.5 960.9,754.1 961.3,753.1 961.8,751.8 962.2,752.5 962.6,752.7 963.1,754.1 963.5,753.2 963.9,750.4 964.3,750 964.8,747.9 965.2,749.6 965.6,751.5 966.1,750.5 966.5,748 966.9,744 967.4,745.7 967.8,749.3 968.2,752.4 968.6,751.7 969.1,749.8 969.5,749.6 969.9,750.7 970.4,752 970.8,753.8 971.2,753.6 971.7,753.2 972.1,752 972.5,752.1 972.9,753.4 973.4,754 973.8,754.1 974.2,752.6 974.7,752.1 975.1,751.7 975.5,752 976,752.8 976.4,752.9 976.8,750.6 977.2,748.1 977.7,747.5 978.1,749 978.5,751.3 979,750.9 979.4,748.4 979.8,744.7 980.3,747 980.7,749.1 981.1,751.8 981.5,753.2 982,751.5 982.4,750 982.8,750.5 983.3,751.9 983.7,753.7 984.1,754.2 984.6,752.9 985,752.5 985.4,752.2 985.8,753.2 986.3,753.7 986.7,754.3 987.1,752.6 987.6,751.2 988,750.8 988.4,751.3 988.9,751.5 989.3,753.3 989.7,749.8 990.1,747.3 990.6,746.2 991,746.1 991.4,748.9 991.9,752.4 992.3,748.9 992.7,747.9 993.2,747.4 993.6,749.6 994,752.4 994.4,754.1 994.9,752.8 995.3,751.3 995.7,751.8 996.2,752.8 996.6,753.4 997,754.5 997.5,753.6 997.9,753 998.3,752.5 998.7,752.8 999.2,753.4 999.6,754.5 1000,752.8 1000.5,750.9 1000.9,749 1001.3,748.2 1001.8,750.1 1002.2,753 1002.6,749.8 1003,746.4 1003.5,745.5 1003.9,746.7 1004.3,750.2 1004.8,753 1005.2,750 1005.6,749.8 1006.1,749.1 1006.5,750.2 1006.9,752 1007.3,754.4 1007.8,753.5 1008.2,752.7 1008.5,752.3 1008.5,760.7 1008.2,760.3 1007.8,759.5 1007.3,758.6 1006.9,761 1006.5,762.8 1006.1,763.9 1005.6,763.2 1005.2,763 1004.8,760 1004.3,762.8 1003.9,766.3 1003.5,767.5 1003,766.6 1002.6,763.2 1002.2,760 1001.8,762.9 1001.3,764.8 1000.9,764 1000.5,762.1 1000,760.2 999.6,758.5 999.2,759.6 998.7,760.2 998.3,760.5 997.9,760 997.5,759.4 997,758.5 996.6,759.6 996.2,760.2 995.7,761.2 995.3,761.7 994.9,760.2 994.4,758.9 994,760.6 993.6,763.4 993.2,765.6 992.7,765.1 992.3,764.1 991.9,760.6 991.4,764.1 991,766.9 990.6,766.8 990.1,765.7 989.7,763.2 989.3,759.7 988.9,761.5 988.4,761.7 988,762.2 987.6,761.8 987.1,760.4 986.7,758.7 986.3,759.3 985.8,759.8 985.4,760.8 985,760.5 984.6,760.1 984.1,758.8 983.7,759.3 983.3,761.1 982.8,762.5 982.4,763 982,761.5 981.5,759.8 981.1,761.2 980.7,763.9 980.3,766 979.8,768.3 979.4,764.6 979,762.1 978.5,761.7 978.1,764 977.7,765.5 977.2,764.9 976.8,762.4 976.4,760.1 976,760.2 975.5,761 975.1,761.3 974.7,760.9 974.2,760.4 973.8,758.9 973.4,759 972.9,759.6 972.5,760.9 972.1,761 971.7,759.8 971.2,759.4 970.8,759.2 970.4,761 969.9,762.3 969.5,763.4 969.1,763.2 968.6,761.3 968.2,760.6 967.8,763.7 967.4,767.3 966.9,769 966.5,765 966.1,762.5 965.6,761.5 965.2,763.4 964.8,765.1 964.3,763 963.9,762.6 963.5,759.8 963.1,758.9 962.6,760.3 962.2,760.5 961.8,761.2 961.3,759.9 960.9,758.9 960.5,758.5 960,760.1 959.6,761.1 959.2,761.2 958.8,760.4 958.3,760.3 957.9,759.6 957.5,761.3 957,764.9 956.6,764.5 956.2,764.9 955.7,762.7 955.3,760.9 954.9,764 954.5,767.5 954,768 953.6,765.9 953.2,761.9 952.7,759.6 952.3,761.1 951.9,762.9 951.4,762.2 951,761.6 950.6,759.5 950.2,758.4 949.7,759.3 949.3,760.5 948.9,760.7 948.4,760.5 948,759.5 947.6,758.4 947.1,759.6 946.7,761.1 946.3,762.7 945.9,762.4 945.4,760.7 945,759.5 944.6,761.8 944.1,764.1 943.7,766.2 943.3,767.1 942.8,763.1 942.4,760.7 942,763.5 941.6,765.9 941.1,766.9 940.7,765.3 940.3,761.2 939.8,759.3 939.4,760.7 939,761.6 938.5,761.7 938.1,761 937.7,759.9 937.3,758.3 936.8,759.1 936.4,759.8 936,760.2 935.5,760.3 935.1,760 934.7,758.8 934.2,760.1 933.8,761.7 933.4,763.7 933,764.1 932.5,763 932.1,760.4 931.7,762.3 931.2,764.8 930.8,768.7 930.4,768 929.9,764.9 929.5,761.5 929.1,762.6 928.7,763.3 928.2,765 927.8,763.9 927.4,761 926.9,759.5 926.5,759.4 926.1,760.5 925.6,761.4 925.2,760.9 924.8,759.9 924.4,758.7 923.9,759 923.5,760.2 923.1,760.6 922.6,760.9 922.2,760.1 921.8,759.1 921.3,759.9 920.9,761.7 920.5,763.9 920.1,764.1 919.6,764.2 919.2,761.2 918.8,762 918.3,765.5 917.9,767.2 917.5,765.7 917,764.3 916.6,761 916.2,761.2 915.8,762.1 915.3,763.2 914.9,763.1 914.5,761.4 914,759.1 913.6,758.9 913.2,759.7 912.7,760.6 912.3,760.3 911.9,759.7 911.5,758.8 911,758.9 910.6,760.5 910.2,761.8 909.7,761.4 909.3,761.2 908.9,760.1 908.4,760.3 908,762.3 907.6,764.8 907.2,765.5 906.7,765.3 906.3,762.6 905.9,761.5 905.4,765 905,767.4 904.6,765.7 904.1,765 903.7,761.3 903.3,759.6 902.9,761 902.4,762.2 902,761.5 901.6,760.5 901.1,759.5 900.7,758.4 900.3,759.8 899.8,760.4 899.4,760.4 899,760.4 898.6,759.6 898.1,758.5 897.7,760.1 897.3,761.3 896.8,762.9 896.4,762.5 896,761.7 895.5,759.9 895.1,763.9 894.7,765.9 894.3,767.2 893.8,765.7 893.4,762.6 893,760.1 892.5,762.5 892.1,764.2 891.7,764.8 891.2,762.4 890.8,760.5 890.4,759 890,760.1 889.5,760.7 889.1,761 888.7,760.8 888.2,759.1 887.8,758.4 887.4,759.1 886.9,760.7 886.5,761.1 886.1,761.4 885.7,759.7 885.2,758.8 884.8,760.8 884.4,762.2 883.9,763.7 883.5,765.3 883.1,763.4 882.6,760.9 882.2,762.6 881.8,765.8 881.4,768.8 880.9,767.8 880.5,763.4 880.1,759.9 879.6,761.3 879.2,763.6 878.8,762.4 878.3,761.8 877.9,760.1 877.5,759 877.1,759.5 876.6,760.7 876.2,760.3 875.8,760.4 875.3,759.7 874.9,758.5 874.5,758.9 874,760.5 873.6,761.6 873.2,761.1 872.8,761.3 872.3,759.5 871.9,760.6 871.5,763.5 871,766.1 870.6,766.3 870.2,763.9 869.7,761.9 869.3,763.3 868.9,765.6 868.5,766.6 868,767 867.6,762.7 867.2,760.6 866.7,760.6 866.3,761.2 865.9,762.2 865.4,761.7 865,759.9 864.6,759 864.2,759 863.7,760 863.3,760.1 862.9,760.3 862.4,759.7 862,758.9 861.6,758.9 861.1,760.4 860.7,762.8 860.3,763.8 859.9,762.6 859.4,760.5 859,761.5 858.6,765.2 858.1,767.6 857.7,768.9 857.3,765.6 856.8,762.3 856.4,761.4 856,764.5 855.6,765.3 855.1,764.6 854.7,762.7 854.3,760 853.8,759.6 853.4,760.8 853,761.2 852.5,761 852.1,760.4 851.7,758.9 851.3,758.5 850.8,759.8 850.4,760.2 850,761.3 849.5,760.6 849.1,759.6 848.7,759.1 848.2,761.3 847.8,763.8 847.4,764.5 847,763.5 846.5,762.6 846.1,760.3 845.7,763.8 845.2,767 844.8,766.2 844.4,765.9 843.9,762.6 843.5,760.3 843.1,763.1 842.7,763.4 842.2,763.9 841.8,761.9 841.4,759.9 840.9,758.6 840.5,760.1 840.1,760.2 839.6,760.6 839.2,759.9 838.8,759.3 838.4,758.3 837.9,759.5 837.5,760.6 837.1,761.2 836.6,761.9 836.2,760.9 835.8,759.2 835.3,762.3 834.9,764.5 834.5,766.6 834.1,767.1 833.6,762.7 833.2,760.1 832.8,763.9 832.3,766 831.9,767.4 831.5,766.5 831,762.8 830.6,759.3 830.2,761.3 829.8,762.6 829.3,761.6 828.9,760.7 828.5,759.6 828,758.5 827.6,759.6 827.2,760.1 826.7,760.5 826.3,760.9 825.9,759.8 825.5,758.5 825,759.8 824.6,760.8 824.2,762.4 823.7,763.2 823.3,762.2 822.9,760.3 822.4,762.3 822,764.3 821.6,768.2 821.2,767.5 820.7,764.5 820.3,761.4 819.9,763.2 819.4,765.3 819,764.8 818.6,763.6 818.1,761.5 817.7,759.2 817.3,759.8 816.9,761.4 816.4,761.8 816,761.3" fill="#23180a"/><polygon points="816,778.6 816.4,778.1 816.9,778.4 817.3,779.8 817.7,780.2 818.1,778.4 818.6,776.7 819,775.8 819.4,775.4 819.9,777 820.3,778.4 820.7,776 821.2,773.6 821.6,773 822,776.2 822.4,777.8 822.9,779.4 823.3,777.8 823.7,777.1 824.2,777.7 824.6,778.9 825,779.7 825.5,780.8 825.9,779.7 826.3,778.9 826.7,779.2 827.2,779.6 827.6,779.9 828,780.8 828.5,780 828.9,779 829.3,778.3 829.8,777.5 830.2,778.5 830.6,780.2 831,777.3 831.5,774.4 831.9,773.7 832.3,774.8 832.8,776.5 833.2,779.5 833.6,777.5 834.1,773.9 834.5,774.4 834.9,776 835.3,777.8 835.8,780.3 836.2,778.9 836.6,778.1 837.1,778.7 837.5,779.2 837.9,780 838.4,780.9 838.8,780.2 839.2,779.6 839.6,779.1 840.1,779.4 840.5,779.5 840.9,780.7 841.4,779.7 841.8,778.1 842.2,776.5 842.7,776.9 843.1,777.1 843.5,779.4 843.9,777.6 844.4,774.9 844.8,774.6 845.2,774 845.7,776.6 846.1,779.3 846.5,777.5 847,776.8 847.4,776 847.8,776.6 848.2,778.6 848.7,780.4 849.1,779.9 849.5,779.1 850,778.6 850.4,779.4 850.8,779.8 851.3,780.8 851.7,780.5 852.1,779.3 852.5,778.8 853,778.6 853.4,779 853.8,779.9 854.3,779.6 854.7,777.5 855.1,775.9 855.6,775.3 856,776 856.4,778.5 856.8,777.8 857.3,775.1 857.7,772.5 858.1,773.5 858.6,775.4 859,778.4 859.4,779.2 859.9,777.5 860.3,776.6 860.7,777.4 861.1,779.3 861.6,780.5 862,780.4 862.4,779.9 862.9,779.3 863.3,779.5 863.7,779.6 864.2,780.4 864.6,780.4 865,779.7 865.4,778.3 865.9,777.8 866.3,778.7 866.7,779.1 867.2,779.1 867.6,777.4 868,774 868.5,774.4 868.9,775.1 869.3,776.9 869.7,778.1 870.2,776.4 870.6,774.6 871,774.7 871.5,776.8 871.9,779.2 872.3,780 872.8,778.5 873.2,778.7 873.6,778.4 874,779.2 874.5,780.5 874.9,780.8 875.3,779.8 875.8,779.3 876.2,779.4 876.6,779 877.1,780 877.5,780.4 877.9,779.6 878.3,778.2 878.8,777.7 879.2,776.7 879.6,778.5 880.1,779.7 880.5,776.8 880.9,773.4 881.4,772.6 881.8,775 882.2,777.5 882.6,778.9 883.1,776.9 883.5,775.4 883.9,776.6 884.4,777.9 884.8,779 885.2,780.5 885.7,779.8 886.1,778.5 886.5,778.7 886.9,779.1 887.4,780.3 887.8,780.9 888.2,780.3 888.7,779 889.1,778.8 889.5,779 890,779.5 890.4,780.4 890.8,779.2 891.2,777.7 891.7,775.8 892.1,776.2 892.5,777.6 893,779.5 893.4,777.5 893.8,775 894.3,773.9 894.7,774.9 895.1,776.5 895.5,779.7 896,778.3 896.4,777.6 896.8,777.3 897.3,778.5 897.7,779.5 898.1,780.8 898.6,780 899,779.3 899.4,779.3 899.8,779.3 900.3,779.8 900.7,780.9 901.1,780 901.6,779.2 902,778.4 902.4,777.8 902.9,778.8 903.3,779.9 903.7,778.6 904.1,775.6 904.6,775 905,773.7 905.4,775.6 905.9,778.4 906.3,777.6 906.7,775.4 907.2,775.2 907.6,775.8 908,777.8 908.4,779.4 908.9,779.5 909.3,778.7 909.7,778.5 910.2,778.2 910.6,779.2 911,780.5 911.5,780.5 911.9,779.8 912.3,779.3 912.7,779.2 913.2,779.8 913.6,780.5 914,780.3 914.5,778.5 914.9,777.1 915.3,777.1 915.8,777.9 916.2,778.6 916.6,778.8 917,776.2 917.5,775.1 917.9,773.9 918.3,775.2 918.8,778 919.2,778.6 919.6,776.2 920.1,776.4 920.5,776.5 920.9,778.2 921.3,779.7 921.8,780.3 922.2,779.5 922.6,778.9 923.1,779.1 923.5,779.5 923.9,780.4 924.4,780.6 924.8,779.7 925.2,778.9 925.6,778.5 926.1,779.2 926.5,780.1 926.9,780 927.4,778.8 927.8,776.5 928.2,775.6 928.7,777 929.1,777.5 929.5,778.4 929.9,775.7 930.4,773.2 930.8,772.7 931.2,775.8 931.7,777.7 932.1,779.3 932.5,777.2 933,776.3 933.4,776.7 933.8,778.2 934.2,779.5 934.7,780.6 935.1,779.6 935.5,779.3 936,779.4 936.4,779.7 936.8,780.3 937.3,780.9 937.7,779.6 938.1,778.8 938.5,778.2 939,778.3 939.4,779.1 939.8,780.2 940.3,778.6 940.7,775.4 941.1,774.1 941.6,774.9 942,776.8 942.4,779 942.8,777.2 943.3,773.9 943.7,774.7 944.1,776.3 944.6,778.2 945,780 945.4,779 945.9,777.7 946.3,777.5 946.7,778.7 947.1,779.9 947.6,780.9 948,780 948.4,779.2 948.9,779.1 949.3,779.2 949.7,780.2 950.2,780.9 950.6,780 951,778.3 951.4,777.8 951.9,777.3 952.3,778.7 952.7,780 953.2,778.1 953.6,774.9 954,773.2 954.5,773.6 954.9,776.4 955.3,778.9 955.7,777.5 956.2,775.7 956.6,776 957,775.7 957.5,778.6 957.9,779.9 958.3,779.4 958.8,779.3 959.2,778.7 959.6,778.7 960,779.5 960.5,780.8 960.9,780.5 961.3,779.7 961.8,778.6 962.2,779.2 962.6,779.4 963.1,780.5 963.5,779.7 963.9,777.5 964.3,777.2 964.8,775.5 965.2,776.9 965.6,778.4 966.1,777.6 966.5,775.6 966.9,772.4 967.4,773.8 967.8,776.7 968.2,779.1 968.6,778.6 969.1,777.1 969.5,776.9 969.9,777.8 970.4,778.8 970.8,780.3 971.2,780.1 971.7,779.8 972.1,778.8 972.5,778.9 972.9,780 973.4,780.4 973.8,780.5 974.2,779.3 974.7,778.9 975.1,778.5 975.5,778.8 976,779.4 976.4,779.6 976.8,777.6 977.2,775.7 977.7,775.2 978.1,776.4 978.5,778.3 979,777.9 979.4,776 979.8,772.9 980.3,774.8 980.7,776.5 981.1,778.6 981.5,779.8 982,778.4 982.4,777.2 982.8,777.6 983.3,778.7 983.7,780.1 984.1,780.5 984.6,779.6 985,779.2 985.4,779 985.8,779.8 986.3,780.1 986.7,780.7 987.1,779.3 987.6,778.1 988,777.9 988.4,778.3 988.9,778.4 989.3,779.8 989.7,777.1 990.1,775 990.6,774.2 991,774.1 991.4,776.3 991.9,779.1 992.3,776.3 992.7,775.5 993.2,775.1 993.6,776.9 994,779.1 994.4,780.5 994.9,779.4 995.3,778.2 995.7,778.6 996.2,779.4 996.6,779.9 997,780.8 997.5,780.1 997.9,779.6 998.3,779.2 998.7,779.4 999.2,779.9 999.6,780.8 1000,779.5 1000.5,778 1000.9,776.4 1001.3,775.8 1001.8,777.3 1002.2,779.6 1002.6,777.1 1003,774.3 1003.5,773.6 1003.9,774.6 1004.3,777.3 1004.8,779.6 1005.2,777.2 1005.6,777.1 1006.1,776.5 1006.5,777.4 1006.9,778.8 1007.3,780.7 1007.8,780 1008.2,779.4 1008.5,779 1008.5,785.8 1008.2,785.4 1007.8,784.8 1007.3,784.1 1006.9,786 1006.5,787.4 1006.1,788.3 1005.6,787.7 1005.2,787.6 1004.8,785.2 1004.3,787.5 1003.9,790.2 1003.5,791.2 1003,790.5 1002.6,787.7 1002.2,785.2 1001.8,787.5 1001.3,789 1000.9,788.4 1000.5,786.8 1000,785.3 999.6,784 999.2,784.9 998.7,785.4 998.3,785.6 997.9,785.2 997.5,784.7 997,784 996.6,784.9 996.2,785.4 995.7,786.2 995.3,786.6 994.9,785.4 994.4,784.3 994,785.7 993.6,787.9 993.2,789.7 992.7,789.3 992.3,788.5 991.9,785.7 991.4,788.5 991,790.7 990.6,790.6 990.1,789.8 989.7,787.7 989.3,785 988.9,786.4 988.4,786.5 988,786.9 987.6,786.7 987.1,785.5 986.7,784.1 986.3,784.7 985.8,785 985.4,785.8 985,785.6 984.6,785.2 984.1,784.3 983.7,784.7 983.3,786.1 982.8,787.2 982.4,787.6 982,786.4 981.5,785 981.1,786.2 980.7,788.3 980.3,790 979.8,791.9 979.4,788.8 979,786.9 978.5,786.5 978.1,788.4 977.7,789.6 977.2,789.1 976.8,787.2 976.4,785.2 976,785.4 975.5,786 975.1,786.3 974.7,785.9 974.2,785.5 973.8,784.3 973.4,784.4 972.9,784.8 972.5,785.9 972.1,786 971.7,785 971.2,784.7 970.8,784.5 970.4,786 969.9,787 969.5,787.9 969.1,787.7 968.6,786.2 968.2,785.7 967.8,788.1 967.4,791 966.9,792.4 966.5,789.2 966.1,787.2 965.6,786.4 965.2,787.9 964.8,789.3 964.3,787.6 963.9,787.3 963.5,785.1 963.1,784.3 962.6,785.4 962.2,785.6 961.8,786.2 961.3,785.1 960.9,784.3 960.5,784 960,785.3 959.6,786.1 959.2,786.1 958.8,785.5 958.3,785.4 957.9,784.9 957.5,786.2 957,789.1 956.6,788.8 956.2,789.1 955.7,787.3 955.3,785.9 954.9,788.4 954.5,791.2 954,791.6 953.6,789.9 953.2,786.7 952.7,784.8 952.3,786.1 951.9,787.5 951.4,787 951,786.5 950.6,784.8 950.2,783.9 949.7,784.6 949.3,785.6 948.9,785.7 948.4,785.6 948,784.8 947.6,783.9 947.1,784.9 946.7,786.1 946.3,787.3 945.9,787.1 945.4,785.8 945,784.8 944.6,786.6 944.1,788.5 943.7,790.1 943.3,790.9 942.8,787.6 942.4,785.8 942,788 941.6,789.9 941.1,790.7 940.7,789.4 940.3,786.2 939.8,784.6 939.4,785.7 939,786.5 938.5,786.6 938.1,786 937.7,785.2 937.3,783.9 936.8,784.5 936.4,785.1 936,785.4 935.5,785.5 935.1,785.2 934.7,784.2 934.2,785.3 933.8,786.6 933.4,788.1 933,788.5 932.5,787.6 932.1,785.5 931.7,787.1 931.2,789 930.8,792.1 930.4,791.6 929.9,789.1 929.5,786.4 929.1,787.3 928.7,787.8 928.2,789.2 927.8,788.3 927.4,786 926.9,784.8 926.5,784.7 926.1,785.6 925.6,786.3 925.2,785.9 924.8,785.1 924.4,784.2 923.9,784.4 923.5,785.3 923.1,785.7 922.6,785.9 922.2,785.3 921.8,784.5 921.3,785.1 920.9,786.6 920.5,788.3 920.1,788.4 919.6,788.6 919.2,786.2 918.8,786.8 918.3,789.6 917.9,790.9 917.5,789.7 917,788.6 916.6,786 916.2,786.2 915.8,786.9 915.3,787.7 914.9,787.7 914.5,786.3 914,784.5 913.6,784.3 913.2,785 912.7,785.6 912.3,785.5 911.9,785 911.5,784.3 911,784.3 910.6,785.6 910.2,786.6 909.7,786.3 909.3,786.1 908.9,785.3 908.4,785.4 908,787 907.6,789 907.2,789.6 906.7,789.4 906.3,787.2 905.9,786.4 905.4,789.2 905,791.1 904.6,789.8 904.1,789.2 903.7,786.2 903.3,784.9 902.9,786 902.4,787 902,786.4 901.6,785.6 901.1,784.8 900.7,783.9 900.3,785 899.8,785.5 899.4,785.5 899,785.5 898.6,784.8 898.1,784 897.7,785.3 897.3,786.3 896.8,787.5 896.4,787.2 896,786.5 895.5,785.1 895.1,788.3 894.7,789.9 894.3,790.9 893.8,789.8 893.4,787.3 893,785.3 892.5,787.2 892.1,788.6 891.7,789 891.2,787.1 890.8,785.6 890.4,784.4 890,785.3 889.5,785.8 889.1,786 888.7,785.8 888.2,784.5 887.8,783.9 887.4,784.5 886.9,785.7 886.5,786.1 886.1,786.3 885.7,785 885.2,784.3 884.8,785.8 884.4,786.9 883.9,788.2 883.5,789.4 883.1,787.9 882.6,785.9 882.2,787.3 881.8,789.8 881.4,792.2 880.9,791.4 880.5,788 880.1,785.1 879.6,786.3 879.2,788.1 878.8,787.1 878.3,786.6 877.9,785.2 877.5,784.4 877.1,784.8 876.6,785.8 876.2,785.4 875.8,785.5 875.3,785 874.9,784 874.5,784.3 874,785.6 873.6,786.4 873.2,786.1 872.8,786.3 872.3,784.8 871.9,785.6 871.5,788 871,790.1 870.6,790.2 870.2,788.4 869.7,786.7 869.3,787.9 868.9,789.7 868.5,790.4 868,790.8 867.6,787.4 867.2,785.7 866.7,785.7 866.3,786.1 865.9,787 865.4,786.5 865,785.1 864.6,784.4 864.2,784.4 863.7,785.2 863.3,785.3 862.9,785.5 862.4,784.9 862,784.4 861.6,784.3 861.1,785.5 860.7,787.4 860.3,788.2 859.9,787.3 859.4,785.6 859,786.4 858.6,789.4 858.1,791.3 857.7,792.3 857.3,789.7 856.8,787 856.4,786.3 856,788.8 855.6,789.5 855.1,788.9 854.7,787.3 854.3,785.2 853.8,784.9 853.4,785.8 853,786.2 852.5,786 852.1,785.5 851.7,784.3 851.3,784 850.8,785 850.4,785.4 850,786.2 849.5,785.7 849.1,784.9 848.7,784.4 848.2,786.2 847.8,788.2 847.4,788.8 847,788 846.5,787.3 846.1,785.5 845.7,788.2 845.2,790.8 844.8,790.2 844.4,789.9 843.9,787.2 843.5,785.4 843.1,787.7 842.7,787.9 842.2,788.3 841.8,786.7 841.4,785.1 840.9,784.1 840.5,785.3 840.1,785.4 839.6,785.7 839.2,785.2 838.8,784.6 838.4,783.9 837.9,784.8 837.5,785.6 837.1,786.1 836.6,786.7 836.2,785.9 835.8,784.5 835.3,787 834.9,788.8 834.5,790.4 834.1,790.9 833.6,787.3 833.2,785.3 832.8,788.3 832.3,790 831.9,791.1 831.5,790.4 831,787.5 830.6,784.6 830.2,786.3 829.8,787.3 829.3,786.5 828.9,785.8 828.5,784.8 828,784 827.6,784.9 827.2,785.2 826.7,785.6 826.3,785.9 825.9,785.1 825.5,784 825,785.1 824.6,785.9 824.2,787.1 823.7,787.7 823.3,787 822.9,785.4 822.4,787 822,788.6 821.6,791.8 821.2,791.2 820.7,788.8 820.3,786.4 819.9,787.8 819.4,789.4 819,789 818.6,788.1 818.1,786.4 817.7,784.6 817.3,785 816.9,786.4 816.4,786.7 816,786.2" fill="#23180a"/></svg><div style="left:230px;top:797px;width:195px;height:17px;background:#14b828;border-bottom:1px solid #0f8f1f;border-left:1px solid #109320;"><span class="cn" style="left:3px;top:1px;color:rgba(0,0,0,0.82);font-size:9.8px;">TA_TTS_TB_FX_ONESHOT_ARTIFACTS_A</span></div><div style="left:424px;top:797px;width:1px;height:69px;background:#0e801c;"></div><div style="left:815px;top:797px;width:194px;height:17px;background:#14b828;border-bottom:1px solid #0f8f1f;border-left:1px solid #109320;"><span class="cn" style="left:3px;top:1px;color:rgba(0,0,0,0.82);font-size:9.8px;">TA_TTS_TB_FX_ONESHOT_ARTIFACTS_A</span></div><div style="left:1008px;top:797px;width:1px;height:69px;background:#0e801c;"></div><svg width="1414" height="69" viewBox="35 797 1414 69" style="left:35px;top:797px"><g fill="#07200a"><polygon points="231,826.7 233.5,826.7 236,826.7 238.5,826.7 241,826.7 243.5,826.7 246,826.6 248.5,826.6 251,826.6 253.5,826.7 256,826.6 258.5,826.5 261,826.5 263.5,826.5 266,826.6 268.5,826.4 271,826.3 273.5,826.3 276,826.3 278.5,826.5 281,826.2 283.5,825.9 286,825.8 288.5,825.9 290,826.1 291,826.3 291.9,826.2 292.8,826.1 293.7,825.8 294.6,825.8 295.5,825.5 296.4,825.5 297.3,825.5 298.2,825.5 299.1,825.5 300,825.4 300.9,825.5 301.8,825.8 302.7,825.9 303.6,826.1 304.5,826 305.4,825.8 306.3,825.6 307.2,825.3 308.1,825.3 309,825.1 309.9,824.9 310.8,824.7 311.7,824.8 312.6,824.8 313.5,825.1 314.4,825.3 315.3,825.6 316.2,825.7 317.1,825.7 318,825.4 318.9,825.2 319.8,824.8 320.7,824.4 321.6,824.4 322.5,824.4 323.4,824.1 324.3,823.9 325.2,824.5 326.1,824.7 327,824.8 327.9,825.1 328.8,825.5 329.7,825.5 330.6,824.8 331.5,824.3 332.4,824.1 333.3,824 334.2,823.2 335.1,823.6 336,823.1 336.9,823.6 337.8,823.8 338.7,823.6 339.6,824.2 340.5,824.3 341.4,825.2 342.3,825.2 343.2,824.5 344.1,823.9 345,823.2 345.9,822.6 346.8,823 347.7,822.6 348.6,822.7 349.5,822 350.4,823 351.3,823.4 352.2,823.8 353.1,824.1 354,824.6 354.9,824.4 355.8,823.6 356.7,822.6 357.6,822 358.5,822.2 359.4,822 360.3,820.9 361.2,821 362.1,822 363,821.5 363.9,822.2 364.8,822.8 365.7,823.5 366.6,824.5 367.5,824.4 368.4,823.3 369.3,822.4 370.2,820.9 371.1,821.5 372,819.8 372.9,820.7 373.8,820.4 374.7,819.8 375.6,820.1 376.5,821.2 377.4,822.3 378.3,822.7 379.2,823.9 380.1,823.3 381,822.7 381.9,821.5 382.8,819.8 383.7,820.5 384.6,819.4 385.5,818.3 386.4,818.3 387.3,819.8 388.2,820.2 389.1,820.7 390,820.2 390.9,822.1 391.8,823 392.7,822.6 393.6,821.7 394.5,820.6 395.4,818.4 396.3,818.2 397.2,818.3 398.1,817 399,817.8 399.9,818.1 400.8,819 401.7,818.2 402.6,819 403.5,820.8 404.4,822.2 405.3,822.8 406.2,821 407.1,819.2 408,817 408.9,815.9 409.8,816.6 410.7,816.5 411.6,816 412.5,816 413.4,815.5 414.3,818.1 415.2,817.9 416.1,819.6 417,821.5 417.9,821.3 418.8,819.4 419.7,818.3 420.6,816.9 421.5,815.8 422.4,813.8 423.3,815.4 424.2,815 424.4,813.3 424.4,841.1 424.2,839.4 423.3,839 422.4,840.6 421.5,838.6 420.6,837.5 419.7,836.1 418.8,835 417.9,833.1 417,832.9 416.1,834.8 415.2,836.5 414.3,836.3 413.4,838.9 412.5,838.4 411.6,838.4 410.7,837.9 409.8,837.8 408.9,838.5 408,837.4 407.1,835.2 406.2,833.4 405.3,831.6 404.4,832.2 403.5,833.6 402.6,835.4 401.7,836.2 400.8,835.4 399.9,836.3 399,836.6 398.1,837.4 397.2,836.1 396.3,836.2 395.4,836 394.5,833.8 393.6,832.7 392.7,831.8 391.8,831.4 390.9,832.3 390,834.2 389.1,833.7 388.2,834.2 387.3,834.6 386.4,836.1 385.5,836.1 384.6,835 383.7,833.9 382.8,834.6 381.9,832.9 381,831.7 380.1,831.1 379.2,830.5 378.3,831.7 377.4,832.1 376.5,833.2 375.6,834.3 374.7,834.6 373.8,834 372.9,833.7 372,834.6 371.1,832.9 370.2,833.5 369.3,832 368.4,831.1 367.5,830 366.6,829.9 365.7,830.9 364.8,831.6 363.9,832.2 363,832.9 362.1,832.4 361.2,833.4 360.3,833.5 359.4,832.4 358.5,832.2 357.6,832.4 356.7,831.8 355.8,830.8 354.9,830 354,829.8 353.1,830.3 352.2,830.6 351.3,831 350.4,831.4 349.5,832.4 348.6,831.7 347.7,831.8 346.8,831.4 345.9,831.8 345,831.2 344.1,830.5 343.2,829.9 342.3,829.2 341.4,829.2 340.5,830.1 339.6,830.2 338.7,830.8 337.8,830.6 336.9,830.8 336,831.3 335.1,830.8 334.2,831.2 333.3,830.4 332.4,830.3 331.5,830.1 330.6,829.6 329.7,828.9 328.8,828.9 327.9,829.3 327,829.6 326.1,829.7 325.2,829.9 324.3,830.5 323.4,830.3 322.5,830 321.6,830 320.7,830 319.8,829.6 318.9,829.2 318,829 317.1,828.7 316.2,828.7 315.3,828.8 314.4,829.1 313.5,829.3 312.6,829.6 311.7,829.6 310.8,829.7 309.9,829.5 309,829.3 308.1,829.1 307.2,829.1 306.3,828.8 305.4,828.6 304.5,828.4 303.6,828.3 302.7,828.5 301.8,828.6 300.9,828.9 300,829 299.1,828.9 298.2,828.9 297.3,828.9 296.4,828.9 295.5,828.9 294.6,828.6 293.7,828.6 292.8,828.3 291.9,828.2 291,828.1 290,828.3 288.5,828.5 286,828.6 283.5,828.5 281,828.2 278.5,827.9 276,828.1 273.5,828.1 271,828.1 268.5,828 266,827.8 263.5,827.9 261,827.9 258.5,827.9 256,827.8 253.5,827.7 251,827.8 248.5,827.8 246,827.8 243.5,827.7 241,827.7 238.5,827.7 236,827.7 233.5,827.7 231,827.7"/><polygon points="231,852.7 233.5,852.7 236,852.7 238.5,852.7 241,852.7 243.5,852.7 246,852.7 248.5,852.6 251,852.6 253.5,852.7 256,852.6 258.5,852.5 261,852.5 263.5,852.5 266,852.6 268.5,852.4 271,852.4 273.5,852.3 276,852.3 278.5,852.5 281,852.2 283.5,852 286,851.9 288.5,852 290,852.1 291,852.3 291.9,852.3 292.8,852.2 293.7,851.9 294.6,851.9 295.5,851.6 296.4,851.6 297.3,851.6 298.2,851.6 299.1,851.6 300,851.5 300.9,851.6 301.8,851.9 302.7,852 303.6,852.1 304.5,852.1 305.4,851.9 306.3,851.7 307.2,851.4 308.1,851.4 309,851.2 309.9,851.1 310.8,850.8 311.7,851 312.6,850.9 313.5,851.2 314.4,851.4 315.3,851.7 316.2,851.8 317.1,851.8 318,851.5 318.9,851.3 319.8,850.9 320.7,850.6 321.6,850.6 322.5,850.6 323.4,850.3 324.3,850.2 325.2,850.6 326.1,850.9 327,851 327.9,851.2 328.8,851.6 329.7,851.6 330.6,850.9 331.5,850.5 332.4,850.3 333.3,850.2 334.2,849.5 335.1,849.8 336,849.4 336.9,849.9 337.8,850 338.7,849.8 339.6,850.4 340.5,850.5 341.4,851.3 342.3,851.3 343.2,850.7 344.1,850.1 345,849.5 345.9,848.9 346.8,849.3 347.7,848.9 348.6,849 349.5,848.4 350.4,849.3 351.3,849.6 352.2,850 353.1,850.3 354,850.7 354.9,850.6 355.8,849.9 356.7,849 357.6,848.4 358.5,848.6 359.4,848.4 360.3,847.3 361.2,847.5 362.1,848.4 363,847.9 363.9,848.6 364.8,849.1 365.7,849.7 366.6,850.7 367.5,850.6 368.4,849.6 369.3,848.7 370.2,847.4 371.1,847.9 372,846.4 372.9,847.2 373.8,846.9 374.7,846.3 375.6,846.6 376.5,847.6 377.4,848.6 378.3,849 379.2,850.1 380.1,849.5 381,849 381.9,847.9 382.8,846.4 383.7,847 384.6,846 385.5,845 386.4,845 387.3,846.4 388.2,846.7 389.1,847.1 390,846.7 390.9,848.5 391.8,849.3 392.7,848.9 393.6,848.1 394.5,847.1 395.4,845.1 396.3,844.9 397.2,845 398.1,843.8 399,844.5 399.9,844.7 400.8,845.6 401.7,844.9 402.6,845.6 403.5,847.2 404.4,848.5 405.3,849.1 406.2,847.4 407.1,845.8 408,843.7 408.9,842.8 409.8,843.4 410.7,843.3 411.6,842.8 412.5,842.9 413.4,842.4 414.3,844.8 415.2,844.6 416.1,846.2 417,848 417.9,847.7 418.8,846 419.7,844.9 420.6,843.7 421.5,842.7 422.4,840.8 423.3,842.3 424.2,841.9 424.4,840.4 424.4,866 424.2,864.5 423.3,864.1 422.4,865.6 421.5,863.7 420.6,862.7 419.7,861.5 418.8,860.4 417.9,858.7 417,858.4 416.1,860.2 415.2,861.8 414.3,861.6 413.4,864 412.5,863.5 411.6,863.6 410.7,863.1 409.8,863 408.9,863.6 408,862.7 407.1,860.6 406.2,859 405.3,857.3 404.4,857.9 403.5,859.2 402.6,860.8 401.7,861.5 400.8,860.8 399.9,861.7 399,861.9 398.1,862.6 397.2,861.4 396.3,861.5 395.4,861.3 394.5,859.3 393.6,858.3 392.7,857.5 391.8,857.1 390.9,857.9 390,859.7 389.1,859.3 388.2,859.7 387.3,860 386.4,861.4 385.5,861.4 384.6,860.4 383.7,859.4 382.8,860 381.9,858.5 381,857.4 380.1,856.9 379.2,856.3 378.3,857.4 377.4,857.8 376.5,858.8 375.6,859.8 374.7,860.1 373.8,859.5 372.9,859.2 372,860 371.1,858.5 370.2,859 369.3,857.7 368.4,856.8 367.5,855.8 366.6,855.7 365.7,856.7 364.8,857.3 363.9,857.8 363,858.5 362.1,858 361.2,858.9 360.3,859.1 359.4,858 358.5,857.8 357.6,858 356.7,857.4 355.8,856.5 354.9,855.8 354,855.7 353.1,856.1 352.2,856.4 351.3,856.8 350.4,857.1 349.5,858 348.6,857.4 347.7,857.5 346.8,857.1 345.9,857.5 345,856.9 344.1,856.3 343.2,855.7 342.3,855.1 341.4,855.1 340.5,855.9 339.6,856 338.7,856.6 337.8,856.4 336.9,856.5 336,857 335.1,856.6 334.2,856.9 333.3,856.2 332.4,856.1 331.5,855.9 330.6,855.5 329.7,854.8 328.8,854.8 327.9,855.2 327,855.4 326.1,855.5 325.2,855.8 324.3,856.2 323.4,856.1 322.5,855.8 321.6,855.8 320.7,855.8 319.8,855.5 318.9,855.1 318,854.9 317.1,854.6 316.2,854.6 315.3,854.7 314.4,855 313.5,855.2 312.6,855.5 311.7,855.4 310.8,855.6 309.9,855.3 309,855.2 308.1,855 307.2,855 306.3,854.7 305.4,854.5 304.5,854.3 303.6,854.3 302.7,854.4 301.8,854.5 300.9,854.8 300,854.9 299.1,854.8 298.2,854.8 297.3,854.8 296.4,854.8 295.5,854.8 294.6,854.5 293.7,854.5 292.8,854.2 291.9,854.1 291,854.1 290,854.3 288.5,854.4 286,854.5 283.5,854.4 281,854.2 278.5,853.9 276,854.1 273.5,854.1 271,854 268.5,854 266,853.8 263.5,853.9 261,853.9 258.5,853.9 256,853.8 253.5,853.7 251,853.8 248.5,853.8 246,853.7 243.5,853.7 241,853.7 238.5,853.7 236,853.7 233.5,853.7 231,853.7"/></g><g fill="#07200a"><polygon points="816,826.7 818.5,826.7 821,826.7 823.5,826.7 826,826.7 828.5,826.7 831,826.6 833.5,826.6 836,826.6 838.5,826.7 841,826.6 843.5,826.5 846,826.5 848.5,826.5 851,826.6 853.5,826.4 856,826.3 858.5,826.3 861,826.3 863.5,826.5 866,826.2 868.5,825.9 871,825.8 873.5,825.9 875,826.1 876,826.3 876.9,826.2 877.8,826.1 878.7,825.8 879.6,825.8 880.5,825.5 881.4,825.5 882.3,825.5 883.2,825.5 884.1,825.5 885,825.4 885.9,825.5 886.8,825.8 887.7,825.9 888.6,826.1 889.5,826 890.4,825.8 891.3,825.6 892.2,825.3 893.1,825.3 894,825.1 894.9,824.9 895.8,824.7 896.7,824.8 897.6,824.8 898.5,825.1 899.4,825.3 900.3,825.6 901.2,825.7 902.1,825.7 903,825.4 903.9,825.2 904.8,824.8 905.7,824.4 906.6,824.4 907.5,824.4 908.4,824.1 909.3,823.9 910.2,824.5 911.1,824.7 912,824.8 912.9,825.1 913.8,825.5 914.7,825.5 915.6,824.8 916.5,824.3 917.4,824.1 918.3,824 919.2,823.2 920.1,823.6 921,823.1 921.9,823.6 922.8,823.8 923.7,823.6 924.6,824.2 925.5,824.3 926.4,825.2 927.3,825.2 928.2,824.5 929.1,823.9 930,823.2 930.9,822.6 931.8,823 932.7,822.6 933.6,822.7 934.5,822 935.4,823 936.3,823.4 937.2,823.8 938.1,824.1 939,824.6 939.9,824.4 940.8,823.6 941.7,822.6 942.6,822 943.5,822.2 944.4,822 945.3,820.9 946.2,821 947.1,822 948,821.5 948.9,822.2 949.8,822.8 950.7,823.5 951.6,824.5 952.5,824.4 953.4,823.3 954.3,822.4 955.2,820.9 956.1,821.5 957,819.8 957.9,820.7 958.8,820.4 959.7,819.8 960.6,820.1 961.5,821.2 962.4,822.3 963.3,822.7 964.2,823.9 965.1,823.3 966,822.7 966.9,821.5 967.8,819.8 968.7,820.5 969.6,819.4 970.5,818.3 971.4,818.3 972.3,819.8 973.2,820.2 974.1,820.7 975,820.2 975.9,822.1 976.8,823 977.7,822.6 978.6,821.7 979.5,820.6 980.4,818.4 981.3,818.2 982.2,818.3 983.1,817 984,817.8 984.9,818.1 985.8,819 986.7,818.2 987.6,819 988.5,820.8 989.4,822.2 990.3,822.8 991.2,821 992.1,819.2 993,817 993.9,815.9 994.8,816.6 995.7,816.5 996.6,816 997.5,816 998.4,815.5 999.3,818.1 1000.2,817.9 1001.1,819.6 1002,821.5 1002.9,821.3 1003.8,819.4 1004.7,818.3 1005.6,816.9 1006.5,815.8 1007.4,813.8 1008.3,815.4 1009.2,815 1009.4,813.3 1009.4,841.1 1009.2,839.4 1008.3,839 1007.4,840.6 1006.5,838.6 1005.6,837.5 1004.7,836.1 1003.8,835 1002.9,833.1 1002,832.9 1001.1,834.8 1000.2,836.5 999.3,836.3 998.4,838.9 997.5,838.4 996.6,838.4 995.7,837.9 994.8,837.8 993.9,838.5 993,837.4 992.1,835.2 991.2,833.4 990.3,831.6 989.4,832.2 988.5,833.6 987.6,835.4 986.7,836.2 985.8,835.4 984.9,836.3 984,836.6 983.1,837.4 982.2,836.1 981.3,836.2 980.4,836 979.5,833.8 978.6,832.7 977.7,831.8 976.8,831.4 975.9,832.3 975,834.2 974.1,833.7 973.2,834.2 972.3,834.6 971.4,836.1 970.5,836.1 969.6,835 968.7,833.9 967.8,834.6 966.9,832.9 966,831.7 965.1,831.1 964.2,830.5 963.3,831.7 962.4,832.1 961.5,833.2 960.6,834.3 959.7,834.6 958.8,834 957.9,833.7 957,834.6 956.1,832.9 955.2,833.5 954.3,832 953.4,831.1 952.5,830 951.6,829.9 950.7,830.9 949.8,831.6 948.9,832.2 948,832.9 947.1,832.4 946.2,833.4 945.3,833.5 944.4,832.4 943.5,832.2 942.6,832.4 941.7,831.8 940.8,830.8 939.9,830 939,829.8 938.1,830.3 937.2,830.6 936.3,831 935.4,831.4 934.5,832.4 933.6,831.7 932.7,831.8 931.8,831.4 930.9,831.8 930,831.2 929.1,830.5 928.2,829.9 927.3,829.2 926.4,829.2 925.5,830.1 924.6,830.2 923.7,830.8 922.8,830.6 921.9,830.8 921,831.3 920.1,830.8 919.2,831.2 918.3,830.4 917.4,830.3 916.5,830.1 915.6,829.6 914.7,828.9 913.8,828.9 912.9,829.3 912,829.6 911.1,829.7 910.2,829.9 909.3,830.5 908.4,830.3 907.5,830 906.6,830 905.7,830 904.8,829.6 903.9,829.2 903,829 902.1,828.7 901.2,828.7 900.3,828.8 899.4,829.1 898.5,829.3 897.6,829.6 896.7,829.6 895.8,829.7 894.9,829.5 894,829.3 893.1,829.1 892.2,829.1 891.3,828.8 890.4,828.6 889.5,828.4 888.6,828.3 887.7,828.5 886.8,828.6 885.9,828.9 885,829 884.1,828.9 883.2,828.9 882.3,828.9 881.4,828.9 880.5,828.9 879.6,828.6 878.7,828.6 877.8,828.3 876.9,828.2 876,828.1 875,828.3 873.5,828.5 871,828.6 868.5,828.5 866,828.2 863.5,827.9 861,828.1 858.5,828.1 856,828.1 853.5,828 851,827.8 848.5,827.9 846,827.9 843.5,827.9 841,827.8 838.5,827.7 836,827.8 833.5,827.8 831,827.8 828.5,827.7 826,827.7 823.5,827.7 821,827.7 818.5,827.7 816,827.7"/><polygon points="816,852.7 818.5,852.7 821,852.7 823.5,852.7 826,852.7 828.5,852.7 831,852.7 833.5,852.6 836,852.6 838.5,852.7 841,852.6 843.5,852.5 846,852.5 848.5,852.5 851,852.6 853.5,852.4 856,852.4 858.5,852.3 861,852.3 863.5,852.5 866,852.2 868.5,852 871,851.9 873.5,852 875,852.1 876,852.3 876.9,852.3 877.8,852.2 878.7,851.9 879.6,851.9 880.5,851.6 881.4,851.6 882.3,851.6 883.2,851.6 884.1,851.6 885,851.5 885.9,851.6 886.8,851.9 887.7,852 888.6,852.1 889.5,852.1 890.4,851.9 891.3,851.7 892.2,851.4 893.1,851.4 894,851.2 894.9,851.1 895.8,850.8 896.7,851 897.6,850.9 898.5,851.2 899.4,851.4 900.3,851.7 901.2,851.8 902.1,851.8 903,851.5 903.9,851.3 904.8,850.9 905.7,850.6 906.6,850.6 907.5,850.6 908.4,850.3 909.3,850.2 910.2,850.6 911.1,850.9 912,851 912.9,851.2 913.8,851.6 914.7,851.6 915.6,850.9 916.5,850.5 917.4,850.3 918.3,850.2 919.2,849.5 920.1,849.8 921,849.4 921.9,849.9 922.8,850 923.7,849.8 924.6,850.4 925.5,850.5 926.4,851.3 927.3,851.3 928.2,850.7 929.1,850.1 930,849.5 930.9,848.9 931.8,849.3 932.7,848.9 933.6,849 934.5,848.4 935.4,849.3 936.3,849.6 937.2,850 938.1,850.3 939,850.7 939.9,850.6 940.8,849.9 941.7,849 942.6,848.4 943.5,848.6 944.4,848.4 945.3,847.3 946.2,847.5 947.1,848.4 948,847.9 948.9,848.6 949.8,849.1 950.7,849.7 951.6,850.7 952.5,850.6 953.4,849.6 954.3,848.7 955.2,847.4 956.1,847.9 957,846.4 957.9,847.2 958.8,846.9 959.7,846.3 960.6,846.6 961.5,847.6 962.4,848.6 963.3,849 964.2,850.1 965.1,849.5 966,849 966.9,847.9 967.8,846.4 968.7,847 969.6,846 970.5,845 971.4,845 972.3,846.4 973.2,846.7 974.1,847.1 975,846.7 975.9,848.5 976.8,849.3 977.7,848.9 978.6,848.1 979.5,847.1 980.4,845.1 981.3,844.9 982.2,845 983.1,843.8 984,844.5 984.9,844.7 985.8,845.6 986.7,844.9 987.6,845.6 988.5,847.2 989.4,848.5 990.3,849.1 991.2,847.4 992.1,845.8 993,843.7 993.9,842.8 994.8,843.4 995.7,843.3 996.6,842.8 997.5,842.9 998.4,842.4 999.3,844.8 1000.2,844.6 1001.1,846.2 1002,848 1002.9,847.7 1003.8,846 1004.7,844.9 1005.6,843.7 1006.5,842.7 1007.4,840.8 1008.3,842.3 1009.2,841.9 1009.4,840.4 1009.4,866 1009.2,864.5 1008.3,864.1 1007.4,865.6 1006.5,863.7 1005.6,862.7 1004.7,861.5 1003.8,860.4 1002.9,858.7 1002,858.4 1001.1,860.2 1000.2,861.8 999.3,861.6 998.4,864 997.5,863.5 996.6,863.6 995.7,863.1 994.8,863 993.9,863.6 993,862.7 992.1,860.6 991.2,859 990.3,857.3 989.4,857.9 988.5,859.2 987.6,860.8 986.7,861.5 985.8,860.8 984.9,861.7 984,861.9 983.1,862.6 982.2,861.4 981.3,861.5 980.4,861.3 979.5,859.3 978.6,858.3 977.7,857.5 976.8,857.1 975.9,857.9 975,859.7 974.1,859.3 973.2,859.7 972.3,860 971.4,861.4 970.5,861.4 969.6,860.4 968.7,859.4 967.8,860 966.9,858.5 966,857.4 965.1,856.9 964.2,856.3 963.3,857.4 962.4,857.8 961.5,858.8 960.6,859.8 959.7,860.1 958.8,859.5 957.9,859.2 957,860 956.1,858.5 955.2,859 954.3,857.7 953.4,856.8 952.5,855.8 951.6,855.7 950.7,856.7 949.8,857.3 948.9,857.8 948,858.5 947.1,858 946.2,858.9 945.3,859.1 944.4,858 943.5,857.8 942.6,858 941.7,857.4 940.8,856.5 939.9,855.8 939,855.7 938.1,856.1 937.2,856.4 936.3,856.8 935.4,857.1 934.5,858 933.6,857.4 932.7,857.5 931.8,857.1 930.9,857.5 930,856.9 929.1,856.3 928.2,855.7 927.3,855.1 926.4,855.1 925.5,855.9 924.6,856 923.7,856.6 922.8,856.4 921.9,856.5 921,857 920.1,856.6 919.2,856.9 918.3,856.2 917.4,856.1 916.5,855.9 915.6,855.5 914.7,854.8 913.8,854.8 912.9,855.2 912,855.4 911.1,855.5 910.2,855.8 909.3,856.2 908.4,856.1 907.5,855.8 906.6,855.8 905.7,855.8 904.8,855.5 903.9,855.1 903,854.9 902.1,854.6 901.2,854.6 900.3,854.7 899.4,855 898.5,855.2 897.6,855.5 896.7,855.4 895.8,855.6 894.9,855.3 894,855.2 893.1,855 892.2,855 891.3,854.7 890.4,854.5 889.5,854.3 888.6,854.3 887.7,854.4 886.8,854.5 885.9,854.8 885,854.9 884.1,854.8 883.2,854.8 882.3,854.8 881.4,854.8 880.5,854.8 879.6,854.5 878.7,854.5 877.8,854.2 876.9,854.1 876,854.1 875,854.3 873.5,854.4 871,854.5 868.5,854.4 866,854.2 863.5,853.9 861,854.1 858.5,854.1 856,854 853.5,854 851,853.8 848.5,853.9 846,853.9 843.5,853.9 841,853.8 838.5,853.7 836,853.8 833.5,853.8 831,853.7 828.5,853.7 826,853.7 823.5,853.7 821,853.7 818.5,853.7 816,853.7"/></g></svg><div style="left:815px;top:868px;width:101px;height:17px;background:#00ff41;border-bottom:1px solid #00c632;border-left:1px solid #00cc34;"><span class="cn" style="left:3px;top:1px;color:rgba(0,0,0,0.82);font-size:11.3px;">fh2_kit16_progg_cr</span></div><div style="left:915px;top:868px;width:1px;height:69px;background:#00b22d;"></div><svg width="101" height="69" viewBox="815 868 101 69" style="left:815px;top:868px;overflow:hidden"><g fill="#04200c"><polygon points="816,891.8 816.9,888.4 817.8,889.7 818.7,890.4 819.6,890.8 820.5,890.6 821.4,891.3 822.3,891 823.2,891.5 824.1,891.8 825,892.8 825.9,893.3 826.8,893.6 827.7,893.7 828.6,893.8 829.5,894.3 830.4,894.7 831.3,894.9 832.2,895.1 833.1,895.3 834,895.6 834.9,895.8 835.8,896.1 836.7,896.5 837.6,896.5 838.5,896.8 839.4,897 840.3,897.2 841.2,897.3 842.1,897.5 843,897.6 843.9,897.7 844.8,897.8 845.7,897.8 846.6,897.8 847.5,897.8 848.4,897.8 849.3,897.8 850.2,897.8 851.1,897.8 852,897.8 852.9,897.8 853,897.8 916,897.8 916,898.8 853,898.8 852.9,898.8 852,898.8 851.1,898.8 850.2,898.8 849.3,898.8 848.4,898.8 847.5,898.8 846.6,898.8 845.7,898.8 844.8,898.8 843.9,898.9 843,899 842.1,899.1 841.2,899.3 840.3,899.4 839.4,899.6 838.5,899.8 837.6,900.1 836.7,900.1 835.8,900.5 834.9,900.8 834,901 833.1,901.3 832.2,901.5 831.3,901.7 830.4,901.9 829.5,902.3 828.6,902.8 827.7,902.9 826.8,903 825.9,903.3 825,903.8 824.1,904.8 823.2,905.1 822.3,905.6 821.4,905.3 820.5,906 819.6,905.8 818.7,906.2 817.8,906.9 816.9,908.2 816,904.8"/><polygon points="816,917.8 816.9,914.4 817.8,915.7 818.7,916.4 819.6,916.8 820.5,916.6 821.4,917.3 822.3,917 823.2,917.5 824.1,917.8 825,918.8 825.9,919.3 826.8,919.6 827.7,919.7 828.6,919.8 829.5,920.3 830.4,920.7 831.3,920.9 832.2,921.1 833.1,921.3 834,921.6 834.9,921.8 835.8,922.1 836.7,922.5 837.6,922.5 838.5,922.8 839.4,923 840.3,923.2 841.2,923.3 842.1,923.5 843,923.6 843.9,923.7 844.8,923.8 845.7,923.8 846.6,923.8 847.5,923.8 848.4,923.8 849.3,923.8 850.2,923.8 851.1,923.8 852,923.8 852.9,923.8 853,923.8 916,923.8 916,924.8 853,924.8 852.9,924.8 852,924.8 851.1,924.8 850.2,924.8 849.3,924.8 848.4,924.8 847.5,924.8 846.6,924.8 845.7,924.8 844.8,924.8 843.9,924.9 843,925 842.1,925.1 841.2,925.3 840.3,925.4 839.4,925.6 838.5,925.8 837.6,926.1 836.7,926.1 835.8,926.5 834.9,926.8 834,927 833.1,927.3 832.2,927.5 831.3,927.7 830.4,927.9 829.5,928.3 828.6,928.8 827.7,928.9 826.8,929 825.9,929.3 825,929.8 824.1,930.8 823.2,931.1 822.3,931.6 821.4,931.3 820.5,932 819.6,931.8 818.7,932.2 817.8,932.9 816.9,934.2 816,930.8"/></g></svg><div style="left:1009px;top:868px;width:102px;height:17px;background:#00ff41;border-bottom:1px solid #00c632;border-left:1px solid #00cc34;"><span class="cn" style="left:3px;top:1px;color:rgba(0,0,0,0.82);font-size:11.3px;">fh2_kit16_progg_cr</span></div><div style="left:1110px;top:868px;width:1px;height:69px;background:#00b22d;"></div><svg width="102" height="69" viewBox="1009 868 102 69" style="left:1009px;top:868px;overflow:hidden"><g fill="#04200c"><polygon points="1010,891.8 1010.9,888.4 1011.8,889.7 1012.7,890.4 1013.6,890.8 1014.5,890.6 1015.4,891.3 1016.3,891 1017.2,891.5 1018.1,891.8 1019,892.8 1019.9,893.3 1020.8,893.6 1021.7,893.7 1022.6,893.8 1023.5,894.3 1024.4,894.7 1025.3,894.9 1026.2,895.1 1027.1,895.3 1028,895.6 1028.9,895.8 1029.8,896.1 1030.7,896.5 1031.6,896.5 1032.5,896.8 1033.4,897 1034.3,897.2 1035.2,897.3 1036.1,897.5 1037,897.6 1037.9,897.7 1038.8,897.8 1039.7,897.8 1040.6,897.8 1041.5,897.8 1042.4,897.8 1043.3,897.8 1044.2,897.8 1045.1,897.8 1046,897.8 1046.9,897.8 1047,897.8 1110,897.8 1110,898.8 1047,898.8 1046.9,898.8 1046,898.8 1045.1,898.8 1044.2,898.8 1043.3,898.8 1042.4,898.8 1041.5,898.8 1040.6,898.8 1039.7,898.8 1038.8,898.8 1037.9,898.9 1037,899 1036.1,899.1 1035.2,899.3 1034.3,899.4 1033.4,899.6 1032.5,899.8 1031.6,900.1 1030.7,900.1 1029.8,900.5 1028.9,900.8 1028,901 1027.1,901.3 1026.2,901.5 1025.3,901.7 1024.4,901.9 1023.5,902.3 1022.6,902.8 1021.7,902.9 1020.8,903 1019.9,903.3 1019,903.8 1018.1,904.8 1017.2,905.1 1016.3,905.6 1015.4,905.3 1014.5,906 1013.6,905.8 1012.7,906.2 1011.8,906.9 1010.9,908.2 1010,904.8"/><polygon points="1010,917.8 1010.9,914.4 1011.8,915.7 1012.7,916.4 1013.6,916.8 1014.5,916.6 1015.4,917.3 1016.3,917 1017.2,917.5 1018.1,917.8 1019,918.8 1019.9,919.3 1020.8,919.6 1021.7,919.7 1022.6,919.8 1023.5,920.3 1024.4,920.7 1025.3,920.9 1026.2,921.1 1027.1,921.3 1028,921.6 1028.9,921.8 1029.8,922.1 1030.7,922.5 1031.6,922.5 1032.5,922.8 1033.4,923 1034.3,923.2 1035.2,923.3 1036.1,923.5 1037,923.6 1037.9,923.7 1038.8,923.8 1039.7,923.8 1040.6,923.8 1041.5,923.8 1042.4,923.8 1043.3,923.8 1044.2,923.8 1045.1,923.8 1046,923.8 1046.9,923.8 1047,923.8 1110,923.8 1110,924.8 1047,924.8 1046.9,924.8 1046,924.8 1045.1,924.8 1044.2,924.8 1043.3,924.8 1042.4,924.8 1041.5,924.8 1040.6,924.8 1039.7,924.8 1038.8,924.8 1037.9,924.9 1037,925 1036.1,925.1 1035.2,925.3 1034.3,925.4 1033.4,925.6 1032.5,925.8 1031.6,926.1 1030.7,926.1 1029.8,926.5 1028.9,926.8 1028,927 1027.1,927.3 1026.2,927.5 1025.3,927.7 1024.4,927.9 1023.5,928.3 1022.6,928.8 1021.7,928.9 1020.8,929 1019.9,929.3 1019,929.8 1018.1,930.8 1017.2,931.1 1016.3,931.6 1015.4,931.3 1014.5,932 1013.6,931.8 1012.7,932.2 1011.8,932.9 1010.9,934.2 1010,930.8"/></g></svg><div style="left:1399px;top:868px;width:49px;height:17px;background:#00ff41;border-bottom:1px solid #00c632;border-left:1px solid #00cc34;"><span class="cn" style="left:3px;top:1px;color:rgba(0,0,0,0.82);font-size:11.3px;">fh2_kit16_progg_cr</span></div><div style="left:1447px;top:868px;width:1px;height:69px;background:#00b22d;"></div><svg width="49" height="69" viewBox="1399 868 49 69" style="left:1399px;top:868px;overflow:hidden"><g fill="#04200c"><polygon points="1400,891.8 1400.9,888.4 1401.8,889.7 1402.7,890.4 1403.6,890.8 1404.5,890.6 1405.4,891.3 1406.3,891 1407.2,891.5 1408.1,891.8 1409,892.8 1409.9,893.3 1410.8,893.6 1411.7,893.7 1412.6,893.8 1413.5,894.3 1414.4,894.7 1415.3,894.9 1416.2,895.1 1417.1,895.3 1418,895.6 1418.9,895.8 1419.8,896.1 1420.7,896.5 1421.6,896.5 1422.5,896.8 1423.4,897 1424.3,897.2 1425.2,897.3 1426.1,897.5 1427,897.6 1427.9,897.7 1428.8,897.8 1429.7,897.8 1430.6,897.8 1431.5,897.8 1432.4,897.8 1433.3,897.8 1434.2,897.8 1435.1,897.8 1436,897.8 1436.9,897.8 1437,897.8 1500,897.8 1500,898.8 1437,898.8 1436.9,898.8 1436,898.8 1435.1,898.8 1434.2,898.8 1433.3,898.8 1432.4,898.8 1431.5,898.8 1430.6,898.8 1429.7,898.8 1428.8,898.8 1427.9,898.9 1427,899 1426.1,899.1 1425.2,899.3 1424.3,899.4 1423.4,899.6 1422.5,899.8 1421.6,900.1 1420.7,900.1 1419.8,900.5 1418.9,900.8 1418,901 1417.1,901.3 1416.2,901.5 1415.3,901.7 1414.4,901.9 1413.5,902.3 1412.6,902.8 1411.7,902.9 1410.8,903 1409.9,903.3 1409,903.8 1408.1,904.8 1407.2,905.1 1406.3,905.6 1405.4,905.3 1404.5,906 1403.6,905.8 1402.7,906.2 1401.8,906.9 1400.9,908.2 1400,904.8"/><polygon points="1400,917.8 1400.9,914.4 1401.8,915.7 1402.7,916.4 1403.6,916.8 1404.5,916.6 1405.4,917.3 1406.3,917 1407.2,917.5 1408.1,917.8 1409,918.8 1409.9,919.3 1410.8,919.6 1411.7,919.7 1412.6,919.8 1413.5,920.3 1414.4,920.7 1415.3,920.9 1416.2,921.1 1417.1,921.3 1418,921.6 1418.9,921.8 1419.8,922.1 1420.7,922.5 1421.6,922.5 1422.5,922.8 1423.4,923 1424.3,923.2 1425.2,923.3 1426.1,923.5 1427,923.6 1427.9,923.7 1428.8,923.8 1429.7,923.8 1430.6,923.8 1431.5,923.8 1432.4,923.8 1433.3,923.8 1434.2,923.8 1435.1,923.8 1436,923.8 1436.9,923.8 1437,923.8 1500,923.8 1500,924.8 1437,924.8 1436.9,924.8 1436,924.8 1435.1,924.8 1434.2,924.8 1433.3,924.8 1432.4,924.8 1431.5,924.8 1430.6,924.8 1429.7,924.8 1428.8,924.8 1427.9,924.9 1427,925 1426.1,925.1 1425.2,925.3 1424.3,925.4 1423.4,925.6 1422.5,925.8 1421.6,926.1 1420.7,926.1 1419.8,926.5 1418.9,926.8 1418,927 1417.1,927.3 1416.2,927.5 1415.3,927.7 1414.4,927.9 1413.5,928.3 1412.6,928.8 1411.7,928.9 1410.8,929 1409.9,929.3 1409,929.8 1408.1,930.8 1407.2,931.1 1406.3,931.6 1405.4,931.3 1404.5,932 1403.6,931.8 1402.7,932.2 1401.8,932.9 1400.9,934.2 1400,930.8"/></g></svg>
<div style="left:1350px;top:215px;width:1px;height:137px;background:rgba(235,250,255,0.75);"></div>
<svg width="10" height="6" style="left:1346px;top:139.5px"><path d="M0.8 0.3h8.4L5 4.8z" fill="#1ab7e0"/></svg>
<svg width="10" height="6" style="left:1346px;top:1001.5px"><path d="M0.8 4.8h8.4L5 0.3z" fill="#1ab7e0"/></svg>
<div style="left:1425px;top:982px;width:36px;height:19px;font-size:17.5px;font-weight:bold;color:#2c2c2c;-webkit-text-stroke:0.6px #2c2c2c;line-height:20px;text-align:left;letter-spacing:1.8px;padding-left:5px">1/4</div>
<svg width="1420" height="16" style="left:35px;top:1001px"><path d="M0.5 0.2v7.3h1.7" fill="none" stroke="#8c8c8c" stroke-width="1"/><rect x="25" y="0.5" width="1" height="1.6" fill="#8c8c8c"/><rect x="51" y="0.5" width="1" height="1.6" fill="#8c8c8c"/><rect x="76" y="0.5" width="1" height="1.6" fill="#8c8c8c"/><rect x="102" y="0.5" width="1" height="1.6" fill="#8c8c8c"/><path d="M127.5 0.2v7.3h1.7" fill="none" stroke="#8c8c8c" stroke-width="1"/><rect x="152" y="0.5" width="1" height="1.6" fill="#8c8c8c"/><rect x="178" y="0.5" width="1" height="1.6" fill="#8c8c8c"/><rect x="203" y="0.5" width="1" height="1.6" fill="#8c8c8c"/><rect x="228" y="0.5" width="1" height="1.6" fill="#8c8c8c"/><path d="M254.5 0.2v7.3h1.7" fill="none" stroke="#8c8c8c" stroke-width="1"/><rect x="279" y="0.5" width="1" height="1.6" fill="#8c8c8c"/><rect x="305" y="0.5" width="1" height="1.6" fill="#8c8c8c"/><rect x="330" y="0.5" width="1" height="1.6" fill="#8c8c8c"/><rect x="355" y="0.5" width="1" height="1.6" fill="#8c8c8c"/><path d="M381.5 0.2v7.3h1.7" fill="none" stroke="#8c8c8c" stroke-width="1"/><rect x="406" y="0.5" width="1" height="1.6" fill="#8c8c8c"/><rect x="431" y="0.5" width="1" height="1.6" fill="#8c8c8c"/><rect x="457" y="0.5" width="1" height="1.6" fill="#8c8c8c"/><rect x="482" y="0.5" width="1" height="1.6" fill="#8c8c8c"/><path d="M508.5 0.2v7.3h1.7" fill="none" stroke="#8c8c8c" stroke-width="1"/><rect x="533" y="0.5" width="1" height="1.6" fill="#8c8c8c"/><rect x="558" y="0.5" width="1" height="1.6" fill="#8c8c8c"/><rect x="584" y="0.5" width="1" height="1.6" fill="#8c8c8c"/><rect x="609" y="0.5" width="1" height="1.6" fill="#8c8c8c"/><path d="M634.5 0.2v7.3h1.7" fill="none" stroke="#8c8c8c" stroke-width="1"/><rect x="660" y="0.5" width="1" height="1.6" fill="#8c8c8c"/><rect x="685" y="0.5" width="1" height="1.6" fill="#8c8c8c"/><rect x="711" y="0.5" width="1" height="1.6" fill="#8c8c8c"/><rect x="736" y="0.5" width="1" height="1.6" fill="#8c8c8c"/><path d="M761.5 0.2v7.3h1.7" fill="none" stroke="#8c8c8c" stroke-width="1"/><rect x="787" y="0.5" width="1" height="1.6" fill="#8c8c8c"/><rect x="812" y="0.5" width="1" height="1.6" fill="#8c8c8c"/><rect x="837" y="0.5" width="1" height="1.6" fill="#8c8c8c"/><rect x="863" y="0.5" width="1" height="1.6" fill="#8c8c8c"/><path d="M888.5 0.2v7.3h1.7" fill="none" stroke="#8c8c8c" stroke-width="1"/><rect x="914" y="0.5" width="1" height="1.6" fill="#8c8c8c"/><rect x="939" y="0.5" width="1" height="1.6" fill="#8c8c8c"/><rect x="964" y="0.5" width="1" height="1.6" fill="#8c8c8c"/><rect x="990" y="0.5" width="1" height="1.6" fill="#8c8c8c"/><path d="M1015.5 0.2v7.3h1.7" fill="none" stroke="#8c8c8c" stroke-width="1"/><rect x="1040" y="0.5" width="1" height="1.6" fill="#8c8c8c"/><rect x="1066" y="0.5" width="1" height="1.6" fill="#8c8c8c"/><rect x="1091" y="0.5" width="1" height="1.6" fill="#8c8c8c"/><rect x="1117" y="0.5" width="1" height="1.6" fill="#8c8c8c"/><path d="M1142.5 0.2v7.3h1.7" fill="none" stroke="#8c8c8c" stroke-width="1"/><rect x="1167" y="0.5" width="1" height="1.6" fill="#8c8c8c"/><rect x="1193" y="0.5" width="1" height="1.6" fill="#8c8c8c"/><rect x="1218" y="0.5" width="1" height="1.6" fill="#8c8c8c"/><rect x="1243" y="0.5" width="1" height="1.6" fill="#8c8c8c"/><path d="M1269.5 0.2v7.3h1.7" fill="none" stroke="#8c8c8c" stroke-width="1"/><rect x="1294" y="0.5" width="1" height="1.6" fill="#8c8c8c"/><rect x="1320" y="0.5" width="1" height="1.6" fill="#8c8c8c"/><rect x="1345" y="0.5" width="1" height="1.6" fill="#8c8c8c"/><rect x="1370" y="0.5" width="1" height="1.6" fill="#8c8c8c"/><path d="M1396.5 0.2v7.3h1.7" fill="none" stroke="#8c8c8c" stroke-width="1"/><rect x="1421" y="0.5" width="1" height="1.6" fill="#8c8c8c"/></svg>
<span class="rn" style="left:37.6px;top:1003.7px;font-size:10px;letter-spacing:0.35px">0:00</span>
<span class="rn" style="left:164.6px;top:1003.7px;font-size:10px;letter-spacing:0.35px">0:05</span>
<span class="rn" style="left:291.6px;top:1003.7px;font-size:10px;letter-spacing:0.35px">0:10</span>
<span class="rn" style="left:418.6px;top:1003.7px;font-size:10px;letter-spacing:0.35px">0:15</span>
<span class="rn" style="left:545.6px;top:1003.7px;font-size:10px;letter-spacing:0.35px">0:20</span>
<span class="rn" style="left:671.6px;top:1003.7px;font-size:10px;letter-spacing:0.35px">0:25</span>
<span class="rn" style="left:798.6px;top:1003.7px;font-size:10px;letter-spacing:0.35px">0:30</span>
<span class="rn" style="left:925.6px;top:1003.7px;font-size:10px;letter-spacing:0.35px">0:35</span>
<span class="rn" style="left:1052.6px;top:1003.7px;font-size:10px;letter-spacing:0.35px">0:40</span>
<span class="rn" style="left:1179.6px;top:1003.7px;font-size:10px;letter-spacing:0.35px">0:45</span>
<span class="rn" style="left:1306.6px;top:1003.7px;font-size:10px;letter-spacing:0.35px">0:50</span>
<span class="rn" style="left:1433.6px;top:1003.7px;font-size:10px;letter-spacing:0.35px">0:55</span>
<div style="left:1463px;top:143.5px;width:380.5px;height:858px;background:#303030;"></div>
<div style="left:1464px;top:144px;width:186px;height:69px;background:#0099e5;"><svg width="14" height="14" style="left:2.8px;top:1.9px"><circle cx="6.6" cy="6.6" r="5.9" fill="none" stroke="rgba(0,0,0,0.78)" stroke-width="1"/><path d="M3.3 4.9h6.6l-3.3 4.6z" fill="rgba(0,0,0,0.78)"/></svg><span class="tn" style="left:23px;top:3.5px;color:rgba(0,0,0,0.78)">1 Bass Line - Orgonapont</span></div>
<div style="left:1652px;top:144px;width:74px;height:69px;background:#484848;"></div>
<div style="left:1728px;top:144px;width:115px;height:69px;background:#484848;"></div>
<div class="b" style="left:1654px;top:147.3px;width:70px;height:12.5px;text-align:left;"><span style="left:10px;top:0;color:#e8e8e8;font-size:10.2px;letter-spacing:-0.45px;">All Channe</span><div style="right:0;top:0;width:10px;height:11px;background:#2b2b2b"></div><svg width="70" height="11" style="left:0;top:0"><path d="M59.2 3h6.8l-3.4 4.9z" fill="#e8e8e8"/><rect x="2.6" y="1.4" width="1.7" height="1.7" fill="#191919"/><rect x="2.6" y="4.5" width="1.7" height="1.7" fill="#191919"/><rect x="2.6" y="7.6" width="1.7" height="1.7" fill="#191919"/></svg></div>
<div class="b" style="left:1654px;top:164.2px;width:17px;height:12.5px;">In</div><div class="b" style="left:1674.2px;top:164.2px;width:26.8px;height:12.5px;background:#fa8c30;color:#1a1a1a;">Auto</div><div class="b" style="left:1704.2px;top:164.2px;width:19.8px;height:12.5px;">Off</div>
<div class="b" style="left:1654px;top:181.1px;width:70px;height:12.5px;text-align:left;"><span style="left:2px;top:0;color:#e8e8e8;">Master</span><svg width="70" height="11" style="left:0;top:0"><path d="M59.2 3h6.8l-3.4 4.9z" fill="#e8e8e8"/></svg></div>
<div class="b" style="left:1654px;top:198px;width:70px;height:12.5px;background:#484848;"></div>
<div class="b" style="left:1731.3px;top:146px;width:45.3px;height:12.3px;background:#fa8c30;color:#1a1a1a;border-color:#3a3a3a;">1</div>
<div class="b" style="left:1781px;top:146px;width:21px;height:12.3px;">S</div>
<div class="b" style="left:1806px;top:146px;width:21px;height:12.3px;"><svg width="19" height="11" style="left:0;top:0"><circle cx="9.5" cy="5.2" r="3.9" fill="#e8e8e8"/><path d="M10 0.8V5.6" stroke="#2b2b2b" stroke-width="1.4"/><circle cx="8.9" cy="6" r="1.35" fill="#2b2b2b"/></svg></div>
<div class="b" style="left:1731.3px;top:163px;width:45.3px;height:12.5px;"><div style="left:0;top:0;width:34.015px;height:11px;background:#0a6c80"></div><span style="left:0;top:0;width:43.3px;text-align:center">-3.1</span></div>
<div class="b" style="left:1781px;top:163px;width:46px;height:12.5px;">C</div>
<div class="b" style="left:1731.3px;top:180px;width:29.4px;height:12.5px;">-inf</div>
<div class="b" style="left:1764.3px;top:180px;width:29.4px;height:12.5px;">-inf</div>
<div style="left:1833px;top:144px;width:3.2px;height:69px;background:#191919;"></div>
<div style="left:1837.2px;top:144px;width:3.2px;height:69px;background:#191919;"></div>
<div style="left:1833px;top:152px;width:7.5px;height:1px;background:#484848;"></div>
<div style="left:1464px;top:215px;width:186px;height:137px;background:#00e6ff;"><svg width="14" height="14" style="left:2.8px;top:1.9px"><circle cx="6.6" cy="6.6" r="5.9" fill="none" stroke="rgba(0,0,0,0.78)" stroke-width="1"/><path d="M3.3 4.9h6.6l-3.3 4.6z" fill="rgba(0,0,0,0.78)"/></svg><span class="tn" style="left:23px;top:3.5px;color:rgba(0,0,0,0.78)">2 Chords</span></div>
<div style="left:1652px;top:215px;width:74px;height:137px;background:#484848;"></div>
<div style="left:1728px;top:215px;width:115px;height:137px;background:#484848;"></div>
<div class="b" style="left:1654px;top:218.3px;width:70px;height:12.5px;text-align:left;"><span style="left:2px;top:0;color:#e8e8e8;">All Ins</span><svg width="70" height="11" style="left:0;top:0"><path d="M59.2 3h6.8l-3.4 4.9z" fill="#e8e8e8"/></svg></div>
<div class="b" style="left:1654px;top:235.2px;width:70px;height:12.5px;text-align:left;"><span style="left:10px;top:0;color:#e8e8e8;font-size:10.2px;letter-spacing:-0.45px;">All Channe</span><div style="right:0;top:0;width:10px;height:11px;background:#2b2b2b"></div><svg width="70" height="11" style="left:0;top:0"><path d="M59.2 3h6.8l-3.4 4.9z" fill="#e8e8e8"/><rect x="2.6" y="1.4" width="1.7" height="1.7" fill="#191919"/><rect x="2.6" y="4.5" width="1.7" height="1.7" fill="#191919"/><rect x="2.6" y="7.6" width="1.7" height="1.7" fill="#191919"/></svg></div>
<div class="b" style="left:1654px;top:252.1px;width:17px;height:12.5px;">In</div><div class="b" style="left:1674.2px;top:252.1px;width:26.8px;height:12.5px;background:#fa8c30;color:#1a1a1a;">Auto</div><div class="b" style="left:1704.2px;top:252.1px;width:19.8px;height:12.5px;">Off</div>
<div class="b" style="left:1654px;top:269px;width:70px;height:12.5px;text-align:left;"><span style="left:2px;top:0;color:#e8e8e8;">Master</span><svg width="70" height="11" style="left:0;top:0"><path d="M59.2 3h6.8l-3.4 4.9z" fill="#e8e8e8"/></svg></div>
<div class="b" style="left:1654px;top:285.9px;width:70px;height:12.5px;background:#484848;"></div>
<div class="b" style="left:1731.3px;top:217px;width:45.3px;height:12.3px;background:#fa8c30;color:#1a1a1a;border-color:#3a3a3a;">2<div style="left:-0.5px;top:-0.5px;width:5px;height:5px;border-radius:50%;background:#ff3b3b"></div></div>
<div class="b" style="left:1781px;top:217px;width:21px;height:12.3px;">S</div>
<div class="b" style="left:1806px;top:217px;width:21px;height:12.3px;"><svg width="19" height="11" style="left:0;top:0"><circle cx="9.5" cy="5.2" r="3.9" fill="#e8e8e8"/><path d="M10 0.8V5.6" stroke="#2b2b2b" stroke-width="1.4"/><circle cx="8.9" cy="6" r="1.35" fill="#2b2b2b"/></svg></div>
<div class="b" style="left:1731.3px;top:234px;width:45.3px;height:12.5px;"><div style="left:0;top:0;width:33.34px;height:11px;background:#0a6c80"></div><span style="left:0;top:0;width:43.3px;text-align:center">-3.6</span></div>
<div class="b" style="left:1781px;top:234px;width:46px;height:12.5px;">C</div>
<div class="b" style="left:1731.3px;top:251px;width:29.4px;height:12.5px;">-inf</div>
<div class="b" style="left:1764.3px;top:251px;width:29.4px;height:12.5px;">-inf</div>
<div style="left:1833px;top:215px;width:3.2px;height:137px;background:#191919;"></div>
<div style="left:1837.2px;top:215px;width:3.2px;height:137px;background:#191919;"></div>
<div style="left:1833px;top:223px;width:7.5px;height:1px;background:#484848;"></div>
<div style="left:1464px;top:354px;width:186px;height:86px;background:#7ac1d1;"><svg width="14" height="14" style="left:2.8px;top:1.9px"><circle cx="6.6" cy="6.6" r="5.9" fill="none" stroke="rgba(0,0,0,0.78)" stroke-width="1"/><path d="M3.3 4.9h6.6l-3.3 4.6z" fill="rgba(0,0,0,0.78)"/></svg><span class="tn" style="left:23px;top:3.5px;color:rgba(0,0,0,0.78)">3 Melody</span></div>
<div style="left:1652px;top:354px;width:74px;height:86px;background:#5c5c5c;"></div>
<div style="left:1728px;top:354px;width:115px;height:86px;background:#5c5c5c;"></div>
<div class="b" style="left:1654px;top:357.3px;width:70px;height:12.5px;text-align:left;"><span style="left:2px;top:0;color:#e8e8e8;">All Ins</span><svg width="70" height="11" style="left:0;top:0"><path d="M59.2 3h6.8l-3.4 4.9z" fill="#e8e8e8"/></svg></div>
<div class="b" style="left:1654px;top:374.2px;width:70px;height:12.5px;text-align:left;"><span style="left:10px;top:0;color:#e8e8e8;font-size:10.2px;letter-spacing:-0.45px;">All Channe</span><div style="right:0;top:0;width:10px;height:11px;background:#2b2b2b"></div><svg width="70" height="11" style="left:0;top:0"><path d="M59.2 3h6.8l-3.4 4.9z" fill="#e8e8e8"/><rect x="2.6" y="1.4" width="1.7" height="1.7" fill="#191919"/><rect x="2.6" y="4.5" width="1.7" height="1.7" fill="#191919"/><rect x="2.6" y="7.6" width="1.7" height="1.7" fill="#191919"/></svg></div>
<div class="b" style="left:1654px;top:391.1px;width:17px;height:12.5px;">In</div><div class="b" style="left:1674.2px;top:391.1px;width:26.8px;height:12.5px;background:#fa8c30;color:#1a1a1a;">Auto</div><div class="b" style="left:1704.2px;top:391.1px;width:19.8px;height:12.5px;">Off</div>
<div class="b" style="left:1654px;top:408px;width:70px;height:12.5px;text-align:left;"><span style="left:2px;top:0;color:#e8e8e8;">Master</span><svg width="70" height="11" style="left:0;top:0"><path d="M59.2 3h6.8l-3.4 4.9z" fill="#e8e8e8"/></svg></div>
<div class="b" style="left:1654px;top:424.9px;width:70px;height:12.5px;background:#5c5c5c;"></div>
<div class="b" style="left:1731.3px;top:356px;width:45.3px;height:12.3px;background:#fa8c30;color:#1a1a1a;border-color:#3a3a3a;">3</div>
<div class="b" style="left:1781px;top:356px;width:21px;height:12.3px;">S</div>
<div class="b" style="left:1806px;top:356px;width:21px;height:12.3px;background:#f0323a;"><svg width="19" height="11" style="left:0;top:0"><circle cx="9.5" cy="5.2" r="3.9" fill="#2a0a0a"/><path d="M10 0.8V5.6" stroke="#f0323a" stroke-width="1.4"/><circle cx="8.9" cy="6" r="1.35" fill="#f0323a"/></svg></div>
<div class="b" style="left:1731.3px;top:373px;width:45.3px;height:12.5px;"><div style="left:0;top:0;width:24.295px;height:11px;background:#0a6c80"></div><span style="left:0;top:0;width:43.3px;text-align:center">-10.3</span></div>
<div class="b" style="left:1781px;top:373px;width:46px;height:12.5px;">C</div>
<div class="b" style="left:1731.3px;top:390px;width:29.4px;height:12.5px;">-inf</div>
<div class="b" style="left:1764.3px;top:390px;width:29.4px;height:12.5px;">-inf</div>
<div style="left:1833px;top:354px;width:3.2px;height:86px;background:#191919;"></div>
<div style="left:1837.2px;top:354px;width:3.2px;height:86px;background:#191919;"></div>
<div style="left:1833px;top:362px;width:7.5px;height:1px;background:#5c5c5c;"></div>
<div style="left:1464px;top:442px;width:186px;height:69px;background:#6c473b;"><svg width="14" height="14" style="left:2.8px;top:1.9px"><circle cx="6.6" cy="6.6" r="5.9" fill="none" stroke="rgba(255,255,255,0.88)" stroke-width="1"/><path d="M3.3 4.9h6.6l-3.3 4.6z" fill="rgba(255,255,255,0.88)"/></svg><span class="tn" style="left:23px;top:3.5px;color:rgba(255,255,255,0.88)">4 Vocal</span></div>
<div style="left:1652px;top:442px;width:74px;height:69px;background:#484848;"></div>
<div style="left:1728px;top:442px;width:115px;height:69px;background:#484848;"></div>
<div class="b" style="left:1654px;top:445.3px;width:70px;height:12.5px;text-align:left;"><span style="left:2px;top:0;color:#8a8a8a;">1</span><svg width="70" height="11" style="left:0;top:0"><path d="M59.2 3h6.8l-3.4 4.9z" fill="#8a8a8a"/></svg></div>
<div class="b bd" style="left:1654px;top:462.2px;width:17px;height:12.5px;">In</div><div class="b bd" style="left:1674.2px;top:462.2px;width:26.8px;height:12.5px;">Auto</div><div class="b" style="left:1704.2px;top:462.2px;width:19.8px;height:12.5px;background:#8c8c8c;color:#3a3a3a;">Off</div>
<div class="b" style="left:1654px;top:479.1px;width:70px;height:12.5px;text-align:left;"><span style="left:2px;top:0;color:#e8e8e8;">Master</span><svg width="70" height="11" style="left:0;top:0"><path d="M59.2 3h6.8l-3.4 4.9z" fill="#e8e8e8"/></svg></div>
<div class="b" style="left:1654px;top:496px;width:70px;height:12.5px;background:#484848;"></div>
<div class="b" style="left:1731.3px;top:444px;width:45.3px;height:12.3px;background:#fa8c30;color:#1a1a1a;border-color:#3a3a3a;">4</div>
<div class="b" style="left:1781px;top:444px;width:21px;height:12.3px;">S</div>
<div class="b" style="left:1806px;top:444px;width:21px;height:12.3px;"><svg width="19" height="11" style="left:0;top:0"><circle cx="9.5" cy="5.2" r="3.3" fill="#7c7c7c"/></svg></div>
<div class="b" style="left:1731.3px;top:461px;width:45.3px;height:12.5px;"><div style="left:0;top:0;width:36.715px;height:11px;background:#0a6c80"></div><span style="left:0;top:0;width:43.3px;text-align:center">-1.1</span></div>
<div class="b" style="left:1781px;top:461px;width:46px;height:12.5px;">C</div>
<div class="b" style="left:1731.3px;top:478px;width:29.4px;height:12.5px;">-inf</div>
<div class="b" style="left:1764.3px;top:478px;width:29.4px;height:12.5px;">-inf</div>
<div style="left:1833px;top:442px;width:3.2px;height:69px;background:#191919;"></div>
<div style="left:1837.2px;top:442px;width:3.2px;height:69px;background:#191919;"></div>
<div style="left:1833px;top:450px;width:7.5px;height:1px;background:#484848;"></div>
<div style="left:1464px;top:513px;width:186px;height:69px;background:#5843a0;"><svg width="14" height="14" style="left:2.8px;top:1.9px"><circle cx="6.6" cy="6.6" r="5.9" fill="none" stroke="rgba(255,255,255,0.88)" stroke-width="1"/><path d="M3.3 4.9h6.6l-3.3 4.6z" fill="rgba(255,255,255,0.88)"/></svg><span class="tn" style="left:23px;top:3.5px;color:rgba(255,255,255,0.88)">5 Kick</span></div>
<div style="left:1652px;top:513px;width:74px;height:69px;background:#484848;"></div>
<div style="left:1728px;top:513px;width:115px;height:69px;background:#484848;"></div>
<div class="b" style="left:1654px;top:516.3px;width:70px;height:12.5px;text-align:left;"><span style="left:2px;top:0;color:#8a8a8a;">2</span><svg width="70" height="11" style="left:0;top:0"><path d="M59.2 3h6.8l-3.4 4.9z" fill="#8a8a8a"/></svg></div>
<div class="b bd" style="left:1654px;top:533.2px;width:17px;height:12.5px;">In</div><div class="b bd" style="left:1674.2px;top:533.2px;width:26.8px;height:12.5px;">Auto</div><div class="b" style="left:1704.2px;top:533.2px;width:19.8px;height:12.5px;background:#8c8c8c;color:#3a3a3a;">Off</div>
<div class="b" style="left:1654px;top:550.1px;width:70px;height:12.5px;text-align:left;"><span style="left:2px;top:0;color:#e8e8e8;">Master</span><svg width="70" height="11" style="left:0;top:0"><path d="M59.2 3h6.8l-3.4 4.9z" fill="#e8e8e8"/></svg></div>
<div class="b" style="left:1654px;top:567px;width:70px;height:12.5px;background:#484848;"></div>
<div class="b" style="left:1731.3px;top:515px;width:45.3px;height:12.3px;background:#fa8c30;color:#1a1a1a;border-color:#3a3a3a;">5</div>
<div class="b" style="left:1781px;top:515px;width:21px;height:12.3px;">S</div>
<div class="b" style="left:1806px;top:515px;width:21px;height:12.3px;"><svg width="19" height="11" style="left:0;top:0"><circle cx="9.5" cy="5.2" r="3.3" fill="#7c7c7c"/></svg></div>
<div class="b" style="left:1731.3px;top:532px;width:45.3px;height:12.5px;"><div style="left:0;top:0;width:34.15px;height:11px;background:#0a6c80"></div><span style="left:0;top:0;width:43.3px;text-align:center">-3.0</span></div>
<div class="b" style="left:1781px;top:532px;width:46px;height:12.5px;">C</div>
<div class="b" style="left:1731.3px;top:549px;width:29.4px;height:12.5px;">-inf</div>
<div class="b" style="left:1764.3px;top:549px;width:29.4px;height:12.5px;">-inf</div>
<div style="left:1833px;top:513px;width:3.2px;height:69px;background:#191919;"></div>
<div style="left:1837.2px;top:513px;width:3.2px;height:69px;background:#191919;"></div>
<div style="left:1833px;top:521px;width:7.5px;height:1px;background:#484848;"></div>
<div style="left:1464px;top:584px;width:186px;height:69px;background:#ff2d37;"><svg width="14" height="14" style="left:2.8px;top:1.9px"><circle cx="6.6" cy="6.6" r="5.9" fill="none" stroke="rgba(0,0,0,0.78)" stroke-width="1"/><path d="M3.3 4.9h6.6l-3.3 4.6z" fill="rgba(0,0,0,0.78)"/></svg><span class="tn" style="left:23px;top:3.5px;color:rgba(0,0,0,0.78)">6 Clap</span></div>
<div style="left:1652px;top:584px;width:74px;height:69px;background:#484848;"></div>
<div style="left:1728px;top:584px;width:115px;height:69px;background:#484848;"></div>
<div class="b" style="left:1654px;top:587.3px;width:70px;height:12.5px;text-align:left;"><span style="left:2px;top:0;color:#8a8a8a;">1</span><svg width="70" height="11" style="left:0;top:0"><path d="M59.2 3h6.8l-3.4 4.9z" fill="#8a8a8a"/></svg></div>
<div class="b bd" style="left:1654px;top:604.2px;width:17px;height:12.5px;">In</div><div class="b bd" style="left:1674.2px;top:604.2px;width:26.8px;height:12.5px;">Auto</div><div class="b" style="left:1704.2px;top:604.2px;width:19.8px;height:12.5px;background:#8c8c8c;color:#3a3a3a;">Off</div>
<div class="b" style="left:1654px;top:621.1px;width:70px;height:12.5px;text-align:left;"><span style="left:2px;top:0;color:#e8e8e8;">Master</span><svg width="70" height="11" style="left:0;top:0"><path d="M59.2 3h6.8l-3.4 4.9z" fill="#e8e8e8"/></svg></div>
<div class="b" style="left:1654px;top:638px;width:70px;height:12.5px;background:#484848;"></div>
<div class="b" style="left:1731.3px;top:586px;width:45.3px;height:12.3px;background:#fa8c30;color:#1a1a1a;border-color:#3a3a3a;">6</div>
<div class="b" style="left:1781px;top:586px;width:21px;height:12.3px;">S</div>
<div class="b" style="left:1806px;top:586px;width:21px;height:12.3px;"><svg width="19" height="11" style="left:0;top:0"><circle cx="9.5" cy="5.2" r="3.3" fill="#7c7c7c"/></svg></div>
<div class="b" style="left:1731.3px;top:603px;width:45.3px;height:12.5px;"><div style="left:0;top:0;width:31.18px;height:11px;background:#0a6c80"></div><span style="left:0;top:0;width:43.3px;text-align:center">-5.2</span></div>
<div class="b" style="left:1781px;top:603px;width:46px;height:12.5px;">C</div>
<div class="b" style="left:1731.3px;top:620px;width:29.4px;height:12.5px;">-inf</div>
<div class="b" style="left:1764.3px;top:620px;width:29.4px;height:12.5px;">-inf</div>
<div style="left:1833px;top:584px;width:3.2px;height:69px;background:#191919;"></div>
<div style="left:1837.2px;top:584px;width:3.2px;height:69px;background:#191919;"></div>
<div style="left:1833px;top:592px;width:7.5px;height:1px;background:#484848;"></div>
<div style="left:1464px;top:655px;width:186px;height:69px;background:#ff9c33;"><svg width="14" height="14" style="left:2.8px;top:1.9px"><circle cx="6.6" cy="6.6" r="5.9" fill="none" stroke="rgba(0,0,0,0.78)" stroke-width="1"/><path d="M3.3 4.9h6.6l-3.3 4.6z" fill="rgba(0,0,0,0.78)"/></svg><span class="tn" style="left:23px;top:3.5px;color:rgba(0,0,0,0.78)">7 Hihat</span></div>
<div style="left:1652px;top:655px;width:74px;height:69px;background:#484848;"></div>
<div style="left:1728px;top:655px;width:115px;height:69px;background:#484848;"></div>
<div class="b" style="left:1654px;top:658.3px;width:70px;height:12.5px;text-align:left;"><span style="left:2px;top:0;color:#8a8a8a;">1</span><svg width="70" height="11" style="left:0;top:0"><path d="M59.2 3h6.8l-3.4 4.9z" fill="#8a8a8a"/></svg></div>
<div class="b bd" style="left:1654px;top:675.2px;width:17px;height:12.5px;">In</div><div class="b bd" style="left:1674.2px;top:675.2px;width:26.8px;height:12.5px;">Auto</div><div class="b" style="left:1704.2px;top:675.2px;width:19.8px;height:12.5px;background:#8c8c8c;color:#3a3a3a;">Off</div>
<div class="b" style="left:1654px;top:692.1px;width:70px;height:12.5px;text-align:left;"><span style="left:2px;top:0;color:#e8e8e8;">Master</span><svg width="70" height="11" style="left:0;top:0"><path d="M59.2 3h6.8l-3.4 4.9z" fill="#e8e8e8"/></svg></div>
<div class="b" style="left:1654px;top:709px;width:70px;height:12.5px;background:#484848;"></div>
<div class="b" style="left:1731.3px;top:657px;width:45.3px;height:12.3px;background:#fa8c30;color:#1a1a1a;border-color:#3a3a3a;">7</div>
<div class="b" style="left:1781px;top:657px;width:21px;height:12.3px;">S</div>
<div class="b" style="left:1806px;top:657px;width:21px;height:12.3px;"><svg width="19" height="11" style="left:0;top:0"><circle cx="9.5" cy="5.2" r="3.3" fill="#7c7c7c"/></svg></div>
<div class="b" style="left:1731.3px;top:674px;width:45.3px;height:12.5px;"><div style="left:0;top:0;width:24.97px;height:11px;background:#0a6c80"></div><span style="left:0;top:0;width:43.3px;text-align:center">-9.8</span></div>
<div class="b" style="left:1781px;top:674px;width:46px;height:12.5px;">C</div>
<div class="b" style="left:1731.3px;top:691px;width:29.4px;height:12.5px;">-inf</div>
<div class="b" style="left:1764.3px;top:691px;width:29.4px;height:12.5px;">-inf</div>
<div style="left:1833px;top:655px;width:3.2px;height:69px;background:#191919;"></div>
<div style="left:1837.2px;top:655px;width:3.2px;height:69px;background:#191919;"></div>
<div style="left:1833px;top:663px;width:7.5px;height:1px;background:#484848;"></div>
<div style="left:1464px;top:726px;width:186px;height:69px;background:#cc9432;"><svg width="14" height="14" style="left:2.8px;top:1.9px"><circle cx="6.6" cy="6.6" r="5.9" fill="none" stroke="rgba(0,0,0,0.78)" stroke-width="1"/><path d="M3.3 4.9h6.6l-3.3 4.6z" fill="rgba(0,0,0,0.78)"/></svg><span class="tn" style="left:23px;top:3.5px;color:rgba(0,0,0,0.78)">8 Percussion</span></div>
<div style="left:1652px;top:726px;width:74px;height:69px;background:#484848;"></div>
<div style="left:1728px;top:726px;width:115px;height:69px;background:#484848;"></div>
<div class="b" style="left:1654px;top:729.3px;width:70px;height:12.5px;text-align:left;"><span style="left:2px;top:0;color:#8a8a8a;">1</span><svg width="70" height="11" style="left:0;top:0"><path d="M59.2 3h6.8l-3.4 4.9z" fill="#8a8a8a"/></svg></div>
<div class="b bd" style="left:1654px;top:746.2px;width:17px;height:12.5px;">In</div><div class="b bd" style="left:1674.2px;top:746.2px;width:26.8px;height:12.5px;">Auto</div><div class="b" style="left:1704.2px;top:746.2px;width:19.8px;height:12.5px;background:#8c8c8c;color:#3a3a3a;">Off</div>
<div class="b" style="left:1654px;top:763.1px;width:70px;height:12.5px;text-align:left;"><span style="left:2px;top:0;color:#e8e8e8;">Master</span><svg width="70" height="11" style="left:0;top:0"><path d="M59.2 3h6.8l-3.4 4.9z" fill="#e8e8e8"/></svg></div>
<div class="b" style="left:1654px;top:780px;width:70px;height:12.5px;background:#484848;"></div>
<div class="b" style="left:1731.3px;top:728px;width:45.3px;height:12.3px;background:#fa8c30;color:#1a1a1a;border-color:#3a3a3a;">8</div>
<div class="b" style="left:1781px;top:728px;width:21px;height:12.3px;">S</div>
<div class="b" style="left:1806px;top:728px;width:21px;height:12.3px;"><svg width="19" height="11" style="left:0;top:0"><circle cx="9.5" cy="5.2" r="3.3" fill="#7c7c7c"/></svg></div>
<div class="b" style="left:1731.3px;top:745px;width:45.3px;height:12.5px;"><div style="left:0;top:0;width:23.35px;height:11px;background:#0a6c80"></div><span style="left:0;top:0;width:43.3px;text-align:center">-11.0</span></div>
<div class="b" style="left:1781px;top:745px;width:46px;height:12.5px;">C</div>
<div class="b" style="left:1731.3px;top:762px;width:29.4px;height:12.5px;">-inf</div>
<div class="b" style="left:1764.3px;top:762px;width:29.4px;height:12.5px;">-inf</div>
<div style="left:1833px;top:726px;width:3.2px;height:69px;background:#191919;"></div>
<div style="left:1837.2px;top:726px;width:3.2px;height:69px;background:#191919;"></div>
<div style="left:1833px;top:734px;width:7.5px;height:1px;background:#484848;"></div>
<div style="left:1464px;top:797px;width:186px;height:69px;background:#14b828;"><svg width="14" height="14" style="left:2.8px;top:1.9px"><circle cx="6.6" cy="6.6" r="5.9" fill="none" stroke="rgba(0,0,0,0.78)" stroke-width="1"/><path d="M3.3 4.9h6.6l-3.3 4.6z" fill="rgba(0,0,0,0.78)"/></svg><span class="tn" style="left:23px;top:3.5px;color:rgba(0,0,0,0.78)">9 Riser</span></div>
<div style="left:1652px;top:797px;width:74px;height:69px;background:#484848;"></div>
<div style="left:1728px;top:797px;width:115px;height:69px;background:#484848;"></div>
<div class="b" style="left:1654px;top:800.3px;width:70px;height:12.5px;text-align:left;"><span style="left:2px;top:0;color:#8a8a8a;">1</span><svg width="70" height="11" style="left:0;top:0"><path d="M59.2 3h6.8l-3.4 4.9z" fill="#8a8a8a"/></svg></div>
<div class="b bd" style="left:1654px;top:817.2px;width:17px;height:12.5px;">In</div><div class="b bd" style="left:1674.2px;top:817.2px;width:26.8px;height:12.5px;">Auto</div><div class="b" style="left:1704.2px;top:817.2px;width:19.8px;height:12.5px;background:#8c8c8c;color:#3a3a3a;">Off</div>
<div class="b" style="left:1654px;top:834.1px;width:70px;height:12.5px;text-align:left;"><span style="left:2px;top:0;color:#e8e8e8;">Master</span><svg width="70" height="11" style="left:0;top:0"><path d="M59.2 3h6.8l-3.4 4.9z" fill="#e8e8e8"/></svg></div>
<div class="b" style="left:1654px;top:851px;width:70px;height:12.5px;background:#484848;"></div>
<div class="b" style="left:1731.3px;top:799px;width:45.3px;height:12.3px;background:#fa8c30;color:#1a1a1a;border-color:#3a3a3a;">9</div>
<div class="b" style="left:1781px;top:799px;width:21px;height:12.3px;">S</div>
<div class="b" style="left:1806px;top:799px;width:21px;height:12.3px;"><svg width="19" height="11" style="left:0;top:0"><circle cx="9.5" cy="5.2" r="3.3" fill="#7c7c7c"/></svg></div>
<div class="b" style="left:1731.3px;top:816px;width:45.3px;height:12.5px;"><div style="left:0;top:0;width:31.18px;height:11px;background:#0a6c80"></div><span style="left:0;top:0;width:43.3px;text-align:center">-5.2</span><div style="left:-0.5px;top:-0.5px;width:5px;height:5px;border-radius:50%;background:#ff3b3b"></div></div>
<div class="b" style="left:1781px;top:816px;width:46px;height:12.5px;">C</div>
<div class="b" style="left:1731.3px;top:833px;width:29.4px;height:12.5px;"><div style="left:0;top:0;width:23px;height:11px;background:#0a6c80"></div><span style="left:0;top:0;width:27.4px;text-align:center">-5.7</span><div style="left:-0.5px;top:-0.5px;width:5px;height:5px;border-radius:50%;background:#ff3b3b"></div></div>
<div class="b" style="left:1764.3px;top:833px;width:29.4px;height:12.5px;">-inf</div>
<div style="left:1833px;top:797px;width:3.2px;height:69px;background:#191919;"></div>
<div style="left:1837.2px;top:797px;width:3.2px;height:69px;background:#191919;"></div>
<div style="left:1833px;top:805px;width:7.5px;height:1px;background:#484848;"></div>
<div style="left:1464px;top:868px;width:186px;height:69px;background:#00ff41;"><svg width="14" height="14" style="left:2.8px;top:1.9px"><circle cx="6.6" cy="6.6" r="5.9" fill="none" stroke="rgba(0,0,0,0.78)" stroke-width="1"/><path d="M3.3 4.9h6.6l-3.3 4.6z" fill="rgba(0,0,0,0.78)"/></svg><span class="tn" style="left:23px;top:3.5px;color:rgba(0,0,0,0.78)">10 Snare</span></div>
<div style="left:1652px;top:868px;width:74px;height:69px;background:#484848;"></div>
<div style="left:1728px;top:868px;width:115px;height:69px;background:#484848;"></div>
<div class="b" style="left:1654px;top:871.3px;width:70px;height:12.5px;text-align:left;"><span style="left:2px;top:0;color:#8a8a8a;">1</span><svg width="70" height="11" style="left:0;top:0"><path d="M59.2 3h6.8l-3.4 4.9z" fill="#8a8a8a"/></svg></div>
<div class="b bd" style="left:1654px;top:888.2px;width:17px;height:12.5px;">In</div><div class="b bd" style="left:1674.2px;top:888.2px;width:26.8px;height:12.5px;">Auto</div><div class="b" style="left:1704.2px;top:888.2px;width:19.8px;height:12.5px;background:#8c8c8c;color:#3a3a3a;">Off</div>
<div class="b" style="left:1654px;top:905.1px;width:70px;height:12.5px;text-align:left;"><span style="left:2px;top:0;color:#e8e8e8;">Master</span><svg width="70" height="11" style="left:0;top:0"><path d="M59.2 3h6.8l-3.4 4.9z" fill="#e8e8e8"/></svg></div>
<div class="b" style="left:1654px;top:922px;width:70px;height:12.5px;background:#484848;"></div>
<div class="b" style="left:1731.3px;top:870px;width:45.3px;height:12.3px;background:#fa8c30;color:#1a1a1a;border-color:#3a3a3a;">10</div>
<div class="b" style="left:1781px;top:870px;width:21px;height:12.3px;">S</div>
<div class="b" style="left:1806px;top:870px;width:21px;height:12.3px;"><svg width="19" height="11" style="left:0;top:0"><circle cx="9.5" cy="5.2" r="3.3" fill="#7c7c7c"/></svg></div>
<div class="b" style="left:1731.3px;top:887px;width:45.3px;height:12.5px;"><div style="left:0;top:0;width:26.455px;height:11px;background:#0a6c80"></div><span style="left:0;top:0;width:43.3px;text-align:center">-8.7</span></div>
<div class="b" style="left:1781px;top:887px;width:46px;height:12.5px;">C</div>
<div class="b" style="left:1731.3px;top:904px;width:29.4px;height:12.5px;">-inf</div>
<div class="b" style="left:1764.3px;top:904px;width:29.4px;height:12.5px;">-inf</div>
<div style="left:1833px;top:868px;width:3.2px;height:69px;background:#191919;"></div>
<div style="left:1837.2px;top:868px;width:3.2px;height:69px;background:#191919;"></div>
<div style="left:1833px;top:876px;width:7.5px;height:1px;background:#484848;"></div>
<div style="left:1464px;top:939.2px;width:379px;height:3.6px;background:#484848;"></div>
<div style="left:1464px;top:946px;width:186px;height:17px;background:#8ba0ff;"><svg width="14" height="14" style="left:2.8px;top:1.9px"><circle cx="6.6" cy="6.6" r="5.9" fill="none" stroke="rgba(0,0,0,0.72)" stroke-width="1"/><path d="M5 3.6v6l5-3z" fill="rgba(0,0,0,0.72)"/></svg><span class="tn" style="left:23px;top:3px;color:rgba(0,0,0,0.72);font-size:10.5px">A Reverb</span></div>
<div style="left:1652px;top:946px;width:74px;height:17px;background:#484848;"></div>
<div style="left:1728px;top:946px;width:115px;height:17px;background:#484848;"></div>
<div class="b" style="left:1654px;top:948px;width:70px;height:12px;background:#484848;"></div>
<div class="b" style="left:1731.3px;top:948px;width:45.3px;height:12px;background:#fa8c30;color:#1a1a1a;border-color:#3a3a3a;">A</div>
<div class="b" style="left:1781px;top:948px;width:17px;height:12px;">S</div>
<div class="b" style="left:1802px;top:948px;width:25px;height:12px;background:#fa8c30;color:#1a1a1a;">Post</div>
<div style="left:1833px;top:946px;width:3.2px;height:17px;background:#191919;"></div>
<div style="left:1837.2px;top:946px;width:3.2px;height:17px;background:#191919;"></div>
<div style="left:1464px;top:965px;width:186px;height:17px;background:#1fffe5;"><svg width="14" height="14" style="left:2.8px;top:1.9px"><circle cx="6.6" cy="6.6" r="5.9" fill="none" stroke="rgba(0,0,0,0.72)" stroke-width="1"/><path d="M5 3.6v6l5-3z" fill="rgba(0,0,0,0.72)"/></svg><span class="tn" style="left:23px;top:3px;color:rgba(0,0,0,0.72);font-size:10.5px">B Delay</span></div>
<div style="left:1652px;top:965px;width:74px;height:17px;background:#484848;"></div>
<div style="left:1728px;top:965px;width:115px;height:17px;background:#484848;"></div>
<div class="b" style="left:1654px;top:967px;width:70px;height:12px;background:#484848;"></div>
<div class="b" style="left:1731.3px;top:967px;width:45.3px;height:12px;background:#fa8c30;color:#1a1a1a;border-color:#3a3a3a;">B</div>
<div class="b" style="left:1781px;top:967px;width:17px;height:12px;">S</div>
<div class="b" style="left:1802px;top:967px;width:25px;height:12px;background:#fa8c30;color:#1a1a1a;">Post</div>
<div style="left:1833px;top:965px;width:3.2px;height:17px;background:#191919;"></div>
<div style="left:1837.2px;top:965px;width:3.2px;height:17px;background:#191919;"></div>
<div style="left:1464px;top:984px;width:186px;height:17px;background:#4478e0;"><svg width="14" height="14" style="left:2.8px;top:1.9px"><circle cx="6.6" cy="6.6" r="5.9" fill="none" stroke="rgba(0,0,0,0.72)" stroke-width="1"/><path d="M5 3.6v6l5-3z" fill="rgba(0,0,0,0.72)"/></svg><span class="tn" style="left:25.5px;top:3px;color:rgba(0,0,0,0.72);font-size:10.5px">Master</span></div>
<div style="left:1652px;top:984px;width:74px;height:17px;background:#484848;"></div>
<div style="left:1728px;top:984px;width:115px;height:17px;background:#484848;"></div>
<div class="b" style="left:1654px;top:986.2px;width:70px;height:12.5px;text-align:left;"><span style="left:10px;top:0;color:#e8e8e8;font-size:10.2px;letter-spacing:-0.45px;">1/2</span><div style="right:0;top:0;width:10px;height:11px;background:#2b2b2b"></div><svg width="70" height="11" style="left:0;top:0"><path d="M59.2 3h6.8l-3.4 4.9z" fill="#e8e8e8"/><rect x="2.6" y="1.4" width="1.7" height="1.7" fill="#191919"/><rect x="2.6" y="4.5" width="1.7" height="1.7" fill="#191919"/><rect x="2.6" y="7.6" width="1.7" height="1.7" fill="#191919"/></svg></div>
<div class="b" style="left:1731.3px;top:986px;width:45.3px;height:12.5px;"><div style="left:0;top:0;width:37.5px;height:11px;background:#0a6c80"></div><span style="left:0;top:0;width:43.3px;text-align:center">0</span></div>
<div class="b" style="left:1781.5px;top:986px;width:45.3px;height:12.5px;"><div style="left:0;top:0;width:37px;height:11px;background:#0a6fd0"></div><span style="left:0;top:0;width:43.3px;text-align:center">0</span></div>
<div style="left:1833px;top:984px;width:3.2px;height:17px;background:#191919;"></div>
<div style="left:1837.2px;top:984px;width:3.2px;height:17px;background:#191919;"></div>
<div style="left:1467.3px;top:112.2px;width:28px;height:11px;background:#2e2e2e;border-radius:5.5px;text-align:center;font-weight:bold;font-size:10px;line-height:11px;color:#ececec">Set</div>
<svg width="100" height="14" style="left:1465px;top:126px"><circle cx="7.4" cy="6.7" r="5.6" fill="#2e2e2e"/><circle cx="24.5" cy="6.7" r="5.6" fill="#2e2e2e"/><path d="M5 6.7h6" stroke="#f0f0f0" stroke-width="1.2"/><path d="M7.4 4L3.6 6.7l3.8 2.7z" fill="#f0f0f0"/><path d="M21 6.7h6" stroke="#f0f0f0" stroke-width="1.2"/><path d="M24.6 4l3.8 2.7-3.8 2.7z" fill="#f0f0f0"/><rect x="42.7" y="1" width="21.6" height="11.3" fill="#2e2e2e"/><path d="M52 8.4l3.2-3.2" stroke="#f0f0f0" stroke-width="1.2"/><circle cx="51.5" cy="8.9" r="1.5" fill="#f0f0f0"/><circle cx="55.8" cy="4.6" r="1.5" fill="#f0f0f0"/><rect x="69.7" y="1" width="21.7" height="11.3" fill="#2e2e2e"/><rect x="77.3" y="5.6" width="6.6" height="4.4" fill="#f0f0f0"/><path d="M78.6 5.8V4.6a2 2 0 0 1 4 0v1.2" fill="none" stroke="#f0f0f0" stroke-width="1.1"/></svg>
<div style="left:1853px;top:121px;width:7px;height:755px;background:#3f3f3f;border-radius:3.5px;"></div>
<div style="left:1849.7px;top:921.5px;width:13.6px;height:13.6px;background:#fa8c30;border-radius:50%;text-align:center;font-size:7px;font-weight:bold;line-height:13.6px;color:#1a1a1a;letter-spacing:-0.3px">I·O</div>
<div style="left:1849.7px;top:940.6px;width:13.6px;height:13.6px;background:#fa8c30;border-radius:50%;text-align:center;font-size:7px;font-weight:bold;line-height:13.6px;color:#1a1a1a;letter-spacing:-0.3px">R</div>
<div style="left:1849.7px;top:959.5px;width:13.6px;height:13.6px;background:#fa8c30;border-radius:50%;text-align:center;font-size:7px;font-weight:bold;line-height:13.6px;color:#1a1a1a;letter-spacing:-0.3px">M</div>
<div style="left:1849.7px;top:978.4px;width:13.6px;height:13.6px;background:#8a8a8a;border-radius:50%;text-align:center;font-size:7px;font-weight:bold;line-height:13.6px;color:#1a1a1a;letter-spacing:-0.3px">D</div>
</body></html>
